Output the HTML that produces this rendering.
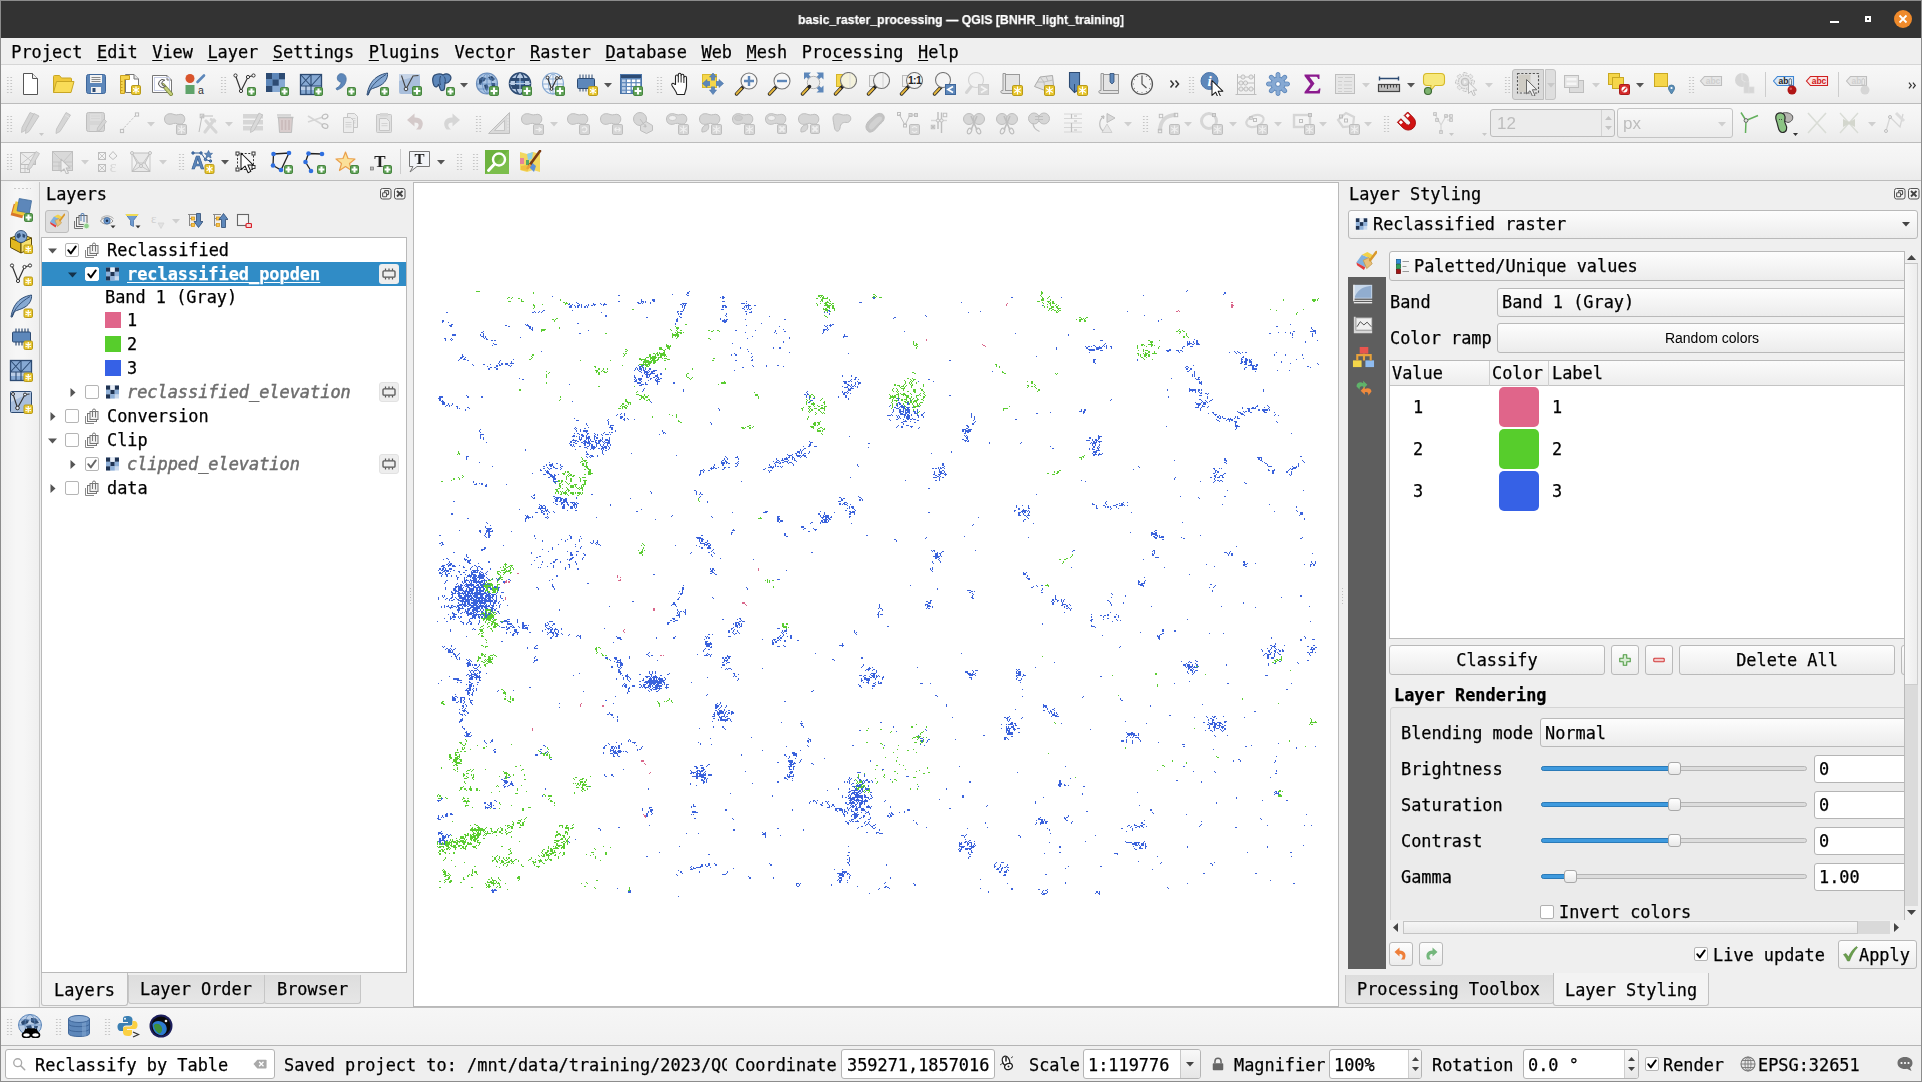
<!DOCTYPE html><html><head><meta charset="utf-8"><title>QGIS</title><style>
html,body{margin:0;padding:0}
body{width:1922px;height:1082px;position:relative;overflow:hidden;background:#efefef;font-family:"DejaVu Sans Mono","Liberation Mono",monospace;font-size:16.9px;-webkit-text-stroke:0.25px;color:#000}
div,svg.i{position:absolute;box-sizing:border-box}
.t{white-space:pre;will-change:transform}
.hv{width:7px;background-image:radial-gradient(circle,#c6c6c6 0.55px,transparent 0.85px);background-size:3.5px 3px}
.hh{height:6px;background-image:radial-gradient(circle,#cbcbcb 0.6px,transparent 0.9px);background-size:4px 3px}
svg text{-webkit-text-stroke:0}
u{text-decoration:underline;text-underline-offset:2px;text-decoration-thickness:1px}
.btn{border:1px solid #b9b9b9;border-radius:3px;background:linear-gradient(#fdfdfd,#ececec)}
.inp{border:1px solid #b4b4b4;border-radius:3px;background:#fff}
.cb{border:1px solid #b0b0b0;background:#fff;border-radius:2px}
</style></head><body><div style="left:0px;top:0px;width:1922px;height:1082px;background:#8c8c8c"></div>
<div style="left:1px;top:1px;width:1920px;height:1080px;background:#efefef"></div>
<div style="left:1px;top:1px;width:1920px;height:37px;background:#333333"></div>
<div class="t" style="left:561px;top:0.5px;height:37px;line-height:37px;width:800px;text-align:center;color:#fff;font-family:'Liberation Sans',sans-serif;font-weight:bold;font-size:13.6px;transform:scaleX(0.903)">basic_raster_processing — QGIS [BNHR_light_training]</div>
<div style="left:1830px;top:21px;width:9px;height:2px;background:#fff"></div>
<div style="left:1865px;top:16px;width:6px;height:6px;border:2px solid #fff"></div>
<div style="left:1894px;top:10px;width:18px;height:18px;background:#ef8a2b;border-radius:9px"></div>
<svg class="i" style="left:1898px;top:14px" width="10" height="10" viewBox="0 0 10 10"><path d="M1.5 1.5L8.5 8.5M8.5 1.5L1.5 8.5" stroke="#fff" stroke-width="1.8"/></svg>
<div style="left:1px;top:38px;width:1920px;height:27px;background:#efefef"></div>
<div style="left:1px;top:64px;width:1920px;height:1px;background:#d6d6d6"></div>
<div class="t" style="left:4.3px;top:38.5px;height:27px;line-height:26px"><span style="padding:0 7.28px">Pro<u>j</u>ect</span><span style="padding:0 7.28px"><u>E</u>dit</span><span style="padding:0 7.28px"><u>V</u>iew</span><span style="padding:0 7.28px"><u>L</u>ayer</span><span style="padding:0 7.28px"><u>S</u>ettings</span><span style="padding:0 7.28px"><u>P</u>lugins</span><span style="padding:0 7.28px">Vect<u>o</u>r</span><span style="padding:0 7.28px"><u>R</u>aster</span><span style="padding:0 7.28px"><u>D</u>atabase</span><span style="padding:0 7.28px"><u>W</u>eb</span><span style="padding:0 7.28px"><u>M</u>esh</span><span style="padding:0 7.28px">Pro<u>c</u>essing</span><span style="padding:0 7.28px"><u>H</u>elp</span></div>
<div style="left:1px;top:103px;width:1920px;height:1px;background:#bcbcbc"></div>
<div style="left:1px;top:142px;width:1920px;height:1px;background:#bcbcbc"></div>
<div style="left:1px;top:180px;width:1920px;height:1px;background:#bcbcbc"></div>
<div style="left:1px;top:65px;width:1920px;height:38px;background:linear-gradient(#f7f7f7,#f3f3f3 50%,#ebebeb)"></div>
<div style="left:1px;top:104px;width:1920px;height:38px;background:linear-gradient(#f7f7f7,#f3f3f3 50%,#ebebeb)"></div>
<div style="left:1px;top:143px;width:1920px;height:37px;background:linear-gradient(#f7f7f7,#f3f3f3 50%,#ebebeb)"></div>
<div class="hv" style="left:5.5px;top:75.5px;height:18px"></div>
<div class="hv" style="left:220px;top:75.5px;height:18px"></div>
<div class="hv" style="left:655.5px;top:75.5px;height:18px"></div>
<div class="hv" style="left:1187.5px;top:75.5px;height:18px"></div>
<div class="hv" style="left:1503.5px;top:75.5px;height:18px"></div>
<div class="hv" style="left:1687.5px;top:75.5px;height:18px"></div>
<svg class="i" style="left:18.0px;top:72.0px;" width="24" height="24" viewBox="0 0 24 24"><path d="M5.5 1.5H14.5L19.5 6.5V22.5H5.5Z" fill="#fff" stroke="#555" stroke-width="1"/><path d="M14.5 1.5V6.5H19.5" fill="#eee" stroke="#555" stroke-width="1"/></svg>
<svg class="i" style="left:51.0px;top:72.0px;" width="24" height="24" viewBox="0 0 24 24"><path d="M2.5 20.5V4.5Q2.5 3.5 3.5 3.5H8.5L10.5 6H19.5Q20.5 6 20.5 7V9" fill="#f0c93a" stroke="#c8a624"/><path d="M2.5 20.5L5.5 9.5H23L20 20.5Z" fill="#f9dc58" stroke="#c8a624" stroke-linejoin="round"/></svg>
<svg class="i" style="left:84.0px;top:72.0px;" width="24" height="24" viewBox="0 0 24 24"><rect x="2.5" y="2.5" width="19" height="19" rx="2" fill="#5d87ba" stroke="#3f679b"/><rect x="6" y="3" width="12" height="8" fill="#f2f2f2"/><path d="M7.5 5.5H16.5M7.5 7.5H16.5M7.5 9.5H16.5" stroke="#8a8a8a" stroke-width="1"/><rect x="7" y="15" width="10" height="6" fill="#f2f2f2"/><rect x="8.5" y="16" width="3" height="4" fill="#2d4b73"/></svg>
<svg class="i" style="left:117.0px;top:72.0px;" width="24" height="24" viewBox="0 0 24 24"><path d="M8.5 2.5H17L21.5 7V20.5H8.5Z" fill="#fff" stroke="#777"/><path d="M17 2.5V7H21.5" fill="#e8e8e8" stroke="#777"/><path d="M3.5 3.5H12.5V7.5H7.5V21.5H3.5Z" fill="#f5d34a" stroke="#c8a020"/><path d="M3.5 9.5H5.5M3.5 12.5H5.5M3.5 15.5H5.5M3.5 18.5H5.5" stroke="#c8a020"/><rect x="14.5" y="13.5" width="9" height="9" rx="1.3" fill="#e8c62c" stroke="#b89a1c"/><path d="M19.0 14.6V21.4M16.042 16.3L21.958 19.7M16.042 19.7L21.958 16.3" stroke="#fff" stroke-width="1.2"/></svg>
<svg class="i" style="left:150.0px;top:72.0px;" width="24" height="24" viewBox="0 0 24 24"><path d="M2.5 3.5H17L21.5 8V20.5H2.5Z" fill="#fff" stroke="#777"/><path d="M17 3.5V8H21.5" fill="#e8e8e8" stroke="#777"/><rect x="4.500" y="5.500" width="15" height="13" fill="none" stroke="#c9cfe6"/><path d="M13 13L21 22" stroke="#7d8a3c" stroke-width="4" stroke-linecap="round"/><path d="M13 13L21 22" stroke="#c5cf7a" stroke-width="2.4" stroke-linecap="round"/><path d="M14.8 8.2A4 4 0 1 0 15.5 14.3L12.8 13.6L11.6 11.2L13.4 8.6Z" fill="#f4f4f4" stroke="#555" stroke-width="1"/></svg>
<svg class="i" style="left:183.0px;top:72.0px;" width="24" height="24" viewBox="0 0 24 24"><circle cx="7" cy="6.5" r="4.5" fill="#d9542c"/><path d="M14.5 10L21 3.5" stroke="#5d87ba" stroke-width="2.6" stroke-linecap="round"/><rect x="2.5" y="13" width="9" height="9" fill="#5fa36a"/><text x="15" y="21.5" font-family="Liberation Sans,sans-serif" font-size="10.5" fill="#333">a</text></svg>
<svg class="i" style="left:232.0px;top:72.0px;" width="24" height="24" viewBox="0 0 24 24"><path d="M3.5 3.5L9 19L16 5L21.500 3.500" fill="none" stroke="#333" stroke-width="1.2"/><circle cx="3.5" cy="3.5" r="1.6" fill="#fff" stroke="#333" stroke-width="1"/><circle cx="9" cy="19" r="1.6" fill="#fff" stroke="#333" stroke-width="1"/><circle cx="16" cy="5" r="1.6" fill="#fff" stroke="#333" stroke-width="1"/><circle cx="21.5" cy="3.5" r="1.6" fill="#fff" stroke="#333" stroke-width="1"/><rect x="15.5" y="15.5" width="8" height="8" rx="1.3" fill="#5fa257" stroke="#47853f"/><path d="M19.5 16.6V22.4M16.6 19.5H22.4" stroke="#fff" stroke-width="2.1"/></svg>
<svg class="i" style="left:265.0px;top:72.0px;" width="24" height="24" viewBox="0 0 24 24"><rect x="1" y="1" width="19" height="19" fill="#86a9d3"/><rect x="1" y="1" width="6.300" height="6.300" fill="#2d4b73"/><rect x="13.700" y="1" width="6.300" height="6.300" fill="#2d4b73"/><rect x="7.300" y="7.300" width="6.400" height="6.400" fill="#2d4b73"/><rect x="1" y="13.700" width="6.300" height="6.300" fill="#2d4b73"/><rect x="7.300" y="1" width="6.400" height="6.300" fill="#5d87ba"/><rect x="1" y="7.300" width="6.300" height="6.400" fill="#5d87ba"/><rect x="15.5" y="15.5" width="8" height="8" rx="1.3" fill="#5fa257" stroke="#47853f"/><path d="M19.5 16.6V22.4M16.6 19.5H22.4" stroke="#fff" stroke-width="2.1"/></svg>
<svg class="i" style="left:298.5px;top:72.0px;" width="24" height="24" viewBox="0 0 24 24"><rect x="1.500" y="2.500" width="21" height="20" fill="#86a9d3" stroke="#2d4b73" stroke-width="1.3"/><rect x="2" y="14" width="20" height="4" fill="#b9cde6"/><path d="M12 2.500V22.500M1.500 14H22.500M7 14V22.500M1.500 2.500L12 14M12 2.500L1.500 14M22.500 2.500L12 14" stroke="#2d4b73" stroke-width="1.1" fill="none"/><rect x="15.5" y="15.5" width="8" height="8" rx="1.3" fill="#5fa257" stroke="#47853f"/><path d="M19.5 16.6V22.4M16.6 19.5H22.4" stroke="#fff" stroke-width="2.1"/></svg>
<svg class="i" style="left:331.5px;top:72.0px;" width="24" height="24" viewBox="0 0 24 24"><path d="M7.500 2C12 0.500 15 4 14 9C13 13.500 9.500 16.500 5 18L4 16.500C7.500 14.500 9 12.500 9.200 10C5.500 10.500 3.500 4.500 7.500 2Z" fill="#5d87ba" stroke="#46709f" stroke-width=".8"/><rect x="15.5" y="15.5" width="8" height="8" rx="1.3" fill="#5fa257" stroke="#47853f"/><path d="M19.5 16.6V22.4M16.6 19.5H22.4" stroke="#fff" stroke-width="2.1"/></svg>
<svg class="i" style="left:364.5px;top:72.0px;" width="24" height="24" viewBox="0 0 24 24"><path d="M2 23C3 16 6 9 12 5C16 2.300 20 1.500 22.500 1C23 5 21 10 16 13C12 15.500 8 16 5.500 17.500L3.200 23Z" fill="#86a9d3" stroke="#2d4b73" stroke-width="1"/><path d="M3 22C6 14 12 8 21 2.500" fill="none" stroke="#2d4b73" stroke-width=".9"/><rect x="15.5" y="15.5" width="8" height="8" rx="1.3" fill="#5fa257" stroke="#47853f"/><path d="M19.5 16.6V22.4M16.6 19.5H22.4" stroke="#fff" stroke-width="2.1"/></svg>
<svg class="i" style="left:397.5px;top:72.0px;" width="24" height="24" viewBox="0 0 24 24"><rect x="1" y="2" width="21" height="20" rx="2" fill="#a9bfdc"/><path d="M1 9L22 3V2H1Z" fill="#c7d5e8"/><path d="M3.500 3.500L8 17L15 4L20.500 3.500" fill="none" stroke="#444" stroke-width="1.1"/><circle cx="8" cy="17" r="1.8" fill="#dfe7f2" stroke="#444" stroke-width="1"/><rect x="14.5" y="14.5" width="9" height="9" rx="1.3" fill="#5fa257" stroke="#47853f"/><path d="M19.0 15.6V22.4M15.6 19.0H22.4" stroke="#fff" stroke-width="2.1"/></svg>
<svg class="i" style="left:430.5px;top:72.0px;" width="24" height="24" viewBox="0 0 24 24"><path d="M5 2.500C1 3.500 1 9 3 13.500C4.500 16 7 15 7.500 12L9 16.500C9.500 19.500 13.500 19 13.500 16L14 11C18 12 22 6 18.500 3C16 1 13.500 2 12 3C10 1.500 7 1.700 5 2.500Z" fill="#5d87ba" stroke="#2d4b73" stroke-width="1.200"/><path d="M9.500 4C8.500 7 8.500 10 9.500 13M13 4.500C14.500 6 14.500 9 14 11" fill="none" stroke="#2d4b73" stroke-width="1"/><rect x="15.5" y="15.5" width="8" height="8" rx="1.3" fill="#5fa257" stroke="#47853f"/><path d="M19.5 16.6V22.4M16.6 19.5H22.4" stroke="#fff" stroke-width="2.1"/></svg>
<svg class="i" style="left:474.5px;top:72.0px;" width="24" height="24" viewBox="0 0 24 24"><circle cx="12" cy="11.500" r="10.500" fill="#a9c4e4" stroke="#6d8fbc" stroke-width="1.200"/><path d="M4 7L7 5L11 6L9.500 9L7 10L6 13L4 12ZM13 5L17 4L20 7L18 9L15 8ZM9 13L12 12L13.500 15L12 19L10 17ZM16 11L20 11L20.500 15L17.500 16Z" fill="#2d4b73"/><ellipse cx="12" cy="11.5" rx="4.5" ry="10" fill="none" stroke="#5d87ba" stroke-width="0.7"/><path d="M2 12H22M3.5 7H20.5M3.5 17H20.5M12 2V22" stroke="#5d87ba" stroke-width="0.7" fill="none"/><rect x="14.5" y="14.5" width="9" height="9" rx="1.3" fill="#5fa257" stroke="#47853f"/><path d="M19.0 15.6V22.4M15.6 19.0H22.4" stroke="#fff" stroke-width="2.1"/></svg>
<svg class="i" style="left:507.5px;top:72.0px;" width="24" height="24" viewBox="0 0 24 24"><circle cx="12" cy="11.500" r="10.500" fill="#b9cde6" stroke="#2d4b73" stroke-width="1.600"/><path d="M3 6H21V9H2ZM2.500 13H21.500V17H4.500Z" fill="#2d4b73"/><path d="M8 9H16V13H8Z" fill="#5d87ba"/><ellipse cx="12" cy="11.500" rx="4.500" ry="10.500" fill="none" stroke="#2d4b73" stroke-width="1.300"/><path d="M12 1V22M1.500 11.500H22.500" stroke="#b9cde6" stroke-width="1"/><rect x="14.5" y="14.5" width="9" height="9" rx="1.3" fill="#5fa257" stroke="#47853f"/><path d="M19.0 15.6V22.4M15.6 19.0H22.4" stroke="#fff" stroke-width="2.1"/></svg>
<svg class="i" style="left:540.5px;top:72.0px;" width="24" height="24" viewBox="0 0 24 24"><circle cx="12" cy="11.500" r="10.500" fill="#eef3f9" stroke="#86a9d3" stroke-width="1.100"/><ellipse cx="12" cy="12" rx="4.5" ry="10" fill="none" stroke="#86a9d3" stroke-width="0.9"/><path d="M2 12H22M3.5 7H20.5M3.5 17H20.5M12 2V22" stroke="#86a9d3" stroke-width="0.9" fill="none"/><path d="M6.500 5.500L10.500 17L16 6L19.500 5.500" fill="none" stroke="#333" stroke-width="1.200"/><circle cx="6.5" cy="5.5" r="1.4" fill="#fff" stroke="#333" stroke-width="1"/><circle cx="10.5" cy="17" r="1.4" fill="#fff" stroke="#333" stroke-width="1"/><circle cx="16" cy="6" r="1.4" fill="#fff" stroke="#333" stroke-width="1"/><circle cx="19.5" cy="5.5" r="1.4" fill="#fff" stroke="#333" stroke-width="1"/><rect x="14.5" y="14.5" width="9" height="9" rx="1.3" fill="#5fa257" stroke="#47853f"/><path d="M19.0 15.6V22.4M15.6 19.0H22.4" stroke="#fff" stroke-width="2.1"/></svg>
<svg class="i" style="left:574.0px;top:72.0px;" width="24" height="24" viewBox="0 0 24 24"><path d="M6 2.500V6M9 2.500V6M12 2.500V6M15 2.500V6M18 2.500V6M6 16V19.500M9 16V19.500M12 16V19.500M15 16V19.500" stroke="#2d4b73" stroke-width="1"/><rect x="3.500" y="6.500" width="17" height="10" rx="1" fill="#5d87ba" stroke="#2d4b73"/><rect x="14.5" y="14.5" width="9" height="9" rx="1.3" fill="#e8c62c" stroke="#b89a1c"/><path d="M19.0 15.6V22.4M16.042 17.3L21.958 20.7M16.042 20.7L21.958 17.3" stroke="#fff" stroke-width="1.2"/></svg>
<svg class="i" style="left:619.0px;top:72.0px;" width="24" height="24" viewBox="0 0 24 24"><rect x="1.500" y="2.500" width="21" height="19" fill="#5d87ba" stroke="#4a74a8"/><path d="M2 3H22V6H2Z" fill="#2d4b73"/><g fill="#fff"><rect x="8" y="7.500" width="3.600" height="2.600"/><rect x="12.800" y="7.500" width="3.600" height="2.600"/><rect x="17.600" y="7.500" width="3.600" height="2.600"/><rect x="8" y="11.300" width="3.600" height="2.600"/><rect x="12.800" y="11.300" width="3.600" height="2.600"/><rect x="17.600" y="11.300" width="3.600" height="2.600"/><rect x="8" y="15.100" width="3.600" height="2.600"/><rect x="12.800" y="15.100" width="3.600" height="2.600"/><rect x="8" y="18.700" width="3.600" height="2.300"/></g><g fill="#b9cde6"><rect x="3" y="7.500" width="3.600" height="2.600"/><rect x="3" y="11.300" width="3.600" height="2.600"/><rect x="3" y="15.100" width="3.600" height="2.600"/><rect x="3" y="18.700" width="3.600" height="2.300"/></g><rect x="14.5" y="14.5" width="9" height="9" rx="1.3" fill="#5fa257" stroke="#47853f"/><path d="M19.0 15.6V22.4M15.6 19.0H22.4" stroke="#fff" stroke-width="2.1"/></svg>
<svg class="i" style="left:668.0px;top:72.0px;" width="24" height="24" viewBox="0 0 24 24"><path d="M7.500 12.500V4.500Q7.500 3 9 3Q10.300 3 10.300 4.500V2.800Q10.300 1.300 11.700 1.300Q13.100 1.300 13.100 2.800V3.500Q13.100 2.200 14.500 2.200Q15.900 2.200 15.900 3.800V5.500Q15.900 4.300 17.200 4.300Q18.500 4.300 18.500 5.800V14C18.500 18 17 19.500 16.500 22.500H9C8.500 19.500 6 17 4 13.500C3 11.500 5 10.500 6.300 12Z" fill="#fff" stroke="#222" stroke-width="1.100" stroke-linejoin="round"/><path d="M10.300 4.500V10.500M13.100 3.500V10.500M15.900 5.500V11" stroke="#222" stroke-width="1" fill="none"/></svg>
<svg class="i" style="left:701.0px;top:72.0px;" width="24" height="24" viewBox="0 0 24 24"><rect x="1.500" y="2.500" width="14" height="13" fill="#f5d64a" stroke="#d9b92e"/><path d="M12 1L15.500 5H13.500V9.500H18V7.500L22.500 11.500L18 15.500V13.500H13.500V18H15.500L12 22.500L8.500 18H10.500V13.500H6V15.500L1.500 11.500L6 7.500V9.500H10.500V5H8.500Z" fill="#5d87ba" stroke="#4a74a8" stroke-width=".6"/><rect x="9" y="8.500" width="6" height="6" fill="#f5d64a"/></svg>
<svg class="i" style="left:734.0px;top:72.0px;" width="24" height="24" viewBox="0 0 24 24"><path d="M9.5 14.5L2.5 22" stroke="#222" stroke-width="3.4" stroke-linecap="round"/><path d="M7.4 16.6L2.6 21.8" stroke="#e3b53c" stroke-width="2.1" stroke-linecap="round"/><circle cx="15" cy="9" r="8" fill="#f7f7f7" stroke="#777" stroke-width="1.1"/><path d="M15 4V14M10 9H20" stroke="#5d87ba" stroke-width="2.400"/></svg>
<svg class="i" style="left:767.0px;top:72.0px;" width="24" height="24" viewBox="0 0 24 24"><path d="M9.5 14.5L2.5 22" stroke="#222" stroke-width="3.4" stroke-linecap="round"/><path d="M7.4 16.6L2.6 21.8" stroke="#e3b53c" stroke-width="2.1" stroke-linecap="round"/><circle cx="15" cy="9" r="8" fill="#f7f7f7" stroke="#777" stroke-width="1.1"/><path d="M10 9H20" stroke="#5d87ba" stroke-width="2.400"/></svg>
<svg class="i" style="left:800.0px;top:72.0px;" width="24" height="24" viewBox="0 0 24 24"><path d="M4 0.500H11L8.700 2.800L11.500 5.600L9.100 8L6.300 5.200L4 7.500ZM23.500 0.500V7.500L21.200 5.200L18.400 8L16 5.600L18.800 2.800L16.500 0.500ZM23.500 20.500H16.500L18.800 18.200L16 15.400L18.400 13L21.200 15.800L23.500 13.500Z" fill="#5d87ba"/><circle cx="13.500" cy="10.500" r="6.200" fill="#ededed" stroke="#aaa" stroke-width=".9"/><path d="M9.5 14.5L2.5 22" stroke="#222" stroke-width="3.4" stroke-linecap="round"/><path d="M7.4 16.6L2.6 21.8" stroke="#e3b53c" stroke-width="2.1" stroke-linecap="round"/></svg>
<svg class="i" style="left:833.0px;top:72.0px;" width="24" height="24" viewBox="0 0 24 24"><rect x="3.500" y="2.500" width="9" height="12" fill="#f5d64a" stroke="#d4b42c"/><path d="M9.5 14.5L2.5 22" stroke="#222" stroke-width="3.4" stroke-linecap="round"/><path d="M7.4 16.6L2.6 21.8" stroke="#e3b53c" stroke-width="2.1" stroke-linecap="round"/><circle cx="15.5" cy="8.5" r="8" fill="#f4f2dc" stroke="#777" stroke-width="1.1"/><path d="M17 1.500V15.500" stroke="#ddd" stroke-width="1"/></svg>
<svg class="i" style="left:866.0px;top:72.0px;" width="24" height="24" viewBox="0 0 24 24"><rect x="3.500" y="3.500" width="9" height="11" fill="#f0f0f0" stroke="#bbb"/><path d="M9.5 14.5L2.5 22" stroke="#222" stroke-width="3.4" stroke-linecap="round"/><path d="M7.4 16.6L2.6 21.8" stroke="#e3b53c" stroke-width="2.1" stroke-linecap="round"/><circle cx="15.5" cy="8.5" r="8" fill="#f2f2f2" stroke="#777" stroke-width="1.1"/><path d="M17 1.500V15.500" stroke="#d2d2d2" stroke-width="1"/></svg>
<svg class="i" style="left:899.0px;top:72.0px;" width="24" height="24" viewBox="0 0 24 24"><rect x="3.500" y="3.500" width="9" height="11" fill="#f0f0f0" stroke="#bbb"/><path d="M9.5 14.5L2.5 22" stroke="#222" stroke-width="3.4" stroke-linecap="round"/><path d="M7.4 16.6L2.6 21.8" stroke="#e3b53c" stroke-width="2.1" stroke-linecap="round"/><circle cx="15.5" cy="8.5" r="8" fill="#f4f4f4" stroke="#777" stroke-width="1.1"/><text x="15.5" y="12.300" text-anchor="middle" font-family="Liberation Sans,sans-serif" font-weight="bold" font-size="10.500" fill="#222" letter-spacing="-.7">1:1</text></svg>
<svg class="i" style="left:932.0px;top:72.0px;" width="24" height="24" viewBox="0 0 24 24"><path d="M9.5 14.5L2.5 22" stroke="#222" stroke-width="3.4" stroke-linecap="round"/><path d="M7.4 16.6L2.6 21.8" stroke="#e3b53c" stroke-width="2.1" stroke-linecap="round"/><circle cx="11" cy="8" r="7.5" fill="#f4f4f4" stroke="#777" stroke-width="1.1"/><rect x="13.500" y="12.500" width="10" height="10" fill="#5d87ba" stroke="#3f679b"/><path d="M21 14.500L16 17.500L21 20.500" fill="none" stroke="#fff" stroke-width="1.800"/></svg>
<svg class="i" style="left:965.0px;top:72.0px;" width="24" height="24" viewBox="0 0 24 24"><path d="M7 13.500L1.500 20.500" stroke="#d4d4d4" stroke-width="3" stroke-linecap="round"/><circle cx="11" cy="8" r="7.500" fill="#f2f2f2" stroke="#d2d2d2" stroke-width="1.100"/><rect x="13.500" y="12.500" width="10" height="10" fill="#d6d6d6" stroke="#cdcdcd"/><path d="M16 14.500L21 17.500L16 20.500" fill="none" stroke="#f4f4f4" stroke-width="1.800"/></svg>
<svg class="i" style="left:999.5px;top:72.0px;" width="24" height="24" viewBox="0 0 24 24"><path d="M3 1.500H5.500V18.500H19.500V21.500H3Q0.800 21.500 0.800 19.500Q0.800 18.300 3 18.500Z" fill="#e2e2e2" stroke="#999" stroke-width="1"/><rect x="5.500" y="2.500" width="14" height="16" fill="#e4e4e4" stroke="#999"/><rect x="12.5" y="13.5" width="10" height="10" rx="1.3" fill="#e8c62c" stroke="#b89a1c"/><path d="M17.5 14.6V22.4M14.107 16.55L20.893 20.45M14.107 20.45L20.893 16.55" stroke="#fff" stroke-width="1.2"/></svg>
<svg class="i" style="left:1032.0px;top:72.0px;" width="24" height="24" viewBox="0 0 24 24"><path d="M2.500 14.500L8 5L20.500 3.500L21.500 13L13 18.500Z" fill="#e0e0e0" stroke="#aaa" stroke-width="1"/><path d="M8 5L12 10L21 8M12 10L13 18.500M5 10L12 10M14 4.500L16 9" fill="none" stroke="#b5b5b5" stroke-width=".8"/><rect x="12.5" y="13.5" width="10" height="10" rx="1.3" fill="#e8c62c" stroke="#b89a1c"/><path d="M17.5 14.6V22.4M14.107 16.55L20.893 20.45M14.107 20.45L20.893 16.55" stroke="#fff" stroke-width="1.2"/></svg>
<svg class="i" style="left:1065.0px;top:72.0px;" width="24" height="24" viewBox="0 0 24 24"><path d="M4.500 0.500H14.500V17L9.500 20.500L4.500 15Z" fill="#5d87ba" stroke="#2d4b73" stroke-width="1.100"/><path d="M9.500 20.500V12" stroke="#2d4b73" stroke-width="1"/><rect x="12.5" y="13.5" width="10" height="10" rx="1.3" fill="#e8c62c" stroke="#b89a1c"/><path d="M17.5 14.6V22.4M14.107 16.55L20.893 20.45M14.107 20.45L20.893 16.55" stroke="#fff" stroke-width="1.2"/></svg>
<svg class="i" style="left:1097.5px;top:72.0px;" width="24" height="24" viewBox="0 0 24 24"><path d="M3 1.500H5.500V18.500H20.500V21.500H3Q0.800 21.500 0.800 19.500Q0.800 18.300 3 18.500Z" fill="#e2e2e2" stroke="#999" stroke-width="1"/><rect x="5.500" y="2.500" width="15" height="16" fill="#e4e4e4" stroke="#999"/><path d="M12 1.500H16V10L14 12L12 10Z" fill="#5d87ba" stroke="#2d4b73" stroke-width=".8"/></svg>
<svg class="i" style="left:1130.0px;top:72.0px;" width="24" height="24" viewBox="0 0 24 24"><circle cx="12" cy="12" r="10.500" fill="#f4f4f4" stroke="#555" stroke-width="1.200"/><path d="M12 4V12L16.500 16" fill="none" stroke="#555" stroke-width="1.200"/><g stroke="#888" stroke-width="1"><path d="M12 2.500V4M12 20V21.500M2.500 12H4M20 12H21.500M7.200 3.800L7.900 5M16.800 3.800L16.100 5M3.800 7.200L5 7.900M20.200 7.200L19 7.900M3.800 16.800L5 16.100M20.200 16.800L19 16.100M7.200 20.200L7.900 19M16.800 20.200L16.100 19"/></g></svg>
<svg class="i" style="left:1162.5px;top:72.0px;" width="24" height="24" viewBox="0 0 24 24"><path d="M7.500 8.500L10.500 12L7.500 15.500M12.500 8.500L15.500 12L12.500 15.500" fill="none" stroke="#333" stroke-width="1.500"/></svg>
<svg class="i" style="left:1200.0px;top:72.0px;" width="24" height="24" viewBox="0 0 24 24"><circle cx="9.500" cy="9" r="8.500" fill="#5d87ba" stroke="#4a74a8"/><text x="9.500" y="14" text-anchor="middle" font-family="Liberation Serif,serif" font-style="italic" font-weight="bold" font-size="15" fill="#fff">i</text><g transform="translate(12,8.5) scale(1.3)"><path d="M0 0L0 11.5L2.8 9L4.9 13.6L6.8 12.7L4.7 8.2L8.3 8.2Z" fill="#fff" stroke="#111" stroke-width="0.77" stroke-linejoin="round"/></g></svg>
<svg class="i" style="left:1233.5px;top:72.0px;" width="24" height="24" viewBox="0 0 24 24"><path d="M3.500 2V22M20.500 2V22M1.500 22.500H22.500M3.500 5H20.500M3.500 11H20.500M3.500 17H20.500" stroke="#bebebe" fill="none"/><circle cx="9" cy="5" r="2.1" fill="#e9e9e9" stroke="#bebebe" stroke-width="1"/><circle cx="17" cy="5" r="2.1" fill="#e9e9e9" stroke="#bebebe" stroke-width="1"/><circle cx="7" cy="11" r="2.1" fill="#e9e9e9" stroke="#bebebe" stroke-width="1"/><circle cx="11.5" cy="11" r="2.1" fill="#e9e9e9" stroke="#bebebe" stroke-width="1"/><circle cx="7" cy="17" r="2.1" fill="#e9e9e9" stroke="#bebebe" stroke-width="1"/><circle cx="12" cy="17" r="2.1" fill="#e9e9e9" stroke="#bebebe" stroke-width="1"/><circle cx="17" cy="17" r="2.1" fill="#e9e9e9" stroke="#bebebe" stroke-width="1"/></svg>
<svg class="i" style="left:1266.0px;top:72.0px;" width="24" height="24" viewBox="0 0 24 24"><g transform="translate(12,12)"><g fill="#86a9d3" stroke="#5d87ba" stroke-width="1"><rect x="-1.900" y="-11.500" width="3.800" height="7" rx="1.800" transform="rotate(0)"/><rect x="-1.900" y="-11.500" width="3.800" height="7" rx="1.800" transform="rotate(45)"/><rect x="-1.900" y="-11.500" width="3.800" height="7" rx="1.800" transform="rotate(90)"/><rect x="-1.900" y="-11.500" width="3.800" height="7" rx="1.800" transform="rotate(135)"/><rect x="-1.900" y="-11.500" width="3.800" height="7" rx="1.800" transform="rotate(180)"/><rect x="-1.900" y="-11.500" width="3.800" height="7" rx="1.800" transform="rotate(225)"/><rect x="-1.900" y="-11.500" width="3.800" height="7" rx="1.800" transform="rotate(270)"/><rect x="-1.900" y="-11.500" width="3.800" height="7" rx="1.800" transform="rotate(315)"/></g><circle r="7" fill="#86a9d3" stroke="#5d87ba" stroke-width="1"/><rect x="-1.400" y="-10.800" width="2.800" height="6" rx="1.400" fill="#86a9d3" transform="rotate(0)"/><rect x="-1.400" y="-10.800" width="2.800" height="6" rx="1.400" fill="#86a9d3" transform="rotate(45)"/><rect x="-1.400" y="-10.800" width="2.800" height="6" rx="1.400" fill="#86a9d3" transform="rotate(90)"/><rect x="-1.400" y="-10.800" width="2.800" height="6" rx="1.400" fill="#86a9d3" transform="rotate(135)"/><rect x="-1.400" y="-10.800" width="2.800" height="6" rx="1.400" fill="#86a9d3" transform="rotate(180)"/><rect x="-1.400" y="-10.800" width="2.800" height="6" rx="1.400" fill="#86a9d3" transform="rotate(225)"/><rect x="-1.400" y="-10.800" width="2.800" height="6" rx="1.400" fill="#86a9d3" transform="rotate(270)"/><rect x="-1.400" y="-10.800" width="2.800" height="6" rx="1.400" fill="#86a9d3" transform="rotate(315)"/><circle r="2.400" fill="#fff" stroke="#5d87ba" stroke-width="1"/></g></svg>
<svg class="i" style="left:1299.5px;top:72.0px;" width="24" height="24" viewBox="0 0 24 24"><path d="M4.500 2.500H19.500V7H18C17.800 5.300 17 4.800 15.500 4.800H9.500L14.500 11.500L9 19H16C17.800 19 18.600 18.200 19 16.500H20.500L19.800 21.500H4.500V20L10.500 12L4.500 4Z" fill="#8b1a8e"/></svg>
<svg class="i" style="left:1332.5px;top:72.0px;" width="24" height="24" viewBox="0 0 24 24"><rect x="2.500" y="2.500" width="19" height="19" fill="#e6e6e6" stroke="#bebebe"/><path d="M5 5.500H10M12 5.500H19M5 9.500H9M11 9.500H19M5 13H9M11 13H19M5 16.500H9M11 16.500H19M5 19.500H9M11 19.500H19" stroke="#cfcfcf" stroke-width="1.200"/></svg>
<svg class="i" style="left:1377.0px;top:73.0px;" width="24" height="24" viewBox="0 0 24 24"><path d="M2 5.500H22M2.500 3.500V7.500M21.500 3.500V7.500" stroke="#2d4b73" stroke-width="1.400"/><rect x="1.500" y="11.500" width="21" height="7" fill="#bdbdbd" stroke="#444" stroke-width="1.200"/><path d="M4.500 12V14.500M7.500 12V14.500M10.500 12V16M13.500 12V14.500M16.500 12V14.500M19.500 12V14.500" stroke="#444" stroke-width="1"/></svg>
<svg class="i" style="left:1422.0px;top:72.0px;" width="24" height="24" viewBox="0 0 24 24"><path d="M5 1.500H19Q22.500 1.500 22.500 5V10Q22.500 13.500 19 13.500H13L8 19.500L9 13.500H5Q1.500 13.500 1.500 10V5Q1.500 1.500 5 1.500Z" fill="#f7e87c" stroke="#d6b928" stroke-width="1.100"/><circle cx="6" cy="19" r="3.500" fill="#7db36f" stroke="#3f6b35" stroke-width="1.200"/></svg>
<svg class="i" style="left:1455.0px;top:72.0px;" width="24" height="24" viewBox="0 0 24 24"><g transform="translate(10,10)"><rect x="-2" y="-9.500" width="4" height="5" rx="1" fill="#e9e9e9" stroke="#bebebe" stroke-width=".9" stroke-dasharray="1.500 1" transform="rotate(0)"/><rect x="-2" y="-9.500" width="4" height="5" rx="1" fill="#e9e9e9" stroke="#bebebe" stroke-width=".9" stroke-dasharray="1.500 1" transform="rotate(45)"/><rect x="-2" y="-9.500" width="4" height="5" rx="1" fill="#e9e9e9" stroke="#bebebe" stroke-width=".9" stroke-dasharray="1.500 1" transform="rotate(90)"/><rect x="-2" y="-9.500" width="4" height="5" rx="1" fill="#e9e9e9" stroke="#bebebe" stroke-width=".9" stroke-dasharray="1.500 1" transform="rotate(135)"/><rect x="-2" y="-9.500" width="4" height="5" rx="1" fill="#e9e9e9" stroke="#bebebe" stroke-width=".9" stroke-dasharray="1.500 1" transform="rotate(180)"/><rect x="-2" y="-9.500" width="4" height="5" rx="1" fill="#e9e9e9" stroke="#bebebe" stroke-width=".9" stroke-dasharray="1.500 1" transform="rotate(225)"/><rect x="-2" y="-9.500" width="4" height="5" rx="1" fill="#e9e9e9" stroke="#bebebe" stroke-width=".9" stroke-dasharray="1.500 1" transform="rotate(270)"/><rect x="-2" y="-9.500" width="4" height="5" rx="1" fill="#e9e9e9" stroke="#bebebe" stroke-width=".9" stroke-dasharray="1.500 1" transform="rotate(315)"/><circle r="6.500" fill="#e9e9e9" stroke="#bebebe" stroke-dasharray="1.500 1"/><circle r="3.800" fill="#d9d9d9" stroke="#bebebe"/><path d="M-1.200 -2L2 0L-1.200 2Z" fill="#f2f2f2"/></g><g transform="translate(13.5,10) scale(1)"><path d="M0 0L0 11.5L2.8 9L4.9 13.6L6.8 12.7L4.7 8.2L8.3 8.2Z" fill="#f2f2f2" stroke="#bebebe" stroke-width="1.0" stroke-linejoin="round"/></g></svg>
<svg class="i" style="left:459.5px;top:82.5px" width="8" height="5" viewBox="0 0 8 5"><path d="M0 0H8L4 4.5Z" fill="#555"/></svg>
<svg class="i" style="left:604px;top:82.5px" width="8" height="5" viewBox="0 0 8 5"><path d="M0 0H8L4 4.5Z" fill="#555"/></svg>
<svg class="i" style="left:1362px;top:82.5px" width="8" height="5" viewBox="0 0 8 5"><path d="M0 0H8L4 4.5Z" fill="#cfcfcf"/></svg>
<svg class="i" style="left:1407px;top:82.5px" width="8" height="5" viewBox="0 0 8 5"><path d="M0 0H8L4 4.5Z" fill="#555"/></svg>
<svg class="i" style="left:1485px;top:82.5px" width="8" height="5" viewBox="0 0 8 5"><path d="M0 0H8L4 4.5Z" fill="#cfcfcf"/></svg>
<div style="left:1512px;top:69px;width:32px;height:31px;border:1px solid #bdbdbd;border-radius:3px 0 0 3px;background:#dadada"></div>
<div style="left:1545px;top:69px;width:11px;height:31px;border:1px solid #c4c4c4;border-radius:0 3px 3px 0;background:#dedede"></div>
<svg class="i" style="left:1516.0px;top:72.0px;" width="24" height="24" viewBox="0 0 24 24"><rect x="1.500" y="1.500" width="21" height="19.500" fill="#e2e2e2" stroke="#555" stroke-width="1.100" stroke-dasharray="2.200 1.600"/><rect x="2.500" y="2.500" width="12" height="17.500" fill="#cfccc4"/><g transform="translate(10.5,7.5) scale(1.25)"><path d="M0 0L0 11.5L2.8 9L4.9 13.6L6.8 12.7L4.7 8.2L8.3 8.2Z" fill="#f0f0f0" stroke="#666" stroke-width="0.8" stroke-linejoin="round"/></g></svg>
<svg class="i" style="left:1546.5px;top:82.5px" width="8" height="5" viewBox="0 0 8 5"><path d="M0 0H8L4 4.5Z" fill="#c8c8c8"/></svg>
<svg class="i" style="left:1562.0px;top:72.0px;" width="24" height="24" viewBox="0 0 24 24"><rect x="7.500" y="8.500" width="14" height="12" fill="#dcdcdc" stroke="#bebebe"/><rect x="2.500" y="3.500" width="14" height="12" fill="#e4e4e4" stroke="#bebebe"/><rect x="4.500" y="6" width="10" height="2.500" fill="#f6f6f6"/><rect x="4.500" y="10.500" width="10" height="2.500" fill="#f6f6f6"/></svg>
<svg class="i" style="left:1592px;top:82.5px" width="8" height="5" viewBox="0 0 8 5"><path d="M0 0H8L4 4.5Z" fill="#cfcfcf"/></svg>
<svg class="i" style="left:1607.0px;top:72.0px;" width="24" height="24" viewBox="0 0 24 24"><rect x="1.500" y="1.500" width="11" height="11" fill="#f5d64a" stroke="#c9a822"/><rect x="5.500" y="5.500" width="11" height="11" fill="#f5d64a" stroke="#c9a822"/><rect x="12.500" y="12.500" width="10" height="10" rx="1" fill="#d42a2a" stroke="#a81c1c"/><circle cx="17.500" cy="17.500" r="3" fill="#fff"/><path d="M15.500 19.500L19.500 15.500" stroke="#d42a2a" stroke-width="1.300"/></svg>
<svg class="i" style="left:1636px;top:82.5px" width="8" height="5" viewBox="0 0 8 5"><path d="M0 0H8L4 4.5Z" fill="#555"/></svg>
<svg class="i" style="left:1652.0px;top:72.0px;" width="24" height="24" viewBox="0 0 24 24"><rect x="2.500" y="1.500" width="13" height="13" fill="#f5d64a" stroke="#c9a822"/><path d="M19.500 22C17 18.500 16.500 17.500 16.500 16A3 3 0 0 1 22.500 16C22.500 17.500 22 18.500 19.500 22Z" fill="#5b8fb8" stroke="#3e6e96" stroke-width=".8"/><circle cx="19.500" cy="16" r="1.100" fill="#fff"/></svg>
<svg class="i" style="left:1699.0px;top:72.0px;" width="24" height="24" viewBox="0 0 24 24"><path d="M5.5 4.500H22.500V13.500H5.5L1.5 9Z" fill="#e6e6e6" stroke="#bebebe" stroke-width="1.100"/><text x="14" y="12" text-anchor="middle" font-family="Liberation Sans,sans-serif" font-weight="bold" font-size="8.500" fill="#cfcfcf">abc</text></svg>
<svg class="i" style="left:1733.0px;top:72.0px;" width="24" height="24" viewBox="0 0 24 24"><circle cx="9" cy="8" r="7" fill="#d6d6d6"/><path d="M9 8V1M9 8L15 11.500" stroke="#e6e6e6" stroke-width="1"/><rect x="11" y="10" width="5" height="11" fill="#d6d6d6" stroke="#dcdcdc" stroke-width=".7"/><rect x="16" y="15" width="5" height="6" fill="#d6d6d6" stroke="#dcdcdc" stroke-width=".7"/></svg>
<div style="left:1765px;top:72px;width:1px;height:25px;background:#cdcdcd"></div>
<svg class="i" style="left:1773.0px;top:72.0px;" width="24" height="24" viewBox="0 0 24 24"><path d="M4.5 4.500H20.500V13.500H4.5L0.5 9Z" fill="#dbe8f7" stroke="#3f86d2" stroke-width="1.100"/><text x="10.5" y="12" text-anchor="middle" font-family="Liberation Sans,sans-serif" font-weight="bold" font-size="8.500" fill="#222">ab</text><path d="M16 8.500Q16 6.500 17.200 6.500Q18.400 6.500 18.400 8.500V13H16Z" fill="#fff" stroke="#345" stroke-width=".8"/><circle cx="19" cy="18" r="4.500" fill="#b01515"/><circle cx="17.800" cy="16.800" r="1.300" fill="#d85a5a"/></svg>
<svg class="i" style="left:1804.5px;top:72.0px;" width="24" height="24" viewBox="0 0 24 24"><path d="M5.5 4.500H22.500V13.500H5.5L1.5 9Z" fill="#fbe4e4" stroke="#cf2020" stroke-width="1.100"/><text x="14" y="12" text-anchor="middle" font-family="Liberation Sans,sans-serif" font-weight="bold" font-size="8.500" fill="#cf2020">abc</text></svg>
<div style="left:1838px;top:72px;width:1px;height:25px;background:#cdcdcd"></div>
<svg class="i" style="left:1846.0px;top:72.0px;" width="24" height="24" viewBox="0 0 24 24"><path d="M4.5 4.500H20.500V13.500H4.5L0.5 9Z" fill="#e6e6e6" stroke="#bebebe" stroke-width="1.100"/><text x="10.5" y="12" text-anchor="middle" font-family="Liberation Sans,sans-serif" font-weight="bold" font-size="8.500" fill="#cfcfcf">ab</text><circle cx="19" cy="18" r="4.500" fill="#d6d6d6"/><path d="M16 8.500Q16 6.500 17.200 6.500Q18.400 6.500 18.400 8.500V13H16Z" fill="#f0f0f0" stroke="#bebebe" stroke-width=".8"/></svg>
<svg class="i" style="left:1903.0px;top:75.5px;" width="19" height="19" viewBox="0 0 24 24"><path d="M7.500 8.500L10.500 12L7.500 15.500M12.500 8.500L15.500 12L12.500 15.500" fill="none" stroke="#333" stroke-width="1.500"/></svg>
<div class="hv" style="left:5.5px;top:114.5px;height:18px"></div>
<div class="hv" style="left:474.5px;top:114.5px;height:18px"></div>
<div class="hv" style="left:1141.5px;top:114.5px;height:18px"></div>
<div class="hv" style="left:1382.5px;top:114.5px;height:18px"></div>
<svg class="i" style="left:18.0px;top:111.0px;" width="24" height="24" viewBox="0 0 24 24"><path d="M12 1.500L17 3.500L8 19L3.500 21.500L4 16.500Z" fill="#d4d4d4" stroke="#bebebe" stroke-width=".8"/><path d="M16 2.500L21 5L11 20.500L7.500 22.500L8 17.500Z" fill="#d6d6d6" stroke="#bebebe" stroke-width=".8"/></svg>
<svg class="i" style="left:51.0px;top:111.0px;" width="24" height="24" viewBox="0 0 24 24"><path d="M15 1.500L19.500 4L9 20.500L5 22.500L5.500 18Z" fill="#d6d6d6" stroke="#bebebe" stroke-width=".8"/><path d="M14 4L18 6.500" stroke="#e2e2e2"/></svg>
<svg class="i" style="left:84.0px;top:111.0px;" width="24" height="24" viewBox="0 0 24 24"><rect x="2.500" y="1.500" width="18" height="19" rx="2" fill="#d6d6d6" stroke="#bebebe"/><rect x="6" y="3" width="11" height="7" fill="#dedede"/><path d="M7 5H16M7 7.500H16" stroke="#d6d6d6"/><rect x="6" y="14" width="9" height="6" fill="#dedede"/><path d="M20 8L22.500 10.500L16 19L13 20.500L13.500 17Z" fill="#d6d6d6" stroke="#bebebe" stroke-width=".8"/></svg>
<svg class="i" style="left:117.0px;top:111.0px;" width="24" height="24" viewBox="0 0 24 24"><path d="M5 19L19 4" stroke="#bebebe" stroke-width="1" stroke-dasharray="2 1.500"/><rect x="3.4" y="18.4" width="3.2" height="3.2" fill="none" stroke="#bebebe" stroke-width="1"/><rect x="18.4" y="1.9" width="3.2" height="3.2" fill="none" stroke="#bebebe" stroke-width="1"/></svg>
<svg class="i" style="left:162.5px;top:111.0px;" width="24" height="24" viewBox="0 0 24 24"><path d="M1.5 8C1.5 3 7 1.5 11 3.5C14 5 17 2 20 4C23 6.5 22 12 18.5 13C15 14 14 11.5 10.5 12.5C6 14.5 1.5 13 1.5 8Z" fill="#d6d6d6" stroke="#bebebe" stroke-width="1"/><rect x="13.5" y="13.5" width="10" height="10" rx="1.3" fill="#d6d6d6" stroke="#bebebe"/><path d="M18.5 14.6V22.4M15.107 16.55L21.893 20.45M15.107 20.45L21.893 16.55" stroke="#efefef" stroke-width="1.2"/></svg>
<svg class="i" style="left:196.0px;top:111.0px;" width="24" height="24" viewBox="0 0 24 24"><path d="M6 5L3 21M6 5H17" stroke="#bebebe" fill="none"/><rect x="4.2" y="3.2" width="3.6" height="3.6" fill="none" stroke="#bebebe" stroke-width="1"/><circle cx="6" cy="5" r=".8" fill="#bebebe"/><path d="M10 10L20 21M18 9L9 21" stroke="#d6d6d6" stroke-width="3.200" stroke-linecap="round"/><path d="M14 8L20 10.500" stroke="#d6d6d6" stroke-width="2.500"/></svg>
<svg class="i" style="left:240.5px;top:111.0px;" width="24" height="24" viewBox="0 0 24 24"><rect x="2" y="3" width="20" height="4.500" fill="#d6d6d6"/><rect x="2" y="9" width="20" height="4.500" fill="#d6d6d6"/><rect x="2" y="15" width="20" height="4.500" fill="#d6d6d6"/><path d="M18 2L21.500 4L13 19.500L9.500 21.500L10 17.500Z" fill="#d9d9d9" stroke="#bebebe" stroke-width=".8"/></svg>
<svg class="i" style="left:272.5px;top:111.0px;" width="24" height="24" viewBox="0 0 24 24"><path d="M4 5.500H18V3H4Z" fill="#d6d6d6"/><path d="M5.500 6.500H19.500L18.500 21.500H6.500Z" fill="#d9cdcd" stroke="#bebebe"/><path d="M4.500 6.500H20.500" stroke="#bebebe" stroke-width="1.500"/><path d="M9 9V19M12.500 9V19M16 9V19" stroke="#c9baba" stroke-width="1.600"/></svg>
<svg class="i" style="left:306.0px;top:111.0px;" width="24" height="24" viewBox="0 0 24 24"><path d="M2 5L17 14M2 11L17 6" stroke="#d6d6d6" stroke-width="1.800"/><ellipse cx="19" cy="5.500" rx="3" ry="2.200" fill="none" stroke="#bebebe" stroke-width="1.200" transform="rotate(-25 19 5.500)"/><ellipse cx="19" cy="15" rx="3" ry="2.200" fill="none" stroke="#bebebe" stroke-width="1.200" transform="rotate(25 19 15)"/></svg>
<svg class="i" style="left:339.0px;top:111.0px;" width="24" height="24" viewBox="0 0 24 24"><path d="M8.5 2.5H15.5L18.5 5.5V16.5H8.5Z" fill="#ececec" stroke="#c6c6c6"/><path d="M10.5 7.5H16.5" stroke="#d0d0d0" stroke-width=".9"/><path d="M10.5 9.7H16.5" stroke="#d0d0d0" stroke-width=".9"/><path d="M10.5 11.9H16.5" stroke="#d0d0d0" stroke-width=".9"/><path d="M4.5 6.5H11.5L14.5 9.5V21.5H4.5Z" fill="#ececec" stroke="#c6c6c6"/><path d="M6.5 11.5H12.5" stroke="#d0d0d0" stroke-width=".9"/><path d="M6.5 13.7H12.5" stroke="#d0d0d0" stroke-width=".9"/><path d="M6.5 15.9H12.5" stroke="#d0d0d0" stroke-width=".9"/></svg>
<svg class="i" style="left:372.0px;top:111.0px;" width="24" height="24" viewBox="0 0 24 24"><rect x="4.500" y="3.500" width="15" height="18" rx="1" fill="#e0e0e0" stroke="#c6c6c6"/><rect x="8" y="2" width="8" height="3.500" fill="#d6d6d6"/><path d="M7.5 7.5H14.5L17.5 10.5V19.5H7.5Z" fill="#ececec" stroke="#c6c6c6"/><path d="M9.5 12.5H15.5" stroke="#d0d0d0" stroke-width=".9"/><path d="M9.5 14.7H15.5" stroke="#d0d0d0" stroke-width=".9"/></svg>
<svg class="i" style="left:405.0px;top:111.0px;" width="24" height="24" viewBox="0 0 24 24"><path d="M2 9L9.500 2.500V6.500C18 6.500 20 13 15.500 18.500H11C15 15 14.500 11.500 9.500 11.500V15.500Z" fill="#d4caca"/></svg>
<svg class="i" style="left:438.0px;top:111.0px;" width="24" height="24" viewBox="0 0 24 24"><path d="M22 9L14.500 2.500V6.500C6 6.500 4 13 8.500 18.500H13C9 15 9.500 11.500 14.500 11.500V15.500Z" fill="#d6d6d6"/></svg>
<svg class="i" style="left:487.0px;top:111.0px;" width="24" height="24" viewBox="0 0 24 24"><path d="M1.500 22.500L22.500 1.500V22.500Z" fill="#d9d9d9" stroke="#bebebe"/><path d="M7.500 19.500L17.500 9.500V19.500Z" fill="#ececec" stroke="#bebebe" stroke-width=".8"/><path d="M20 6H22M20 9H22M20 12H22M20 15H22M20 18H22" stroke="#efefef" stroke-width=".8"/></svg>
<svg class="i" style="left:520.0px;top:111.0px;" width="24" height="24" viewBox="0 0 24 24"><path d="M1.5 8C1.5 3 7 1.5 11 3.5C14 5 17 2 20 4C23 6.5 22 12 18.5 13C15 14 14 11.5 10.5 12.5C6 14.5 1.5 13 1.5 8Z" fill="#d6d6d6" stroke="#bebebe" stroke-width="1"/><rect x="13.500" y="13.500" width="10" height="10" rx="1.300" fill="#d6d6d6" stroke="#bebebe"/><path d="M15.500 18.500H19V16.500L22 18.500L19 20.500V18.500" fill="#efefef" stroke="#efefef" stroke-width="1"/></svg>
<svg class="i" style="left:566.0px;top:111.0px;" width="24" height="24" viewBox="0 0 24 24"><path d="M1.5 8C1.5 3 7 1.5 11 3.5C14 5 17 2 20 4C23 6.5 22 12 18.5 13C15 14 14 11.5 10.5 12.5C6 14.5 1.5 13 1.5 8Z" fill="#d6d6d6" stroke="#bebebe" stroke-width="1"/><rect x="13.500" y="13.500" width="10" height="10" rx="1.300" fill="#d6d6d6" stroke="#bebebe"/><path d="M16.500 20A2.500 2.500 0 1 0 16 17.500" fill="none" stroke="#efefef" stroke-width="1.300"/></svg>
<svg class="i" style="left:598.5px;top:111.0px;" width="24" height="24" viewBox="0 0 24 24"><path d="M1.5 8C1.5 3 7 1.5 11 3.5C14 5 17 2 20 4C23 6.5 22 12 18.5 13C15 14 14 11.5 10.5 12.5C6 14.5 1.5 13 1.5 8Z" fill="#d6d6d6" stroke="#bebebe" stroke-width="1"/><rect x="13.500" y="13.500" width="10" height="10" rx="1.300" fill="#d6d6d6" stroke="#bebebe"/><path d="M15.500 18.500H21.500M15.500 18.500L17.500 16.500M15.500 18.500L17.500 20.500M21.500 18.500L19.500 16.500M21.500 18.500L19.500 20.500" stroke="#efefef" stroke-width="1.200" fill="none"/></svg>
<svg class="i" style="left:632.0px;top:111.0px;" width="24" height="24" viewBox="0 0 24 24"><circle cx="8" cy="8" r="6.500" fill="#d6d6d6" stroke="#bebebe"/><path d="M14 10.500L20.500 14.500V19.500L14.500 22.500L8.500 19.500V14.500Z" fill="#dcdcdc" stroke="#bebebe"/><path d="M8 8L14 16M14 16L11.500 15.500M14 16L13.500 13.500" stroke="#bebebe" fill="none"/></svg>
<svg class="i" style="left:664.5px;top:111.0px;" width="24" height="24" viewBox="0 0 24 24"><path d="M1.5 8C1.5 3 7 1.5 11 3.5C14 5 17 2 20 4C23 6.5 22 12 18.5 13C15 14 14 11.5 10.5 12.5C6 14.5 1.5 13 1.5 8Z" fill="#d6d6d6" stroke="#bebebe" stroke-width="1"/><ellipse cx="7.500" cy="7" rx="4" ry="2.600" fill="#efefef" stroke="#c2c2c2" stroke-width=".8"/><rect x="13.5" y="13.5" width="10" height="10" rx="1.3" fill="#d6d6d6" stroke="#bebebe"/><path d="M18.5 14.6V22.4M15.107 16.55L21.893 20.45M15.107 20.45L21.893 16.55" stroke="#efefef" stroke-width="1.2"/></svg>
<svg class="i" style="left:697.5px;top:111.0px;" width="24" height="24" viewBox="0 0 24 24"><path d="M1.5 8C1.5 3 7 1.5 11 3.5C14 5 17 2 20 4C23 6.5 22 12 18.5 13C15 14 14 11.5 10.5 12.5C6 14.5 1.5 13 1.5 8Z" fill="#d6d6d6" stroke="#bebebe" stroke-width="1"/><path d="M4 21C3 17 6 13.500 10.500 13.500C11.500 17 10 21 4 21Z" fill="#d6d6d6" stroke="#bebebe"/><rect x="13.5" y="13.5" width="10" height="10" rx="1.3" fill="#d6d6d6" stroke="#bebebe"/><path d="M18.5 14.6V22.4M15.107 16.55L21.893 20.45M15.107 20.45L21.893 16.55" stroke="#efefef" stroke-width="1.2"/></svg>
<svg class="i" style="left:731.0px;top:111.0px;" width="24" height="24" viewBox="0 0 24 24"><path d="M1.5 8C1.5 3 7 1.5 11 3.5C14 5 17 2 20 4C23 6.5 22 12 18.5 13C15 14 14 11.5 10.5 12.5C6 14.5 1.5 13 1.5 8Z" fill="#d6d6d6" stroke="#bebebe" stroke-width="1"/><ellipse cx="7.500" cy="7" rx="4" ry="2.600" fill="#cccccc" stroke="#c2c2c2" stroke-width=".8"/><rect x="13.5" y="13.5" width="10" height="10" rx="1.3" fill="#d6d6d6" stroke="#bebebe"/><path d="M18.5 14.6V22.4M15.107 16.55L21.893 20.45M15.107 20.45L21.893 16.55" stroke="#efefef" stroke-width="1.2"/></svg>
<svg class="i" style="left:763.5px;top:111.0px;" width="24" height="24" viewBox="0 0 24 24"><path d="M1.5 8C1.5 3 7 1.5 11 3.5C14 5 17 2 20 4C23 6.5 22 12 18.5 13C15 14 14 11.5 10.5 12.5C6 14.5 1.5 13 1.5 8Z" fill="#d6d6d6" stroke="#bebebe" stroke-width="1"/><ellipse cx="7.500" cy="7" rx="4" ry="2.600" fill="#efefef" stroke="#c2c2c2" stroke-width=".8"/><rect x="13.5" y="13.5" width="9" height="9" rx="1.3" fill="#d6d6d6" stroke="#bebebe"/><path d="M15.5 15.5L20.5 20.5M20.5 15.5L15.5 20.5" stroke="#efefef" stroke-width="1.8"/></svg>
<svg class="i" style="left:796.5px;top:111.0px;" width="24" height="24" viewBox="0 0 24 24"><path d="M1.5 8C1.5 3 7 1.5 11 3.5C14 5 17 2 20 4C23 6.5 22 12 18.5 13C15 14 14 11.5 10.5 12.5C6 14.5 1.5 13 1.5 8Z" fill="#d6d6d6" stroke="#bebebe" stroke-width="1"/><path d="M4 21C3 17 6 13.500 10.500 13.500C11.500 17 10 21 4 21Z" fill="#d6d6d6" stroke="#bebebe"/><rect x="13.5" y="13.5" width="9" height="9" rx="1.3" fill="#d6d6d6" stroke="#bebebe"/><path d="M15.5 15.5L20.5 20.5M20.5 15.5L15.5 20.5" stroke="#efefef" stroke-width="1.8"/></svg>
<svg class="i" style="left:829.5px;top:111.0px;" width="24" height="24" viewBox="0 0 24 24"><path d="M3 7C3 3 8 2 11 3.500C14 5 17 2.500 19.500 4.500C22 7 20.500 11 17.500 11.500C13 11 10.500 12 10 17C9.500 21 5.500 21.500 4.500 17C4 13 3 10 3 7Z" fill="#d6d6d6" stroke="#bebebe"/></svg>
<svg class="i" style="left:862.5px;top:111.0px;" width="24" height="24" viewBox="0 0 24 24"><path d="M4 19C1 15 5 10 9 7C12 3 17 1 20 3.500C23 7 20 11 17 13C14 16 12 20 8 21C6 21.500 5 20.500 4 19Z" fill="#c4c4c4" stroke="#bebebe"/><path d="M6.500 17.500C5 14.500 8 11.500 11 9C13.500 6 16.500 4.500 18.500 6C20 8.500 17.500 10.500 15 12.500C12.500 15 11 17.500 8.500 18.500C7.500 18.800 7 18.500 6.500 17.500Z" fill="#d2d2d2"/></svg>
<svg class="i" style="left:896.0px;top:111.0px;" width="24" height="24" viewBox="0 0 24 24"><path d="M3 3L9 14L14 4H21" fill="none" stroke="#bebebe" stroke-width="1"/><rect x="1.5" y="1.5" width="3" height="3" fill="none" stroke="#bebebe" stroke-width="1"/><rect x="7.5" y="13.0" width="3" height="3" fill="none" stroke="#bebebe" stroke-width="1"/><rect x="13.0" y="2.5" width="3" height="3" fill="none" stroke="#bebebe" stroke-width="1"/><rect x="18.5" y="2.5" width="3" height="3" fill="none" stroke="#bebebe" stroke-width="1"/><rect x="13.500" y="13.500" width="10" height="10" rx="1.300" fill="#d6d6d6" stroke="#bebebe"/><path d="M16 17A3 3 0 0 1 21 17M21 20A3 3 0 0 1 16 20" fill="none" stroke="#efefef" stroke-width="1.300"/></svg>
<svg class="i" style="left:928.5px;top:111.0px;" width="24" height="24" viewBox="0 0 24 24"><path d="M9 1V18M12.500 1.500V22" stroke="#bebebe" stroke-width="1.400"/><path d="M2 9.500H18" stroke="#d6d6d6" stroke-width="1.400"/><circle cx="9" cy="9.5" r="1.6" fill="#efefef" stroke="#bebebe" stroke-width="1"/><circle cx="12.5" cy="9.5" r="1.6" fill="#efefef" stroke="#bebebe" stroke-width="1"/><rect x="14.25" y="2.25" width="3.5" height="3.5" fill="none" stroke="#bebebe" stroke-width="1"/><rect x="2.25" y="14.25" width="3.5" height="3.5" fill="none" stroke="#bebebe" stroke-width="1"/><path d="M2.500 14.500L5.500 17.500M5.500 14.500L2.500 17.500" stroke="#bebebe"/></svg>
<svg class="i" style="left:961.5px;top:111.0px;" width="24" height="24" viewBox="0 0 24 24"><circle cx="7" cy="8" r="5.500" fill="#d6d6d6" stroke="#bebebe"/><circle cx="17" cy="8" r="5.500" fill="#d6d6d6" stroke="#bebebe"/><path d="M9 5L15 19M15 5L9 19" stroke="#bebebe" stroke-width="1.600"/><ellipse cx="7.500" cy="20" rx="2" ry="3" fill="none" stroke="#bebebe" stroke-width="1.200" transform="rotate(25 7.500 20)"/><ellipse cx="16.500" cy="20" rx="2" ry="3" fill="none" stroke="#bebebe" stroke-width="1.200" transform="rotate(-25 16.500 20)"/></svg>
<svg class="i" style="left:994.5px;top:111.0px;" width="24" height="24" viewBox="0 0 24 24"><circle cx="7" cy="8" r="5.500" fill="#d6d6d6" stroke="#bebebe"/><circle cx="17" cy="8" r="5.500" fill="#d6d6d6" stroke="#bebebe"/><path d="M9 5L15 19M15 5L9 19" stroke="#bebebe" stroke-width="1.600"/><ellipse cx="7.500" cy="20" rx="2" ry="3" fill="none" stroke="#bebebe" stroke-width="1.200" transform="rotate(25 7.500 20)"/><ellipse cx="16.500" cy="20" rx="2" ry="3" fill="none" stroke="#bebebe" stroke-width="1.200" transform="rotate(-25 16.500 20)"/></svg>
<svg class="i" style="left:1027.0px;top:111.0px;" width="24" height="24" viewBox="0 0 24 24"><circle cx="7" cy="7.500" r="5.500" fill="#d6d6d6" stroke="#bebebe"/><circle cx="17" cy="7.500" r="5.500" fill="#d6d6d6" stroke="#bebebe"/><path d="M8 5.500H16M8 8.500H16" stroke="#bebebe"/><path d="M6 12C6 16 9 19 12.500 20.500" stroke="#bebebe" fill="none" stroke-width="1.200"/></svg>
<svg class="i" style="left:1060.5px;top:111.0px;" width="24" height="24" viewBox="0 0 24 24"><path d="M3 3H21M3 7.500H21M3 12H21M3 16.500H21M3 21H21" stroke="#d6d6d6" stroke-width="1"/><path d="M10.500 3V7.500M13 5H16M10.500 12V16.500M13 10H16M10.500 16.500V21M13 19H16" stroke="#bebebe" stroke-width="1.200"/></svg>
<svg class="i" style="left:1093.5px;top:111.0px;" width="24" height="24" viewBox="0 0 24 24"><path d="M13 2.500L21 7L13 11.500Z" fill="#d9d9d9" stroke="#bebebe"/><path d="M13 13L18 21.500H8Z" fill="#e6e6e6" stroke="#d0d0d0"/><path d="M9 20C4.500 16 4.500 9 10 5M10 5L7 5.500M10 5L9.500 8" fill="none" stroke="#bebebe" stroke-width="1.200"/></svg>
<svg class="i" style="left:1155.5px;top:111.0px;" width="24" height="24" viewBox="0 0 24 24"><path d="M4 20C4 10 10 4 20 4" fill="none" stroke="#d6d6d6" stroke-width="4"/><rect x="2.3" y="18.3" width="3.4" height="3.4" fill="none" stroke="#bebebe" stroke-width="1"/><rect x="3.3" y="3.3" width="3.4" height="3.4" fill="none" stroke="#bebebe" stroke-width="1"/><rect x="18.3" y="2.3" width="3.4" height="3.4" fill="none" stroke="#bebebe" stroke-width="1"/><rect x="13.5" y="13.5" width="10" height="10" rx="1.3" fill="#d6d6d6" stroke="#bebebe"/><path d="M18.5 14.6V22.4M15.107 16.55L21.893 20.45M15.107 20.45L21.893 16.55" stroke="#efefef" stroke-width="1.2"/></svg>
<svg class="i" style="left:1199.0px;top:111.0px;" width="24" height="24" viewBox="0 0 24 24"><circle cx="10" cy="10" r="7.500" fill="none" stroke="#d6d6d6" stroke-width="3"/><rect x="13.5" y="2.5" width="3" height="3" fill="none" stroke="#bebebe" stroke-width="1"/><rect x="13.5" y="13.5" width="10" height="10" rx="1.3" fill="#d6d6d6" stroke="#bebebe"/><path d="M18.5 14.6V22.4M15.107 16.55L21.893 20.45M15.107 20.45L21.893 16.55" stroke="#efefef" stroke-width="1.2"/></svg>
<svg class="i" style="left:1244.0px;top:111.0px;" width="24" height="24" viewBox="0 0 24 24"><ellipse cx="11" cy="10" rx="9" ry="5.500" fill="none" stroke="#d6d6d6" stroke-width="2.200" transform="rotate(-20 11 10)"/><rect x="9.5" y="7.5" width="3" height="3" fill="none" stroke="#bebebe" stroke-width="1"/><rect x="5.75" y="5.75" width="2.5" height="2.5" fill="none" stroke="#bebebe" stroke-width="1"/><rect x="13.5" y="13.5" width="10" height="10" rx="1.3" fill="#d6d6d6" stroke="#bebebe"/><path d="M18.5 14.6V22.4M15.107 16.55L21.893 20.45M15.107 20.45L21.893 16.55" stroke="#efefef" stroke-width="1.2"/></svg>
<svg class="i" style="left:1290.5px;top:111.0px;" width="24" height="24" viewBox="0 0 24 24"><rect x="3" y="4" width="16" height="12" fill="none" stroke="#d6d6d6" stroke-width="2.400"/><rect x="8.5" y="8.5" width="3" height="3" fill="none" stroke="#bebebe" stroke-width="1"/><rect x="17.5" y="2.5" width="3" height="3" fill="none" stroke="#bebebe" stroke-width="1"/><rect x="13.5" y="13.5" width="10" height="10" rx="1.3" fill="#d6d6d6" stroke="#bebebe"/><path d="M18.5 14.6V22.4M15.107 16.55L21.893 20.45M15.107 20.45L21.893 16.55" stroke="#efefef" stroke-width="1.2"/></svg>
<svg class="i" style="left:1335.5px;top:111.0px;" width="24" height="24" viewBox="0 0 24 24"><path d="M10 2L18 6L17 15L7 16L2 9Z" fill="none" stroke="#d6d6d6" stroke-width="2.200"/><rect x="8.5" y="8.0" width="3" height="3" fill="none" stroke="#bebebe" stroke-width="1"/><rect x="3.5" y="4.0" width="3" height="3" fill="none" stroke="#bebebe" stroke-width="1"/><rect x="13.5" y="13.5" width="10" height="10" rx="1.3" fill="#d6d6d6" stroke="#bebebe"/><path d="M18.5 14.6V22.4M15.107 16.55L21.893 20.45M15.107 20.45L21.893 16.55" stroke="#efefef" stroke-width="1.2"/></svg>
<svg class="i" style="left:1395.5px;top:111.0px;" width="24" height="24" viewBox="0 0 24 24"><g transform="rotate(-45 12 12) translate(0,1)"><path d="M5 3H10V11A2.300 2.300 0 0 0 14.600 11V3H19.600V11A7.300 7.300 0 0 1 5 11Z" fill="#d11313" stroke="#a50d0d" stroke-width=".9"/><rect x="6" y="4" width="3" height="3" fill="#fff"/><rect x="15.600" y="4" width="3" height="3" fill="#fff"/></g></svg>
<svg class="i" style="left:1430.0px;top:111.0px;" width="24" height="24" viewBox="0 0 24 24"><path d="M5 3L11 14V21M11 14L16 5M16 5H21M17 9H21" fill="none" stroke="#d6d6d6" stroke-width="1.200"/><rect x="3.7" y="1.7" width="2.6" height="2.6" fill="none" stroke="#bebebe" stroke-width="1"/><rect x="9.7" y="19.7" width="2.6" height="2.6" fill="none" stroke="#bebebe" stroke-width="1"/><rect x="14.7" y="3.7" width="2.6" height="2.6" fill="none" stroke="#bebebe" stroke-width="1"/><rect x="19.7" y="3.7" width="2.6" height="2.6" fill="none" stroke="#bebebe" stroke-width="1"/><rect x="19.7" y="7.7" width="2.6" height="2.6" fill="none" stroke="#bebebe" stroke-width="1"/><rect x="5.7" y="7.7" width="2.6" height="2.6" fill="none" stroke="#bebebe" stroke-width="1"/></svg>
<svg class="i" style="left:1738.0px;top:111.0px;" width="24" height="24" viewBox="0 0 24 24"><path d="M8 9.500L3 1.500M8 9.500L20 4.500M8 9.500L7.500 22" stroke="#63b05c" stroke-width="1.500" fill="none"/><circle cx="8" cy="9.5" r="1.9" fill="#dfe8dc" stroke="#666" stroke-width="1"/></svg>
<svg class="i" style="left:1772.0px;top:111.0px;" width="24" height="24" viewBox="0 0 24 24"><path d="M11 2C14 1 19 2 20.500 5C21.500 8 19.500 11 16 11.500L12 10Z" fill="#b7b5b2" stroke="#555" stroke-width="1"/><path d="M5 3C8 1 12.500 2 13 5.500C13.500 8.500 11.500 10 13.500 13C16 17 14.500 21.500 10.500 21.500C6.500 21.500 6.500 17 5.500 13.500C4.500 9 2 6 5 3Z" fill="#8cc484" stroke="#2a2a2a" stroke-width="1.200"/><path d="M7 8.500H10" stroke="#333" stroke-width=".8" stroke-dasharray="1 1"/></svg>
<svg class="i" style="left:1805.0px;top:111.0px;" width="24" height="24" viewBox="0 0 24 24"><path d="M3 2L21 22M21 2L3 22" stroke="#d9dcd6" stroke-width="1.600"/></svg>
<svg class="i" style="left:1837.0px;top:111.0px;" width="24" height="24" viewBox="0 0 24 24"><path d="M3 2L21 22M21 2L3 22" stroke="#d9dcd6" stroke-width="1.400"/><path d="M6 8L12 11L18 8V16L12 13L6 16Z" fill="#d3d6cd"/></svg>
<svg class="i" style="left:1882.0px;top:111.0px;" width="24" height="24" viewBox="0 0 24 24"><path d="M4 20L8 6L18 16L21 3" fill="none" stroke="#d6d6d6" stroke-width="1.300"/><path d="M14 2L22 10" stroke="#dcdcdc" stroke-width="3"/><circle cx="8" cy="6" r="1.5" fill="#efefef" stroke="#bebebe" stroke-width="1"/><circle cx="4" cy="20" r="1.5" fill="#efefef" stroke="#bebebe" stroke-width="1"/></svg>
<svg class="i" style="left:147px;top:121.5px" width="8" height="5" viewBox="0 0 8 5"><path d="M0 0H8L4 4.5Z" fill="#cfcfcf"/></svg>
<svg class="i" style="left:225px;top:121.5px" width="8" height="5" viewBox="0 0 8 5"><path d="M0 0H8L4 4.5Z" fill="#cfcfcf"/></svg>
<svg class="i" style="left:550px;top:121.5px" width="8" height="5" viewBox="0 0 8 5"><path d="M0 0H8L4 4.5Z" fill="#cfcfcf"/></svg>
<svg class="i" style="left:1123.5px;top:121.5px" width="8" height="5" viewBox="0 0 8 5"><path d="M0 0H8L4 4.5Z" fill="#cfcfcf"/></svg>
<svg class="i" style="left:1184px;top:121.5px" width="8" height="5" viewBox="0 0 8 5"><path d="M0 0H8L4 4.5Z" fill="#cfcfcf"/></svg>
<svg class="i" style="left:1229px;top:121.5px" width="8" height="5" viewBox="0 0 8 5"><path d="M0 0H8L4 4.5Z" fill="#cfcfcf"/></svg>
<svg class="i" style="left:1274px;top:121.5px" width="8" height="5" viewBox="0 0 8 5"><path d="M0 0H8L4 4.5Z" fill="#cfcfcf"/></svg>
<svg class="i" style="left:1319px;top:121.5px" width="8" height="5" viewBox="0 0 8 5"><path d="M0 0H8L4 4.5Z" fill="#cfcfcf"/></svg>
<svg class="i" style="left:1364px;top:121.5px" width="8" height="5" viewBox="0 0 8 5"><path d="M0 0H8L4 4.5Z" fill="#cfcfcf"/></svg>
<svg class="i" style="left:1868px;top:121.5px" width="8" height="5" viewBox="0 0 8 5"><path d="M0 0H8L4 4.5Z" fill="#cfcfcf"/></svg>
<svg class="i" style="left:38.5px;top:132.5px" width="5" height="3" viewBox="0 0 5 3"><path d="M0 0H5L2.500 3Z" fill="#c8c8c8"/></svg>
<svg class="i" style="left:1448.5px;top:132.5px" width="5" height="3" viewBox="0 0 5 3"><path d="M0 0H5L2.500 3Z" fill="#c8c8c8"/></svg>
<svg class="i" style="left:1481.5px;top:132.5px" width="5" height="3" viewBox="0 0 5 3"><path d="M0 0H5L2.500 3Z" fill="#c8c8c8"/></svg>
<svg class="i" style="left:1793.0px;top:132.5px" width="5" height="3" viewBox="0 0 5 3"><path d="M0 0H5L2.500 3Z" fill="#333"/></svg>
<div style="left:1490px;top:109px;width:125px;height:28px;border:1px solid #bcbcbc;border-radius:3px;background:#ececec"></div>
<div style="left:1601px;top:110px;width:1px;height:26px;background:#d2d2d2"></div>
<svg class="i" style="left:1604.5px;top:115px" width="7" height="16" viewBox="0 0 7 16"><path d="M0 5H7L3.500 1Z M0 11H7L3.500 15Z" fill="#c4c4c4"/></svg>
<div class="t" style="left:1497px;top:110px;height:27px;line-height:27px;font-family:'Liberation Sans',sans-serif;font-size:17px;color:#bdbdbd;-webkit-text-stroke:0">12</div>
<div style="left:1617px;top:108px;width:116px;height:30px;border:1px solid #c4c4c4;border-radius:3px;background:linear-gradient(#f8f8f8,#ececec)"></div>
<div class="t" style="left:1623px;top:110px;height:27px;line-height:27px;font-family:'Liberation Sans',sans-serif;font-size:17px;color:#bdbdbd;-webkit-text-stroke:0">px</div>
<svg class="i" style="left:1718px;top:121.5px" width="8" height="5" viewBox="0 0 8 5"><path d="M0 0H8L4 4.5Z" fill="#cfcfcf"/></svg>
<div class="hv" style="left:5.5px;top:153px;height:18px"></div>
<div class="hv" style="left:177.5px;top:153px;height:18px"></div>
<div class="hv" style="left:456px;top:153px;height:18px"></div>
<div class="hv" style="left:472px;top:153px;height:18px"></div>
<svg class="i" style="left:18.0px;top:149.5px;" width="24" height="24" viewBox="0 0 24 24"><rect x="2.500" y="2.500" width="15" height="12" fill="#ececec" stroke="#bebebe"/><path d="M2.500 2.500L17.500 14.500M17.500 2.500L2.500 14.500" stroke="#bebebe" stroke-width=".8"/><rect x="2.500" y="14.500" width="9" height="8" fill="#ececec" stroke="#bebebe"/><path d="M2.500 18.500H11.500M7 14.500V22.500" stroke="#bebebe" stroke-width=".8"/><path d="M18 1.500L21.500 3.500L13 18L9.500 20L10 16Z" fill="#d9d9d9" stroke="#bebebe" stroke-width=".8"/></svg>
<svg class="i" style="left:51.0px;top:149.5px;" width="24" height="24" viewBox="0 0 24 24"><rect x="1.500" y="1.500" width="20" height="19" fill="#d9d9d9" stroke="#bebebe"/><path d="M1.500 1.500L12 12L21.500 1.500M1.500 12H21.500M8 12V20.500M14 12V20.500M1.500 16H21.500" stroke="#c2c2c2" stroke-width=".8" fill="none"/><g transform="translate(10,9) scale(1.1)"><path d="M0 0L0 11.5L2.8 9L4.9 13.6L6.8 12.7L4.7 8.2L8.3 8.2Z" fill="#efefef" stroke="#bebebe" stroke-width="0.91" stroke-linejoin="round"/></g></svg>
<svg class="i" style="left:95.5px;top:149.5px;" width="24" height="24" viewBox="0 0 24 24"><rect x="2.500" y="2.500" width="7" height="7" fill="none" stroke="#bebebe"/><path d="M2.500 2.500L9.500 9.500M9.500 2.500L2.500 9.500" stroke="#bebebe" stroke-width=".8"/><rect x="2.500" y="14.500" width="7" height="7" fill="none" stroke="#bebebe"/><path d="M2.500 14.500L9.500 21.500M9.500 14.500L2.500 21.500" stroke="#bebebe" stroke-width=".8"/><path d="M17 1.500L21 6L17 9.500L13 6Z" fill="none" stroke="#bebebe"/><text x="17" y="22" text-anchor="middle" font-family="Liberation Serif,serif" font-size="17" fill="#d6d6d6">ε</text></svg>
<svg class="i" style="left:129.0px;top:149.5px;" width="24" height="24" viewBox="0 0 24 24"><path d="M3 3L8 13L3 21.500H21L16 13L21 3Z" fill="#e8e8e8" stroke="#bebebe"/><path d="M3 3L12 16L21 3M8 13H16M12 16L3 21.500M12 16L21 21.500M3 3V21.500M21 3V21.500" stroke="#bebebe" stroke-width=".8" fill="none"/><circle cx="3" cy="3" r="1.5" fill="#efefef" stroke="#bebebe" stroke-width="1"/><circle cx="21" cy="3" r="1.5" fill="#efefef" stroke="#bebebe" stroke-width="1"/><circle cx="12" cy="16" r="1.5" fill="#efefef" stroke="#bebebe" stroke-width="1"/></svg>
<svg class="i" style="left:191.0px;top:149.5px;" width="24" height="24" viewBox="0 0 24 24"><text x="0.500" y="19" font-family="Liberation Sans,sans-serif" font-weight="bold" font-size="17.500" fill="#5d87ba" stroke="#2f5a92" stroke-width=".7">A</text><path d="M2 3H10L14.500 9.500L19 11" fill="none" stroke="#2f5a92" stroke-width="1"/><circle cx="2" cy="3" r="1.2" fill="#5d87ba" stroke="#2f5a92" stroke-width="1"/><circle cx="10" cy="3" r="1.2" fill="#5d87ba" stroke="#2f5a92" stroke-width="1"/><circle cx="14.5" cy="9.5" r="1.2" fill="#5d87ba" stroke="#2f5a92" stroke-width="1"/><circle cx="19.5" cy="11" r="1.2" fill="#5d87ba" stroke="#2f5a92" stroke-width="1"/><path d="M17.500 0.500L18.700 3.200L21.500 3.400L19.400 5.300L20 8L17.500 6.600L15 8L15.600 5.300L13.500 3.400L16.300 3.200Z" fill="#5d87ba" stroke="#2f5a92" stroke-width=".6"/><rect x="14.0" y="14.5" width="9" height="9" rx="1.3" fill="#e8c62c" stroke="#b89a1c"/><path d="M18.5 15.6V22.4M15.542 17.3L21.458 20.7M15.542 20.7L21.458 17.3" stroke="#fff" stroke-width="1.2"/></svg>
<svg class="i" style="left:234.0px;top:149.5px;" width="24" height="24" viewBox="0 0 24 24"><rect x="3.500" y="3.500" width="16" height="16" fill="none" stroke="#333" stroke-width="1" stroke-dasharray="2 1.600"/><rect x="2.0" y="2.0" width="3" height="3" fill="#fff" stroke="#333" stroke-width="1"/><rect x="18.0" y="2.0" width="3" height="3" fill="#fff" stroke="#333" stroke-width="1"/><rect x="2.0" y="18.0" width="3" height="3" fill="#fff" stroke="#333" stroke-width="1"/><rect x="18.0" y="15.5" width="3" height="3" fill="#fff" stroke="#333" stroke-width="1"/><g transform="translate(7,3) scale(1.45)"><path d="M0 0L0 11.5L2.8 9L4.9 13.6L6.8 12.7L4.7 8.2L8.3 8.2Z" fill="#fff" stroke="#111" stroke-width="0.69" stroke-linejoin="round"/></g></svg>
<svg class="i" style="left:269.0px;top:149.5px;" width="24" height="24" viewBox="0 0 24 24"><path d="M4.500 4L20 3L12 20L4 15.500Z" fill="none" stroke="#222" stroke-width="1.300"/><circle cx="4.5" cy="4" r="2.300" fill="#2f6fdf"/><circle cx="20" cy="3" r="2.300" fill="#2f6fdf"/><circle cx="12" cy="20" r="2.300" fill="#2f6fdf"/><circle cx="4" cy="15.5" r="2.300" fill="#2f6fdf"/><rect x="15.5" y="15.5" width="8" height="8" rx="1.3" fill="#5fa257" stroke="#47853f"/><path d="M19.5 16.6V22.4M16.6 19.5H22.4" stroke="#fff" stroke-width="2.1"/></svg>
<svg class="i" style="left:302.0px;top:149.5px;" width="24" height="24" viewBox="0 0 24 24"><path d="M20 4L6.500 3.500L3.500 12L9 21" fill="none" stroke="#222" stroke-width="1.300"/><circle cx="20" cy="4" r="2.300" fill="#2f6fdf"/><circle cx="6.5" cy="3.5" r="2.300" fill="#2f6fdf"/><circle cx="3.5" cy="12" r="2.300" fill="#2f6fdf"/><circle cx="9" cy="21" r="2.300" fill="#2f6fdf"/><rect x="15.5" y="15.5" width="8" height="8" rx="1.3" fill="#5fa257" stroke="#47853f"/><path d="M19.5 16.6V22.4M16.6 19.5H22.4" stroke="#fff" stroke-width="2.1"/></svg>
<svg class="i" style="left:335.0px;top:149.5px;" width="24" height="24" viewBox="0 0 24 24"><path d="M10.500 2L13 8.500L20 9L14.500 13.500L16.500 20.500L10.500 16.500L4.500 20.500L6.500 13.500L1 9L8 8.500Z" fill="#fbe19a" stroke="#eaa04c" stroke-width="1.200" stroke-linejoin="round"/><rect x="15.5" y="15.5" width="8" height="8" rx="1.3" fill="#5fa257" stroke="#47853f"/><path d="M19.5 16.6V22.4M16.6 19.5H22.4" stroke="#fff" stroke-width="2.1"/></svg>
<svg class="i" style="left:368.0px;top:149.5px;" width="24" height="24" viewBox="0 0 24 24"><text x="12" y="17" text-anchor="middle" font-family="Liberation Serif,serif" font-weight="bold" font-size="17" fill="#222">T</text><rect x="2.500" y="17" width="3" height="3" fill="#bbb" stroke="#777" stroke-width=".7"/><rect x="15.5" y="15.5" width="8" height="8" rx="1.3" fill="#5fa257" stroke="#47853f"/><path d="M19.5 16.6V22.4M16.6 19.5H22.4" stroke="#fff" stroke-width="2.1"/></svg>
<svg class="i" style="left:407.0px;top:149.5px;" width="24" height="24" viewBox="0 0 24 24"><path d="M2.500 1.500H22.500V16.500H10L3 22L6 16.500H2.500Z" fill="#f2f4f7" stroke="#777" stroke-width="1"/><text x="12.500" y="14" text-anchor="middle" font-family="Liberation Serif,serif" font-weight="bold" font-size="15" fill="#222">T</text></svg>
<svg class="i" style="left:485.0px;top:149.5px;" width="24" height="24" viewBox="0 0 24 24"><rect x="0" y="0" width="24" height="24" fill="#6db33f"/><path d="M0 24L24 0V24Z" fill="#86c455" opacity=".6"/><circle cx="14" cy="9.500" r="6" fill="none" stroke="#fff" stroke-width="2.400"/><path d="M9.500 14L3.500 20.500" stroke="#fff" stroke-width="3" stroke-linecap="round"/></svg>
<svg class="i" style="left:518.0px;top:149.5px;" width="24" height="24" viewBox="0 0 24 24"><path d="M2 2L9 4L15 2L22 4V22L15 20L9 22L2 20Z" fill="#f2d860"/><path d="M2 8H6V14H2Z" fill="#e6859a"/><path d="M9 4L15 2L14 9L10 10Z" fill="#8fd0e8"/><path d="M12 11L18 16L16 22L12 18Z" fill="#5b8fd8"/><path d="M3 16L9 15L10 21L3 20Z" fill="#f0c040"/><rect x="8" y="10" width="3" height="5" fill="#55a868"/><path d="M11 16L22 1" stroke="#7a3b12" stroke-width="2.600" stroke-linecap="round"/><path d="M9 19L12.500 14.500" stroke="#e9a23b" stroke-width="2.600"/></svg>
<svg class="i" style="left:81px;top:160.0px" width="8" height="5" viewBox="0 0 8 5"><path d="M0 0H8L4 4.5Z" fill="#cfcfcf"/></svg>
<svg class="i" style="left:159px;top:160.0px" width="8" height="5" viewBox="0 0 8 5"><path d="M0 0H8L4 4.5Z" fill="#cfcfcf"/></svg>
<svg class="i" style="left:220.5px;top:160.0px" width="8" height="5" viewBox="0 0 8 5"><path d="M0 0H8L4 4.5Z" fill="#555"/></svg>
<svg class="i" style="left:437px;top:160.0px" width="8" height="5" viewBox="0 0 8 5"><path d="M0 0H8L4 4.5Z" fill="#555"/></svg>
<div style="left:400px;top:149px;width:1px;height:25px;background:#cdcdcd"></div>
<div style="left:1px;top:182px;width:38px;height:825px;background:linear-gradient(90deg,#efefef 0,#f6f6f6 40%,#f6f6f6 60%,#efefef 100%)"></div>
<div style="left:39px;top:182px;width:1px;height:825px;background:#c8c8c8"></div>
<div class="hh" style="left:13px;top:187px;width:18px;height:4px"></div>
<svg class="i" style="left:9.0px;top:198.0px;" width="24" height="24" viewBox="0 0 24 24"><rect x="3" y="7" width="12" height="12" fill="#d8762c" transform="rotate(15 9 13)"/><rect x="5" y="4.500" width="12" height="12" fill="#f0c93a" transform="rotate(15 11 10)"/><rect x="9" y="1.500" width="12.500" height="12.500" fill="#5d87ba" stroke="#46709f" stroke-width=".8" transform="rotate(10 15 8)"/><rect x="15.5" y="15.5" width="8" height="8" rx="1.3" fill="#5fa257" stroke="#47853f"/><path d="M19.5 16.6V22.4M16.6 19.5H22.4" stroke="#fff" stroke-width="2.1"/></svg>
<svg class="i" style="left:9.0px;top:230.0px;" width="24" height="24" viewBox="0 0 24 24"><path d="M1.500 8L12 12.500V23L1.500 17.500Z" fill="#e2b81e" stroke="#5b4a08" stroke-width="1"/><path d="M12 12.500L22.500 8V17.500L12 23Z" fill="#f7e070" stroke="#5b4a08" stroke-width="1"/><path d="M1.500 8L12 4L22.500 8L12 12.500Z" fill="#f1cf3b" stroke="#5b4a08"/><circle cx="12" cy="6.500" r="6" fill="#86a9d3" stroke="#2d4b73" stroke-width=".9"/><path d="M8 4L11 3L12 6L9.500 8.500L7.500 7ZM13.500 3.500L16.500 5L15.500 8L13.500 7Z" fill="#2d4b73"/><rect x="15.0" y="15.0" width="8.5" height="8.5" rx="1.3" fill="#e8c62c" stroke="#b89a1c"/><path d="M19.25 16.1V22.4M16.5095 17.675L21.9905 20.825M16.5095 20.825L21.9905 17.675" stroke="#fff" stroke-width="1.2"/></svg>
<svg class="i" style="left:9.0px;top:262.0px;" width="24" height="24" viewBox="0 0 24 24"><path d="M3 3.500L9 19L15.500 5L21 3.500" fill="none" stroke="#333" stroke-width="1.200"/><circle cx="3" cy="3.5" r="1.6" fill="#fff" stroke="#333" stroke-width="1"/><circle cx="9" cy="19" r="1.6" fill="#fff" stroke="#333" stroke-width="1"/><circle cx="15.5" cy="5" r="1.6" fill="#fff" stroke="#333" stroke-width="1"/><circle cx="21" cy="3.5" r="1.6" fill="#fff" stroke="#333" stroke-width="1"/><rect x="15.0" y="15.0" width="8.5" height="8.5" rx="1.3" fill="#e8c62c" stroke="#b89a1c"/><path d="M19.25 16.1V22.4M16.5095 17.675L21.9905 20.825M16.5095 20.825L21.9905 17.675" stroke="#fff" stroke-width="1.2"/></svg>
<svg class="i" style="left:9.0px;top:294.0px;" width="24" height="24" viewBox="0 0 24 24"><path d="M2 23C3 16 6 9 12 5C16 2.300 20 1.500 22.500 1C23 5 21 10 16 13C12 15.500 8 16 5.500 17.500L3.200 23Z" fill="#86a9d3" stroke="#2d4b73" stroke-width="1"/><path d="M3 22C6 14 12 8 21 2.500" fill="none" stroke="#2d4b73" stroke-width=".9"/><rect x="15.0" y="15.0" width="8.5" height="8.5" rx="1.3" fill="#e8c62c" stroke="#b89a1c"/><path d="M19.25 16.1V22.4M16.5095 17.675L21.9905 20.825M16.5095 20.825L21.9905 17.675" stroke="#fff" stroke-width="1.2"/></svg>
<svg class="i" style="left:9.0px;top:326.0px;" width="24" height="24" viewBox="0 0 24 24"><path d="M7 2.500V6M10 2.500V6M13 2.500V6M16 2.500V6M19 2.500V6M7 16V19.500M10 16V19.500M13 16V19.500" stroke="#2d4b73" stroke-width="1.200"/><rect x="3.500" y="6" width="18" height="10" rx="1" fill="#5d87ba" stroke="#2d4b73"/><rect x="15.0" y="15.0" width="8.5" height="8.5" rx="1.3" fill="#e8c62c" stroke="#b89a1c"/><path d="M19.25 16.1V22.4M16.5095 17.675L21.9905 20.825M16.5095 20.825L21.9905 17.675" stroke="#fff" stroke-width="1.2"/></svg>
<svg class="i" style="left:9.0px;top:358.0px;" width="24" height="24" viewBox="0 0 24 24"><rect x="1.500" y="2.500" width="21" height="20" fill="#86a9d3" stroke="#2d4b73" stroke-width="1.3"/><rect x="2" y="14" width="20" height="4" fill="#b9cde6"/><path d="M12 2.500V22.500M1.500 14H22.500M7 14V22.500M1.500 2.500L12 14M12 2.500L1.500 14M22.500 2.500L12 14" stroke="#2d4b73" stroke-width="1.1" fill="none"/><rect x="15.0" y="15.0" width="8.5" height="8.5" rx="1.3" fill="#e8c62c" stroke="#b89a1c"/><path d="M19.25 16.1V22.4M16.5095 17.675L21.9905 20.825M16.5095 20.825L21.9905 17.675" stroke="#fff" stroke-width="1.2"/></svg>
<svg class="i" style="left:9.0px;top:390.0px;" width="24" height="24" viewBox="0 0 24 24"><rect x="1.500" y="1.500" width="21" height="21" rx="1" fill="#a9bfdc" stroke="#2d4b73" stroke-width="1"/><path d="M2 12L22 2H2Z" fill="#cbd8ea"/><path d="M4 4L8.500 18L16 4.500L20.500 4" fill="none" stroke="#333" stroke-width="1.100"/><circle cx="4" cy="4" r="1.5" fill="#e6edf6" stroke="#333" stroke-width="1"/><circle cx="16" cy="4.5" r="1.5" fill="#e6edf6" stroke="#333" stroke-width="1"/><circle cx="8.5" cy="18" r="1.8" fill="#e6edf6" stroke="#333" stroke-width="1"/><rect x="15.0" y="15.0" width="8.5" height="8.5" rx="1.3" fill="#e8c62c" stroke="#b89a1c"/><path d="M19.25 16.1V22.4M16.5095 17.675L21.9905 20.825M16.5095 20.825L21.9905 17.675" stroke="#fff" stroke-width="1.2"/></svg>
<div class="t" style="left:46px;top:183px;height:22px;line-height:22px;">Layers</div>
<svg class="i" style="left:380px;top:188px" width="26" height="12" viewBox="0 0 26 12"><rect x="0.5" y="0.5" width="10.5" height="10.5" rx="2" fill="#f4f4f4" stroke="#555"/><rect x="4.6" y="2.6" width="4" height="4" rx="0.8" fill="none" stroke="#555" stroke-width="1.1"/><rect x="2.6" y="4.8" width="4" height="4" rx="0.8" fill="#f4f4f4" stroke="#555" stroke-width="1.1"/><rect x="14.5" y="0.5" width="10.5" height="10.5" rx="2" fill="#f4f4f4" stroke="#555"/><path d="M17 3L22.5 8.5M22.5 3L17 8.5" stroke="#444" stroke-width="1.9"/></svg>
<div style="left:45px;top:210px;width:24px;height:23px;border:1px solid #bdbdbd;border-radius:3px;background:#dedede"></div>
<svg class="i" style="left:49.0px;top:213.0px;" width="16" height="16" viewBox="0 0 16 16"><path d="M1 9L5 3.500L11 6L7.500 12.500Z" fill="#7fb0e0"/><path d="M5 3.500L9 1.500L13.500 4L11 6Z" fill="#f2d24a"/><path d="M1 9L7.500 12.500L6.500 14.500L1.500 11Z" fill="#e23b3b"/><path d="M6 7.500L10 5.500L12.500 10L8.500 13.500Z" fill="#e8c07a" stroke="#c49a4c" stroke-width=".6"/><path d="M11 7.500L15.500 1.500" stroke="#d9982c" stroke-width="1.800" stroke-linecap="round"/></svg>
<svg class="i" style="left:74.0px;top:213.0px;" width="16" height="16" viewBox="0 0 16 16"><path d="M0.500 8V15.500H9" fill="none" stroke="#777" stroke-width="1"/><rect x="2.500" y="4.500" width="9" height="9" fill="#f4f4f4" stroke="#666"/><rect x="5" y="2.500" width="8" height="9" fill="#eee" stroke="#666"/><path d="M7 8V2Q7 0.500 8.500 0.500Q10 0.500 10 2V9" fill="none" stroke="#5b84b6" stroke-width="1.100"/><circle cx="12.500" cy="13" r="2.800" fill="#8fd08a" stroke="#e8f6e6" stroke-width=".8"/></svg>
<svg class="i" style="left:99.5px;top:213.0px;" width="16" height="16" viewBox="0 0 16 16"><path d="M0.500 8C3 3.500 10 3.500 13 8C10 12 3 12 0.500 8Z" fill="#f4f4f4" stroke="#888" stroke-width=".9"/><path d="M1 5.500C4 2 10 2 13.500 5.500" fill="none" stroke="#999" stroke-width=".8"/><circle cx="7" cy="7.800" r="3.200" fill="#6e9bd0" stroke="#3f679b" stroke-width=".7"/><circle cx="7" cy="7.800" r="1.300" fill="#1d2f4a"/><path d="M10.500 12.500H15.500L13 15.200Z" fill="#333"/></svg>
<svg class="i" style="left:125.0px;top:213.0px;" width="16" height="16" viewBox="0 0 16 16"><path d="M1 1.500H13L8.500 7.500V13.500L5.500 12V7.500Z" fill="#6e9bd0" stroke="#4a74a8" stroke-width=".8"/><path d="M1 1H13V3H1Z" fill="#f0dc58"/><path d="M10.500 12.500H15.500L13 15.200Z" fill="#333"/></svg>
<svg class="i" style="left:150.0px;top:213.0px;" width="16" height="16" viewBox="0 0 16 16"><text x="1" y="10" font-family="Liberation Serif,serif" font-size="13" fill="#cfcfcf">ε</text><path d="M8 10L14 10L11 15.500Z" fill="#e2e2e2" stroke="#d4d4d4" stroke-width=".8"/></svg>
<svg class="i" style="left:186.5px;top:213.0px;" width="16" height="16" viewBox="0 0 16 16"><path d="M1 1.500H9M2.500 1.500V13M2.500 5.500H5M2.500 12H5" stroke="#888" stroke-width="1" fill="none"/><rect x="4.500" y="4" width="3" height="3" fill="#f7c64a" stroke="#d99a1c" stroke-width=".8"/><rect x="4.500" y="10.500" width="3" height="3" fill="#f7c64a" stroke="#d99a1c" stroke-width=".8"/><path d="M9.500 0.500H13.500V8.500H16L11.500 14.500L7 8.500H9.500Z" fill="#5d87ba" stroke="#2d4b73" stroke-width=".8"/></svg>
<svg class="i" style="left:212.0px;top:213.0px;" width="16" height="16" viewBox="0 0 16 16"><path d="M1 1.500H9M2.500 1.500V13M2.500 5.500H5M2.500 12H5" stroke="#888" stroke-width="1" fill="none"/><rect x="4.500" y="4" width="3" height="3" fill="#f7c64a" stroke="#d99a1c" stroke-width=".8"/><rect x="4.500" y="10.500" width="3" height="3" fill="#f7c64a" stroke="#d99a1c" stroke-width=".8"/><path d="M9.500 14.500H13.500V6.500H16L11.500 0.500L7 6.500H9.500Z" fill="#5d87ba" stroke="#2d4b73" stroke-width=".8"/></svg>
<svg class="i" style="left:236.0px;top:213.0px;" width="16" height="16" viewBox="0 0 16 16"><rect x="1.500" y="1.500" width="11" height="11" fill="#f4f4f4" stroke="#666" stroke-width="1.100"/><rect x="10" y="10.500" width="5.500" height="4" rx="1" fill="#f6d6d6" stroke="#d8202a" stroke-width="1.200"/></svg>
<svg class="i" style="left:172px;top:218.5px" width="8" height="5" viewBox="0 0 8 5"><path d="M0 0H8L4 4.5Z" fill="#cfcfcf"/></svg>
<div style="left:41px;top:237px;width:366px;height:736px;border:1px solid #b9b9b9;background:#fff"></div>
<div style="left:42px;top:262px;width:364px;height:24px;background:#308cc6"></div>
<svg class="i" style="left:47.5px;top:247.5px" width="9" height="6" viewBox="0 0 9 6"><path d="M0 0.5H9L4.5 5.5Z" fill="#555"/></svg>
<div style="left:65px;top:243px;width:14px;height:14px;border:1px solid #b5b5b5;background:#fff;border-radius:2px"></div>
<svg class="i" style="left:65px;top:243px" width="14" height="14" viewBox="0 0 14 14"><path d="M3.2 7.2L5.8 10.4L10.8 3.4" fill="none" stroke="#000" stroke-width="1.9" stroke-linecap="round" stroke-linejoin="round"/></svg>
<svg class="i" style="left:85.0px;top:242.0px;" width="16" height="16" viewBox="0 0 16 16"><path d="M0.500 8V15.500H9" fill="none" stroke="#888" stroke-width="1"/><rect x="2.500" y="5.500" width="9" height="8" fill="#f7f7f7" stroke="#777"/><rect x="5" y="3.500" width="8" height="8" fill="#f0f0f0" stroke="#777"/><path d="M7.500 9V2.500Q7.500 1 9 1Q10.500 1 10.500 2.500V9.500" fill="none" stroke="#777" stroke-width="1"/></svg>
<div class="t" style="left:107px;top:238px;height:24px;line-height:24px;">Reclassified</div>
<svg class="i" style="left:67.5px;top:271.5px" width="9" height="6" viewBox="0 0 9 6"><path d="M0 0.5H9L4.5 5.5Z" fill="#14324a"/></svg>
<div style="left:85px;top:267px;width:14px;height:14px;border:1px solid #fff;background:#fff;border-radius:2px"></div>
<svg class="i" style="left:85px;top:267px" width="14" height="14" viewBox="0 0 14 14"><path d="M3.2 7.2L5.8 10.4L10.8 3.4" fill="none" stroke="#000" stroke-width="1.9" stroke-linecap="round" stroke-linejoin="round"/></svg>
<svg class="i" style="left:105.0px;top:266.0px;" width="16" height="16" viewBox="0 0 16 16"><rect x="1" y="1.500" width="13" height="13" fill="#c9d9ee"/><rect x="1" y="1.500" width="4.300" height="4.300" fill="#1f3352"/><rect x="9.700" y="1.500" width="4.300" height="4.300" fill="#1f3352"/><rect x="5.300" y="5.800" width="4.400" height="4.400" fill="#1f3352"/><rect x="1" y="10.200" width="4.300" height="4.300" fill="#1f3352"/><rect x="5.300" y="1.500" width="4.400" height="4.300" fill="#e8eef7"/><rect x="1" y="5.800" width="4.300" height="4.400" fill="#8fb0d8"/><rect x="9.700" y="5.800" width="4.300" height="4.400" fill="#8fb0d8"/><rect x="5.300" y="10.200" width="4.400" height="4.300" fill="#8fb0d8"/></svg>
<div class="t" style="left:127px;top:262px;height:24px;line-height:24px;color:#fff;font-weight:bold"><u>reclassified_popden</u></div>
<div style="left:379px;top:264px;width:20px;height:20px;background:#eeeeee;border-radius:3px"></div>
<svg class="i" style="left:382px;top:268px" width="14" height="12" viewBox="0 0 14 12"><rect x="1" y="2.8" width="12" height="6.4" rx="1" fill="none" stroke="#555" stroke-width="1.3"/><path d="M3.5 0.5V2.5M7 0.5V2.5M10.5 0.5V2.5M3.5 9.5V11.5M7 9.5V11.5M10.5 9.5V11.5" stroke="#555" stroke-width="1.2"/></svg>
<div class="t" style="left:105px;top:285px;height:24px;line-height:24px;">Band 1 (Gray)</div>
<div style="left:105px;top:312px;width:16px;height:16px;background:#e0658a"></div>
<div class="t" style="left:127px;top:308px;height:24px;line-height:24px;">1</div>
<div style="left:105px;top:336px;width:16px;height:16px;background:#57cd2c"></div>
<div class="t" style="left:127px;top:332px;height:24px;line-height:24px;">2</div>
<div style="left:105px;top:360px;width:16px;height:16px;background:#3661e6"></div>
<div class="t" style="left:127px;top:356px;height:24px;line-height:24px;">3</div>
<svg class="i" style="left:69.5px;top:387.5px" width="6" height="9" viewBox="0 0 6 9"><path d="M0.5 0V9L5.5 4.5Z" fill="#555"/></svg>
<div style="left:85px;top:385px;width:14px;height:14px;border:1px solid #b5b5b5;background:#fff;border-radius:2px"></div>
<svg class="i" style="left:105.0px;top:384.0px;" width="16" height="16" viewBox="0 0 16 16"><rect x="1" y="1.500" width="13" height="13" fill="#c9d9ee"/><rect x="1" y="1.500" width="4.300" height="4.300" fill="#1f3352"/><rect x="9.700" y="1.500" width="4.300" height="4.300" fill="#1f3352"/><rect x="5.300" y="5.800" width="4.400" height="4.400" fill="#1f3352"/><rect x="1" y="10.200" width="4.300" height="4.300" fill="#1f3352"/><rect x="5.300" y="1.500" width="4.400" height="4.300" fill="#e8eef7"/><rect x="1" y="5.800" width="4.300" height="4.400" fill="#8fb0d8"/><rect x="9.700" y="5.800" width="4.300" height="4.400" fill="#8fb0d8"/><rect x="5.300" y="10.200" width="4.400" height="4.300" fill="#8fb0d8"/></svg>
<div class="t" style="left:127px;top:380px;height:24px;line-height:24px;color:#6e6e6e;font-style:italic;-webkit-text-stroke:0.5px">reclassified_elevation</div>
<div style="left:379px;top:382px;width:20px;height:20px;background:#eeeeee;border-radius:3px;border:1px solid #e2e2e2"></div>
<svg class="i" style="left:382px;top:386px" width="14" height="12" viewBox="0 0 14 12"><rect x="1" y="2.8" width="12" height="6.4" rx="1" fill="none" stroke="#555" stroke-width="1.3"/><path d="M3.5 0.5V2.5M7 0.5V2.5M10.5 0.5V2.5M3.5 9.5V11.5M7 9.5V11.5M10.5 9.5V11.5" stroke="#555" stroke-width="1.2"/></svg>
<svg class="i" style="left:49.5px;top:411.5px" width="6" height="9" viewBox="0 0 6 9"><path d="M0.5 0V9L5.5 4.5Z" fill="#555"/></svg>
<div style="left:65px;top:409px;width:14px;height:14px;border:1px solid #b5b5b5;background:#fff;border-radius:2px"></div>
<svg class="i" style="left:85.0px;top:408.0px;" width="16" height="16" viewBox="0 0 16 16"><path d="M0.500 8V15.500H9" fill="none" stroke="#888" stroke-width="1"/><rect x="2.500" y="5.500" width="9" height="8" fill="#f7f7f7" stroke="#777"/><rect x="5" y="3.500" width="8" height="8" fill="#f0f0f0" stroke="#777"/><path d="M7.500 9V2.500Q7.500 1 9 1Q10.500 1 10.500 2.500V9.500" fill="none" stroke="#777" stroke-width="1"/></svg>
<div class="t" style="left:107px;top:404px;height:24px;line-height:24px;">Conversion</div>
<svg class="i" style="left:47.5px;top:437.5px" width="9" height="6" viewBox="0 0 9 6"><path d="M0 0.5H9L4.5 5.5Z" fill="#555"/></svg>
<div style="left:65px;top:433px;width:14px;height:14px;border:1px solid #b5b5b5;background:#fff;border-radius:2px"></div>
<svg class="i" style="left:85.0px;top:432.0px;" width="16" height="16" viewBox="0 0 16 16"><path d="M0.500 8V15.500H9" fill="none" stroke="#888" stroke-width="1"/><rect x="2.500" y="5.500" width="9" height="8" fill="#f7f7f7" stroke="#777"/><rect x="5" y="3.500" width="8" height="8" fill="#f0f0f0" stroke="#777"/><path d="M7.500 9V2.500Q7.500 1 9 1Q10.500 1 10.500 2.500V9.500" fill="none" stroke="#777" stroke-width="1"/></svg>
<div class="t" style="left:107px;top:428px;height:24px;line-height:24px;">Clip</div>
<svg class="i" style="left:69.5px;top:459.5px" width="6" height="9" viewBox="0 0 6 9"><path d="M0.5 0V9L5.5 4.5Z" fill="#555"/></svg>
<div style="left:85px;top:457px;width:14px;height:14px;border:1px solid #b5b5b5;background:#fff;border-radius:2px"></div>
<svg class="i" style="left:85px;top:457px" width="14" height="14" viewBox="0 0 14 14"><path d="M3.2 7.2L5.8 10.4L10.8 3.4" fill="none" stroke="#666" stroke-width="1.9" stroke-linecap="round" stroke-linejoin="round"/></svg>
<svg class="i" style="left:105.0px;top:456.0px;" width="16" height="16" viewBox="0 0 16 16"><rect x="1" y="1.500" width="13" height="13" fill="#c9d9ee"/><rect x="1" y="1.500" width="4.300" height="4.300" fill="#1f3352"/><rect x="9.700" y="1.500" width="4.300" height="4.300" fill="#1f3352"/><rect x="5.300" y="5.800" width="4.400" height="4.400" fill="#1f3352"/><rect x="1" y="10.200" width="4.300" height="4.300" fill="#1f3352"/><rect x="5.300" y="1.500" width="4.400" height="4.300" fill="#e8eef7"/><rect x="1" y="5.800" width="4.300" height="4.400" fill="#8fb0d8"/><rect x="9.700" y="5.800" width="4.300" height="4.400" fill="#8fb0d8"/><rect x="5.300" y="10.200" width="4.400" height="4.300" fill="#8fb0d8"/></svg>
<div class="t" style="left:127px;top:452px;height:24px;line-height:24px;color:#6e6e6e;font-style:italic;-webkit-text-stroke:0.5px">clipped_elevation</div>
<div style="left:379px;top:454px;width:20px;height:20px;background:#eeeeee;border-radius:3px;border:1px solid #e2e2e2"></div>
<svg class="i" style="left:382px;top:458px" width="14" height="12" viewBox="0 0 14 12"><rect x="1" y="2.8" width="12" height="6.4" rx="1" fill="none" stroke="#555" stroke-width="1.3"/><path d="M3.5 0.5V2.5M7 0.5V2.5M10.5 0.5V2.5M3.5 9.5V11.5M7 9.5V11.5M10.5 9.5V11.5" stroke="#555" stroke-width="1.2"/></svg>
<svg class="i" style="left:49.5px;top:483.5px" width="6" height="9" viewBox="0 0 6 9"><path d="M0.5 0V9L5.5 4.5Z" fill="#555"/></svg>
<div style="left:65px;top:481px;width:14px;height:14px;border:1px solid #b5b5b5;background:#fff;border-radius:2px"></div>
<svg class="i" style="left:85.0px;top:480.0px;" width="16" height="16" viewBox="0 0 16 16"><path d="M0.500 8V15.500H9" fill="none" stroke="#888" stroke-width="1"/><rect x="2.500" y="5.500" width="9" height="8" fill="#f7f7f7" stroke="#777"/><rect x="5" y="3.500" width="8" height="8" fill="#f0f0f0" stroke="#777"/><path d="M7.500 9V2.500Q7.500 1 9 1Q10.500 1 10.500 2.500V9.500" fill="none" stroke="#777" stroke-width="1"/></svg>
<div class="t" style="left:107px;top:476px;height:24px;line-height:24px;">data</div>
<div style="left:128px;top:975px;width:137px;height:29px;border:1px solid #c6c6c6;border-top:none;border-radius:0 0 3px 3px;background:linear-gradient(#dddddd,#e6e6e6)"></div>
<div style="left:264px;top:975px;width:97px;height:29px;border:1px solid #c6c6c6;border-top:none;border-radius:0 0 3px 3px;background:linear-gradient(#dddddd,#e6e6e6)"></div>
<div style="left:41px;top:973px;width:87px;height:33px;border:1px solid #c0c0c0;border-top:none;border-radius:0 0 3px 3px;background:#f3f3f3"></div>
<div class="t" style="left:54px;top:977px;height:26px;line-height:26px;">Layers</div>
<div class="t" style="left:140px;top:976px;height:26px;line-height:26px;">Layer Order</div>
<div class="t" style="left:277px;top:976px;height:26px;line-height:26px;">Browser</div>
<div style="left:413px;top:182px;width:926px;height:825px;border:1px solid #b9b9b9;background:#fff"></div>
<svg class="i" style="left:437px;top:290px" width="884" height="608" viewBox="0 0 884 608" shape-rendering="crispEdges"><path transform="scale(1.17)" fill="#3a62dc" d="M0 283h1v1h-1zM0 436h1v1h-1zM0 451h1v1h-1zM1 92h1v1h-1zM1 239h1v1h-1zM1 262h1v1h-1zM1 263h1v1h-1zM1 264h1v1h-1zM1 336h1v1h-1zM1 434h1v1h-1zM1 436h1v1h-1zM1 437h1v1h-1zM1 449h1v1h-1zM1 450h1v1h-1zM1 451h1v1h-1zM1 452h1v1h-1zM1 463h1v1h-1zM1 464h1v1h-1zM1 465h1v1h-1zM1 471h1v1h-1zM2 91h1v1h-1zM2 92h1v1h-1zM2 93h1v1h-1zM2 94h1v1h-1zM2 209h1v1h-1zM2 216h1v1h-1zM2 238h1v1h-1zM2 241h1v1h-1zM2 242h1v1h-1zM2 434h1v1h-1zM2 436h1v1h-1zM2 452h1v1h-1zM2 463h1v1h-1zM2 464h1v1h-1zM2 468h1v1h-1zM2 469h1v1h-1zM2 470h1v1h-1zM2 471h1v1h-1zM2 472h1v1h-1zM3 91h1v1h-1zM3 95h1v1h-1zM3 215h1v1h-1zM3 218h1v1h-1zM3 236h1v1h-1zM3 239h1v1h-1zM3 242h1v1h-1zM3 244h1v1h-1zM3 270h1v1h-1zM3 271h1v1h-1zM3 333h1v1h-1zM3 434h1v1h-1zM3 435h1v1h-1zM3 450h1v1h-1zM3 462h1v1h-1zM3 464h1v1h-1zM3 465h1v1h-1zM3 470h1v1h-1zM3 473h1v1h-1zM4 26h1v1h-1zM4 27h1v1h-1zM4 91h1v1h-1zM4 94h1v1h-1zM4 95h1v1h-1zM4 96h1v1h-1zM4 97h1v1h-1zM4 215h1v1h-1zM4 216h1v1h-1zM4 217h1v1h-1zM4 235h1v1h-1zM4 236h1v1h-1zM4 238h1v1h-1zM4 239h1v1h-1zM4 241h1v1h-1zM4 243h1v1h-1zM4 261h1v1h-1zM4 304h1v1h-1zM4 434h1v1h-1zM4 449h1v1h-1zM4 464h1v1h-1zM4 466h1v1h-1zM4 467h1v1h-1zM4 468h1v1h-1zM4 469h1v1h-1zM4 470h1v1h-1zM5 26h1v1h-1zM5 95h1v1h-1zM5 96h1v1h-1zM5 97h1v1h-1zM5 217h1v1h-1zM5 230h1v1h-1zM5 235h1v1h-1zM5 236h1v1h-1zM5 237h1v1h-1zM5 238h1v1h-1zM5 240h1v1h-1zM5 262h1v1h-1zM5 305h1v1h-1zM5 450h1v1h-1zM5 466h1v1h-1zM5 467h1v1h-1zM5 468h1v1h-1zM5 469h1v1h-1zM5 470h1v1h-1zM5 473h1v1h-1zM6 41h1v1h-1zM6 96h1v1h-1zM6 97h1v1h-1zM6 235h1v1h-1zM6 237h1v1h-1zM6 239h1v1h-1zM6 240h1v1h-1zM6 250h1v1h-1zM6 261h1v1h-1zM6 269h1v1h-1zM6 270h1v1h-1zM6 271h1v1h-1zM6 280h1v1h-1zM6 304h1v1h-1zM6 467h1v1h-1zM6 468h1v1h-1zM6 470h1v1h-1zM6 471h1v1h-1zM6 472h1v1h-1zM6 473h1v1h-1zM7 41h1v1h-1zM7 42h1v1h-1zM7 43h1v1h-1zM7 99h1v1h-1zM7 238h1v1h-1zM7 239h1v1h-1zM7 241h1v1h-1zM7 242h1v1h-1zM7 243h1v1h-1zM7 249h1v1h-1zM7 254h1v1h-1zM7 255h1v1h-1zM7 264h1v1h-1zM7 307h1v1h-1zM7 448h1v1h-1zM7 449h1v1h-1zM7 466h1v1h-1zM7 467h1v1h-1zM7 471h1v1h-1zM8 19h1v1h-1zM8 98h1v1h-1zM8 229h1v1h-1zM8 234h1v1h-1zM8 239h1v1h-1zM8 240h1v1h-1zM8 243h1v1h-1zM8 244h1v1h-1zM8 248h1v1h-1zM8 263h1v1h-1zM8 270h1v1h-1zM8 283h1v1h-1zM8 306h1v1h-1zM8 447h1v1h-1zM8 448h1v1h-1zM8 449h1v1h-1zM8 465h1v1h-1zM8 470h1v1h-1zM9 27h1v1h-1zM9 97h1v1h-1zM9 230h1v1h-1zM9 233h1v1h-1zM9 235h1v1h-1zM9 236h1v1h-1zM9 239h1v1h-1zM9 240h1v1h-1zM9 242h1v1h-1zM9 269h1v1h-1zM9 270h1v1h-1zM9 277h1v1h-1zM9 307h1v1h-1zM9 308h1v1h-1zM9 309h1v1h-1zM9 466h1v1h-1zM9 467h1v1h-1zM10 30h1v1h-1zM10 98h1v1h-1zM10 99h1v1h-1zM10 232h1v1h-1zM10 234h1v1h-1zM10 235h1v1h-1zM10 238h1v1h-1zM10 242h1v1h-1zM10 264h1v1h-1zM10 265h1v1h-1zM10 271h1v1h-1zM10 307h1v1h-1zM10 308h1v1h-1zM10 309h1v1h-1zM10 330h1v1h-1zM10 466h1v1h-1zM11 30h1v1h-1zM11 31h1v1h-1zM11 42h1v1h-1zM11 233h1v1h-1zM11 234h1v1h-1zM11 235h1v1h-1zM11 238h1v1h-1zM11 240h1v1h-1zM11 263h1v1h-1zM11 271h1v1h-1zM11 272h1v1h-1zM11 279h1v1h-1zM11 280h1v1h-1zM11 281h1v1h-1zM11 290h1v1h-1zM11 291h1v1h-1zM11 306h1v1h-1zM11 308h1v1h-1zM11 309h1v1h-1zM11 447h1v1h-1zM11 448h1v1h-1zM11 465h1v1h-1zM12 29h1v1h-1zM12 30h1v1h-1zM12 31h1v1h-1zM12 41h1v1h-1zM12 43h1v1h-1zM12 98h1v1h-1zM12 191h1v1h-1zM12 233h1v1h-1zM12 234h1v1h-1zM12 238h1v1h-1zM12 244h1v1h-1zM12 257h1v1h-1zM12 258h1v1h-1zM12 260h1v1h-1zM12 262h1v1h-1zM12 263h1v1h-1zM12 265h1v1h-1zM12 269h1v1h-1zM12 270h1v1h-1zM12 271h1v1h-1zM12 280h1v1h-1zM12 303h1v1h-1zM12 304h1v1h-1zM12 307h1v1h-1zM12 309h1v1h-1zM12 313h1v1h-1zM12 447h1v1h-1zM12 448h1v1h-1zM13 29h1v1h-1zM13 38h1v1h-1zM13 42h1v1h-1zM13 97h1v1h-1zM13 191h1v1h-1zM13 235h1v1h-1zM13 236h1v1h-1zM13 258h1v1h-1zM13 259h1v1h-1zM13 260h1v1h-1zM13 261h1v1h-1zM13 262h1v1h-1zM13 265h1v1h-1zM13 269h1v1h-1zM13 271h1v1h-1zM13 275h1v1h-1zM13 276h1v1h-1zM13 279h1v1h-1zM13 308h1v1h-1zM13 309h1v1h-1zM13 347h1v1h-1zM13 348h1v1h-1zM13 349h1v1h-1zM13 350h1v1h-1zM13 448h1v1h-1zM14 38h1v1h-1zM14 180h1v1h-1zM14 224h1v1h-1zM14 235h1v1h-1zM14 236h1v1h-1zM14 239h1v1h-1zM14 255h1v1h-1zM14 256h1v1h-1zM14 259h1v1h-1zM14 264h1v1h-1zM14 270h1v1h-1zM14 276h1v1h-1zM14 277h1v1h-1zM14 278h1v1h-1zM14 279h1v1h-1zM14 281h1v1h-1zM14 307h1v1h-1zM14 310h1v1h-1zM14 311h1v1h-1zM14 332h1v1h-1zM14 348h1v1h-1zM14 349h1v1h-1zM14 350h1v1h-1zM15 38h1v1h-1zM15 236h1v1h-1zM15 253h1v1h-1zM15 254h1v1h-1zM15 255h1v1h-1zM15 256h1v1h-1zM15 257h1v1h-1zM15 258h1v1h-1zM15 259h1v1h-1zM15 262h1v1h-1zM15 270h1v1h-1zM15 277h1v1h-1zM15 279h1v1h-1zM15 306h1v1h-1zM15 311h1v1h-1zM15 312h1v1h-1zM15 313h1v1h-1zM15 332h1v1h-1zM15 345h1v1h-1zM15 347h1v1h-1zM15 349h1v1h-1zM15 350h1v1h-1zM16 99h1v1h-1zM16 244h1v1h-1zM16 251h1v1h-1zM16 253h1v1h-1zM16 254h1v1h-1zM16 256h1v1h-1zM16 257h1v1h-1zM16 263h1v1h-1zM16 271h1v1h-1zM16 277h1v1h-1zM16 313h1v1h-1zM16 314h1v1h-1zM16 332h1v1h-1zM16 347h1v1h-1zM16 352h1v1h-1zM17 99h1v1h-1zM17 100h1v1h-1zM17 101h1v1h-1zM17 245h1v1h-1zM17 246h1v1h-1zM17 247h1v1h-1zM17 250h1v1h-1zM17 253h1v1h-1zM17 257h1v1h-1zM17 259h1v1h-1zM17 264h1v1h-1zM17 269h1v1h-1zM17 270h1v1h-1zM17 273h1v1h-1zM17 312h1v1h-1zM17 315h1v1h-1zM17 332h1v1h-1zM17 333h1v1h-1zM17 335h1v1h-1zM17 348h1v1h-1zM17 352h1v1h-1zM18 60h1v1h-1zM18 240h1v1h-1zM18 245h1v1h-1zM18 252h1v1h-1zM18 253h1v1h-1zM18 254h1v1h-1zM18 255h1v1h-1zM18 256h1v1h-1zM18 257h1v1h-1zM18 258h1v1h-1zM18 259h1v1h-1zM18 260h1v1h-1zM18 261h1v1h-1zM18 264h1v1h-1zM18 265h1v1h-1zM18 267h1v1h-1zM18 269h1v1h-1zM18 270h1v1h-1zM18 271h1v1h-1zM18 272h1v1h-1zM18 273h1v1h-1zM18 274h1v1h-1zM18 275h1v1h-1zM18 279h1v1h-1zM18 311h1v1h-1zM18 332h1v1h-1zM18 333h1v1h-1zM18 351h1v1h-1zM19 59h1v1h-1zM19 101h1v1h-1zM19 205h1v1h-1zM19 235h1v1h-1zM19 240h1v1h-1zM19 241h1v1h-1zM19 253h1v1h-1zM19 254h1v1h-1zM19 255h1v1h-1zM19 256h1v1h-1zM19 258h1v1h-1zM19 259h1v1h-1zM19 260h1v1h-1zM19 261h1v1h-1zM19 262h1v1h-1zM19 263h1v1h-1zM19 265h1v1h-1zM19 268h1v1h-1zM19 269h1v1h-1zM19 271h1v1h-1zM19 272h1v1h-1zM19 273h1v1h-1zM19 280h1v1h-1zM19 310h1v1h-1zM19 314h1v1h-1zM19 315h1v1h-1zM19 333h1v1h-1zM19 358h1v1h-1zM19 361h1v1h-1zM19 368h1v1h-1zM19 369h1v1h-1zM20 57h1v1h-1zM20 58h1v1h-1zM20 243h1v1h-1zM20 251h1v1h-1zM20 252h1v1h-1zM20 253h1v1h-1zM20 254h1v1h-1zM20 255h1v1h-1zM20 256h1v1h-1zM20 259h1v1h-1zM20 261h1v1h-1zM20 262h1v1h-1zM20 263h1v1h-1zM20 265h1v1h-1zM20 266h1v1h-1zM20 268h1v1h-1zM20 269h1v1h-1zM20 272h1v1h-1zM20 276h1v1h-1zM20 279h1v1h-1zM20 283h1v1h-1zM20 333h1v1h-1zM20 335h1v1h-1zM20 348h1v1h-1zM20 349h1v1h-1zM20 350h1v1h-1zM20 351h1v1h-1zM20 352h1v1h-1zM20 362h1v1h-1zM20 367h1v1h-1zM20 368h1v1h-1zM21 55h1v1h-1zM21 56h1v1h-1zM21 57h1v1h-1zM21 249h1v1h-1zM21 252h1v1h-1zM21 255h1v1h-1zM21 256h1v1h-1zM21 258h1v1h-1zM21 259h1v1h-1zM21 262h1v1h-1zM21 263h1v1h-1zM21 264h1v1h-1zM21 265h1v1h-1zM21 266h1v1h-1zM21 267h1v1h-1zM21 268h1v1h-1zM21 270h1v1h-1zM21 271h1v1h-1zM21 272h1v1h-1zM21 275h1v1h-1zM21 284h1v1h-1zM21 348h1v1h-1zM21 355h1v1h-1zM21 357h1v1h-1zM21 359h1v1h-1zM21 362h1v1h-1zM21 363h1v1h-1zM21 366h1v1h-1zM21 367h1v1h-1zM21 373h1v1h-1zM22 56h1v1h-1zM22 59h1v1h-1zM22 236h1v1h-1zM22 237h1v1h-1zM22 241h1v1h-1zM22 250h1v1h-1zM22 254h1v1h-1zM22 256h1v1h-1zM22 257h1v1h-1zM22 259h1v1h-1zM22 260h1v1h-1zM22 262h1v1h-1zM22 263h1v1h-1zM22 264h1v1h-1zM22 265h1v1h-1zM22 266h1v1h-1zM22 268h1v1h-1zM22 269h1v1h-1zM22 272h1v1h-1zM22 284h1v1h-1zM22 285h1v1h-1zM22 348h1v1h-1zM22 350h1v1h-1zM22 353h1v1h-1zM22 355h1v1h-1zM22 356h1v1h-1zM22 359h1v1h-1zM22 360h1v1h-1zM22 374h1v1h-1zM23 58h1v1h-1zM23 59h1v1h-1zM23 229h1v1h-1zM23 230h1v1h-1zM23 237h1v1h-1zM23 241h1v1h-1zM23 245h1v1h-1zM23 246h1v1h-1zM23 247h1v1h-1zM23 248h1v1h-1zM23 249h1v1h-1zM23 252h1v1h-1zM23 257h1v1h-1zM23 258h1v1h-1zM23 259h1v1h-1zM23 261h1v1h-1zM23 262h1v1h-1zM23 263h1v1h-1zM23 264h1v1h-1zM23 266h1v1h-1zM23 267h1v1h-1zM23 268h1v1h-1zM23 269h1v1h-1zM23 270h1v1h-1zM23 275h1v1h-1zM23 348h1v1h-1zM23 349h1v1h-1zM23 351h1v1h-1zM23 352h1v1h-1zM23 358h1v1h-1zM23 359h1v1h-1zM23 360h1v1h-1zM23 362h1v1h-1zM23 374h1v1h-1zM23 375h1v1h-1zM23 380h1v1h-1zM24 57h1v1h-1zM24 59h1v1h-1zM24 102h1v1h-1zM24 230h1v1h-1zM24 231h1v1h-1zM24 239h1v1h-1zM24 243h1v1h-1zM24 248h1v1h-1zM24 249h1v1h-1zM24 251h1v1h-1zM24 253h1v1h-1zM24 256h1v1h-1zM24 257h1v1h-1zM24 258h1v1h-1zM24 259h1v1h-1zM24 260h1v1h-1zM24 261h1v1h-1zM24 262h1v1h-1zM24 263h1v1h-1zM24 264h1v1h-1zM24 265h1v1h-1zM24 266h1v1h-1zM24 267h1v1h-1zM24 268h1v1h-1zM24 269h1v1h-1zM24 270h1v1h-1zM24 273h1v1h-1zM24 274h1v1h-1zM24 342h1v1h-1zM24 354h1v1h-1zM24 357h1v1h-1zM24 359h1v1h-1zM24 363h1v1h-1zM24 378h1v1h-1zM24 381h1v1h-1zM25 90h1v1h-1zM25 142h1v1h-1zM25 143h1v1h-1zM25 144h1v1h-1zM25 226h1v1h-1zM25 227h1v1h-1zM25 230h1v1h-1zM25 239h1v1h-1zM25 245h1v1h-1zM25 247h1v1h-1zM25 248h1v1h-1zM25 250h1v1h-1zM25 251h1v1h-1zM25 252h1v1h-1zM25 253h1v1h-1zM25 255h1v1h-1zM25 256h1v1h-1zM25 257h1v1h-1zM25 260h1v1h-1zM25 261h1v1h-1zM25 264h1v1h-1zM25 265h1v1h-1zM25 266h1v1h-1zM25 269h1v1h-1zM25 274h1v1h-1zM25 275h1v1h-1zM25 276h1v1h-1zM25 285h1v1h-1zM25 296h1v1h-1zM25 315h1v1h-1zM25 319h1v1h-1zM25 329h1v1h-1zM25 337h1v1h-1zM25 341h1v1h-1zM25 342h1v1h-1zM25 355h1v1h-1zM25 360h1v1h-1zM25 377h1v1h-1zM25 378h1v1h-1zM25 379h1v1h-1zM25 380h1v1h-1zM25 381h1v1h-1zM26 60h1v1h-1zM26 91h1v1h-1zM26 100h1v1h-1zM26 142h1v1h-1zM26 195h1v1h-1zM26 228h1v1h-1zM26 231h1v1h-1zM26 232h1v1h-1zM26 244h1v1h-1zM26 248h1v1h-1zM26 251h1v1h-1zM26 252h1v1h-1zM26 253h1v1h-1zM26 254h1v1h-1zM26 257h1v1h-1zM26 258h1v1h-1zM26 259h1v1h-1zM26 260h1v1h-1zM26 261h1v1h-1zM26 262h1v1h-1zM26 263h1v1h-1zM26 264h1v1h-1zM26 265h1v1h-1zM26 266h1v1h-1zM26 267h1v1h-1zM26 268h1v1h-1zM26 270h1v1h-1zM26 272h1v1h-1zM26 273h1v1h-1zM26 274h1v1h-1zM26 275h1v1h-1zM26 276h1v1h-1zM26 277h1v1h-1zM26 278h1v1h-1zM26 284h1v1h-1zM26 316h1v1h-1zM26 318h1v1h-1zM26 319h1v1h-1zM26 320h1v1h-1zM26 321h1v1h-1zM26 328h1v1h-1zM26 340h1v1h-1zM26 342h1v1h-1zM26 343h1v1h-1zM26 344h1v1h-1zM26 345h1v1h-1zM26 361h1v1h-1zM26 379h1v1h-1zM26 380h1v1h-1zM26 381h1v1h-1zM27 101h1v1h-1zM27 231h1v1h-1zM27 232h1v1h-1zM27 233h1v1h-1zM27 243h1v1h-1zM27 244h1v1h-1zM27 249h1v1h-1zM27 251h1v1h-1zM27 252h1v1h-1zM27 254h1v1h-1zM27 255h1v1h-1zM27 256h1v1h-1zM27 257h1v1h-1zM27 258h1v1h-1zM27 259h1v1h-1zM27 261h1v1h-1zM27 262h1v1h-1zM27 264h1v1h-1zM27 265h1v1h-1zM27 266h1v1h-1zM27 267h1v1h-1zM27 268h1v1h-1zM27 269h1v1h-1zM27 272h1v1h-1zM27 273h1v1h-1zM27 276h1v1h-1zM27 277h1v1h-1zM27 281h1v1h-1zM27 282h1v1h-1zM27 283h1v1h-1zM27 315h1v1h-1zM27 317h1v1h-1zM27 318h1v1h-1zM27 319h1v1h-1zM27 320h1v1h-1zM27 325h1v1h-1zM27 329h1v1h-1zM27 330h1v1h-1zM27 332h1v1h-1zM27 334h1v1h-1zM27 335h1v1h-1zM27 337h1v1h-1zM27 338h1v1h-1zM27 339h1v1h-1zM27 340h1v1h-1zM27 341h1v1h-1zM27 342h1v1h-1zM27 344h1v1h-1zM27 346h1v1h-1zM27 349h1v1h-1zM27 379h1v1h-1zM27 381h1v1h-1zM28 230h1v1h-1zM28 231h1v1h-1zM28 233h1v1h-1zM28 238h1v1h-1zM28 244h1v1h-1zM28 245h1v1h-1zM28 247h1v1h-1zM28 248h1v1h-1zM28 250h1v1h-1zM28 251h1v1h-1zM28 252h1v1h-1zM28 255h1v1h-1zM28 256h1v1h-1zM28 257h1v1h-1zM28 259h1v1h-1zM28 260h1v1h-1zM28 261h1v1h-1zM28 263h1v1h-1zM28 264h1v1h-1zM28 268h1v1h-1zM28 269h1v1h-1zM28 271h1v1h-1zM28 272h1v1h-1zM28 275h1v1h-1zM28 276h1v1h-1zM28 277h1v1h-1zM28 280h1v1h-1zM28 283h1v1h-1zM28 285h1v1h-1zM28 316h1v1h-1zM28 319h1v1h-1zM28 320h1v1h-1zM28 326h1v1h-1zM28 329h1v1h-1zM28 331h1v1h-1zM28 332h1v1h-1zM28 335h1v1h-1zM28 337h1v1h-1zM28 338h1v1h-1zM28 339h1v1h-1zM28 340h1v1h-1zM28 341h1v1h-1zM28 342h1v1h-1zM28 350h1v1h-1zM28 351h1v1h-1zM28 352h1v1h-1zM28 378h1v1h-1zM28 381h1v1h-1zM29 237h1v1h-1zM29 240h1v1h-1zM29 241h1v1h-1zM29 242h1v1h-1zM29 243h1v1h-1zM29 244h1v1h-1zM29 248h1v1h-1zM29 249h1v1h-1zM29 250h1v1h-1zM29 251h1v1h-1zM29 252h1v1h-1zM29 253h1v1h-1zM29 255h1v1h-1zM29 256h1v1h-1zM29 257h1v1h-1zM29 258h1v1h-1zM29 259h1v1h-1zM29 261h1v1h-1zM29 262h1v1h-1zM29 263h1v1h-1zM29 264h1v1h-1zM29 265h1v1h-1zM29 267h1v1h-1zM29 269h1v1h-1zM29 270h1v1h-1zM29 271h1v1h-1zM29 275h1v1h-1zM29 276h1v1h-1zM29 277h1v1h-1zM29 280h1v1h-1zM29 284h1v1h-1zM29 285h1v1h-1zM29 317h1v1h-1zM29 325h1v1h-1zM29 327h1v1h-1zM29 328h1v1h-1zM29 329h1v1h-1zM29 330h1v1h-1zM29 331h1v1h-1zM29 332h1v1h-1zM29 336h1v1h-1zM29 337h1v1h-1zM29 338h1v1h-1zM29 345h1v1h-1zM29 350h1v1h-1zM29 352h1v1h-1zM29 353h1v1h-1zM29 380h1v1h-1zM30 63h1v1h-1zM30 236h1v1h-1zM30 239h1v1h-1zM30 241h1v1h-1zM30 242h1v1h-1zM30 243h1v1h-1zM30 245h1v1h-1zM30 246h1v1h-1zM30 248h1v1h-1zM30 251h1v1h-1zM30 252h1v1h-1zM30 255h1v1h-1zM30 256h1v1h-1zM30 257h1v1h-1zM30 258h1v1h-1zM30 259h1v1h-1zM30 260h1v1h-1zM30 262h1v1h-1zM30 263h1v1h-1zM30 265h1v1h-1zM30 267h1v1h-1zM30 269h1v1h-1zM30 270h1v1h-1zM30 271h1v1h-1zM30 273h1v1h-1zM30 274h1v1h-1zM30 276h1v1h-1zM30 278h1v1h-1zM30 279h1v1h-1zM30 280h1v1h-1zM30 290h1v1h-1zM30 320h1v1h-1zM30 325h1v1h-1zM30 328h1v1h-1zM30 330h1v1h-1zM30 331h1v1h-1zM30 332h1v1h-1zM30 336h1v1h-1zM30 341h1v1h-1zM30 344h1v1h-1zM30 345h1v1h-1zM30 346h1v1h-1zM30 350h1v1h-1zM30 354h1v1h-1zM31 64h1v1h-1zM31 163h1v1h-1zM31 164h1v1h-1zM31 239h1v1h-1zM31 240h1v1h-1zM31 241h1v1h-1zM31 243h1v1h-1zM31 244h1v1h-1zM31 245h1v1h-1zM31 246h1v1h-1zM31 247h1v1h-1zM31 248h1v1h-1zM31 249h1v1h-1zM31 251h1v1h-1zM31 252h1v1h-1zM31 253h1v1h-1zM31 254h1v1h-1zM31 255h1v1h-1zM31 256h1v1h-1zM31 259h1v1h-1zM31 261h1v1h-1zM31 263h1v1h-1zM31 264h1v1h-1zM31 265h1v1h-1zM31 266h1v1h-1zM31 267h1v1h-1zM31 268h1v1h-1zM31 269h1v1h-1zM31 270h1v1h-1zM31 271h1v1h-1zM31 272h1v1h-1zM31 273h1v1h-1zM31 274h1v1h-1zM31 275h1v1h-1zM31 276h1v1h-1zM31 277h1v1h-1zM31 278h1v1h-1zM31 279h1v1h-1zM31 289h1v1h-1zM31 322h1v1h-1zM31 326h1v1h-1zM31 328h1v1h-1zM31 330h1v1h-1zM31 338h1v1h-1zM31 340h1v1h-1zM31 342h1v1h-1zM31 343h1v1h-1zM32 166h1v1h-1zM32 235h1v1h-1zM32 239h1v1h-1zM32 240h1v1h-1zM32 241h1v1h-1zM32 243h1v1h-1zM32 244h1v1h-1zM32 245h1v1h-1zM32 246h1v1h-1zM32 247h1v1h-1zM32 248h1v1h-1zM32 249h1v1h-1zM32 253h1v1h-1zM32 254h1v1h-1zM32 258h1v1h-1zM32 259h1v1h-1zM32 260h1v1h-1zM32 261h1v1h-1zM32 262h1v1h-1zM32 264h1v1h-1zM32 265h1v1h-1zM32 266h1v1h-1zM32 267h1v1h-1zM32 268h1v1h-1zM32 269h1v1h-1zM32 271h1v1h-1zM32 272h1v1h-1zM32 273h1v1h-1zM32 275h1v1h-1zM32 277h1v1h-1zM32 278h1v1h-1zM32 279h1v1h-1zM32 280h1v1h-1zM32 290h1v1h-1zM32 320h1v1h-1zM32 323h1v1h-1zM32 325h1v1h-1zM32 327h1v1h-1zM32 328h1v1h-1zM32 329h1v1h-1zM32 331h1v1h-1zM33 165h1v1h-1zM33 166h1v1h-1zM33 236h1v1h-1zM33 239h1v1h-1zM33 241h1v1h-1zM33 244h1v1h-1zM33 246h1v1h-1zM33 247h1v1h-1zM33 248h1v1h-1zM33 249h1v1h-1zM33 250h1v1h-1zM33 252h1v1h-1zM33 254h1v1h-1zM33 255h1v1h-1zM33 256h1v1h-1zM33 257h1v1h-1zM33 258h1v1h-1zM33 259h1v1h-1zM33 260h1v1h-1zM33 261h1v1h-1zM33 262h1v1h-1zM33 263h1v1h-1zM33 264h1v1h-1zM33 265h1v1h-1zM33 266h1v1h-1zM33 267h1v1h-1zM33 268h1v1h-1zM33 269h1v1h-1zM33 270h1v1h-1zM33 271h1v1h-1zM33 272h1v1h-1zM33 273h1v1h-1zM33 274h1v1h-1zM33 276h1v1h-1zM33 277h1v1h-1zM33 278h1v1h-1zM33 320h1v1h-1zM33 323h1v1h-1zM33 325h1v1h-1zM33 328h1v1h-1zM33 329h1v1h-1zM33 330h1v1h-1zM33 331h1v1h-1zM33 332h1v1h-1zM33 340h1v1h-1zM33 341h1v1h-1zM33 342h1v1h-1zM34 237h1v1h-1zM34 238h1v1h-1zM34 239h1v1h-1zM34 240h1v1h-1zM34 241h1v1h-1zM34 245h1v1h-1zM34 249h1v1h-1zM34 251h1v1h-1zM34 252h1v1h-1zM34 254h1v1h-1zM34 255h1v1h-1zM34 256h1v1h-1zM34 257h1v1h-1zM34 258h1v1h-1zM34 259h1v1h-1zM34 260h1v1h-1zM34 261h1v1h-1zM34 262h1v1h-1zM34 263h1v1h-1zM34 265h1v1h-1zM34 266h1v1h-1zM34 267h1v1h-1zM34 269h1v1h-1zM34 270h1v1h-1zM34 271h1v1h-1zM34 272h1v1h-1zM34 273h1v1h-1zM34 274h1v1h-1zM34 275h1v1h-1zM34 277h1v1h-1zM34 322h1v1h-1zM34 324h1v1h-1zM34 327h1v1h-1zM34 329h1v1h-1zM34 330h1v1h-1zM34 331h1v1h-1zM34 335h1v1h-1zM34 337h1v1h-1zM35 233h1v1h-1zM35 236h1v1h-1zM35 239h1v1h-1zM35 244h1v1h-1zM35 245h1v1h-1zM35 248h1v1h-1zM35 249h1v1h-1zM35 251h1v1h-1zM35 252h1v1h-1zM35 253h1v1h-1zM35 254h1v1h-1zM35 256h1v1h-1zM35 258h1v1h-1zM35 259h1v1h-1zM35 260h1v1h-1zM35 262h1v1h-1zM35 263h1v1h-1zM35 264h1v1h-1zM35 265h1v1h-1zM35 266h1v1h-1zM35 268h1v1h-1zM35 270h1v1h-1zM35 271h1v1h-1zM35 272h1v1h-1zM35 274h1v1h-1zM35 277h1v1h-1zM35 278h1v1h-1zM35 279h1v1h-1zM35 285h1v1h-1zM35 321h1v1h-1zM35 325h1v1h-1zM35 330h1v1h-1zM35 331h1v1h-1zM35 335h1v1h-1zM36 120h1v1h-1zM36 147h1v1h-1zM36 165h1v1h-1zM36 205h1v1h-1zM36 206h1v1h-1zM36 236h1v1h-1zM36 241h1v1h-1zM36 242h1v1h-1zM36 243h1v1h-1zM36 244h1v1h-1zM36 245h1v1h-1zM36 246h1v1h-1zM36 247h1v1h-1zM36 249h1v1h-1zM36 250h1v1h-1zM36 253h1v1h-1zM36 254h1v1h-1zM36 255h1v1h-1zM36 256h1v1h-1zM36 257h1v1h-1zM36 258h1v1h-1zM36 259h1v1h-1zM36 260h1v1h-1zM36 262h1v1h-1zM36 263h1v1h-1zM36 264h1v1h-1zM36 265h1v1h-1zM36 266h1v1h-1zM36 267h1v1h-1zM36 269h1v1h-1zM36 270h1v1h-1zM36 271h1v1h-1zM36 272h1v1h-1zM36 274h1v1h-1zM36 277h1v1h-1zM36 279h1v1h-1zM36 280h1v1h-1zM36 282h1v1h-1zM36 283h1v1h-1zM36 284h1v1h-1zM36 320h1v1h-1zM36 326h1v1h-1zM36 327h1v1h-1zM36 329h1v1h-1zM36 330h1v1h-1zM36 331h1v1h-1zM36 332h1v1h-1zM36 333h1v1h-1zM37 38h1v1h-1zM37 119h1v1h-1zM37 121h1v1h-1zM37 123h1v1h-1zM37 124h1v1h-1zM37 125h1v1h-1zM37 126h1v1h-1zM37 205h1v1h-1zM37 206h1v1h-1zM37 207h1v1h-1zM37 237h1v1h-1zM37 240h1v1h-1zM37 242h1v1h-1zM37 243h1v1h-1zM37 244h1v1h-1zM37 245h1v1h-1zM37 246h1v1h-1zM37 249h1v1h-1zM37 250h1v1h-1zM37 251h1v1h-1zM37 252h1v1h-1zM37 254h1v1h-1zM37 255h1v1h-1zM37 256h1v1h-1zM37 257h1v1h-1zM37 258h1v1h-1zM37 259h1v1h-1zM37 260h1v1h-1zM37 261h1v1h-1zM37 262h1v1h-1zM37 263h1v1h-1zM37 265h1v1h-1zM37 266h1v1h-1zM37 267h1v1h-1zM37 268h1v1h-1zM37 269h1v1h-1zM37 270h1v1h-1zM37 273h1v1h-1zM37 278h1v1h-1zM37 326h1v1h-1zM37 331h1v1h-1zM37 333h1v1h-1zM38 36h1v1h-1zM38 39h1v1h-1zM38 91h1v1h-1zM38 123h1v1h-1zM38 165h1v1h-1zM38 166h1v1h-1zM38 221h1v1h-1zM38 222h1v1h-1zM38 238h1v1h-1zM38 241h1v1h-1zM38 243h1v1h-1zM38 244h1v1h-1zM38 245h1v1h-1zM38 246h1v1h-1zM38 248h1v1h-1zM38 249h1v1h-1zM38 251h1v1h-1zM38 252h1v1h-1zM38 253h1v1h-1zM38 254h1v1h-1zM38 256h1v1h-1zM38 257h1v1h-1zM38 259h1v1h-1zM38 260h1v1h-1zM38 261h1v1h-1zM38 262h1v1h-1zM38 263h1v1h-1zM38 264h1v1h-1zM38 265h1v1h-1zM38 266h1v1h-1zM38 267h1v1h-1zM38 269h1v1h-1zM38 270h1v1h-1zM38 271h1v1h-1zM38 272h1v1h-1zM38 274h1v1h-1zM38 275h1v1h-1zM38 277h1v1h-1zM38 279h1v1h-1zM39 35h1v1h-1zM39 37h1v1h-1zM39 38h1v1h-1zM39 39h1v1h-1zM39 40h1v1h-1zM39 63h1v1h-1zM39 123h1v1h-1zM39 126h1v1h-1zM39 127h1v1h-1zM39 221h1v1h-1zM39 242h1v1h-1zM39 243h1v1h-1zM39 244h1v1h-1zM39 245h1v1h-1zM39 246h1v1h-1zM39 248h1v1h-1zM39 250h1v1h-1zM39 251h1v1h-1zM39 252h1v1h-1zM39 253h1v1h-1zM39 254h1v1h-1zM39 255h1v1h-1zM39 256h1v1h-1zM39 257h1v1h-1zM39 259h1v1h-1zM39 260h1v1h-1zM39 262h1v1h-1zM39 263h1v1h-1zM39 265h1v1h-1zM39 267h1v1h-1zM39 269h1v1h-1zM39 270h1v1h-1zM39 273h1v1h-1zM39 276h1v1h-1zM39 277h1v1h-1zM39 278h1v1h-1zM39 281h1v1h-1zM40 41h1v1h-1zM40 63h1v1h-1zM40 209h1v1h-1zM40 220h1v1h-1zM40 221h1v1h-1zM40 244h1v1h-1zM40 247h1v1h-1zM40 248h1v1h-1zM40 249h1v1h-1zM40 250h1v1h-1zM40 251h1v1h-1zM40 252h1v1h-1zM40 253h1v1h-1zM40 255h1v1h-1zM40 258h1v1h-1zM40 259h1v1h-1zM40 263h1v1h-1zM40 264h1v1h-1zM40 265h1v1h-1zM40 266h1v1h-1zM40 267h1v1h-1zM40 268h1v1h-1zM40 270h1v1h-1zM40 271h1v1h-1zM40 276h1v1h-1zM40 277h1v1h-1zM40 279h1v1h-1zM40 280h1v1h-1zM40 385h1v1h-1zM40 438h1v1h-1zM41 39h1v1h-1zM41 40h1v1h-1zM41 167h1v1h-1zM41 202h1v1h-1zM41 208h1v1h-1zM41 210h1v1h-1zM41 220h1v1h-1zM41 242h1v1h-1zM41 248h1v1h-1zM41 251h1v1h-1zM41 252h1v1h-1zM41 258h1v1h-1zM41 259h1v1h-1zM41 261h1v1h-1zM41 262h1v1h-1zM41 263h1v1h-1zM41 264h1v1h-1zM41 265h1v1h-1zM41 266h1v1h-1zM41 267h1v1h-1zM41 269h1v1h-1zM41 270h1v1h-1zM41 271h1v1h-1zM41 272h1v1h-1zM41 273h1v1h-1zM41 274h1v1h-1zM41 275h1v1h-1zM41 276h1v1h-1zM41 277h1v1h-1zM41 278h1v1h-1zM41 279h1v1h-1zM41 386h1v1h-1zM41 438h1v1h-1zM41 441h1v1h-1zM41 442h1v1h-1zM41 443h1v1h-1zM42 41h1v1h-1zM42 42h1v1h-1zM42 130h1v1h-1zM42 166h1v1h-1zM42 167h1v1h-1zM42 198h1v1h-1zM42 203h1v1h-1zM42 205h1v1h-1zM42 206h1v1h-1zM42 207h1v1h-1zM42 211h1v1h-1zM42 241h1v1h-1zM42 243h1v1h-1zM42 245h1v1h-1zM42 248h1v1h-1zM42 251h1v1h-1zM42 252h1v1h-1zM42 253h1v1h-1zM42 259h1v1h-1zM42 260h1v1h-1zM42 261h1v1h-1zM42 262h1v1h-1zM42 264h1v1h-1zM42 265h1v1h-1zM42 266h1v1h-1zM42 268h1v1h-1zM42 269h1v1h-1zM42 270h1v1h-1zM42 271h1v1h-1zM42 272h1v1h-1zM42 273h1v1h-1zM42 276h1v1h-1zM42 277h1v1h-1zM42 278h1v1h-1zM42 279h1v1h-1zM42 327h1v1h-1zM42 387h1v1h-1zM42 442h1v1h-1zM43 42h1v1h-1zM43 65h1v1h-1zM43 199h1v1h-1zM43 203h1v1h-1zM43 204h1v1h-1zM43 205h1v1h-1zM43 206h1v1h-1zM43 240h1v1h-1zM43 246h1v1h-1zM43 250h1v1h-1zM43 252h1v1h-1zM43 254h1v1h-1zM43 256h1v1h-1zM43 257h1v1h-1zM43 258h1v1h-1zM43 260h1v1h-1zM43 261h1v1h-1zM43 263h1v1h-1zM43 265h1v1h-1zM43 266h1v1h-1zM43 270h1v1h-1zM43 272h1v1h-1zM43 277h1v1h-1zM43 278h1v1h-1zM43 279h1v1h-1zM43 439h1v1h-1zM43 442h1v1h-1zM43 443h1v1h-1zM44 67h1v1h-1zM44 203h1v1h-1zM44 204h1v1h-1zM44 205h1v1h-1zM44 206h1v1h-1zM44 207h1v1h-1zM44 208h1v1h-1zM44 209h1v1h-1zM44 210h1v1h-1zM44 211h1v1h-1zM44 232h1v1h-1zM44 247h1v1h-1zM44 250h1v1h-1zM44 251h1v1h-1zM44 254h1v1h-1zM44 259h1v1h-1zM44 260h1v1h-1zM44 261h1v1h-1zM44 262h1v1h-1zM44 263h1v1h-1zM44 264h1v1h-1zM44 265h1v1h-1zM44 266h1v1h-1zM44 269h1v1h-1zM44 270h1v1h-1zM44 273h1v1h-1zM44 276h1v1h-1zM44 277h1v1h-1zM44 440h1v1h-1zM44 442h1v1h-1zM45 63h1v1h-1zM45 66h1v1h-1zM45 201h1v1h-1zM45 203h1v1h-1zM45 204h1v1h-1zM45 206h1v1h-1zM45 209h1v1h-1zM45 238h1v1h-1zM45 248h1v1h-1zM45 254h1v1h-1zM45 255h1v1h-1zM45 259h1v1h-1zM45 261h1v1h-1zM45 262h1v1h-1zM45 263h1v1h-1zM45 264h1v1h-1zM45 265h1v1h-1zM45 266h1v1h-1zM45 267h1v1h-1zM45 268h1v1h-1zM45 271h1v1h-1zM45 273h1v1h-1zM45 276h1v1h-1zM45 386h1v1h-1zM45 438h1v1h-1zM45 439h1v1h-1zM45 441h1v1h-1zM46 43h1v1h-1zM46 66h1v1h-1zM46 203h1v1h-1zM46 206h1v1h-1zM46 247h1v1h-1zM46 255h1v1h-1zM46 260h1v1h-1zM46 262h1v1h-1zM46 265h1v1h-1zM46 266h1v1h-1zM46 269h1v1h-1zM46 271h1v1h-1zM46 272h1v1h-1zM46 273h1v1h-1zM46 274h1v1h-1zM46 276h1v1h-1zM46 277h1v1h-1zM46 385h1v1h-1zM46 438h1v1h-1zM46 439h1v1h-1zM46 440h1v1h-1zM46 441h1v1h-1zM46 442h1v1h-1zM46 513h1v1h-1zM47 43h1v1h-1zM47 47h1v1h-1zM47 150h1v1h-1zM47 205h1v1h-1zM47 206h1v1h-1zM47 246h1v1h-1zM47 247h1v1h-1zM47 251h1v1h-1zM47 254h1v1h-1zM47 255h1v1h-1zM47 260h1v1h-1zM47 261h1v1h-1zM47 262h1v1h-1zM47 263h1v1h-1zM47 265h1v1h-1zM47 266h1v1h-1zM47 269h1v1h-1zM47 270h1v1h-1zM47 271h1v1h-1zM47 272h1v1h-1zM47 273h1v1h-1zM47 277h1v1h-1zM47 281h1v1h-1zM47 384h1v1h-1zM47 385h1v1h-1zM47 512h1v1h-1zM47 513h1v1h-1zM47 514h1v1h-1zM48 45h1v1h-1zM48 255h1v1h-1zM48 256h1v1h-1zM48 257h1v1h-1zM48 258h1v1h-1zM48 260h1v1h-1zM48 261h1v1h-1zM48 264h1v1h-1zM48 267h1v1h-1zM48 268h1v1h-1zM48 269h1v1h-1zM48 270h1v1h-1zM48 272h1v1h-1zM48 275h1v1h-1zM48 280h1v1h-1zM48 393h1v1h-1zM48 440h1v1h-1zM48 443h1v1h-1zM48 513h1v1h-1zM48 514h1v1h-1zM49 43h1v1h-1zM49 46h1v1h-1zM49 66h1v1h-1zM49 253h1v1h-1zM49 254h1v1h-1zM49 255h1v1h-1zM49 257h1v1h-1zM49 260h1v1h-1zM49 265h1v1h-1zM49 266h1v1h-1zM49 267h1v1h-1zM49 273h1v1h-1zM49 284h1v1h-1zM49 392h1v1h-1zM49 394h1v1h-1zM49 395h1v1h-1zM49 436h1v1h-1zM49 443h1v1h-1zM49 512h1v1h-1zM49 513h1v1h-1zM50 46h1v1h-1zM50 64h1v1h-1zM50 65h1v1h-1zM50 67h1v1h-1zM50 246h1v1h-1zM50 253h1v1h-1zM50 254h1v1h-1zM50 259h1v1h-1zM50 261h1v1h-1zM50 262h1v1h-1zM50 263h1v1h-1zM50 264h1v1h-1zM50 265h1v1h-1zM50 266h1v1h-1zM50 269h1v1h-1zM50 272h1v1h-1zM50 276h1v1h-1zM50 437h1v1h-1zM50 513h1v1h-1zM51 64h1v1h-1zM51 65h1v1h-1zM51 67h1v1h-1zM51 247h1v1h-1zM51 248h1v1h-1zM51 249h1v1h-1zM51 253h1v1h-1zM51 258h1v1h-1zM51 274h1v1h-1zM51 343h1v1h-1zM52 62h1v1h-1zM52 247h1v1h-1zM52 248h1v1h-1zM52 254h1v1h-1zM52 255h1v1h-1zM52 256h1v1h-1zM52 267h1v1h-1zM52 274h1v1h-1zM52 275h1v1h-1zM52 286h1v1h-1zM52 342h1v1h-1zM53 61h1v1h-1zM53 63h1v1h-1zM53 64h1v1h-1zM53 246h1v1h-1zM53 247h1v1h-1zM53 254h1v1h-1zM53 266h1v1h-1zM53 269h1v1h-1zM53 270h1v1h-1zM53 271h1v1h-1zM53 276h1v1h-1zM53 287h1v1h-1zM54 60h1v1h-1zM54 64h1v1h-1zM54 261h1v1h-1zM54 262h1v1h-1zM54 268h1v1h-1zM54 283h1v1h-1zM55 62h1v1h-1zM55 63h1v1h-1zM55 258h1v1h-1zM55 263h1v1h-1zM55 284h1v1h-1zM55 288h1v1h-1zM55 300h1v1h-1zM55 418h1v1h-1zM56 218h1v1h-1zM56 249h1v1h-1zM56 258h1v1h-1zM56 265h1v1h-1zM56 283h1v1h-1zM56 288h1v1h-1zM56 419h1v1h-1zM56 423h1v1h-1zM57 249h1v1h-1zM57 282h1v1h-1zM57 283h1v1h-1zM57 288h1v1h-1zM57 417h1v1h-1zM57 419h1v1h-1zM57 420h1v1h-1zM57 422h1v1h-1zM57 424h1v1h-1zM57 425h1v1h-1zM58 30h1v1h-1zM58 62h1v1h-1zM58 63h1v1h-1zM58 282h1v1h-1zM58 283h1v1h-1zM58 416h1v1h-1zM58 419h1v1h-1zM58 420h1v1h-1zM58 421h1v1h-1zM58 424h1v1h-1zM59 30h1v1h-1zM59 62h1v1h-1zM59 63h1v1h-1zM59 166h1v1h-1zM59 282h1v1h-1zM59 283h1v1h-1zM59 287h1v1h-1zM59 288h1v1h-1zM59 290h1v1h-1zM59 292h1v1h-1zM59 293h1v1h-1zM59 415h1v1h-1zM59 419h1v1h-1zM59 420h1v1h-1zM59 421h1v1h-1zM60 62h1v1h-1zM60 63h1v1h-1zM60 269h1v1h-1zM60 281h1v1h-1zM60 283h1v1h-1zM60 284h1v1h-1zM60 285h1v1h-1zM60 289h1v1h-1zM60 290h1v1h-1zM60 420h1v1h-1zM60 424h1v1h-1zM61 31h1v1h-1zM61 64h1v1h-1zM61 247h1v1h-1zM61 281h1v1h-1zM61 283h1v1h-1zM61 285h1v1h-1zM61 288h1v1h-1zM61 289h1v1h-1zM61 416h1v1h-1zM61 423h1v1h-1zM62 62h1v1h-1zM62 65h1v1h-1zM62 248h1v1h-1zM62 285h1v1h-1zM62 287h1v1h-1zM62 292h1v1h-1zM62 421h1v1h-1zM62 422h1v1h-1zM63 61h1v1h-1zM63 62h1v1h-1zM63 64h1v1h-1zM63 206h1v1h-1zM63 285h1v1h-1zM63 287h1v1h-1zM63 420h1v1h-1zM63 421h1v1h-1zM63 422h1v1h-1zM64 62h1v1h-1zM64 286h1v1h-1zM64 288h1v1h-1zM64 294h1v1h-1zM64 295h1v1h-1zM64 421h1v1h-1zM64 422h1v1h-1zM64 423h1v1h-1zM65 59h1v1h-1zM65 62h1v1h-1zM65 287h1v1h-1zM65 288h1v1h-1zM65 293h1v1h-1zM65 294h1v1h-1zM65 295h1v1h-1zM65 342h1v1h-1zM65 423h1v1h-1zM66 288h1v1h-1zM66 290h1v1h-1zM66 291h1v1h-1zM66 293h1v1h-1zM67 290h1v1h-1zM67 291h1v1h-1zM67 292h1v1h-1zM68 281h1v1h-1zM68 282h1v1h-1zM68 283h1v1h-1zM68 284h1v1h-1zM68 292h1v1h-1zM68 293h1v1h-1zM68 294h1v1h-1zM69 287h1v1h-1zM69 292h1v1h-1zM70 75h1v1h-1zM70 187h1v1h-1zM70 288h1v1h-1zM71 40h1v1h-1zM73 76h1v1h-1zM73 284h1v1h-1zM73 285h1v1h-1zM73 286h1v1h-1zM73 287h1v1h-1zM73 288h1v1h-1zM73 289h1v1h-1zM74 286h1v1h-1zM74 287h1v1h-1zM74 289h1v1h-1zM75 29h1v1h-1zM75 136h1v1h-1zM75 137h1v1h-1zM75 192h1v1h-1zM75 195h1v1h-1zM75 196h1v1h-1zM75 197h1v1h-1zM75 286h1v1h-1zM75 288h1v1h-1zM75 289h1v1h-1zM76 30h1v1h-1zM76 193h1v1h-1zM76 194h1v1h-1zM76 195h1v1h-1zM76 286h1v1h-1zM76 288h1v1h-1zM76 289h1v1h-1zM77 29h1v1h-1zM77 30h1v1h-1zM77 192h1v1h-1zM77 193h1v1h-1zM77 194h1v1h-1zM77 288h1v1h-1zM77 289h1v1h-1zM77 290h1v1h-1zM77 305h1v1h-1zM77 306h1v1h-1zM78 30h1v1h-1zM78 31h1v1h-1zM78 193h1v1h-1zM78 194h1v1h-1zM78 195h1v1h-1zM78 286h1v1h-1zM79 31h1v1h-1zM79 32h1v1h-1zM79 194h1v1h-1zM79 292h1v1h-1zM79 339h1v1h-1zM80 33h1v1h-1zM80 176h1v1h-1zM80 224h1v1h-1zM80 225h1v1h-1zM80 234h1v1h-1zM81 19h1v1h-1zM81 32h1v1h-1zM81 33h1v1h-1zM81 34h1v1h-1zM81 156h1v1h-1zM81 177h1v1h-1zM81 193h1v1h-1zM81 194h1v1h-1zM82 19h1v1h-1zM82 175h1v1h-1zM82 178h1v1h-1zM82 318h1v1h-1zM83 18h1v1h-1zM83 174h1v1h-1zM83 175h1v1h-1zM83 177h1v1h-1zM83 178h1v1h-1zM83 209h1v1h-1zM83 210h1v1h-1zM83 231h1v1h-1zM83 305h1v1h-1zM83 306h1v1h-1zM83 314h1v1h-1zM83 316h1v1h-1zM83 317h1v1h-1zM84 19h1v1h-1zM84 190h1v1h-1zM84 212h1v1h-1zM84 304h1v1h-1zM84 306h1v1h-1zM84 313h1v1h-1zM84 316h1v1h-1zM84 397h1v1h-1zM85 190h1v1h-1zM85 228h1v1h-1zM85 254h1v1h-1zM85 303h1v1h-1zM85 306h1v1h-1zM85 315h1v1h-1zM85 316h1v1h-1zM85 397h1v1h-1zM86 19h1v1h-1zM86 186h1v1h-1zM86 237h1v1h-1zM86 255h1v1h-1zM87 18h1v1h-1zM87 183h1v1h-1zM87 185h1v1h-1zM87 186h1v1h-1zM87 227h1v1h-1zM88 153h1v1h-1zM88 154h1v1h-1zM88 184h1v1h-1zM88 186h1v1h-1zM88 187h1v1h-1zM88 227h1v1h-1zM88 237h1v1h-1zM88 392h1v1h-1zM88 394h1v1h-1zM88 396h1v1h-1zM89 19h1v1h-1zM89 52h1v1h-1zM89 154h1v1h-1zM89 184h1v1h-1zM89 185h1v1h-1zM89 186h1v1h-1zM89 188h1v1h-1zM89 189h1v1h-1zM89 190h1v1h-1zM89 234h1v1h-1zM89 392h1v1h-1zM89 395h1v1h-1zM89 396h1v1h-1zM90 18h1v1h-1zM90 185h1v1h-1zM90 186h1v1h-1zM90 188h1v1h-1zM90 190h1v1h-1zM90 214h1v1h-1zM90 221h1v1h-1zM90 232h1v1h-1zM90 291h1v1h-1zM90 432h1v1h-1zM90 479h1v1h-1zM91 17h1v1h-1zM91 150h1v1h-1zM91 152h1v1h-1zM91 157h1v1h-1zM91 184h1v1h-1zM91 186h1v1h-1zM91 189h1v1h-1zM91 191h1v1h-1zM91 389h1v1h-1zM92 154h1v1h-1zM92 157h1v1h-1zM92 185h1v1h-1zM92 186h1v1h-1zM92 187h1v1h-1zM92 188h1v1h-1zM92 194h1v1h-1zM92 285h1v1h-1zM92 286h1v1h-1zM92 287h1v1h-1zM92 290h1v1h-1zM92 390h1v1h-1zM92 396h1v1h-1zM92 426h1v1h-1zM93 149h1v1h-1zM93 155h1v1h-1zM93 188h1v1h-1zM93 189h1v1h-1zM93 194h1v1h-1zM93 286h1v1h-1zM93 288h1v1h-1zM93 395h1v1h-1zM94 151h1v1h-1zM94 154h1v1h-1zM94 155h1v1h-1zM94 156h1v1h-1zM94 187h1v1h-1zM94 188h1v1h-1zM94 191h1v1h-1zM94 193h1v1h-1zM94 195h1v1h-1zM94 236h1v1h-1zM94 284h1v1h-1zM94 286h1v1h-1zM94 289h1v1h-1zM94 292h1v1h-1zM94 294h1v1h-1zM94 394h1v1h-1zM95 152h1v1h-1zM95 155h1v1h-1zM95 156h1v1h-1zM95 160h1v1h-1zM95 189h1v1h-1zM95 194h1v1h-1zM95 223h1v1h-1zM95 285h1v1h-1zM95 289h1v1h-1zM95 290h1v1h-1zM95 293h1v1h-1zM96 147h1v1h-1zM96 149h1v1h-1zM96 153h1v1h-1zM96 156h1v1h-1zM96 157h1v1h-1zM96 160h1v1h-1zM96 190h1v1h-1zM96 248h1v1h-1zM96 283h1v1h-1zM96 287h1v1h-1zM96 289h1v1h-1zM96 292h1v1h-1zM97 149h1v1h-1zM97 150h1v1h-1zM97 152h1v1h-1zM97 157h1v1h-1zM97 158h1v1h-1zM97 159h1v1h-1zM97 233h1v1h-1zM97 283h1v1h-1zM97 288h1v1h-1zM97 290h1v1h-1zM97 291h1v1h-1zM97 292h1v1h-1zM97 297h1v1h-1zM97 401h1v1h-1zM98 5h1v1h-1zM98 148h1v1h-1zM98 149h1v1h-1zM98 158h1v1h-1zM98 159h1v1h-1zM98 160h1v1h-1zM98 220h1v1h-1zM98 221h1v1h-1zM98 247h1v1h-1zM98 251h1v1h-1zM98 252h1v1h-1zM98 253h1v1h-1zM98 283h1v1h-1zM98 286h1v1h-1zM98 289h1v1h-1zM98 290h1v1h-1zM98 292h1v1h-1zM98 293h1v1h-1zM98 296h1v1h-1zM99 150h1v1h-1zM99 151h1v1h-1zM99 159h1v1h-1zM99 160h1v1h-1zM99 161h1v1h-1zM99 162h1v1h-1zM99 163h1v1h-1zM99 176h1v1h-1zM99 181h1v1h-1zM99 189h1v1h-1zM99 232h1v1h-1zM99 235h1v1h-1zM99 236h1v1h-1zM99 237h1v1h-1zM99 253h1v1h-1zM99 254h1v1h-1zM99 285h1v1h-1zM99 292h1v1h-1zM99 293h1v1h-1zM99 294h1v1h-1zM99 295h1v1h-1zM100 151h1v1h-1zM100 157h1v1h-1zM100 158h1v1h-1zM100 159h1v1h-1zM100 160h1v1h-1zM100 161h1v1h-1zM100 163h1v1h-1zM100 164h1v1h-1zM100 176h1v1h-1zM100 178h1v1h-1zM100 190h1v1h-1zM100 232h1v1h-1zM100 255h1v1h-1zM100 285h1v1h-1zM100 290h1v1h-1zM100 291h1v1h-1zM101 152h1v1h-1zM101 158h1v1h-1zM101 161h1v1h-1zM101 163h1v1h-1zM101 164h1v1h-1zM101 165h1v1h-1zM101 177h1v1h-1zM101 179h1v1h-1zM101 180h1v1h-1zM101 182h1v1h-1zM101 230h1v1h-1zM101 231h1v1h-1zM101 289h1v1h-1zM101 290h1v1h-1zM101 292h1v1h-1zM101 293h1v1h-1zM101 296h1v1h-1zM102 148h1v1h-1zM102 152h1v1h-1zM102 163h1v1h-1zM102 177h1v1h-1zM102 178h1v1h-1zM102 179h1v1h-1zM102 180h1v1h-1zM102 183h1v1h-1zM102 230h1v1h-1zM102 244h1v1h-1zM102 290h1v1h-1zM102 293h1v1h-1zM102 294h1v1h-1zM102 295h1v1h-1zM102 296h1v1h-1zM103 157h1v1h-1zM103 162h1v1h-1zM103 177h1v1h-1zM103 178h1v1h-1zM103 217h1v1h-1zM103 291h1v1h-1zM103 292h1v1h-1zM103 294h1v1h-1zM104 177h1v1h-1zM104 180h1v1h-1zM104 273h1v1h-1zM104 353h1v1h-1zM104 356h1v1h-1zM105 149h1v1h-1zM105 151h1v1h-1zM105 153h1v1h-1zM105 177h1v1h-1zM105 178h1v1h-1zM105 179h1v1h-1zM105 180h1v1h-1zM105 232h1v1h-1zM106 150h1v1h-1zM106 152h1v1h-1zM106 178h1v1h-1zM106 179h1v1h-1zM106 181h1v1h-1zM106 182h1v1h-1zM106 183h1v1h-1zM106 213h1v1h-1zM106 289h1v1h-1zM106 290h1v1h-1zM106 293h1v1h-1zM107 150h1v1h-1zM107 178h1v1h-1zM107 181h1v1h-1zM107 182h1v1h-1zM107 185h1v1h-1zM107 186h1v1h-1zM107 294h1v1h-1zM108 179h1v1h-1zM108 180h1v1h-1zM108 181h1v1h-1zM108 183h1v1h-1zM108 184h1v1h-1zM108 185h1v1h-1zM108 186h1v1h-1zM109 178h1v1h-1zM109 179h1v1h-1zM109 180h1v1h-1zM109 214h1v1h-1zM109 237h1v1h-1zM109 238h1v1h-1zM110 178h1v1h-1zM110 179h1v1h-1zM110 180h1v1h-1zM110 181h1v1h-1zM111 181h1v1h-1zM111 182h1v1h-1zM111 183h1v1h-1zM111 188h1v1h-1zM111 213h1v1h-1zM111 223h1v1h-1zM111 230h1v1h-1zM112 12h1v1h-1zM112 183h1v1h-1zM112 184h1v1h-1zM112 234h1v1h-1zM112 295h1v1h-1zM112 471h1v1h-1zM113 11h1v1h-1zM113 12h1v1h-1zM113 14h1v1h-1zM113 80h1v1h-1zM113 131h1v1h-1zM113 209h1v1h-1zM113 230h1v1h-1zM113 231h1v1h-1zM113 234h1v1h-1zM113 235h1v1h-1zM113 236h1v1h-1zM113 237h1v1h-1zM113 294h1v1h-1zM113 472h1v1h-1zM114 13h1v1h-1zM114 14h1v1h-1zM114 129h1v1h-1zM114 130h1v1h-1zM114 132h1v1h-1zM114 181h1v1h-1zM114 185h1v1h-1zM114 186h1v1h-1zM114 210h1v1h-1zM114 211h1v1h-1zM114 212h1v1h-1zM114 224h1v1h-1zM114 225h1v1h-1zM114 226h1v1h-1zM114 229h1v1h-1zM114 230h1v1h-1zM115 12h1v1h-1zM115 17h1v1h-1zM115 95h1v1h-1zM115 125h1v1h-1zM115 128h1v1h-1zM115 133h1v1h-1zM115 181h1v1h-1zM115 182h1v1h-1zM115 185h1v1h-1zM115 186h1v1h-1zM115 226h1v1h-1zM115 228h1v1h-1zM115 229h1v1h-1zM116 124h1v1h-1zM116 125h1v1h-1zM116 127h1v1h-1zM116 128h1v1h-1zM116 130h1v1h-1zM116 132h1v1h-1zM116 181h1v1h-1zM116 183h1v1h-1zM116 184h1v1h-1zM116 228h1v1h-1zM116 329h1v1h-1zM117 13h1v1h-1zM117 109h1v1h-1zM117 118h1v1h-1zM117 122h1v1h-1zM117 124h1v1h-1zM117 125h1v1h-1zM117 128h1v1h-1zM117 130h1v1h-1zM117 133h1v1h-1zM117 181h1v1h-1zM117 182h1v1h-1zM117 183h1v1h-1zM117 184h1v1h-1zM117 185h1v1h-1zM118 14h1v1h-1zM118 117h1v1h-1zM118 119h1v1h-1zM118 128h1v1h-1zM118 129h1v1h-1zM118 131h1v1h-1zM118 136h1v1h-1zM118 182h1v1h-1zM118 183h1v1h-1zM118 186h1v1h-1zM118 188h1v1h-1zM118 217h1v1h-1zM118 219h1v1h-1zM118 232h1v1h-1zM118 469h1v1h-1zM119 10h1v1h-1zM119 111h1v1h-1zM119 118h1v1h-1zM119 120h1v1h-1zM119 125h1v1h-1zM119 128h1v1h-1zM119 131h1v1h-1zM119 177h1v1h-1zM119 178h1v1h-1zM119 181h1v1h-1zM119 183h1v1h-1zM119 184h1v1h-1zM119 185h1v1h-1zM119 188h1v1h-1zM119 223h1v1h-1zM119 226h1v1h-1zM119 233h1v1h-1zM119 234h1v1h-1zM119 296h1v1h-1zM120 11h1v1h-1zM120 13h1v1h-1zM120 14h1v1h-1zM120 28h1v1h-1zM120 111h1v1h-1zM120 122h1v1h-1zM120 129h1v1h-1zM120 182h1v1h-1zM120 223h1v1h-1zM120 238h1v1h-1zM120 295h1v1h-1zM121 12h1v1h-1zM121 13h1v1h-1zM121 37h1v1h-1zM121 123h1v1h-1zM121 125h1v1h-1zM121 126h1v1h-1zM121 127h1v1h-1zM121 133h1v1h-1zM121 213h1v1h-1zM121 214h1v1h-1zM121 296h1v1h-1zM121 327h1v1h-1zM122 37h1v1h-1zM122 119h1v1h-1zM122 120h1v1h-1zM122 127h1v1h-1zM122 128h1v1h-1zM122 133h1v1h-1zM122 210h1v1h-1zM122 220h1v1h-1zM122 295h1v1h-1zM122 296h1v1h-1zM122 297h1v1h-1zM123 12h1v1h-1zM123 13h1v1h-1zM123 14h1v1h-1zM123 123h1v1h-1zM123 124h1v1h-1zM123 126h1v1h-1zM123 127h1v1h-1zM123 130h1v1h-1zM123 212h1v1h-1zM123 219h1v1h-1zM124 123h1v1h-1zM124 124h1v1h-1zM124 125h1v1h-1zM124 130h1v1h-1zM124 229h1v1h-1zM124 230h1v1h-1zM125 120h1v1h-1zM125 124h1v1h-1zM125 125h1v1h-1zM125 129h1v1h-1zM125 131h1v1h-1zM125 225h1v1h-1zM125 228h1v1h-1zM125 343h1v1h-1zM126 14h1v1h-1zM126 118h1v1h-1zM126 120h1v1h-1zM126 128h1v1h-1zM126 129h1v1h-1zM126 130h1v1h-1zM126 131h1v1h-1zM126 132h1v1h-1zM126 134h1v1h-1zM126 226h1v1h-1zM127 13h1v1h-1zM127 114h1v1h-1zM127 120h1v1h-1zM127 121h1v1h-1zM127 124h1v1h-1zM127 125h1v1h-1zM127 126h1v1h-1zM127 127h1v1h-1zM127 129h1v1h-1zM127 130h1v1h-1zM127 134h1v1h-1zM127 138h1v1h-1zM127 140h1v1h-1zM127 142h1v1h-1zM128 14h1v1h-1zM128 115h1v1h-1zM128 120h1v1h-1zM128 122h1v1h-1zM128 123h1v1h-1zM128 126h1v1h-1zM128 130h1v1h-1zM128 131h1v1h-1zM128 133h1v1h-1zM128 135h1v1h-1zM128 139h1v1h-1zM128 140h1v1h-1zM128 143h1v1h-1zM128 250h1v1h-1zM129 12h1v1h-1zM129 13h1v1h-1zM129 34h1v1h-1zM129 117h1v1h-1zM129 122h1v1h-1zM129 125h1v1h-1zM129 126h1v1h-1zM129 127h1v1h-1zM129 128h1v1h-1zM129 129h1v1h-1zM129 130h1v1h-1zM129 131h1v1h-1zM129 133h1v1h-1zM129 140h1v1h-1zM129 250h1v1h-1zM130 125h1v1h-1zM130 126h1v1h-1zM130 129h1v1h-1zM130 130h1v1h-1zM130 131h1v1h-1zM130 132h1v1h-1zM130 142h1v1h-1zM130 424h1v1h-1zM131 127h1v1h-1zM131 128h1v1h-1zM131 131h1v1h-1zM131 136h1v1h-1zM131 141h1v1h-1zM131 143h1v1h-1zM131 215h1v1h-1zM132 13h1v1h-1zM132 129h1v1h-1zM132 132h1v1h-1zM132 133h1v1h-1zM132 134h1v1h-1zM132 135h1v1h-1zM132 141h1v1h-1zM132 142h1v1h-1zM132 174h1v1h-1zM132 216h1v1h-1zM133 11h1v1h-1zM133 12h1v1h-1zM133 129h1v1h-1zM133 133h1v1h-1zM133 134h1v1h-1zM133 135h1v1h-1zM133 136h1v1h-1zM133 142h1v1h-1zM133 214h1v1h-1zM133 215h1v1h-1zM134 12h1v1h-1zM134 13h1v1h-1zM134 122h1v1h-1zM134 124h1v1h-1zM134 125h1v1h-1zM134 126h1v1h-1zM134 127h1v1h-1zM134 133h1v1h-1zM134 134h1v1h-1zM134 135h1v1h-1zM135 12h1v1h-1zM135 123h1v1h-1zM135 125h1v1h-1zM135 128h1v1h-1zM135 129h1v1h-1zM135 130h1v1h-1zM135 134h1v1h-1zM135 216h1v1h-1zM136 126h1v1h-1zM136 128h1v1h-1zM136 130h1v1h-1zM136 131h1v1h-1zM136 132h1v1h-1zM136 133h1v1h-1zM136 194h1v1h-1zM136 215h1v1h-1zM136 217h1v1h-1zM137 123h1v1h-1zM137 124h1v1h-1zM137 126h1v1h-1zM137 131h1v1h-1zM137 141h1v1h-1zM137 142h1v1h-1zM137 214h1v1h-1zM137 215h1v1h-1zM137 216h1v1h-1zM138 128h1v1h-1zM138 129h1v1h-1zM138 130h1v1h-1zM138 131h1v1h-1zM138 135h1v1h-1zM138 217h1v1h-1zM138 460h1v1h-1zM139 11h1v1h-1zM139 127h1v1h-1zM139 128h1v1h-1zM139 129h1v1h-1zM139 132h1v1h-1zM139 218h1v1h-1zM139 461h1v1h-1zM140 12h1v1h-1zM140 19h1v1h-1zM140 123h1v1h-1zM140 128h1v1h-1zM140 133h1v1h-1zM140 135h1v1h-1zM140 136h1v1h-1zM141 124h1v1h-1zM141 126h1v1h-1zM141 127h1v1h-1zM141 129h1v1h-1zM141 133h1v1h-1zM141 134h1v1h-1zM141 135h1v1h-1zM141 137h1v1h-1zM141 138h1v1h-1zM141 139h1v1h-1zM142 12h1v1h-1zM142 13h1v1h-1zM142 122h1v1h-1zM142 130h1v1h-1zM142 132h1v1h-1zM142 134h1v1h-1zM142 135h1v1h-1zM142 136h1v1h-1zM142 140h1v1h-1zM142 391h1v1h-1zM142 395h1v1h-1zM142 396h1v1h-1zM143 11h1v1h-1zM143 12h1v1h-1zM143 121h1v1h-1zM143 129h1v1h-1zM143 131h1v1h-1zM143 133h1v1h-1zM143 134h1v1h-1zM143 289h1v1h-1zM143 390h1v1h-1zM143 391h1v1h-1zM143 414h1v1h-1zM144 12h1v1h-1zM144 21h1v1h-1zM144 22h1v1h-1zM144 123h1v1h-1zM144 127h1v1h-1zM144 128h1v1h-1zM144 130h1v1h-1zM144 133h1v1h-1zM144 134h1v1h-1zM144 135h1v1h-1zM144 137h1v1h-1zM144 314h1v1h-1zM144 350h1v1h-1zM144 389h1v1h-1zM144 415h1v1h-1zM145 111h1v1h-1zM145 123h1v1h-1zM145 127h1v1h-1zM145 128h1v1h-1zM145 130h1v1h-1zM145 131h1v1h-1zM145 132h1v1h-1zM145 314h1v1h-1zM145 362h1v1h-1zM146 110h1v1h-1zM146 112h1v1h-1zM146 113h1v1h-1zM146 114h1v1h-1zM146 123h1v1h-1zM146 128h1v1h-1zM146 129h1v1h-1zM146 130h1v1h-1zM146 131h1v1h-1zM146 133h1v1h-1zM146 136h1v1h-1zM146 362h1v1h-1zM146 387h1v1h-1zM147 117h1v1h-1zM147 121h1v1h-1zM147 126h1v1h-1zM147 127h1v1h-1zM147 128h1v1h-1zM147 129h1v1h-1zM147 130h1v1h-1zM147 131h1v1h-1zM147 134h1v1h-1zM147 135h1v1h-1zM147 270h1v1h-1zM147 315h1v1h-1zM147 361h1v1h-1zM147 388h1v1h-1zM148 115h1v1h-1zM148 116h1v1h-1zM148 117h1v1h-1zM148 123h1v1h-1zM148 132h1v1h-1zM148 183h1v1h-1zM148 184h1v1h-1zM148 316h1v1h-1zM148 362h1v1h-1zM148 392h1v1h-1zM148 393h1v1h-1zM148 394h1v1h-1zM148 396h1v1h-1zM149 115h1v1h-1zM149 117h1v1h-1zM149 118h1v1h-1zM149 119h1v1h-1zM149 121h1v1h-1zM149 321h1v1h-1zM149 322h1v1h-1zM149 362h1v1h-1zM149 363h1v1h-1zM149 390h1v1h-1zM149 391h1v1h-1zM149 393h1v1h-1zM149 396h1v1h-1zM149 414h1v1h-1zM150 115h1v1h-1zM150 301h1v1h-1zM150 353h1v1h-1zM150 365h1v1h-1zM150 390h1v1h-1zM150 392h1v1h-1zM150 393h1v1h-1zM150 394h1v1h-1zM150 395h1v1h-1zM150 397h1v1h-1zM150 398h1v1h-1zM150 415h1v1h-1zM151 314h1v1h-1zM151 317h1v1h-1zM151 391h1v1h-1zM151 394h1v1h-1zM151 395h1v1h-1zM151 396h1v1h-1zM151 398h1v1h-1zM152 120h1v1h-1zM152 314h1v1h-1zM152 315h1v1h-1zM152 347h1v1h-1zM152 390h1v1h-1zM152 393h1v1h-1zM152 394h1v1h-1zM152 395h1v1h-1zM152 396h1v1h-1zM153 107h1v1h-1zM153 296h1v1h-1zM153 314h1v1h-1zM153 315h1v1h-1zM153 318h1v1h-1zM153 332h1v1h-1zM153 386h1v1h-1zM153 391h1v1h-1zM153 395h1v1h-1zM153 396h1v1h-1zM154 106h1v1h-1zM154 297h1v1h-1zM154 316h1v1h-1zM154 317h1v1h-1zM154 318h1v1h-1zM154 320h1v1h-1zM154 321h1v1h-1zM154 364h1v1h-1zM154 365h1v1h-1zM154 367h1v1h-1zM154 368h1v1h-1zM154 394h1v1h-1zM154 396h1v1h-1zM154 397h1v1h-1zM154 511h1v1h-1zM155 4h1v1h-1zM155 9h1v1h-1zM155 297h1v1h-1zM155 316h1v1h-1zM155 318h1v1h-1zM155 322h1v1h-1zM155 324h1v1h-1zM155 325h1v1h-1zM155 326h1v1h-1zM155 389h1v1h-1zM155 390h1v1h-1zM155 391h1v1h-1zM155 393h1v1h-1zM155 394h1v1h-1zM155 395h1v1h-1zM155 398h1v1h-1zM155 459h1v1h-1zM156 106h1v1h-1zM156 108h1v1h-1zM156 109h1v1h-1zM156 297h1v1h-1zM156 298h1v1h-1zM156 315h1v1h-1zM156 316h1v1h-1zM156 317h1v1h-1zM156 318h1v1h-1zM156 319h1v1h-1zM156 320h1v1h-1zM156 321h1v1h-1zM156 323h1v1h-1zM156 326h1v1h-1zM156 327h1v1h-1zM156 328h1v1h-1zM156 393h1v1h-1zM156 394h1v1h-1zM156 395h1v1h-1zM157 105h1v1h-1zM157 108h1v1h-1zM157 109h1v1h-1zM157 298h1v1h-1zM157 318h1v1h-1zM157 319h1v1h-1zM157 320h1v1h-1zM157 322h1v1h-1zM157 327h1v1h-1zM157 387h1v1h-1zM157 388h1v1h-1zM157 394h1v1h-1zM158 108h1v1h-1zM158 319h1v1h-1zM158 320h1v1h-1zM158 329h1v1h-1zM158 338h1v1h-1zM159 110h1v1h-1zM159 331h1v1h-1zM159 332h1v1h-1zM159 337h1v1h-1zM159 394h1v1h-1zM159 409h1v1h-1zM160 105h1v1h-1zM160 106h1v1h-1zM160 107h1v1h-1zM160 109h1v1h-1zM160 110h1v1h-1zM160 111h1v1h-1zM160 336h1v1h-1zM160 338h1v1h-1zM161 329h1v1h-1zM161 330h1v1h-1zM161 337h1v1h-1zM161 338h1v1h-1zM161 339h1v1h-1zM161 394h1v1h-1zM162 109h1v1h-1zM162 328h1v1h-1zM162 329h1v1h-1zM162 330h1v1h-1zM162 331h1v1h-1zM162 332h1v1h-1zM162 344h1v1h-1zM162 395h1v1h-1zM163 110h1v1h-1zM163 330h1v1h-1zM163 333h1v1h-1zM163 340h1v1h-1zM163 341h1v1h-1zM163 342h1v1h-1zM163 343h1v1h-1zM163 385h1v1h-1zM163 514h1v1h-1zM164 313h1v1h-1zM164 314h1v1h-1zM164 331h1v1h-1zM164 334h1v1h-1zM164 339h1v1h-1zM164 340h1v1h-1zM164 343h1v1h-1zM164 384h1v1h-1zM164 514h1v1h-1zM165 178h1v1h-1zM165 332h1v1h-1zM165 385h1v1h-1zM165 513h1v1h-1zM165 514h1v1h-1zM166 139h1v1h-1zM167 266h1v1h-1zM167 338h1v1h-1zM167 386h1v1h-1zM168 68h1v1h-1zM168 73h1v1h-1zM168 74h1v1h-1zM168 76h1v1h-1zM168 78h1v1h-1zM168 110h1v1h-1zM168 338h1v1h-1zM168 386h1v1h-1zM168 387h1v1h-1zM169 67h1v1h-1zM169 74h1v1h-1zM169 75h1v1h-1zM169 77h1v1h-1zM169 78h1v1h-1zM169 386h1v1h-1zM170 66h1v1h-1zM170 76h1v1h-1zM170 77h1v1h-1zM170 78h1v1h-1zM170 189h1v1h-1zM170 389h1v1h-1zM171 10h1v1h-1zM171 67h1v1h-1zM171 79h1v1h-1zM171 189h1v1h-1zM171 392h1v1h-1zM171 393h1v1h-1zM172 10h1v1h-1zM172 11h1v1h-1zM172 64h1v1h-1zM172 68h1v1h-1zM172 75h1v1h-1zM172 76h1v1h-1zM172 79h1v1h-1zM173 11h1v1h-1zM173 65h1v1h-1zM173 66h1v1h-1zM173 67h1v1h-1zM173 69h1v1h-1zM173 75h1v1h-1zM173 76h1v1h-1zM173 77h1v1h-1zM173 79h1v1h-1zM173 81h1v1h-1zM173 328h1v1h-1zM173 334h1v1h-1zM173 337h1v1h-1zM173 339h1v1h-1zM173 392h1v1h-1zM174 8h1v1h-1zM174 9h1v1h-1zM174 10h1v1h-1zM174 64h1v1h-1zM174 65h1v1h-1zM174 67h1v1h-1zM174 68h1v1h-1zM174 70h1v1h-1zM174 75h1v1h-1zM174 76h1v1h-1zM174 78h1v1h-1zM174 80h1v1h-1zM174 81h1v1h-1zM174 187h1v1h-1zM174 338h1v1h-1zM174 391h1v1h-1zM175 9h1v1h-1zM175 11h1v1h-1zM175 63h1v1h-1zM175 64h1v1h-1zM175 66h1v1h-1zM175 73h1v1h-1zM175 80h1v1h-1zM175 86h1v1h-1zM175 333h1v1h-1zM175 339h1v1h-1zM175 390h1v1h-1zM175 443h1v1h-1zM175 444h1v1h-1zM176 9h1v1h-1zM176 10h1v1h-1zM176 62h1v1h-1zM176 64h1v1h-1zM176 66h1v1h-1zM176 67h1v1h-1zM176 68h1v1h-1zM176 80h1v1h-1zM176 85h1v1h-1zM176 332h1v1h-1zM176 333h1v1h-1zM176 337h1v1h-1zM176 338h1v1h-1zM177 68h1v1h-1zM177 69h1v1h-1zM177 70h1v1h-1zM177 71h1v1h-1zM177 84h1v1h-1zM177 335h1v1h-1zM177 337h1v1h-1zM177 338h1v1h-1zM177 339h1v1h-1zM178 9h1v1h-1zM178 10h1v1h-1zM178 67h1v1h-1zM178 69h1v1h-1zM178 70h1v1h-1zM178 72h1v1h-1zM178 79h1v1h-1zM178 80h1v1h-1zM178 330h1v1h-1zM178 334h1v1h-1zM178 335h1v1h-1zM178 337h1v1h-1zM178 339h1v1h-1zM178 340h1v1h-1zM179 23h1v1h-1zM179 64h1v1h-1zM179 69h1v1h-1zM179 70h1v1h-1zM179 71h1v1h-1zM179 72h1v1h-1zM179 73h1v1h-1zM179 74h1v1h-1zM179 80h1v1h-1zM179 311h1v1h-1zM179 330h1v1h-1zM179 331h1v1h-1zM179 334h1v1h-1zM179 335h1v1h-1zM179 336h1v1h-1zM179 339h1v1h-1zM179 447h1v1h-1zM179 448h1v1h-1zM179 449h1v1h-1zM179 484h1v1h-1zM180 68h1v1h-1zM180 70h1v1h-1zM180 72h1v1h-1zM180 74h1v1h-1zM180 77h1v1h-1zM180 310h1v1h-1zM180 312h1v1h-1zM180 330h1v1h-1zM180 333h1v1h-1zM180 334h1v1h-1zM180 335h1v1h-1zM180 338h1v1h-1zM180 339h1v1h-1zM180 342h1v1h-1zM180 426h1v1h-1zM180 445h1v1h-1zM180 446h1v1h-1zM181 67h1v1h-1zM181 69h1v1h-1zM181 72h1v1h-1zM181 73h1v1h-1zM181 309h1v1h-1zM181 313h1v1h-1zM181 326h1v1h-1zM181 327h1v1h-1zM181 330h1v1h-1zM181 332h1v1h-1zM181 333h1v1h-1zM181 334h1v1h-1zM181 335h1v1h-1zM181 336h1v1h-1zM181 337h1v1h-1zM181 338h1v1h-1zM181 340h1v1h-1zM181 343h1v1h-1zM181 442h1v1h-1zM181 443h1v1h-1zM181 457h1v1h-1zM182 10h1v1h-1zM182 11h1v1h-1zM182 67h1v1h-1zM182 71h1v1h-1zM182 72h1v1h-1zM182 75h1v1h-1zM182 76h1v1h-1zM182 95h1v1h-1zM182 172h1v1h-1zM182 328h1v1h-1zM182 331h1v1h-1zM182 332h1v1h-1zM182 333h1v1h-1zM182 334h1v1h-1zM182 335h1v1h-1zM182 336h1v1h-1zM182 337h1v1h-1zM182 338h1v1h-1zM182 339h1v1h-1zM182 341h1v1h-1zM182 442h1v1h-1zM182 444h1v1h-1zM182 445h1v1h-1zM183 69h1v1h-1zM183 70h1v1h-1zM183 71h1v1h-1zM183 75h1v1h-1zM183 96h1v1h-1zM183 173h1v1h-1zM183 312h1v1h-1zM183 328h1v1h-1zM183 329h1v1h-1zM183 330h1v1h-1zM183 332h1v1h-1zM183 333h1v1h-1zM183 334h1v1h-1zM183 335h1v1h-1zM183 336h1v1h-1zM183 337h1v1h-1zM183 341h1v1h-1zM183 342h1v1h-1zM183 442h1v1h-1zM183 444h1v1h-1zM183 445h1v1h-1zM183 446h1v1h-1zM183 448h1v1h-1zM184 8h1v1h-1zM184 69h1v1h-1zM184 70h1v1h-1zM184 71h1v1h-1zM184 312h1v1h-1zM184 326h1v1h-1zM184 327h1v1h-1zM184 331h1v1h-1zM184 333h1v1h-1zM184 334h1v1h-1zM184 335h1v1h-1zM184 336h1v1h-1zM184 338h1v1h-1zM184 340h1v1h-1zM184 444h1v1h-1zM184 447h1v1h-1zM185 8h1v1h-1zM185 9h1v1h-1zM185 68h1v1h-1zM185 69h1v1h-1zM185 71h1v1h-1zM185 74h1v1h-1zM185 243h1v1h-1zM185 330h1v1h-1zM185 331h1v1h-1zM185 332h1v1h-1zM185 333h1v1h-1zM185 334h1v1h-1zM185 335h1v1h-1zM185 336h1v1h-1zM185 337h1v1h-1zM185 339h1v1h-1zM185 341h1v1h-1zM186 68h1v1h-1zM186 73h1v1h-1zM186 76h1v1h-1zM186 77h1v1h-1zM186 196h1v1h-1zM186 326h1v1h-1zM186 327h1v1h-1zM186 329h1v1h-1zM186 330h1v1h-1zM186 331h1v1h-1zM186 333h1v1h-1zM186 334h1v1h-1zM186 335h1v1h-1zM186 336h1v1h-1zM186 338h1v1h-1zM186 339h1v1h-1zM186 340h1v1h-1zM186 341h1v1h-1zM187 68h1v1h-1zM187 73h1v1h-1zM187 75h1v1h-1zM187 77h1v1h-1zM187 78h1v1h-1zM187 297h1v1h-1zM187 330h1v1h-1zM187 331h1v1h-1zM187 332h1v1h-1zM187 333h1v1h-1zM187 334h1v1h-1zM187 335h1v1h-1zM187 337h1v1h-1zM187 338h1v1h-1zM187 339h1v1h-1zM187 340h1v1h-1zM187 341h1v1h-1zM187 343h1v1h-1zM188 72h1v1h-1zM188 73h1v1h-1zM188 74h1v1h-1zM188 76h1v1h-1zM188 77h1v1h-1zM188 78h1v1h-1zM188 79h1v1h-1zM188 80h1v1h-1zM188 316h1v1h-1zM188 331h1v1h-1zM188 333h1v1h-1zM188 334h1v1h-1zM188 335h1v1h-1zM188 336h1v1h-1zM188 337h1v1h-1zM188 338h1v1h-1zM188 339h1v1h-1zM188 340h1v1h-1zM188 343h1v1h-1zM189 74h1v1h-1zM189 75h1v1h-1zM189 76h1v1h-1zM189 78h1v1h-1zM189 332h1v1h-1zM189 334h1v1h-1zM189 335h1v1h-1zM189 336h1v1h-1zM189 337h1v1h-1zM189 338h1v1h-1zM189 340h1v1h-1zM189 342h1v1h-1zM190 76h1v1h-1zM190 78h1v1h-1zM190 123h1v1h-1zM190 331h1v1h-1zM190 332h1v1h-1zM190 333h1v1h-1zM190 334h1v1h-1zM190 335h1v1h-1zM190 336h1v1h-1zM190 338h1v1h-1zM190 339h1v1h-1zM190 340h1v1h-1zM190 341h1v1h-1zM190 480h1v1h-1zM191 71h1v1h-1zM191 72h1v1h-1zM191 75h1v1h-1zM191 329h1v1h-1zM191 332h1v1h-1zM191 333h1v1h-1zM191 334h1v1h-1zM191 335h1v1h-1zM191 336h1v1h-1zM191 338h1v1h-1zM191 340h1v1h-1zM192 120h1v1h-1zM192 332h1v1h-1zM192 333h1v1h-1zM192 334h1v1h-1zM192 337h1v1h-1zM193 121h1v1h-1zM193 122h1v1h-1zM193 333h1v1h-1zM193 334h1v1h-1zM193 335h1v1h-1zM194 121h1v1h-1zM194 331h1v1h-1zM194 333h1v1h-1zM194 335h1v1h-1zM194 336h1v1h-1zM194 337h1v1h-1zM195 122h1v1h-1zM195 332h1v1h-1zM195 339h1v1h-1zM196 337h1v1h-1zM196 338h1v1h-1zM196 339h1v1h-1zM196 340h1v1h-1zM197 284h1v1h-1zM197 285h1v1h-1zM197 328h1v1h-1zM197 337h1v1h-1zM197 339h1v1h-1zM198 284h1v1h-1zM198 327h1v1h-1zM199 282h1v1h-1zM200 193h1v1h-1zM200 269h1v1h-1zM200 282h1v1h-1zM201 3h1v1h-1zM201 192h1v1h-1zM201 268h1v1h-1zM201 280h1v1h-1zM202 79h1v1h-1zM202 267h1v1h-1zM202 268h1v1h-1zM202 280h1v1h-1zM202 281h1v1h-1zM202 283h1v1h-1zM202 297h1v1h-1zM203 28h1v1h-1zM203 29h1v1h-1zM203 218h1v1h-1zM203 268h1v1h-1zM203 269h1v1h-1zM203 282h1v1h-1zM203 296h1v1h-1zM204 25h1v1h-1zM204 26h1v1h-1zM204 141h1v1h-1zM204 270h1v1h-1zM204 278h1v1h-1zM204 282h1v1h-1zM204 499h1v1h-1zM205 18h1v1h-1zM205 19h1v1h-1zM205 24h1v1h-1zM205 25h1v1h-1zM205 26h1v1h-1zM205 264h1v1h-1zM205 273h1v1h-1zM205 275h1v1h-1zM205 276h1v1h-1zM205 278h1v1h-1zM205 282h1v1h-1zM205 500h1v1h-1zM206 18h1v1h-1zM206 20h1v1h-1zM206 259h1v1h-1zM206 263h1v1h-1zM206 264h1v1h-1zM206 274h1v1h-1zM206 277h1v1h-1zM206 278h1v1h-1zM206 496h1v1h-1zM206 518h1v1h-1zM207 22h1v1h-1zM207 257h1v1h-1zM207 262h1v1h-1zM207 275h1v1h-1zM207 276h1v1h-1zM207 277h1v1h-1zM207 278h1v1h-1zM207 279h1v1h-1zM207 475h1v1h-1zM208 12h1v1h-1zM208 18h1v1h-1zM208 20h1v1h-1zM208 23h1v1h-1zM208 259h1v1h-1zM208 260h1v1h-1zM208 274h1v1h-1zM208 497h1v1h-1zM209 11h1v1h-1zM209 13h1v1h-1zM209 14h1v1h-1zM209 18h1v1h-1zM209 254h1v1h-1zM209 255h1v1h-1zM209 256h1v1h-1zM209 257h1v1h-1zM209 258h1v1h-1zM209 259h1v1h-1zM209 498h1v1h-1zM210 11h1v1h-1zM210 12h1v1h-1zM210 16h1v1h-1zM210 17h1v1h-1zM210 85h1v1h-1zM210 86h1v1h-1zM210 252h1v1h-1zM210 254h1v1h-1zM210 255h1v1h-1zM210 274h1v1h-1zM211 11h1v1h-1zM211 13h1v1h-1zM211 14h1v1h-1zM211 15h1v1h-1zM211 275h1v1h-1zM212 11h1v1h-1zM212 12h1v1h-1zM212 13h1v1h-1zM212 273h1v1h-1zM212 274h1v1h-1zM212 275h1v1h-1zM212 276h1v1h-1zM212 277h1v1h-1zM213 3h1v1h-1zM213 11h1v1h-1zM213 464h1v1h-1zM214 2h1v1h-1zM214 4h1v1h-1zM215 1h1v1h-1zM216 225h1v1h-1zM216 410h1v1h-1zM216 413h1v1h-1zM216 421h1v1h-1zM216 422h1v1h-1zM216 493h1v1h-1zM216 495h1v1h-1zM217 224h1v1h-1zM217 335h1v1h-1zM217 411h1v1h-1zM217 412h1v1h-1zM217 413h1v1h-1zM217 441h1v1h-1zM217 442h1v1h-1zM217 448h1v1h-1zM217 492h1v1h-1zM217 494h1v1h-1zM217 495h1v1h-1zM218 412h1v1h-1zM218 415h1v1h-1zM218 445h1v1h-1zM218 446h1v1h-1zM218 495h1v1h-1zM219 412h1v1h-1zM219 413h1v1h-1zM219 415h1v1h-1zM219 439h1v1h-1zM219 440h1v1h-1zM219 441h1v1h-1zM219 445h1v1h-1zM219 446h1v1h-1zM219 448h1v1h-1zM219 493h1v1h-1zM219 494h1v1h-1zM220 171h1v1h-1zM220 407h1v1h-1zM220 412h1v1h-1zM220 415h1v1h-1zM220 441h1v1h-1zM220 445h1v1h-1zM220 446h1v1h-1zM220 451h1v1h-1zM220 494h1v1h-1zM221 172h1v1h-1zM221 173h1v1h-1zM221 174h1v1h-1zM221 211h1v1h-1zM221 218h1v1h-1zM221 407h1v1h-1zM221 408h1v1h-1zM221 411h1v1h-1zM221 413h1v1h-1zM221 414h1v1h-1zM221 415h1v1h-1zM221 416h1v1h-1zM221 417h1v1h-1zM221 423h1v1h-1zM221 446h1v1h-1zM221 493h1v1h-1zM222 211h1v1h-1zM222 212h1v1h-1zM222 311h1v1h-1zM222 408h1v1h-1zM222 410h1v1h-1zM222 411h1v1h-1zM222 412h1v1h-1zM222 413h1v1h-1zM222 414h1v1h-1zM222 415h1v1h-1zM222 416h1v1h-1zM222 417h1v1h-1zM222 446h1v1h-1zM222 493h1v1h-1zM223 178h1v1h-1zM223 211h1v1h-1zM223 212h1v1h-1zM223 386h1v1h-1zM223 410h1v1h-1zM223 413h1v1h-1zM223 415h1v1h-1zM223 464h1v1h-1zM223 493h1v1h-1zM224 157h1v1h-1zM224 158h1v1h-1zM224 174h1v1h-1zM224 177h1v1h-1zM224 211h1v1h-1zM224 212h1v1h-1zM224 213h1v1h-1zM224 214h1v1h-1zM224 219h1v1h-1zM224 374h1v1h-1zM224 410h1v1h-1zM224 411h1v1h-1zM224 413h1v1h-1zM224 414h1v1h-1zM224 415h1v1h-1zM224 493h1v1h-1zM224 497h1v1h-1zM225 154h1v1h-1zM225 155h1v1h-1zM225 156h1v1h-1zM225 157h1v1h-1zM225 173h1v1h-1zM225 176h1v1h-1zM225 211h1v1h-1zM225 212h1v1h-1zM225 215h1v1h-1zM225 216h1v1h-1zM225 387h1v1h-1zM225 388h1v1h-1zM225 406h1v1h-1zM225 411h1v1h-1zM225 412h1v1h-1zM225 413h1v1h-1zM225 414h1v1h-1zM225 415h1v1h-1zM225 492h1v1h-1zM225 493h1v1h-1zM226 154h1v1h-1zM226 174h1v1h-1zM226 209h1v1h-1zM226 212h1v1h-1zM226 213h1v1h-1zM226 214h1v1h-1zM226 216h1v1h-1zM226 220h1v1h-1zM226 406h1v1h-1zM226 408h1v1h-1zM226 410h1v1h-1zM226 411h1v1h-1zM226 414h1v1h-1zM226 415h1v1h-1zM226 416h1v1h-1zM226 418h1v1h-1zM226 419h1v1h-1zM226 491h1v1h-1zM226 492h1v1h-1zM227 153h1v1h-1zM227 155h1v1h-1zM227 213h1v1h-1zM227 216h1v1h-1zM227 308h1v1h-1zM227 408h1v1h-1zM227 409h1v1h-1zM227 410h1v1h-1zM227 413h1v1h-1zM227 414h1v1h-1zM227 415h1v1h-1zM227 416h1v1h-1zM227 419h1v1h-1zM227 420h1v1h-1zM227 421h1v1h-1zM228 154h1v1h-1zM228 216h1v1h-1zM228 217h1v1h-1zM228 218h1v1h-1zM228 298h1v1h-1zM228 307h1v1h-1zM228 312h1v1h-1zM228 409h1v1h-1zM228 412h1v1h-1zM228 414h1v1h-1zM228 416h1v1h-1zM228 417h1v1h-1zM228 418h1v1h-1zM228 420h1v1h-1zM229 215h1v1h-1zM229 217h1v1h-1zM229 296h1v1h-1zM229 300h1v1h-1zM229 301h1v1h-1zM229 302h1v1h-1zM229 306h1v1h-1zM229 312h1v1h-1zM229 411h1v1h-1zM229 413h1v1h-1zM229 414h1v1h-1zM229 416h1v1h-1zM229 417h1v1h-1zM229 491h1v1h-1zM230 215h1v1h-1zM230 217h1v1h-1zM230 218h1v1h-1zM230 297h1v1h-1zM230 300h1v1h-1zM230 301h1v1h-1zM230 302h1v1h-1zM230 303h1v1h-1zM230 304h1v1h-1zM230 311h1v1h-1zM230 312h1v1h-1zM230 346h1v1h-1zM230 407h1v1h-1zM230 418h1v1h-1zM230 419h1v1h-1zM230 420h1v1h-1zM230 492h1v1h-1zM231 180h1v1h-1zM231 181h1v1h-1zM231 214h1v1h-1zM231 216h1v1h-1zM231 217h1v1h-1zM231 220h1v1h-1zM231 296h1v1h-1zM231 300h1v1h-1zM231 302h1v1h-1zM231 303h1v1h-1zM231 304h1v1h-1zM231 310h1v1h-1zM231 312h1v1h-1zM231 331h1v1h-1zM231 345h1v1h-1zM231 406h1v1h-1zM231 417h1v1h-1zM231 492h1v1h-1zM232 154h1v1h-1zM232 216h1v1h-1zM232 218h1v1h-1zM232 219h1v1h-1zM232 220h1v1h-1zM232 224h1v1h-1zM232 294h1v1h-1zM232 297h1v1h-1zM232 302h1v1h-1zM232 303h1v1h-1zM232 304h1v1h-1zM232 307h1v1h-1zM232 311h1v1h-1zM232 405h1v1h-1zM232 414h1v1h-1zM232 482h1v1h-1zM232 490h1v1h-1zM232 491h1v1h-1zM233 113h1v1h-1zM233 152h1v1h-1zM233 217h1v1h-1zM233 218h1v1h-1zM233 220h1v1h-1zM233 238h1v1h-1zM233 240h1v1h-1zM233 242h1v1h-1zM233 301h1v1h-1zM233 302h1v1h-1zM233 305h1v1h-1zM233 312h1v1h-1zM233 313h1v1h-1zM233 383h1v1h-1zM233 414h1v1h-1zM233 493h1v1h-1zM234 114h1v1h-1zM234 151h1v1h-1zM234 152h1v1h-1zM234 153h1v1h-1zM234 193h1v1h-1zM234 223h1v1h-1zM234 226h1v1h-1zM234 239h1v1h-1zM234 240h1v1h-1zM234 242h1v1h-1zM234 302h1v1h-1zM234 304h1v1h-1zM234 305h1v1h-1zM234 311h1v1h-1zM234 388h1v1h-1zM234 414h1v1h-1zM235 152h1v1h-1zM235 194h1v1h-1zM235 222h1v1h-1zM235 227h1v1h-1zM235 238h1v1h-1zM235 239h1v1h-1zM235 240h1v1h-1zM235 241h1v1h-1zM235 262h1v1h-1zM235 294h1v1h-1zM235 364h1v1h-1zM235 368h1v1h-1zM236 150h1v1h-1zM236 151h1v1h-1zM236 152h1v1h-1zM236 221h1v1h-1zM236 224h1v1h-1zM236 238h1v1h-1zM236 241h1v1h-1zM236 263h1v1h-1zM236 362h1v1h-1zM236 364h1v1h-1zM236 366h1v1h-1zM236 373h1v1h-1zM237 149h1v1h-1zM237 151h1v1h-1zM237 225h1v1h-1zM237 239h1v1h-1zM237 242h1v1h-1zM237 361h1v1h-1zM237 362h1v1h-1zM237 363h1v1h-1zM237 364h1v1h-1zM237 366h1v1h-1zM237 490h1v1h-1zM238 152h1v1h-1zM238 243h1v1h-1zM238 354h1v1h-1zM238 355h1v1h-1zM238 356h1v1h-1zM238 357h1v1h-1zM238 359h1v1h-1zM238 491h1v1h-1zM239 353h1v1h-1zM239 355h1v1h-1zM239 356h1v1h-1zM239 360h1v1h-1zM239 361h1v1h-1zM239 362h1v1h-1zM240 101h1v1h-1zM240 151h1v1h-1zM240 355h1v1h-1zM240 358h1v1h-1zM240 361h1v1h-1zM240 362h1v1h-1zM240 363h1v1h-1zM240 367h1v1h-1zM241 102h1v1h-1zM241 354h1v1h-1zM241 357h1v1h-1zM241 359h1v1h-1zM241 360h1v1h-1zM241 361h1v1h-1zM241 362h1v1h-1zM241 364h1v1h-1zM241 365h1v1h-1zM242 6h1v1h-1zM242 24h1v1h-1zM242 25h1v1h-1zM242 229h1v1h-1zM242 352h1v1h-1zM242 353h1v1h-1zM242 356h1v1h-1zM242 359h1v1h-1zM242 360h1v1h-1zM242 361h1v1h-1zM242 365h1v1h-1zM242 366h1v1h-1zM242 367h1v1h-1zM243 16h1v1h-1zM243 146h1v1h-1zM243 147h1v1h-1zM243 148h1v1h-1zM243 322h1v1h-1zM243 355h1v1h-1zM243 359h1v1h-1zM243 360h1v1h-1zM243 361h1v1h-1zM243 364h1v1h-1zM243 365h1v1h-1zM243 366h1v1h-1zM243 367h1v1h-1zM244 5h1v1h-1zM244 6h1v1h-1zM244 7h1v1h-1zM244 9h1v1h-1zM244 13h1v1h-1zM244 14h1v1h-1zM244 16h1v1h-1zM244 26h1v1h-1zM244 145h1v1h-1zM244 147h1v1h-1zM244 148h1v1h-1zM244 149h1v1h-1zM244 153h1v1h-1zM244 281h1v1h-1zM244 314h1v1h-1zM244 318h1v1h-1zM244 320h1v1h-1zM244 360h1v1h-1zM244 361h1v1h-1zM244 364h1v1h-1zM244 367h1v1h-1zM244 373h1v1h-1zM244 499h1v1h-1zM245 6h1v1h-1zM245 9h1v1h-1zM245 13h1v1h-1zM245 25h1v1h-1zM245 26h1v1h-1zM245 27h1v1h-1zM245 144h1v1h-1zM245 147h1v1h-1zM245 148h1v1h-1zM245 151h1v1h-1zM245 152h1v1h-1zM245 315h1v1h-1zM245 316h1v1h-1zM245 317h1v1h-1zM245 320h1v1h-1zM245 358h1v1h-1zM245 359h1v1h-1zM245 362h1v1h-1zM245 363h1v1h-1zM245 364h1v1h-1zM245 367h1v1h-1zM245 374h1v1h-1zM245 499h1v1h-1zM246 13h1v1h-1zM246 14h1v1h-1zM246 21h1v1h-1zM246 26h1v1h-1zM246 27h1v1h-1zM246 142h1v1h-1zM246 145h1v1h-1zM246 146h1v1h-1zM246 151h1v1h-1zM246 314h1v1h-1zM246 316h1v1h-1zM246 324h1v1h-1zM246 356h1v1h-1zM246 361h1v1h-1zM246 365h1v1h-1zM246 367h1v1h-1zM246 368h1v1h-1zM246 375h1v1h-1zM246 444h1v1h-1zM246 499h1v1h-1zM247 14h1v1h-1zM247 20h1v1h-1zM247 22h1v1h-1zM247 25h1v1h-1zM247 26h1v1h-1zM247 143h1v1h-1zM247 146h1v1h-1zM247 147h1v1h-1zM247 148h1v1h-1zM247 314h1v1h-1zM247 316h1v1h-1zM247 317h1v1h-1zM247 319h1v1h-1zM247 323h1v1h-1zM247 355h1v1h-1zM247 360h1v1h-1zM247 364h1v1h-1zM247 367h1v1h-1zM247 444h1v1h-1zM247 498h1v1h-1zM248 25h1v1h-1zM248 144h1v1h-1zM248 147h1v1h-1zM248 312h1v1h-1zM248 313h1v1h-1zM248 315h1v1h-1zM248 316h1v1h-1zM248 318h1v1h-1zM248 324h1v1h-1zM248 362h1v1h-1zM248 364h1v1h-1zM248 366h1v1h-1zM248 367h1v1h-1zM248 497h1v1h-1zM249 148h1v1h-1zM249 151h1v1h-1zM249 291h1v1h-1zM249 292h1v1h-1zM249 296h1v1h-1zM249 313h1v1h-1zM249 314h1v1h-1zM249 318h1v1h-1zM249 323h1v1h-1zM249 359h1v1h-1zM249 361h1v1h-1zM249 366h1v1h-1zM250 296h1v1h-1zM250 313h1v1h-1zM250 323h1v1h-1zM250 367h1v1h-1zM250 430h1v1h-1zM251 55h1v1h-1zM251 207h1v1h-1zM251 208h1v1h-1zM251 289h1v1h-1zM251 290h1v1h-1zM251 324h1v1h-1zM251 360h1v1h-1zM251 361h1v1h-1zM251 362h1v1h-1zM251 368h1v1h-1zM252 45h1v1h-1zM252 190h1v1h-1zM252 205h1v1h-1zM252 207h1v1h-1zM252 289h1v1h-1zM252 292h1v1h-1zM252 360h1v1h-1zM252 361h1v1h-1zM252 451h1v1h-1zM253 204h1v1h-1zM253 205h1v1h-1zM253 285h1v1h-1zM253 288h1v1h-1zM253 291h1v1h-1zM253 293h1v1h-1zM253 327h1v1h-1zM253 330h1v1h-1zM253 361h1v1h-1zM253 452h1v1h-1zM253 461h1v1h-1zM253 494h1v1h-1zM254 54h1v1h-1zM254 68h1v1h-1zM254 205h1v1h-1zM254 290h1v1h-1zM254 294h1v1h-1zM254 327h1v1h-1zM254 328h1v1h-1zM254 329h1v1h-1zM254 461h1v1h-1zM255 34h1v1h-1zM255 55h1v1h-1zM255 60h1v1h-1zM255 143h1v1h-1zM255 148h1v1h-1zM255 150h1v1h-1zM255 284h1v1h-1zM255 285h1v1h-1zM255 286h1v1h-1zM255 287h1v1h-1zM255 293h1v1h-1zM255 330h1v1h-1zM256 142h1v1h-1zM256 143h1v1h-1zM256 147h1v1h-1zM256 149h1v1h-1zM256 281h1v1h-1zM256 284h1v1h-1zM256 286h1v1h-1zM256 287h1v1h-1zM256 288h1v1h-1zM256 291h1v1h-1zM256 333h1v1h-1zM257 144h1v1h-1zM257 146h1v1h-1zM257 148h1v1h-1zM257 284h1v1h-1zM257 285h1v1h-1zM257 292h1v1h-1zM257 328h1v1h-1zM257 332h1v1h-1zM258 280h1v1h-1zM258 283h1v1h-1zM258 285h1v1h-1zM258 286h1v1h-1zM258 288h1v1h-1zM258 293h1v1h-1zM259 49h1v1h-1zM259 280h1v1h-1zM259 281h1v1h-1zM259 283h1v1h-1zM259 287h1v1h-1zM260 11h1v1h-1zM260 163h1v1h-1zM260 282h1v1h-1zM260 285h1v1h-1zM260 286h1v1h-1zM260 287h1v1h-1zM260 397h1v1h-1zM261 11h1v1h-1zM261 15h1v1h-1zM261 66h1v1h-1zM261 283h1v1h-1zM262 11h1v1h-1zM262 14h1v1h-1zM262 16h1v1h-1zM262 283h1v1h-1zM263 13h1v1h-1zM263 18h1v1h-1zM263 25h1v1h-1zM263 36h1v1h-1zM263 411h1v1h-1zM264 9h1v1h-1zM264 11h1v1h-1zM264 13h1v1h-1zM264 14h1v1h-1zM264 18h1v1h-1zM264 20h1v1h-1zM264 30h1v1h-1zM264 254h1v1h-1zM265 13h1v1h-1zM265 16h1v1h-1zM265 41h1v1h-1zM265 50h1v1h-1zM265 255h1v1h-1zM266 12h1v1h-1zM266 13h1v1h-1zM266 14h1v1h-1zM266 15h1v1h-1zM266 52h1v1h-1zM266 501h1v1h-1zM267 13h1v1h-1zM267 16h1v1h-1zM267 19h1v1h-1zM267 502h1v1h-1zM268 15h1v1h-1zM268 18h1v1h-1zM268 19h1v1h-1zM268 54h1v1h-1zM268 57h1v1h-1zM268 60h1v1h-1zM268 382h1v1h-1zM269 39h1v1h-1zM269 56h1v1h-1zM269 59h1v1h-1zM269 60h1v1h-1zM269 64h1v1h-1zM269 421h1v1h-1zM270 65h1v1h-1zM270 230h1v1h-1zM271 13h1v1h-1zM272 13h1v1h-1zM272 34h1v1h-1zM277 28h1v1h-1zM278 298h1v1h-1zM278 323h1v1h-1zM278 393h1v1h-1zM278 463h1v1h-1zM278 465h1v1h-1zM279 153h1v1h-1zM279 190h1v1h-1zM279 464h1v1h-1zM279 465h1v1h-1zM280 152h1v1h-1zM280 189h1v1h-1zM280 190h1v1h-1zM280 463h1v1h-1zM280 464h1v1h-1zM280 465h1v1h-1zM280 466h1v1h-1zM280 467h1v1h-1zM281 64h1v1h-1zM281 65h1v1h-1zM281 189h1v1h-1zM281 190h1v1h-1zM282 189h1v1h-1zM283 151h1v1h-1zM283 154h1v1h-1zM284 22h1v1h-1zM284 149h1v1h-1zM284 151h1v1h-1zM284 155h1v1h-1zM284 490h1v1h-1zM285 150h1v1h-1zM285 151h1v1h-1zM285 154h1v1h-1zM285 491h1v1h-1zM286 151h1v1h-1zM286 152h1v1h-1zM286 299h1v1h-1zM286 300h1v1h-1zM286 301h1v1h-1zM286 302h1v1h-1zM286 432h1v1h-1zM287 49h1v1h-1zM287 146h1v1h-1zM287 150h1v1h-1zM287 151h1v1h-1zM287 298h1v1h-1zM287 301h1v1h-1zM287 302h1v1h-1zM287 502h1v1h-1zM288 36h1v1h-1zM288 148h1v1h-1zM288 298h1v1h-1zM288 299h1v1h-1zM289 34h1v1h-1zM289 35h1v1h-1zM289 147h1v1h-1zM289 149h1v1h-1zM289 150h1v1h-1zM289 298h1v1h-1zM289 300h1v1h-1zM289 301h1v1h-1zM290 37h1v1h-1zM290 144h1v1h-1zM290 146h1v1h-1zM290 147h1v1h-1zM290 300h1v1h-1zM290 301h1v1h-1zM291 64h1v1h-1zM291 145h1v1h-1zM291 147h1v1h-1zM291 150h1v1h-1zM291 193h1v1h-1zM291 194h1v1h-1zM291 195h1v1h-1zM291 196h1v1h-1zM291 197h1v1h-1zM291 247h1v1h-1zM291 289h1v1h-1zM291 297h1v1h-1zM291 299h1v1h-1zM291 304h1v1h-1zM291 403h1v1h-1zM291 420h1v1h-1zM291 460h1v1h-1zM292 31h1v1h-1zM292 49h1v1h-1zM292 146h1v1h-1zM292 148h1v1h-1zM292 193h1v1h-1zM292 195h1v1h-1zM292 196h1v1h-1zM292 198h1v1h-1zM292 247h1v1h-1zM292 289h1v1h-1zM292 296h1v1h-1zM292 298h1v1h-1zM292 304h1v1h-1zM293 49h1v1h-1zM293 147h1v1h-1zM293 148h1v1h-1zM293 150h1v1h-1zM293 197h1v1h-1zM293 295h1v1h-1zM293 297h1v1h-1zM293 299h1v1h-1zM293 466h1v1h-1zM294 145h1v1h-1zM294 151h1v1h-1zM294 197h1v1h-1zM294 292h1v1h-1zM294 297h1v1h-1zM294 369h1v1h-1zM295 144h1v1h-1zM295 145h1v1h-1zM295 147h1v1h-1zM295 150h1v1h-1zM295 197h1v1h-1zM295 291h1v1h-1zM295 293h1v1h-1zM295 296h1v1h-1zM296 33h1v1h-1zM296 44h1v1h-1zM296 65h1v1h-1zM296 145h1v1h-1zM296 147h1v1h-1zM296 292h1v1h-1zM296 294h1v1h-1zM296 295h1v1h-1zM296 303h1v1h-1zM297 25h1v1h-1zM297 35h1v1h-1zM297 144h1v1h-1zM297 146h1v1h-1zM297 208h1v1h-1zM297 209h1v1h-1zM297 291h1v1h-1zM297 299h1v1h-1zM297 300h1v1h-1zM297 304h1v1h-1zM297 351h1v1h-1zM297 397h1v1h-1zM297 416h1v1h-1zM297 417h1v1h-1zM298 143h1v1h-1zM298 144h1v1h-1zM298 146h1v1h-1zM298 210h1v1h-1zM298 239h1v1h-1zM298 290h1v1h-1zM298 291h1v1h-1zM298 293h1v1h-1zM298 390h1v1h-1zM298 398h1v1h-1zM298 417h1v1h-1zM299 140h1v1h-1zM299 144h1v1h-1zM299 146h1v1h-1zM299 147h1v1h-1zM299 210h1v1h-1zM299 296h1v1h-1zM299 414h1v1h-1zM299 415h1v1h-1zM299 418h1v1h-1zM300 141h1v1h-1zM300 143h1v1h-1zM300 145h1v1h-1zM300 148h1v1h-1zM300 400h1v1h-1zM300 402h1v1h-1zM300 407h1v1h-1zM300 415h1v1h-1zM300 416h1v1h-1zM301 40h1v1h-1zM301 41h1v1h-1zM301 53h1v1h-1zM301 141h1v1h-1zM301 142h1v1h-1zM301 143h1v1h-1zM301 147h1v1h-1zM301 398h1v1h-1zM301 399h1v1h-1zM301 402h1v1h-1zM301 403h1v1h-1zM301 405h1v1h-1zM301 407h1v1h-1zM301 408h1v1h-1zM301 409h1v1h-1zM301 412h1v1h-1zM301 414h1v1h-1zM301 415h1v1h-1zM301 416h1v1h-1zM302 141h1v1h-1zM302 147h1v1h-1zM302 295h1v1h-1zM302 296h1v1h-1zM302 297h1v1h-1zM302 402h1v1h-1zM302 403h1v1h-1zM302 404h1v1h-1zM302 405h1v1h-1zM302 406h1v1h-1zM302 407h1v1h-1zM302 409h1v1h-1zM302 411h1v1h-1zM302 412h1v1h-1zM302 413h1v1h-1zM302 415h1v1h-1zM303 140h1v1h-1zM303 142h1v1h-1zM303 143h1v1h-1zM303 144h1v1h-1zM303 148h1v1h-1zM303 395h1v1h-1zM303 396h1v1h-1zM303 402h1v1h-1zM303 403h1v1h-1zM303 405h1v1h-1zM303 411h1v1h-1zM303 412h1v1h-1zM303 415h1v1h-1zM303 417h1v1h-1zM303 419h1v1h-1zM303 444h1v1h-1zM304 143h1v1h-1zM304 149h1v1h-1zM304 395h1v1h-1zM304 396h1v1h-1zM304 397h1v1h-1zM304 404h1v1h-1zM304 405h1v1h-1zM304 407h1v1h-1zM304 408h1v1h-1zM304 409h1v1h-1zM304 414h1v1h-1zM304 415h1v1h-1zM305 144h1v1h-1zM305 145h1v1h-1zM305 395h1v1h-1zM305 396h1v1h-1zM305 397h1v1h-1zM305 403h1v1h-1zM305 404h1v1h-1zM305 407h1v1h-1zM306 139h1v1h-1zM306 145h1v1h-1zM306 396h1v1h-1zM306 397h1v1h-1zM306 400h1v1h-1zM306 404h1v1h-1zM307 139h1v1h-1zM307 140h1v1h-1zM307 141h1v1h-1zM307 146h1v1h-1zM307 396h1v1h-1zM307 397h1v1h-1zM307 398h1v1h-1zM307 507h1v1h-1zM307 508h1v1h-1zM308 138h1v1h-1zM308 141h1v1h-1zM308 142h1v1h-1zM308 299h1v1h-1zM308 507h1v1h-1zM308 509h1v1h-1zM309 138h1v1h-1zM309 139h1v1h-1zM309 141h1v1h-1zM309 142h1v1h-1zM309 403h1v1h-1zM309 508h1v1h-1zM310 136h1v1h-1zM310 137h1v1h-1zM310 141h1v1h-1zM310 143h1v1h-1zM310 370h1v1h-1zM310 393h1v1h-1zM310 402h1v1h-1zM310 507h1v1h-1zM311 138h1v1h-1zM311 139h1v1h-1zM311 142h1v1h-1zM311 202h1v1h-1zM311 368h1v1h-1zM311 370h1v1h-1zM311 371h1v1h-1zM311 372h1v1h-1zM311 401h1v1h-1zM312 137h1v1h-1zM312 141h1v1h-1zM312 202h1v1h-1zM312 370h1v1h-1zM312 372h1v1h-1zM313 133h1v1h-1zM313 136h1v1h-1zM313 140h1v1h-1zM313 141h1v1h-1zM313 202h1v1h-1zM313 204h1v1h-1zM313 373h1v1h-1zM313 461h1v1h-1zM314 89h1v1h-1zM314 135h1v1h-1zM314 139h1v1h-1zM314 141h1v1h-1zM314 142h1v1h-1zM314 203h1v1h-1zM315 87h1v1h-1zM315 90h1v1h-1zM315 91h1v1h-1zM315 143h1v1h-1zM316 86h1v1h-1zM316 88h1v1h-1zM316 89h1v1h-1zM316 385h1v1h-1zM316 389h1v1h-1zM317 89h1v1h-1zM317 96h1v1h-1zM317 133h1v1h-1zM317 139h1v1h-1zM317 206h1v1h-1zM317 383h1v1h-1zM317 385h1v1h-1zM317 386h1v1h-1zM317 390h1v1h-1zM318 91h1v1h-1zM318 92h1v1h-1zM318 96h1v1h-1zM318 129h1v1h-1zM318 132h1v1h-1zM318 133h1v1h-1zM318 138h1v1h-1zM318 206h1v1h-1zM318 384h1v1h-1zM318 438h1v1h-1zM319 94h1v1h-1zM319 130h1v1h-1zM319 131h1v1h-1zM319 132h1v1h-1zM319 199h1v1h-1zM319 384h1v1h-1zM319 385h1v1h-1zM319 437h1v1h-1zM320 94h1v1h-1zM320 130h1v1h-1zM320 198h1v1h-1zM320 224h1v1h-1zM320 343h1v1h-1zM320 404h1v1h-1zM321 92h1v1h-1zM321 203h1v1h-1zM321 342h1v1h-1zM321 405h1v1h-1zM321 436h1v1h-1zM321 437h1v1h-1zM322 92h1v1h-1zM322 133h1v1h-1zM322 204h1v1h-1zM322 436h1v1h-1zM323 133h1v1h-1zM323 204h1v1h-1zM323 205h1v1h-1zM323 310h1v1h-1zM323 437h1v1h-1zM324 133h1v1h-1zM324 204h1v1h-1zM324 438h1v1h-1zM325 436h1v1h-1zM326 191h1v1h-1zM327 189h1v1h-1zM327 192h1v1h-1zM327 193h1v1h-1zM327 198h1v1h-1zM327 199h1v1h-1zM327 439h1v1h-1zM328 194h1v1h-1zM328 197h1v1h-1zM328 439h1v1h-1zM328 440h1v1h-1zM329 37h1v1h-1zM329 194h1v1h-1zM329 195h1v1h-1zM329 197h1v1h-1zM329 198h1v1h-1zM329 438h1v1h-1zM329 440h1v1h-1zM330 33h1v1h-1zM330 34h1v1h-1zM330 35h1v1h-1zM330 36h1v1h-1zM330 192h1v1h-1zM330 193h1v1h-1zM330 194h1v1h-1zM330 196h1v1h-1zM330 198h1v1h-1zM331 19h1v1h-1zM331 30h1v1h-1zM331 33h1v1h-1zM331 34h1v1h-1zM331 190h1v1h-1zM331 191h1v1h-1zM331 193h1v1h-1zM331 196h1v1h-1zM331 197h1v1h-1zM331 198h1v1h-1zM331 400h1v1h-1zM332 31h1v1h-1zM332 33h1v1h-1zM332 192h1v1h-1zM332 193h1v1h-1zM332 194h1v1h-1zM332 195h1v1h-1zM332 196h1v1h-1zM332 197h1v1h-1zM332 198h1v1h-1zM332 437h1v1h-1zM333 19h1v1h-1zM333 30h1v1h-1zM333 32h1v1h-1zM333 34h1v1h-1zM333 192h1v1h-1zM333 193h1v1h-1zM333 194h1v1h-1zM333 196h1v1h-1zM333 198h1v1h-1zM333 427h1v1h-1zM333 438h1v1h-1zM333 442h1v1h-1zM334 17h1v1h-1zM334 33h1v1h-1zM334 192h1v1h-1zM334 193h1v1h-1zM334 194h1v1h-1zM334 195h1v1h-1zM334 197h1v1h-1zM334 437h1v1h-1zM334 439h1v1h-1zM334 442h1v1h-1zM335 17h1v1h-1zM335 18h1v1h-1zM335 20h1v1h-1zM335 30h1v1h-1zM335 195h1v1h-1zM335 196h1v1h-1zM335 440h1v1h-1zM335 441h1v1h-1zM335 442h1v1h-1zM336 29h1v1h-1zM336 30h1v1h-1zM336 31h1v1h-1zM336 194h1v1h-1zM336 196h1v1h-1zM337 30h1v1h-1zM337 193h1v1h-1zM337 194h1v1h-1zM337 441h1v1h-1zM337 508h1v1h-1zM338 29h1v1h-1zM338 315h1v1h-1zM338 439h1v1h-1zM338 440h1v1h-1zM339 190h1v1h-1zM339 316h1v1h-1zM339 441h1v1h-1zM339 495h1v1h-1zM340 443h1v1h-1zM340 444h1v1h-1zM341 443h1v1h-1zM341 444h1v1h-1zM342 443h1v1h-1zM342 445h1v1h-1zM342 498h1v1h-1zM342 504h1v1h-1zM343 91h1v1h-1zM343 180h1v1h-1zM343 426h1v1h-1zM343 443h1v1h-1zM343 498h1v1h-1zM343 501h1v1h-1zM343 503h1v1h-1zM344 177h1v1h-1zM344 180h1v1h-1zM344 182h1v1h-1zM344 183h1v1h-1zM344 303h1v1h-1zM344 443h1v1h-1zM344 444h1v1h-1zM344 498h1v1h-1zM344 499h1v1h-1zM344 500h1v1h-1zM344 502h1v1h-1zM344 504h1v1h-1zM344 505h1v1h-1zM344 506h1v1h-1zM345 178h1v1h-1zM345 179h1v1h-1zM345 303h1v1h-1zM345 443h1v1h-1zM345 444h1v1h-1zM345 498h1v1h-1zM345 499h1v1h-1zM345 500h1v1h-1zM345 502h1v1h-1zM345 503h1v1h-1zM345 504h1v1h-1zM346 73h1v1h-1zM346 82h1v1h-1zM346 86h1v1h-1zM346 87h1v1h-1zM346 179h1v1h-1zM346 183h1v1h-1zM346 302h1v1h-1zM346 303h1v1h-1zM346 304h1v1h-1zM346 432h1v1h-1zM346 433h1v1h-1zM346 444h1v1h-1zM346 445h1v1h-1zM346 446h1v1h-1zM346 495h1v1h-1zM346 497h1v1h-1zM346 498h1v1h-1zM346 499h1v1h-1zM346 500h1v1h-1zM346 501h1v1h-1zM347 39h1v1h-1zM347 40h1v1h-1zM347 78h1v1h-1zM347 88h1v1h-1zM347 89h1v1h-1zM347 178h1v1h-1zM347 182h1v1h-1zM347 303h1v1h-1zM347 447h1v1h-1zM347 448h1v1h-1zM347 497h1v1h-1zM347 499h1v1h-1zM347 500h1v1h-1zM347 501h1v1h-1zM348 38h1v1h-1zM348 39h1v1h-1zM348 78h1v1h-1zM348 79h1v1h-1zM348 83h1v1h-1zM348 87h1v1h-1zM348 88h1v1h-1zM348 89h1v1h-1zM348 178h1v1h-1zM348 181h1v1h-1zM348 182h1v1h-1zM348 183h1v1h-1zM348 420h1v1h-1zM348 444h1v1h-1zM348 445h1v1h-1zM348 446h1v1h-1zM348 448h1v1h-1zM348 449h1v1h-1zM348 497h1v1h-1zM348 498h1v1h-1zM349 39h1v1h-1zM349 78h1v1h-1zM349 79h1v1h-1zM349 83h1v1h-1zM349 87h1v1h-1zM349 90h1v1h-1zM349 91h1v1h-1zM349 181h1v1h-1zM349 183h1v1h-1zM349 188h1v1h-1zM349 433h1v1h-1zM349 438h1v1h-1zM349 445h1v1h-1zM349 454h1v1h-1zM349 497h1v1h-1zM350 39h1v1h-1zM350 80h1v1h-1zM350 82h1v1h-1zM350 83h1v1h-1zM350 86h1v1h-1zM350 88h1v1h-1zM350 182h1v1h-1zM350 184h1v1h-1zM350 186h1v1h-1zM350 420h1v1h-1zM350 439h1v1h-1zM350 442h1v1h-1zM350 443h1v1h-1zM350 446h1v1h-1zM350 447h1v1h-1zM350 455h1v1h-1zM350 483h1v1h-1zM350 486h1v1h-1zM350 489h1v1h-1zM350 498h1v1h-1zM350 499h1v1h-1zM350 504h1v1h-1zM350 506h1v1h-1zM351 54h1v1h-1zM351 78h1v1h-1zM351 80h1v1h-1zM351 81h1v1h-1zM351 84h1v1h-1zM351 85h1v1h-1zM351 87h1v1h-1zM351 92h1v1h-1zM351 93h1v1h-1zM351 418h1v1h-1zM351 429h1v1h-1zM351 432h1v1h-1zM351 434h1v1h-1zM351 439h1v1h-1zM351 444h1v1h-1zM351 455h1v1h-1zM351 456h1v1h-1zM351 475h1v1h-1zM351 480h1v1h-1zM351 483h1v1h-1zM351 489h1v1h-1zM351 490h1v1h-1zM351 498h1v1h-1zM352 78h1v1h-1zM352 81h1v1h-1zM352 85h1v1h-1zM352 125h1v1h-1zM352 185h1v1h-1zM352 186h1v1h-1zM352 189h1v1h-1zM352 191h1v1h-1zM352 193h1v1h-1zM352 194h1v1h-1zM352 416h1v1h-1zM352 417h1v1h-1zM352 419h1v1h-1zM352 420h1v1h-1zM352 421h1v1h-1zM352 426h1v1h-1zM352 428h1v1h-1zM352 429h1v1h-1zM352 431h1v1h-1zM352 433h1v1h-1zM352 434h1v1h-1zM352 436h1v1h-1zM352 438h1v1h-1zM352 443h1v1h-1zM352 453h1v1h-1zM352 480h1v1h-1zM352 485h1v1h-1zM352 486h1v1h-1zM352 487h1v1h-1zM352 488h1v1h-1zM352 491h1v1h-1zM352 499h1v1h-1zM352 501h1v1h-1zM352 502h1v1h-1zM353 77h1v1h-1zM353 82h1v1h-1zM353 84h1v1h-1zM353 85h1v1h-1zM353 88h1v1h-1zM353 160h1v1h-1zM353 183h1v1h-1zM353 189h1v1h-1zM353 190h1v1h-1zM353 191h1v1h-1zM353 193h1v1h-1zM353 418h1v1h-1zM353 428h1v1h-1zM353 432h1v1h-1zM353 433h1v1h-1zM353 434h1v1h-1zM353 435h1v1h-1zM353 436h1v1h-1zM353 437h1v1h-1zM353 438h1v1h-1zM353 440h1v1h-1zM353 442h1v1h-1zM353 454h1v1h-1zM353 500h1v1h-1zM354 73h1v1h-1zM354 76h1v1h-1zM354 78h1v1h-1zM354 80h1v1h-1zM354 81h1v1h-1zM354 83h1v1h-1zM354 84h1v1h-1zM354 185h1v1h-1zM354 190h1v1h-1zM354 199h1v1h-1zM354 417h1v1h-1zM354 422h1v1h-1zM354 427h1v1h-1zM354 430h1v1h-1zM354 431h1v1h-1zM354 434h1v1h-1zM354 435h1v1h-1zM354 436h1v1h-1zM354 438h1v1h-1zM354 439h1v1h-1zM354 441h1v1h-1zM354 444h1v1h-1zM354 445h1v1h-1zM354 449h1v1h-1zM354 452h1v1h-1zM354 453h1v1h-1zM355 82h1v1h-1zM355 84h1v1h-1zM355 185h1v1h-1zM355 186h1v1h-1zM355 189h1v1h-1zM355 190h1v1h-1zM355 389h1v1h-1zM355 421h1v1h-1zM355 424h1v1h-1zM355 427h1v1h-1zM355 429h1v1h-1zM355 430h1v1h-1zM355 433h1v1h-1zM355 434h1v1h-1zM355 435h1v1h-1zM355 437h1v1h-1zM355 438h1v1h-1zM355 440h1v1h-1zM355 441h1v1h-1zM355 442h1v1h-1zM355 445h1v1h-1zM355 448h1v1h-1zM355 452h1v1h-1zM355 454h1v1h-1zM356 76h1v1h-1zM356 81h1v1h-1zM356 187h1v1h-1zM356 189h1v1h-1zM356 190h1v1h-1zM356 191h1v1h-1zM356 291h1v1h-1zM356 292h1v1h-1zM356 419h1v1h-1zM356 424h1v1h-1zM356 425h1v1h-1zM356 427h1v1h-1zM356 428h1v1h-1zM356 429h1v1h-1zM356 430h1v1h-1zM356 431h1v1h-1zM356 433h1v1h-1zM356 434h1v1h-1zM356 435h1v1h-1zM356 436h1v1h-1zM356 438h1v1h-1zM356 441h1v1h-1zM356 446h1v1h-1zM356 447h1v1h-1zM356 448h1v1h-1zM356 449h1v1h-1zM356 450h1v1h-1zM356 451h1v1h-1zM357 74h1v1h-1zM357 75h1v1h-1zM357 76h1v1h-1zM357 79h1v1h-1zM357 80h1v1h-1zM357 82h1v1h-1zM357 188h1v1h-1zM357 293h1v1h-1zM357 418h1v1h-1zM357 424h1v1h-1zM357 426h1v1h-1zM357 427h1v1h-1zM357 429h1v1h-1zM357 431h1v1h-1zM357 432h1v1h-1zM357 433h1v1h-1zM357 436h1v1h-1zM357 439h1v1h-1zM357 440h1v1h-1zM357 443h1v1h-1zM357 444h1v1h-1zM357 447h1v1h-1zM357 448h1v1h-1zM357 449h1v1h-1zM357 450h1v1h-1zM357 451h1v1h-1zM357 454h1v1h-1zM358 74h1v1h-1zM358 292h1v1h-1zM358 294h1v1h-1zM358 419h1v1h-1zM358 423h1v1h-1zM358 424h1v1h-1zM358 426h1v1h-1zM358 427h1v1h-1zM358 429h1v1h-1zM358 430h1v1h-1zM358 431h1v1h-1zM358 432h1v1h-1zM358 433h1v1h-1zM358 435h1v1h-1zM358 436h1v1h-1zM358 437h1v1h-1zM358 439h1v1h-1zM358 441h1v1h-1zM358 442h1v1h-1zM358 443h1v1h-1zM358 444h1v1h-1zM358 447h1v1h-1zM358 448h1v1h-1zM358 449h1v1h-1zM358 450h1v1h-1zM358 454h1v1h-1zM359 78h1v1h-1zM359 82h1v1h-1zM359 83h1v1h-1zM359 149h1v1h-1zM359 412h1v1h-1zM359 416h1v1h-1zM359 420h1v1h-1zM359 422h1v1h-1zM359 423h1v1h-1zM359 424h1v1h-1zM359 427h1v1h-1zM359 429h1v1h-1zM359 430h1v1h-1zM359 431h1v1h-1zM359 432h1v1h-1zM359 433h1v1h-1zM359 434h1v1h-1zM359 435h1v1h-1zM359 436h1v1h-1zM359 438h1v1h-1zM359 443h1v1h-1zM359 444h1v1h-1zM359 446h1v1h-1zM359 448h1v1h-1zM359 449h1v1h-1zM359 453h1v1h-1zM359 454h1v1h-1zM359 460h1v1h-1zM359 509h1v1h-1zM360 76h1v1h-1zM360 79h1v1h-1zM360 80h1v1h-1zM360 150h1v1h-1zM360 176h1v1h-1zM360 337h1v1h-1zM360 412h1v1h-1zM360 417h1v1h-1zM360 421h1v1h-1zM360 423h1v1h-1zM360 424h1v1h-1zM360 425h1v1h-1zM360 426h1v1h-1zM360 428h1v1h-1zM360 429h1v1h-1zM360 431h1v1h-1zM360 432h1v1h-1zM360 433h1v1h-1zM360 435h1v1h-1zM360 436h1v1h-1zM360 437h1v1h-1zM360 442h1v1h-1zM360 448h1v1h-1zM360 454h1v1h-1zM360 459h1v1h-1zM361 10h1v1h-1zM361 79h1v1h-1zM361 177h1v1h-1zM361 179h1v1h-1zM361 329h1v1h-1zM361 338h1v1h-1zM361 376h1v1h-1zM361 412h1v1h-1zM361 418h1v1h-1zM361 419h1v1h-1zM361 422h1v1h-1zM361 423h1v1h-1zM361 424h1v1h-1zM361 425h1v1h-1zM361 427h1v1h-1zM361 428h1v1h-1zM361 430h1v1h-1zM361 432h1v1h-1zM361 433h1v1h-1zM361 436h1v1h-1zM361 438h1v1h-1zM361 439h1v1h-1zM361 440h1v1h-1zM361 441h1v1h-1zM361 442h1v1h-1zM361 451h1v1h-1zM362 10h1v1h-1zM362 178h1v1h-1zM362 314h1v1h-1zM362 322h1v1h-1zM362 329h1v1h-1zM362 332h1v1h-1zM362 333h1v1h-1zM362 334h1v1h-1zM362 339h1v1h-1zM362 419h1v1h-1zM362 420h1v1h-1zM362 422h1v1h-1zM362 424h1v1h-1zM362 425h1v1h-1zM362 426h1v1h-1zM362 429h1v1h-1zM362 432h1v1h-1zM362 433h1v1h-1zM362 434h1v1h-1zM362 436h1v1h-1zM362 437h1v1h-1zM362 438h1v1h-1zM362 439h1v1h-1zM362 443h1v1h-1zM362 444h1v1h-1zM362 446h1v1h-1zM362 450h1v1h-1zM362 458h1v1h-1zM363 179h1v1h-1zM363 314h1v1h-1zM363 321h1v1h-1zM363 333h1v1h-1zM363 420h1v1h-1zM363 421h1v1h-1zM363 424h1v1h-1zM363 426h1v1h-1zM363 427h1v1h-1zM363 428h1v1h-1zM363 432h1v1h-1zM363 433h1v1h-1zM363 434h1v1h-1zM363 435h1v1h-1zM363 436h1v1h-1zM363 437h1v1h-1zM363 438h1v1h-1zM363 443h1v1h-1zM363 444h1v1h-1zM363 458h1v1h-1zM364 320h1v1h-1zM364 330h1v1h-1zM364 335h1v1h-1zM364 419h1v1h-1zM364 421h1v1h-1zM364 424h1v1h-1zM364 425h1v1h-1zM364 428h1v1h-1zM364 437h1v1h-1zM364 443h1v1h-1zM364 444h1v1h-1zM364 449h1v1h-1zM364 450h1v1h-1zM365 329h1v1h-1zM365 331h1v1h-1zM365 332h1v1h-1zM365 414h1v1h-1zM365 415h1v1h-1zM365 420h1v1h-1zM365 431h1v1h-1zM365 432h1v1h-1zM365 433h1v1h-1zM365 436h1v1h-1zM365 437h1v1h-1zM365 438h1v1h-1zM365 439h1v1h-1zM365 444h1v1h-1zM365 449h1v1h-1zM365 455h1v1h-1zM366 325h1v1h-1zM366 329h1v1h-1zM366 331h1v1h-1zM366 332h1v1h-1zM366 419h1v1h-1zM366 426h1v1h-1zM366 428h1v1h-1zM366 432h1v1h-1zM366 433h1v1h-1zM366 435h1v1h-1zM366 436h1v1h-1zM366 437h1v1h-1zM366 445h1v1h-1zM366 447h1v1h-1zM366 454h1v1h-1zM366 457h1v1h-1zM367 209h1v1h-1zM367 324h1v1h-1zM367 332h1v1h-1zM367 333h1v1h-1zM367 335h1v1h-1zM367 418h1v1h-1zM367 419h1v1h-1zM367 426h1v1h-1zM367 433h1v1h-1zM367 436h1v1h-1zM367 437h1v1h-1zM367 441h1v1h-1zM367 442h1v1h-1zM367 446h1v1h-1zM367 456h1v1h-1zM367 463h1v1h-1zM368 131h1v1h-1zM368 134h1v1h-1zM368 323h1v1h-1zM368 324h1v1h-1zM368 325h1v1h-1zM368 332h1v1h-1zM368 333h1v1h-1zM368 334h1v1h-1zM368 335h1v1h-1zM368 336h1v1h-1zM368 420h1v1h-1zM368 423h1v1h-1zM368 424h1v1h-1zM368 426h1v1h-1zM368 427h1v1h-1zM368 433h1v1h-1zM368 434h1v1h-1zM368 440h1v1h-1zM368 441h1v1h-1zM368 442h1v1h-1zM368 445h1v1h-1zM368 446h1v1h-1zM368 452h1v1h-1zM368 455h1v1h-1zM369 131h1v1h-1zM369 322h1v1h-1zM369 323h1v1h-1zM369 324h1v1h-1zM369 330h1v1h-1zM369 332h1v1h-1zM369 333h1v1h-1zM369 420h1v1h-1zM369 427h1v1h-1zM369 435h1v1h-1zM369 441h1v1h-1zM369 442h1v1h-1zM369 447h1v1h-1zM369 448h1v1h-1zM369 452h1v1h-1zM369 454h1v1h-1zM369 456h1v1h-1zM369 515h1v1h-1zM370 323h1v1h-1zM370 328h1v1h-1zM370 331h1v1h-1zM370 402h1v1h-1zM370 429h1v1h-1zM370 431h1v1h-1zM370 434h1v1h-1zM370 442h1v1h-1zM370 443h1v1h-1zM370 450h1v1h-1zM370 451h1v1h-1zM370 457h1v1h-1zM371 327h1v1h-1zM371 329h1v1h-1zM371 331h1v1h-1zM371 419h1v1h-1zM371 429h1v1h-1zM371 432h1v1h-1zM371 434h1v1h-1zM371 441h1v1h-1zM371 458h1v1h-1zM372 322h1v1h-1zM372 325h1v1h-1zM372 327h1v1h-1zM372 329h1v1h-1zM372 330h1v1h-1zM372 338h1v1h-1zM372 340h1v1h-1zM372 420h1v1h-1zM372 433h1v1h-1zM372 458h1v1h-1zM372 459h1v1h-1zM373 6h1v1h-1zM373 7h1v1h-1zM373 324h1v1h-1zM373 327h1v1h-1zM373 328h1v1h-1zM373 329h1v1h-1zM373 330h1v1h-1zM373 331h1v1h-1zM373 336h1v1h-1zM373 338h1v1h-1zM373 457h1v1h-1zM373 460h1v1h-1zM374 327h1v1h-1zM374 332h1v1h-1zM374 335h1v1h-1zM374 337h1v1h-1zM374 456h1v1h-1zM374 459h1v1h-1zM375 325h1v1h-1zM375 326h1v1h-1zM375 329h1v1h-1zM375 330h1v1h-1zM375 331h1v1h-1zM375 463h1v1h-1zM375 464h1v1h-1zM376 277h1v1h-1zM376 330h1v1h-1zM376 463h1v1h-1zM377 272h1v1h-1zM377 275h1v1h-1zM377 276h1v1h-1zM377 277h1v1h-1zM377 278h1v1h-1zM377 279h1v1h-1zM377 329h1v1h-1zM377 334h1v1h-1zM377 335h1v1h-1zM377 336h1v1h-1zM377 463h1v1h-1zM377 512h1v1h-1zM378 268h1v1h-1zM378 269h1v1h-1zM378 270h1v1h-1zM378 271h1v1h-1zM378 274h1v1h-1zM378 330h1v1h-1zM378 336h1v1h-1zM378 461h1v1h-1zM378 464h1v1h-1zM378 511h1v1h-1zM379 272h1v1h-1zM379 277h1v1h-1zM379 335h1v1h-1zM379 336h1v1h-1zM379 369h1v1h-1zM379 464h1v1h-1zM380 273h1v1h-1zM380 277h1v1h-1zM380 331h1v1h-1zM380 332h1v1h-1zM380 409h1v1h-1zM380 464h1v1h-1zM381 330h1v1h-1zM381 331h1v1h-1zM381 409h1v1h-1zM382 389h1v1h-1zM382 437h1v1h-1zM382 507h1v1h-1zM382 510h1v1h-1zM383 436h1v1h-1zM383 506h1v1h-1zM383 509h1v1h-1zM383 510h1v1h-1zM384 491h1v1h-1zM384 509h1v1h-1zM385 107h1v1h-1zM385 287h1v1h-1zM385 449h1v1h-1zM385 510h1v1h-1zM386 99h1v1h-1zM386 107h1v1h-1zM386 110h1v1h-1zM386 447h1v1h-1zM386 450h1v1h-1zM386 511h1v1h-1zM387 98h1v1h-1zM387 107h1v1h-1zM387 111h1v1h-1zM387 418h1v1h-1zM387 441h1v1h-1zM387 442h1v1h-1zM387 448h1v1h-1zM387 449h1v1h-1zM387 502h1v1h-1zM388 106h1v1h-1zM388 446h1v1h-1zM388 447h1v1h-1zM388 449h1v1h-1zM389 104h1v1h-1zM389 107h1v1h-1zM389 447h1v1h-1zM389 448h1v1h-1zM390 24h1v1h-1zM390 102h1v1h-1zM390 103h1v1h-1zM390 373h1v1h-1zM390 448h1v1h-1zM391 23h1v1h-1zM391 100h1v1h-1zM391 213h1v1h-1zM392 98h1v1h-1zM392 101h1v1h-1zM392 107h1v1h-1zM392 110h1v1h-1zM392 117h1v1h-1zM392 214h1v1h-1zM392 377h1v1h-1zM393 92h1v1h-1zM393 94h1v1h-1zM393 97h1v1h-1zM393 98h1v1h-1zM393 99h1v1h-1zM393 101h1v1h-1zM393 108h1v1h-1zM393 110h1v1h-1zM393 116h1v1h-1zM394 92h1v1h-1zM394 93h1v1h-1zM394 94h1v1h-1zM394 96h1v1h-1zM394 101h1v1h-1zM394 107h1v1h-1zM394 109h1v1h-1zM394 115h1v1h-1zM395 96h1v1h-1zM395 97h1v1h-1zM395 100h1v1h-1zM395 102h1v1h-1zM395 103h1v1h-1zM395 104h1v1h-1zM395 108h1v1h-1zM395 446h1v1h-1zM396 97h1v1h-1zM396 99h1v1h-1zM396 102h1v1h-1zM396 103h1v1h-1zM396 104h1v1h-1zM396 105h1v1h-1zM396 106h1v1h-1zM396 109h1v1h-1zM397 98h1v1h-1zM397 99h1v1h-1zM397 100h1v1h-1zM397 103h1v1h-1zM397 105h1v1h-1zM397 106h1v1h-1zM397 113h1v1h-1zM397 116h1v1h-1zM397 117h1v1h-1zM398 99h1v1h-1zM398 100h1v1h-1zM398 101h1v1h-1zM398 102h1v1h-1zM398 103h1v1h-1zM398 104h1v1h-1zM398 106h1v1h-1zM398 110h1v1h-1zM398 112h1v1h-1zM398 114h1v1h-1zM399 35h1v1h-1zM399 99h1v1h-1zM399 100h1v1h-1zM399 101h1v1h-1zM399 106h1v1h-1zM399 107h1v1h-1zM399 108h1v1h-1zM399 112h1v1h-1zM399 445h1v1h-1zM399 446h1v1h-1zM400 102h1v1h-1zM400 103h1v1h-1zM400 104h1v1h-1zM400 105h1v1h-1zM400 106h1v1h-1zM400 107h1v1h-1zM400 111h1v1h-1zM400 112h1v1h-1zM400 162h1v1h-1zM401 96h1v1h-1zM401 100h1v1h-1zM401 102h1v1h-1zM401 104h1v1h-1zM401 105h1v1h-1zM401 108h1v1h-1zM401 109h1v1h-1zM401 112h1v1h-1zM401 115h1v1h-1zM401 415h1v1h-1zM402 96h1v1h-1zM402 97h1v1h-1zM402 100h1v1h-1zM402 101h1v1h-1zM402 102h1v1h-1zM402 103h1v1h-1zM402 104h1v1h-1zM402 106h1v1h-1zM402 107h1v1h-1zM402 108h1v1h-1zM402 109h1v1h-1zM402 110h1v1h-1zM402 115h1v1h-1zM402 415h1v1h-1zM402 444h1v1h-1zM403 100h1v1h-1zM403 102h1v1h-1zM403 103h1v1h-1zM403 104h1v1h-1zM403 105h1v1h-1zM403 107h1v1h-1zM403 108h1v1h-1zM403 109h1v1h-1zM403 444h1v1h-1zM404 94h1v1h-1zM404 110h1v1h-1zM404 112h1v1h-1zM404 116h1v1h-1zM404 252h1v1h-1zM405 94h1v1h-1zM405 95h1v1h-1zM405 106h1v1h-1zM405 107h1v1h-1zM405 110h1v1h-1zM405 116h1v1h-1zM405 117h1v1h-1zM406 93h1v1h-1zM406 100h1v1h-1zM406 109h1v1h-1zM406 116h1v1h-1zM407 103h1v1h-1zM407 110h1v1h-1zM407 453h1v1h-1zM407 507h1v1h-1zM408 103h1v1h-1zM408 104h1v1h-1zM408 105h1v1h-1zM408 110h1v1h-1zM408 113h1v1h-1zM408 508h1v1h-1zM409 105h1v1h-1zM409 455h1v1h-1zM410 102h1v1h-1zM410 103h1v1h-1zM410 104h1v1h-1zM410 105h1v1h-1zM410 106h1v1h-1zM410 107h1v1h-1zM410 111h1v1h-1zM410 322h1v1h-1zM410 456h1v1h-1zM411 78h1v1h-1zM411 99h1v1h-1zM411 107h1v1h-1zM411 108h1v1h-1zM411 111h1v1h-1zM411 118h1v1h-1zM411 380h1v1h-1zM411 382h1v1h-1zM411 424h1v1h-1zM412 99h1v1h-1zM412 117h1v1h-1zM412 381h1v1h-1zM412 382h1v1h-1zM413 336h1v1h-1zM413 383h1v1h-1zM413 387h1v1h-1zM413 388h1v1h-1zM414 106h1v1h-1zM414 107h1v1h-1zM414 336h1v1h-1zM414 383h1v1h-1zM414 385h1v1h-1zM415 105h1v1h-1zM415 108h1v1h-1zM415 384h1v1h-1zM416 104h1v1h-1zM416 389h1v1h-1zM417 21h1v1h-1zM417 212h1v1h-1zM417 268h1v1h-1zM417 269h1v1h-1zM417 375h1v1h-1zM418 22h1v1h-1zM418 211h1v1h-1zM418 266h1v1h-1zM418 268h1v1h-1zM418 272h1v1h-1zM418 376h1v1h-1zM418 386h1v1h-1zM418 459h1v1h-1zM419 266h1v1h-1zM419 268h1v1h-1zM419 269h1v1h-1zM419 270h1v1h-1zM419 271h1v1h-1zM419 385h1v1h-1zM420 76h1v1h-1zM420 169h1v1h-1zM420 190h1v1h-1zM420 267h1v1h-1zM420 269h1v1h-1zM420 270h1v1h-1zM420 272h1v1h-1zM420 384h1v1h-1zM421 238h1v1h-1zM421 265h1v1h-1zM421 266h1v1h-1zM421 267h1v1h-1zM421 270h1v1h-1zM421 336h1v1h-1zM422 139h1v1h-1zM422 222h1v1h-1zM422 239h1v1h-1zM422 265h1v1h-1zM423 152h1v1h-1zM423 223h1v1h-1zM423 232h1v1h-1zM423 237h1v1h-1zM423 238h1v1h-1zM423 240h1v1h-1zM423 270h1v1h-1zM423 271h1v1h-1zM424 78h1v1h-1zM424 152h1v1h-1zM424 157h1v1h-1zM424 160h1v1h-1zM424 222h1v1h-1zM424 227h1v1h-1zM424 233h1v1h-1zM425 155h1v1h-1zM425 156h1v1h-1zM425 157h1v1h-1zM425 160h1v1h-1zM425 222h1v1h-1zM425 223h1v1h-1zM425 227h1v1h-1zM426 152h1v1h-1zM426 158h1v1h-1zM426 160h1v1h-1zM426 162h1v1h-1zM426 225h1v1h-1zM426 226h1v1h-1zM426 227h1v1h-1zM426 228h1v1h-1zM426 229h1v1h-1zM426 346h1v1h-1zM427 159h1v1h-1zM427 224h1v1h-1zM427 225h1v1h-1zM427 226h1v1h-1zM427 227h1v1h-1zM427 228h1v1h-1zM427 255h1v1h-1zM427 347h1v1h-1zM428 151h1v1h-1zM428 152h1v1h-1zM428 157h1v1h-1zM428 159h1v1h-1zM428 227h1v1h-1zM428 228h1v1h-1zM428 230h1v1h-1zM429 153h1v1h-1zM429 154h1v1h-1zM429 155h1v1h-1zM429 157h1v1h-1zM429 158h1v1h-1zM429 160h1v1h-1zM429 161h1v1h-1zM429 162h1v1h-1zM429 225h1v1h-1zM429 227h1v1h-1zM429 229h1v1h-1zM429 231h1v1h-1zM429 435h1v1h-1zM430 151h1v1h-1zM430 152h1v1h-1zM430 155h1v1h-1zM430 156h1v1h-1zM430 157h1v1h-1zM430 159h1v1h-1zM430 225h1v1h-1zM430 226h1v1h-1zM430 232h1v1h-1zM431 152h1v1h-1zM431 155h1v1h-1zM431 156h1v1h-1zM431 224h1v1h-1zM431 227h1v1h-1zM432 148h1v1h-1zM432 149h1v1h-1zM432 151h1v1h-1zM432 154h1v1h-1zM432 156h1v1h-1zM432 160h1v1h-1zM432 223h1v1h-1zM433 150h1v1h-1zM433 152h1v1h-1zM433 155h1v1h-1zM433 157h1v1h-1zM434 156h1v1h-1zM434 157h1v1h-1zM434 158h1v1h-1zM435 157h1v1h-1zM435 354h1v1h-1zM435 355h1v1h-1zM435 426h1v1h-1zM438 60h1v1h-1zM438 90h1v1h-1zM438 443h1v1h-1zM439 138h1v1h-1zM440 365h1v1h-1zM443 384h1v1h-1zM445 478h1v1h-1zM446 407h1v1h-1zM446 472h1v1h-1zM446 473h1v1h-1zM446 474h1v1h-1zM446 475h1v1h-1zM446 477h1v1h-1zM446 479h1v1h-1zM447 473h1v1h-1zM447 475h1v1h-1zM447 478h1v1h-1zM447 479h1v1h-1zM448 10h1v1h-1zM448 310h1v1h-1zM448 466h1v1h-1zM448 472h1v1h-1zM448 473h1v1h-1zM448 475h1v1h-1zM448 476h1v1h-1zM448 477h1v1h-1zM448 478h1v1h-1zM449 119h1v1h-1zM449 120h1v1h-1zM449 127h1v1h-1zM449 432h1v1h-1zM449 433h1v1h-1zM449 466h1v1h-1zM449 475h1v1h-1zM449 476h1v1h-1zM450 119h1v1h-1zM450 122h1v1h-1zM450 124h1v1h-1zM450 128h1v1h-1zM450 210h1v1h-1zM450 467h1v1h-1zM450 472h1v1h-1zM450 475h1v1h-1zM451 119h1v1h-1zM451 120h1v1h-1zM451 121h1v1h-1zM451 122h1v1h-1zM451 125h1v1h-1zM451 128h1v1h-1zM451 129h1v1h-1zM451 326h1v1h-1zM451 466h1v1h-1zM451 469h1v1h-1zM451 471h1v1h-1zM451 472h1v1h-1zM451 477h1v1h-1zM451 478h1v1h-1zM452 115h1v1h-1zM452 118h1v1h-1zM452 120h1v1h-1zM452 124h1v1h-1zM452 126h1v1h-1zM452 128h1v1h-1zM452 326h1v1h-1zM452 465h1v1h-1zM452 471h1v1h-1zM452 477h1v1h-1zM452 478h1v1h-1zM453 115h1v1h-1zM453 116h1v1h-1zM453 118h1v1h-1zM453 120h1v1h-1zM453 121h1v1h-1zM453 125h1v1h-1zM453 126h1v1h-1zM453 127h1v1h-1zM453 129h1v1h-1zM453 256h1v1h-1zM453 326h1v1h-1zM453 327h1v1h-1zM453 460h1v1h-1zM453 472h1v1h-1zM453 473h1v1h-1zM453 474h1v1h-1zM453 477h1v1h-1zM453 478h1v1h-1zM454 19h1v1h-1zM454 116h1v1h-1zM454 117h1v1h-1zM454 119h1v1h-1zM454 120h1v1h-1zM454 121h1v1h-1zM454 128h1v1h-1zM454 129h1v1h-1zM454 256h1v1h-1zM454 327h1v1h-1zM454 328h1v1h-1zM454 471h1v1h-1zM454 473h1v1h-1zM454 477h1v1h-1zM454 480h1v1h-1zM454 481h1v1h-1zM454 485h1v1h-1zM455 119h1v1h-1zM455 120h1v1h-1zM455 256h1v1h-1zM455 258h1v1h-1zM455 327h1v1h-1zM455 328h1v1h-1zM455 329h1v1h-1zM455 331h1v1h-1zM455 420h1v1h-1zM455 470h1v1h-1zM455 472h1v1h-1zM455 475h1v1h-1zM455 477h1v1h-1zM455 478h1v1h-1zM455 482h1v1h-1zM455 484h1v1h-1zM456 105h1v1h-1zM456 106h1v1h-1zM456 107h1v1h-1zM456 108h1v1h-1zM456 119h1v1h-1zM456 257h1v1h-1zM456 262h1v1h-1zM456 328h1v1h-1zM456 329h1v1h-1zM456 331h1v1h-1zM456 332h1v1h-1zM456 472h1v1h-1zM456 473h1v1h-1zM456 474h1v1h-1zM456 475h1v1h-1zM456 476h1v1h-1zM456 477h1v1h-1zM456 479h1v1h-1zM456 480h1v1h-1zM457 114h1v1h-1zM457 201h1v1h-1zM457 257h1v1h-1zM457 259h1v1h-1zM457 261h1v1h-1zM457 262h1v1h-1zM457 263h1v1h-1zM457 325h1v1h-1zM457 327h1v1h-1zM457 328h1v1h-1zM457 329h1v1h-1zM457 475h1v1h-1zM457 476h1v1h-1zM457 480h1v1h-1zM458 111h1v1h-1zM458 114h1v1h-1zM458 200h1v1h-1zM458 260h1v1h-1zM458 263h1v1h-1zM458 326h1v1h-1zM458 328h1v1h-1zM458 474h1v1h-1zM458 475h1v1h-1zM458 476h1v1h-1zM459 108h1v1h-1zM459 109h1v1h-1zM459 110h1v1h-1zM459 113h1v1h-1zM459 257h1v1h-1zM459 328h1v1h-1zM459 471h1v1h-1zM459 473h1v1h-1zM459 475h1v1h-1zM460 112h1v1h-1zM460 222h1v1h-1zM460 325h1v1h-1zM460 327h1v1h-1zM460 329h1v1h-1zM460 474h1v1h-1zM461 325h1v1h-1zM462 194h1v1h-1zM464 18h1v1h-1zM464 503h1v1h-1zM464 511h1v1h-1zM467 380h1v1h-1zM468 455h1v1h-1zM469 441h1v1h-1zM470 440h1v1h-1zM470 459h1v1h-1zM471 514h1v1h-1zM472 130h1v1h-1zM472 131h1v1h-1zM474 69h1v1h-1zM476 491h1v1h-1zM476 492h1v1h-1zM476 493h1v1h-1zM477 490h1v1h-1zM477 492h1v1h-1zM478 489h1v1h-1zM478 495h1v1h-1zM479 494h1v1h-1zM479 495h1v1h-1zM480 493h1v1h-1zM480 497h1v1h-1zM481 491h1v1h-1zM481 492h1v1h-1zM481 497h1v1h-1zM482 371h1v1h-1zM482 374h1v1h-1zM482 489h1v1h-1zM482 494h1v1h-1zM482 495h1v1h-1zM482 496h1v1h-1zM483 489h1v1h-1zM483 493h1v1h-1zM483 494h1v1h-1zM484 489h1v1h-1zM484 500h1v1h-1zM485 365h1v1h-1zM485 382h1v1h-1zM485 383h1v1h-1zM485 384h1v1h-1zM485 493h1v1h-1zM485 497h1v1h-1zM485 499h1v1h-1zM485 500h1v1h-1zM486 366h1v1h-1zM486 371h1v1h-1zM486 373h1v1h-1zM486 374h1v1h-1zM486 375h1v1h-1zM486 376h1v1h-1zM486 377h1v1h-1zM486 378h1v1h-1zM486 382h1v1h-1zM486 492h1v1h-1zM486 496h1v1h-1zM486 497h1v1h-1zM487 365h1v1h-1zM487 366h1v1h-1zM487 367h1v1h-1zM487 374h1v1h-1zM487 375h1v1h-1zM487 376h1v1h-1zM487 379h1v1h-1zM487 383h1v1h-1zM487 491h1v1h-1zM487 493h1v1h-1zM487 495h1v1h-1zM487 507h1v1h-1zM488 365h1v1h-1zM488 368h1v1h-1zM488 371h1v1h-1zM488 373h1v1h-1zM488 374h1v1h-1zM488 376h1v1h-1zM488 377h1v1h-1zM488 378h1v1h-1zM488 379h1v1h-1zM488 384h1v1h-1zM488 493h1v1h-1zM488 496h1v1h-1zM489 364h1v1h-1zM489 367h1v1h-1zM489 371h1v1h-1zM489 374h1v1h-1zM489 375h1v1h-1zM489 376h1v1h-1zM489 377h1v1h-1zM489 378h1v1h-1zM489 379h1v1h-1zM490 366h1v1h-1zM490 370h1v1h-1zM490 371h1v1h-1zM490 374h1v1h-1zM490 378h1v1h-1zM490 379h1v1h-1zM491 6h1v1h-1zM491 369h1v1h-1zM491 370h1v1h-1zM491 371h1v1h-1zM491 373h1v1h-1zM491 378h1v1h-1zM491 379h1v1h-1zM491 381h1v1h-1zM491 511h1v1h-1zM491 512h1v1h-1zM492 372h1v1h-1zM492 373h1v1h-1zM492 374h1v1h-1zM492 375h1v1h-1zM493 188h1v1h-1zM493 189h1v1h-1zM493 370h1v1h-1zM493 374h1v1h-1zM493 375h1v1h-1zM493 376h1v1h-1zM494 37h1v1h-1zM494 110h1v1h-1zM494 188h1v1h-1zM494 358h1v1h-1zM494 370h1v1h-1zM494 371h1v1h-1zM494 372h1v1h-1zM494 375h1v1h-1zM495 110h1v1h-1zM495 184h1v1h-1zM495 185h1v1h-1zM495 324h1v1h-1zM495 326h1v1h-1zM495 327h1v1h-1zM495 329h1v1h-1zM495 330h1v1h-1zM495 332h1v1h-1zM495 372h1v1h-1zM496 325h1v1h-1zM496 327h1v1h-1zM496 329h1v1h-1zM496 331h1v1h-1zM496 374h1v1h-1zM496 412h1v1h-1zM497 186h1v1h-1zM497 187h1v1h-1zM497 190h1v1h-1zM497 191h1v1h-1zM497 192h1v1h-1zM497 324h1v1h-1zM497 326h1v1h-1zM497 327h1v1h-1zM497 328h1v1h-1zM497 329h1v1h-1zM497 333h1v1h-1zM497 374h1v1h-1zM497 378h1v1h-1zM497 466h1v1h-1zM498 131h1v1h-1zM498 190h1v1h-1zM498 192h1v1h-1zM498 326h1v1h-1zM498 327h1v1h-1zM498 328h1v1h-1zM498 329h1v1h-1zM498 333h1v1h-1zM498 335h1v1h-1zM498 467h1v1h-1zM499 130h1v1h-1zM499 189h1v1h-1zM499 332h1v1h-1zM499 366h1v1h-1zM500 184h1v1h-1zM500 188h1v1h-1zM500 189h1v1h-1zM500 190h1v1h-1zM500 330h1v1h-1zM500 341h1v1h-1zM500 347h1v1h-1zM500 365h1v1h-1zM501 187h1v1h-1zM501 188h1v1h-1zM501 189h1v1h-1zM501 191h1v1h-1zM501 197h1v1h-1zM501 241h1v1h-1zM501 242h1v1h-1zM501 243h1v1h-1zM501 328h1v1h-1zM501 329h1v1h-1zM502 188h1v1h-1zM502 189h1v1h-1zM502 190h1v1h-1zM502 192h1v1h-1zM502 196h1v1h-1zM502 242h1v1h-1zM502 243h1v1h-1zM502 329h1v1h-1zM503 188h1v1h-1zM503 193h1v1h-1zM503 241h1v1h-1zM503 245h1v1h-1zM504 189h1v1h-1zM504 192h1v1h-1zM504 194h1v1h-1zM504 244h1v1h-1zM504 246h1v1h-1zM505 184h1v1h-1zM505 185h1v1h-1zM505 186h1v1h-1zM505 188h1v1h-1zM505 191h1v1h-1zM505 192h1v1h-1zM505 195h1v1h-1zM505 211h1v1h-1zM505 246h1v1h-1zM505 247h1v1h-1zM506 186h1v1h-1zM506 189h1v1h-1zM506 190h1v1h-1zM506 192h1v1h-1zM506 246h1v1h-1zM506 247h1v1h-1zM508 254h1v1h-1zM509 199h1v1h-1zM509 253h1v1h-1zM511 322h1v1h-1zM511 437h1v1h-1zM511 438h1v1h-1zM511 456h1v1h-1zM512 56h1v1h-1zM512 105h1v1h-1zM512 174h1v1h-1zM512 252h1v1h-1zM512 453h1v1h-1zM512 455h1v1h-1zM513 105h1v1h-1zM513 253h1v1h-1zM514 451h1v1h-1zM514 452h1v1h-1zM514 512h1v1h-1zM515 450h1v1h-1zM515 452h1v1h-1zM515 455h1v1h-1zM515 456h1v1h-1zM516 252h1v1h-1zM516 256h1v1h-1zM516 258h1v1h-1zM516 452h1v1h-1zM516 453h1v1h-1zM516 454h1v1h-1zM516 455h1v1h-1zM516 515h1v1h-1zM517 13h1v1h-1zM517 252h1v1h-1zM517 255h1v1h-1zM517 258h1v1h-1zM517 285h1v1h-1zM517 452h1v1h-1zM517 453h1v1h-1zM517 454h1v1h-1zM517 455h1v1h-1zM517 514h1v1h-1zM517 516h1v1h-1zM518 354h1v1h-1zM518 355h1v1h-1zM518 356h1v1h-1zM518 359h1v1h-1zM518 433h1v1h-1zM518 454h1v1h-1zM518 455h1v1h-1zM518 513h1v1h-1zM518 515h1v1h-1zM518 516h1v1h-1zM519 355h1v1h-1zM519 359h1v1h-1zM519 452h1v1h-1zM519 453h1v1h-1zM519 481h1v1h-1zM519 515h1v1h-1zM519 516h1v1h-1zM520 355h1v1h-1zM520 356h1v1h-1zM520 454h1v1h-1zM520 455h1v1h-1zM520 499h1v1h-1zM520 513h1v1h-1zM520 515h1v1h-1zM521 357h1v1h-1zM521 358h1v1h-1zM521 454h1v1h-1zM521 460h1v1h-1zM521 512h1v1h-1zM521 514h1v1h-1zM522 360h1v1h-1zM523 361h1v1h-1zM523 461h1v1h-1zM523 472h1v1h-1zM524 104h1v1h-1zM524 133h1v1h-1zM524 359h1v1h-1zM524 360h1v1h-1zM524 464h1v1h-1zM525 266h1v1h-1zM525 360h1v1h-1zM525 361h1v1h-1zM525 364h1v1h-1zM526 135h1v1h-1zM526 264h1v1h-1zM526 265h1v1h-1zM526 267h1v1h-1zM526 268h1v1h-1zM526 358h1v1h-1zM526 362h1v1h-1zM526 363h1v1h-1zM527 266h1v1h-1zM527 318h1v1h-1zM527 357h1v1h-1zM527 359h1v1h-1zM527 361h1v1h-1zM527 362h1v1h-1zM527 363h1v1h-1zM528 261h1v1h-1zM528 262h1v1h-1zM528 263h1v1h-1zM528 264h1v1h-1zM528 363h1v1h-1zM528 364h1v1h-1zM529 49h1v1h-1zM529 50h1v1h-1zM529 264h1v1h-1zM529 361h1v1h-1zM529 363h1v1h-1zM529 364h1v1h-1zM530 265h1v1h-1zM530 266h1v1h-1zM530 362h1v1h-1zM530 364h1v1h-1zM531 265h1v1h-1zM531 364h1v1h-1zM531 422h1v1h-1zM531 423h1v1h-1zM532 419h1v1h-1zM532 420h1v1h-1zM532 421h1v1h-1zM532 422h1v1h-1zM532 423h1v1h-1zM532 424h1v1h-1zM532 475h1v1h-1zM532 476h1v1h-1zM532 480h1v1h-1zM533 6h1v1h-1zM533 264h1v1h-1zM533 265h1v1h-1zM533 266h1v1h-1zM533 269h1v1h-1zM533 370h1v1h-1zM533 421h1v1h-1zM533 422h1v1h-1zM534 267h1v1h-1zM534 268h1v1h-1zM534 269h1v1h-1zM535 265h1v1h-1zM535 266h1v1h-1zM535 268h1v1h-1zM536 264h1v1h-1zM536 268h1v1h-1zM536 270h1v1h-1zM536 271h1v1h-1zM536 275h1v1h-1zM536 422h1v1h-1zM536 423h1v1h-1zM536 450h1v1h-1zM536 451h1v1h-1zM537 268h1v1h-1zM537 407h1v1h-1zM537 423h1v1h-1zM537 451h1v1h-1zM537 452h1v1h-1zM537 494h1v1h-1zM537 506h1v1h-1zM537 507h1v1h-1zM538 269h1v1h-1zM538 270h1v1h-1zM538 272h1v1h-1zM538 450h1v1h-1zM538 453h1v1h-1zM539 38h1v1h-1zM539 271h1v1h-1zM539 423h1v1h-1zM539 449h1v1h-1zM539 492h1v1h-1zM540 268h1v1h-1zM540 272h1v1h-1zM541 269h1v1h-1zM541 273h1v1h-1zM541 417h1v1h-1zM542 237h1v1h-1zM542 272h1v1h-1zM542 455h1v1h-1zM543 223h1v1h-1zM543 454h1v1h-1zM544 222h1v1h-1zM549 103h1v1h-1zM550 102h1v1h-1zM550 103h1v1h-1zM550 162h1v1h-1zM551 348h1v1h-1zM551 430h1v1h-1zM551 431h1v1h-1zM552 103h1v1h-1zM552 104h1v1h-1zM552 105h1v1h-1zM552 347h1v1h-1zM552 424h1v1h-1zM553 102h1v1h-1zM553 103h1v1h-1zM553 104h1v1h-1zM553 424h1v1h-1zM554 48h1v1h-1zM554 102h1v1h-1zM554 163h1v1h-1zM554 471h1v1h-1zM555 49h1v1h-1zM555 128h1v1h-1zM555 445h1v1h-1zM556 48h1v1h-1zM556 50h1v1h-1zM556 128h1v1h-1zM557 48h1v1h-1zM557 50h1v1h-1zM557 51h1v1h-1zM557 53h1v1h-1zM557 126h1v1h-1zM557 128h1v1h-1zM557 135h1v1h-1zM557 136h1v1h-1zM558 50h1v1h-1zM558 51h1v1h-1zM558 126h1v1h-1zM558 131h1v1h-1zM558 282h1v1h-1zM558 375h1v1h-1zM559 48h1v1h-1zM559 50h1v1h-1zM559 51h1v1h-1zM559 130h1v1h-1zM559 277h1v1h-1zM559 279h1v1h-1zM559 281h1v1h-1zM559 282h1v1h-1zM559 283h1v1h-1zM559 286h1v1h-1zM559 287h1v1h-1zM560 50h1v1h-1zM560 51h1v1h-1zM560 127h1v1h-1zM560 128h1v1h-1zM560 131h1v1h-1zM560 132h1v1h-1zM560 135h1v1h-1zM560 136h1v1h-1zM560 139h1v1h-1zM560 182h1v1h-1zM560 183h1v1h-1zM560 281h1v1h-1zM560 287h1v1h-1zM561 33h1v1h-1zM561 47h1v1h-1zM561 50h1v1h-1zM561 51h1v1h-1zM561 59h1v1h-1zM561 60h1v1h-1zM561 61h1v1h-1zM561 129h1v1h-1zM561 130h1v1h-1zM561 131h1v1h-1zM561 133h1v1h-1zM561 134h1v1h-1zM561 136h1v1h-1zM561 138h1v1h-1zM561 140h1v1h-1zM561 141h1v1h-1zM561 183h1v1h-1zM561 287h1v1h-1zM562 48h1v1h-1zM562 59h1v1h-1zM562 62h1v1h-1zM562 127h1v1h-1zM562 128h1v1h-1zM562 130h1v1h-1zM562 131h1v1h-1zM562 132h1v1h-1zM562 138h1v1h-1zM562 139h1v1h-1zM562 140h1v1h-1zM562 288h1v1h-1zM562 466h1v1h-1zM562 515h1v1h-1zM563 49h1v1h-1zM563 50h1v1h-1zM563 127h1v1h-1zM563 128h1v1h-1zM563 129h1v1h-1zM563 130h1v1h-1zM563 137h1v1h-1zM563 138h1v1h-1zM563 140h1v1h-1zM563 184h1v1h-1zM563 185h1v1h-1zM563 186h1v1h-1zM563 514h1v1h-1zM564 49h1v1h-1zM564 50h1v1h-1zM564 128h1v1h-1zM564 134h1v1h-1zM564 135h1v1h-1zM564 137h1v1h-1zM564 186h1v1h-1zM564 514h1v1h-1zM565 49h1v1h-1zM565 50h1v1h-1zM565 124h1v1h-1zM565 125h1v1h-1zM565 126h1v1h-1zM565 127h1v1h-1zM565 129h1v1h-1zM565 133h1v1h-1zM565 135h1v1h-1zM565 136h1v1h-1zM565 137h1v1h-1zM565 140h1v1h-1zM565 141h1v1h-1zM565 515h1v1h-1zM566 48h1v1h-1zM566 49h1v1h-1zM566 125h1v1h-1zM566 126h1v1h-1zM566 129h1v1h-1zM566 130h1v1h-1zM566 132h1v1h-1zM566 134h1v1h-1zM566 137h1v1h-1zM566 139h1v1h-1zM566 140h1v1h-1zM566 514h1v1h-1zM566 515h1v1h-1zM566 516h1v1h-1zM567 43h1v1h-1zM567 49h1v1h-1zM567 51h1v1h-1zM567 125h1v1h-1zM567 129h1v1h-1zM567 140h1v1h-1zM567 278h1v1h-1zM567 330h1v1h-1zM567 492h1v1h-1zM568 43h1v1h-1zM568 48h1v1h-1zM568 51h1v1h-1zM568 139h1v1h-1zM568 295h1v1h-1zM569 47h1v1h-1zM569 184h1v1h-1zM569 279h1v1h-1zM569 281h1v1h-1zM570 46h1v1h-1zM570 48h1v1h-1zM570 184h1v1h-1zM570 278h1v1h-1zM571 45h1v1h-1zM571 181h1v1h-1zM571 182h1v1h-1zM571 185h1v1h-1zM571 278h1v1h-1zM572 47h1v1h-1zM572 48h1v1h-1zM572 49h1v1h-1zM572 180h1v1h-1zM572 183h1v1h-1zM573 185h1v1h-1zM573 265h1v1h-1zM573 277h1v1h-1zM573 278h1v1h-1zM573 280h1v1h-1zM574 266h1v1h-1zM575 48h1v1h-1zM575 94h1v1h-1zM575 185h1v1h-1zM575 187h1v1h-1zM575 267h1v1h-1zM575 275h1v1h-1zM576 48h1v1h-1zM576 49h1v1h-1zM576 93h1v1h-1zM576 186h1v1h-1zM576 259h1v1h-1zM576 262h1v1h-1zM576 268h1v1h-1zM576 269h1v1h-1zM577 260h1v1h-1zM577 283h1v1h-1zM578 184h1v1h-1zM579 184h1v1h-1zM579 279h1v1h-1zM579 481h1v1h-1zM580 183h1v1h-1zM580 185h1v1h-1zM580 277h1v1h-1zM580 281h1v1h-1zM580 481h1v1h-1zM581 183h1v1h-1zM581 282h1v1h-1zM581 481h1v1h-1zM581 482h1v1h-1zM582 186h1v1h-1zM582 278h1v1h-1zM582 279h1v1h-1zM583 182h1v1h-1zM583 184h1v1h-1zM583 305h1v1h-1zM584 184h1v1h-1zM584 282h1v1h-1zM584 304h1v1h-1zM584 349h1v1h-1zM585 182h1v1h-1zM585 183h1v1h-1zM585 184h1v1h-1zM585 350h1v1h-1zM585 385h1v1h-1zM585 460h1v1h-1zM586 181h1v1h-1zM586 183h1v1h-1zM586 267h1v1h-1zM586 385h1v1h-1zM587 184h1v1h-1zM588 261h1v1h-1zM588 368h1v1h-1zM588 471h1v1h-1zM589 378h1v1h-1zM589 382h1v1h-1zM589 384h1v1h-1zM589 385h1v1h-1zM589 386h1v1h-1zM589 462h1v1h-1zM589 472h1v1h-1zM590 18h1v1h-1zM590 181h1v1h-1zM590 184h1v1h-1zM590 379h1v1h-1zM590 381h1v1h-1zM590 458h1v1h-1zM590 472h1v1h-1zM591 379h1v1h-1zM591 380h1v1h-1zM591 457h1v1h-1zM591 472h1v1h-1zM592 207h1v1h-1zM592 379h1v1h-1zM592 382h1v1h-1zM592 459h1v1h-1zM592 472h1v1h-1zM593 190h1v1h-1zM593 378h1v1h-1zM593 379h1v1h-1zM593 380h1v1h-1zM593 458h1v1h-1zM593 472h1v1h-1zM594 378h1v1h-1zM594 379h1v1h-1zM594 382h1v1h-1zM594 385h1v1h-1zM594 386h1v1h-1zM594 387h1v1h-1zM594 460h1v1h-1zM594 461h1v1h-1zM594 473h1v1h-1zM595 153h1v1h-1zM595 379h1v1h-1zM595 380h1v1h-1zM595 381h1v1h-1zM595 473h1v1h-1zM595 475h1v1h-1zM596 379h1v1h-1zM596 380h1v1h-1zM596 456h1v1h-1zM596 457h1v1h-1zM596 472h1v1h-1zM596 473h1v1h-1zM596 477h1v1h-1zM597 380h1v1h-1zM597 382h1v1h-1zM597 457h1v1h-1zM597 459h1v1h-1zM597 472h1v1h-1zM597 473h1v1h-1zM597 474h1v1h-1zM597 478h1v1h-1zM598 59h1v1h-1zM598 60h1v1h-1zM598 382h1v1h-1zM598 429h1v1h-1zM598 458h1v1h-1zM598 472h1v1h-1zM598 474h1v1h-1zM599 150h1v1h-1zM599 248h1v1h-1zM599 249h1v1h-1zM599 250h1v1h-1zM599 251h1v1h-1zM599 379h1v1h-1zM599 380h1v1h-1zM599 382h1v1h-1zM599 383h1v1h-1zM599 458h1v1h-1zM599 472h1v1h-1zM599 473h1v1h-1zM599 488h1v1h-1zM600 151h1v1h-1zM600 249h1v1h-1zM600 251h1v1h-1zM600 384h1v1h-1zM600 440h1v1h-1zM600 458h1v1h-1zM600 459h1v1h-1zM600 472h1v1h-1zM600 474h1v1h-1zM600 476h1v1h-1zM600 477h1v1h-1zM601 251h1v1h-1zM601 252h1v1h-1zM601 292h1v1h-1zM601 385h1v1h-1zM601 457h1v1h-1zM601 475h1v1h-1zM601 476h1v1h-1zM601 477h1v1h-1zM602 250h1v1h-1zM602 251h1v1h-1zM602 252h1v1h-1zM602 455h1v1h-1zM602 457h1v1h-1zM602 458h1v1h-1zM602 473h1v1h-1zM602 474h1v1h-1zM602 477h1v1h-1zM603 4h1v1h-1zM603 230h1v1h-1zM603 250h1v1h-1zM603 252h1v1h-1zM603 253h1v1h-1zM603 456h1v1h-1zM603 459h1v1h-1zM603 472h1v1h-1zM603 473h1v1h-1zM603 474h1v1h-1zM604 21h1v1h-1zM604 245h1v1h-1zM604 249h1v1h-1zM604 250h1v1h-1zM604 453h1v1h-1zM604 456h1v1h-1zM604 471h1v1h-1zM605 248h1v1h-1zM605 473h1v1h-1zM605 474h1v1h-1zM605 475h1v1h-1zM605 476h1v1h-1zM605 477h1v1h-1zM606 370h1v1h-1zM606 458h1v1h-1zM606 475h1v1h-1zM609 355h1v1h-1zM609 444h1v1h-1zM610 207h1v1h-1zM610 208h1v1h-1zM610 209h1v1h-1zM610 270h1v1h-1zM610 444h1v1h-1zM611 207h1v1h-1zM611 208h1v1h-1zM611 223h1v1h-1zM611 225h1v1h-1zM611 226h1v1h-1zM611 446h1v1h-1zM611 495h1v1h-1zM612 208h1v1h-1zM612 210h1v1h-1zM612 222h1v1h-1zM612 226h1v1h-1zM612 447h1v1h-1zM613 206h1v1h-1zM613 208h1v1h-1zM613 210h1v1h-1zM613 211h1v1h-1zM613 222h1v1h-1zM613 223h1v1h-1zM613 224h1v1h-1zM613 225h1v1h-1zM614 205h1v1h-1zM614 207h1v1h-1zM614 208h1v1h-1zM614 209h1v1h-1zM614 211h1v1h-1zM614 212h1v1h-1zM614 228h1v1h-1zM615 209h1v1h-1zM615 210h1v1h-1zM615 228h1v1h-1zM615 295h1v1h-1zM615 296h1v1h-1zM615 484h1v1h-1zM616 26h1v1h-1zM616 228h1v1h-1zM616 296h1v1h-1zM616 297h1v1h-1zM616 386h1v1h-1zM617 209h1v1h-1zM617 210h1v1h-1zM617 211h1v1h-1zM617 295h1v1h-1zM617 296h1v1h-1zM617 297h1v1h-1zM617 298h1v1h-1zM618 211h1v1h-1zM618 294h1v1h-1zM618 490h1v1h-1zM619 25h1v1h-1zM619 210h1v1h-1zM619 211h1v1h-1zM619 294h1v1h-1zM619 489h1v1h-1zM620 210h1v1h-1zM620 211h1v1h-1zM620 213h1v1h-1zM620 290h1v1h-1zM620 291h1v1h-1zM620 293h1v1h-1zM621 237h1v1h-1zM623 51h1v1h-1zM623 116h1v1h-1zM624 51h1v1h-1zM624 52h1v1h-1zM624 85h1v1h-1zM624 510h1v1h-1zM625 51h1v1h-1zM625 52h1v1h-1zM625 91h1v1h-1zM625 511h1v1h-1zM626 50h1v1h-1zM626 51h1v1h-1zM626 363h1v1h-1zM627 75h1v1h-1zM630 145h1v1h-1zM630 161h1v1h-1zM630 291h1v1h-1zM630 336h1v1h-1zM631 160h1v1h-1zM631 291h1v1h-1zM632 51h1v1h-1zM632 419h1v1h-1zM633 51h1v1h-1zM633 52h1v1h-1zM634 53h1v1h-1zM635 51h1v1h-1zM635 176h1v1h-1zM636 51h1v1h-1zM636 211h1v1h-1zM636 317h1v1h-1zM637 49h1v1h-1zM637 52h1v1h-1zM637 198h1v1h-1zM637 388h1v1h-1zM638 48h1v1h-1zM638 212h1v1h-1zM638 320h1v1h-1zM638 388h1v1h-1zM638 390h1v1h-1zM638 407h1v1h-1zM639 66h1v1h-1zM639 320h1v1h-1zM639 321h1v1h-1zM640 1h1v1h-1zM640 65h1v1h-1zM640 67h1v1h-1zM640 319h1v1h-1zM640 322h1v1h-1zM640 448h1v1h-1zM641 0h1v1h-1zM641 44h1v1h-1zM641 45h1v1h-1zM641 46h1v1h-1zM641 47h1v1h-1zM641 65h1v1h-1zM641 67h1v1h-1zM641 69h1v1h-1zM641 281h1v1h-1zM641 320h1v1h-1zM641 321h1v1h-1zM641 326h1v1h-1zM641 475h1v1h-1zM641 476h1v1h-1zM641 507h1v1h-1zM642 45h1v1h-1zM642 46h1v1h-1zM642 66h1v1h-1zM642 69h1v1h-1zM642 318h1v1h-1zM642 320h1v1h-1zM642 321h1v1h-1zM642 322h1v1h-1zM642 323h1v1h-1zM642 324h1v1h-1zM642 327h1v1h-1zM643 44h1v1h-1zM643 45h1v1h-1zM643 46h1v1h-1zM643 68h1v1h-1zM643 84h1v1h-1zM643 85h1v1h-1zM643 86h1v1h-1zM643 243h1v1h-1zM643 317h1v1h-1zM643 320h1v1h-1zM643 321h1v1h-1zM643 322h1v1h-1zM643 323h1v1h-1zM643 334h1v1h-1zM644 45h1v1h-1zM644 48h1v1h-1zM644 67h1v1h-1zM644 85h1v1h-1zM644 318h1v1h-1zM644 321h1v1h-1zM644 322h1v1h-1zM644 324h1v1h-1zM644 325h1v1h-1zM645 46h1v1h-1zM645 48h1v1h-1zM645 72h1v1h-1zM645 73h1v1h-1zM645 85h1v1h-1zM645 86h1v1h-1zM645 320h1v1h-1zM645 321h1v1h-1zM645 323h1v1h-1zM645 325h1v1h-1zM645 326h1v1h-1zM645 328h1v1h-1zM646 44h1v1h-1zM646 46h1v1h-1zM646 64h1v1h-1zM646 85h1v1h-1zM646 322h1v1h-1zM646 324h1v1h-1zM646 327h1v1h-1zM646 411h1v1h-1zM647 42h1v1h-1zM647 45h1v1h-1zM647 69h1v1h-1zM647 70h1v1h-1zM647 71h1v1h-1zM647 72h1v1h-1zM647 73h1v1h-1zM647 85h1v1h-1zM647 321h1v1h-1zM647 322h1v1h-1zM647 326h1v1h-1zM647 365h1v1h-1zM648 75h1v1h-1zM648 85h1v1h-1zM648 86h1v1h-1zM648 87h1v1h-1zM648 96h1v1h-1zM648 100h1v1h-1zM648 316h1v1h-1zM648 319h1v1h-1zM648 322h1v1h-1zM648 325h1v1h-1zM649 43h1v1h-1zM649 44h1v1h-1zM649 45h1v1h-1zM649 46h1v1h-1zM649 76h1v1h-1zM649 97h1v1h-1zM649 100h1v1h-1zM649 317h1v1h-1zM649 320h1v1h-1zM649 322h1v1h-1zM649 325h1v1h-1zM650 45h1v1h-1zM650 46h1v1h-1zM650 74h1v1h-1zM650 75h1v1h-1zM650 76h1v1h-1zM650 85h1v1h-1zM650 86h1v1h-1zM650 97h1v1h-1zM650 98h1v1h-1zM650 99h1v1h-1zM650 100h1v1h-1zM650 177h1v1h-1zM650 321h1v1h-1zM651 46h1v1h-1zM651 74h1v1h-1zM651 76h1v1h-1zM651 78h1v1h-1zM651 79h1v1h-1zM651 85h1v1h-1zM651 87h1v1h-1zM651 90h1v1h-1zM651 93h1v1h-1zM651 97h1v1h-1zM651 98h1v1h-1zM651 178h1v1h-1zM651 458h1v1h-1zM652 79h1v1h-1zM652 88h1v1h-1zM652 90h1v1h-1zM652 93h1v1h-1zM652 97h1v1h-1zM652 101h1v1h-1zM652 102h1v1h-1zM652 163h1v1h-1zM652 209h1v1h-1zM652 457h1v1h-1zM653 78h1v1h-1zM653 79h1v1h-1zM653 80h1v1h-1zM653 85h1v1h-1zM653 87h1v1h-1zM653 88h1v1h-1zM653 90h1v1h-1zM653 94h1v1h-1zM653 96h1v1h-1zM653 100h1v1h-1zM653 420h1v1h-1zM653 454h1v1h-1zM653 456h1v1h-1zM654 95h1v1h-1zM654 98h1v1h-1zM654 99h1v1h-1zM654 354h1v1h-1zM655 96h1v1h-1zM655 97h1v1h-1zM655 99h1v1h-1zM655 369h1v1h-1zM655 498h1v1h-1zM656 88h1v1h-1zM656 94h1v1h-1zM656 96h1v1h-1zM656 97h1v1h-1zM656 376h1v1h-1zM657 88h1v1h-1zM657 95h1v1h-1zM657 234h1v1h-1zM657 364h1v1h-1zM658 89h1v1h-1zM658 91h1v1h-1zM658 92h1v1h-1zM658 96h1v1h-1zM658 100h1v1h-1zM658 365h1v1h-1zM658 371h1v1h-1zM659 88h1v1h-1zM659 99h1v1h-1zM659 105h1v1h-1zM659 367h1v1h-1zM659 369h1v1h-1zM659 371h1v1h-1zM659 374h1v1h-1zM660 95h1v1h-1zM660 254h1v1h-1zM660 293h1v1h-1zM660 370h1v1h-1zM660 372h1v1h-1zM660 373h1v1h-1zM660 374h1v1h-1zM661 94h1v1h-1zM661 160h1v1h-1zM661 251h1v1h-1zM661 366h1v1h-1zM661 370h1v1h-1zM661 371h1v1h-1zM661 376h1v1h-1zM661 490h1v1h-1zM662 93h1v1h-1zM662 104h1v1h-1zM662 256h1v1h-1zM662 257h1v1h-1zM662 364h1v1h-1zM662 367h1v1h-1zM662 368h1v1h-1zM662 369h1v1h-1zM662 370h1v1h-1zM662 371h1v1h-1zM662 377h1v1h-1zM662 491h1v1h-1zM663 104h1v1h-1zM663 105h1v1h-1zM663 152h1v1h-1zM663 156h1v1h-1zM663 164h1v1h-1zM663 254h1v1h-1zM663 365h1v1h-1zM663 367h1v1h-1zM663 369h1v1h-1zM663 373h1v1h-1zM663 392h1v1h-1zM664 106h1v1h-1zM664 152h1v1h-1zM664 153h1v1h-1zM664 156h1v1h-1zM664 158h1v1h-1zM664 159h1v1h-1zM664 161h1v1h-1zM664 163h1v1h-1zM664 236h1v1h-1zM664 253h1v1h-1zM664 364h1v1h-1zM664 365h1v1h-1zM664 369h1v1h-1zM664 370h1v1h-1zM664 371h1v1h-1zM664 372h1v1h-1zM664 373h1v1h-1zM664 374h1v1h-1zM664 375h1v1h-1zM664 376h1v1h-1zM664 380h1v1h-1zM664 411h1v1h-1zM664 489h1v1h-1zM665 106h1v1h-1zM665 107h1v1h-1zM665 154h1v1h-1zM665 155h1v1h-1zM665 158h1v1h-1zM665 159h1v1h-1zM665 160h1v1h-1zM665 162h1v1h-1zM665 252h1v1h-1zM665 364h1v1h-1zM665 370h1v1h-1zM665 371h1v1h-1zM665 372h1v1h-1zM665 373h1v1h-1zM665 381h1v1h-1zM665 412h1v1h-1zM666 106h1v1h-1zM666 110h1v1h-1zM666 154h1v1h-1zM666 157h1v1h-1zM666 366h1v1h-1zM666 370h1v1h-1zM666 371h1v1h-1zM666 374h1v1h-1zM666 438h1v1h-1zM667 108h1v1h-1zM667 111h1v1h-1zM667 155h1v1h-1zM667 160h1v1h-1zM667 162h1v1h-1zM667 369h1v1h-1zM667 372h1v1h-1zM667 374h1v1h-1zM668 107h1v1h-1zM668 109h1v1h-1zM668 112h1v1h-1zM668 152h1v1h-1zM668 159h1v1h-1zM668 160h1v1h-1zM668 163h1v1h-1zM668 369h1v1h-1zM668 370h1v1h-1zM668 371h1v1h-1zM668 372h1v1h-1zM668 373h1v1h-1zM669 108h1v1h-1zM669 109h1v1h-1zM669 158h1v1h-1zM669 162h1v1h-1zM669 369h1v1h-1zM669 370h1v1h-1zM669 372h1v1h-1zM669 375h1v1h-1zM670 152h1v1h-1zM670 158h1v1h-1zM670 162h1v1h-1zM670 270h1v1h-1zM670 370h1v1h-1zM670 373h1v1h-1zM670 376h1v1h-1zM671 108h1v1h-1zM671 158h1v1h-1zM671 159h1v1h-1zM671 160h1v1h-1zM671 163h1v1h-1zM671 183h1v1h-1zM671 371h1v1h-1zM671 373h1v1h-1zM671 374h1v1h-1zM671 377h1v1h-1zM672 3h1v1h-1zM672 109h1v1h-1zM672 157h1v1h-1zM672 160h1v1h-1zM672 293h1v1h-1zM672 364h1v1h-1zM672 373h1v1h-1zM672 376h1v1h-1zM673 2h1v1h-1zM673 109h1v1h-1zM673 144h1v1h-1zM673 145h1v1h-1zM673 147h1v1h-1zM673 156h1v1h-1zM673 176h1v1h-1zM673 224h1v1h-1zM673 368h1v1h-1zM673 369h1v1h-1zM673 372h1v1h-1zM673 374h1v1h-1zM673 375h1v1h-1zM674 111h1v1h-1zM674 145h1v1h-1zM674 146h1v1h-1zM674 148h1v1h-1zM674 224h1v1h-1zM674 320h1v1h-1zM674 368h1v1h-1zM675 110h1v1h-1zM675 171h1v1h-1zM675 225h1v1h-1zM675 336h1v1h-1zM675 380h1v1h-1zM676 109h1v1h-1zM676 110h1v1h-1zM676 226h1v1h-1zM676 336h1v1h-1zM677 53h1v1h-1zM677 110h1v1h-1zM677 111h1v1h-1zM677 112h1v1h-1zM677 224h1v1h-1zM677 225h1v1h-1zM678 109h1v1h-1zM678 110h1v1h-1zM678 223h1v1h-1zM679 110h1v1h-1zM679 111h1v1h-1zM679 225h1v1h-1zM679 226h1v1h-1zM680 402h1v1h-1zM681 52h1v1h-1zM681 109h1v1h-1zM681 112h1v1h-1zM682 53h1v1h-1zM682 108h1v1h-1zM682 112h1v1h-1zM682 113h1v1h-1zM682 114h1v1h-1zM682 115h1v1h-1zM682 116h1v1h-1zM682 119h1v1h-1zM682 459h1v1h-1zM683 54h1v1h-1zM683 112h1v1h-1zM683 113h1v1h-1zM683 115h1v1h-1zM683 116h1v1h-1zM683 117h1v1h-1zM683 118h1v1h-1zM683 219h1v1h-1zM683 433h1v1h-1zM683 434h1v1h-1zM683 459h1v1h-1zM684 52h1v1h-1zM684 103h1v1h-1zM684 108h1v1h-1zM684 109h1v1h-1zM684 115h1v1h-1zM684 116h1v1h-1zM685 53h1v1h-1zM685 104h1v1h-1zM685 109h1v1h-1zM685 116h1v1h-1zM685 401h1v1h-1zM686 54h1v1h-1zM686 62h1v1h-1zM686 104h1v1h-1zM686 105h1v1h-1zM686 402h1v1h-1zM687 58h1v1h-1zM687 59h1v1h-1zM687 60h1v1h-1zM687 61h1v1h-1zM687 62h1v1h-1zM687 105h1v1h-1zM687 106h1v1h-1zM688 53h1v1h-1zM688 57h1v1h-1zM688 59h1v1h-1zM688 61h1v1h-1zM688 100h1v1h-1zM688 101h1v1h-1zM688 105h1v1h-1zM688 106h1v1h-1zM689 56h1v1h-1zM689 57h1v1h-1zM689 103h1v1h-1zM689 106h1v1h-1zM689 232h1v1h-1zM689 234h1v1h-1zM689 235h1v1h-1zM689 267h1v1h-1zM690 61h1v1h-1zM690 63h1v1h-1zM690 67h1v1h-1zM690 104h1v1h-1zM690 107h1v1h-1zM690 164h1v1h-1zM690 232h1v1h-1zM690 233h1v1h-1zM690 234h1v1h-1zM690 235h1v1h-1zM690 365h1v1h-1zM691 53h1v1h-1zM691 58h1v1h-1zM691 59h1v1h-1zM691 60h1v1h-1zM691 61h1v1h-1zM691 62h1v1h-1zM691 63h1v1h-1zM691 66h1v1h-1zM691 103h1v1h-1zM691 165h1v1h-1zM691 234h1v1h-1zM691 236h1v1h-1zM691 390h1v1h-1zM692 59h1v1h-1zM692 60h1v1h-1zM692 101h1v1h-1zM692 233h1v1h-1zM692 480h1v1h-1zM693 64h1v1h-1zM693 101h1v1h-1zM693 102h1v1h-1zM693 103h1v1h-1zM694 59h1v1h-1zM694 60h1v1h-1zM694 61h1v1h-1zM694 64h1v1h-1zM694 101h1v1h-1zM694 102h1v1h-1zM694 103h1v1h-1zM695 60h1v1h-1zM695 61h1v1h-1zM695 63h1v1h-1zM695 64h1v1h-1zM695 104h1v1h-1zM696 59h1v1h-1zM696 61h1v1h-1zM696 62h1v1h-1zM696 63h1v1h-1zM696 64h1v1h-1zM696 101h1v1h-1zM696 104h1v1h-1zM696 389h1v1h-1zM697 64h1v1h-1zM697 65h1v1h-1zM697 66h1v1h-1zM697 67h1v1h-1zM697 100h1v1h-1zM697 101h1v1h-1zM698 64h1v1h-1zM698 67h1v1h-1zM698 101h1v1h-1zM698 360h1v1h-1zM699 65h1v1h-1zM699 67h1v1h-1zM699 69h1v1h-1zM699 100h1v1h-1zM699 101h1v1h-1zM699 233h1v1h-1zM699 271h1v1h-1zM699 360h1v1h-1zM699 498h1v1h-1zM700 63h1v1h-1zM700 64h1v1h-1zM700 65h1v1h-1zM700 67h1v1h-1zM700 99h1v1h-1zM700 498h1v1h-1zM701 63h1v1h-1zM701 64h1v1h-1zM701 98h1v1h-1zM701 99h1v1h-1zM701 143h1v1h-1zM702 102h1v1h-1zM702 143h1v1h-1zM702 144h1v1h-1zM703 143h1v1h-1zM703 145h1v1h-1zM703 451h1v1h-1zM704 143h1v1h-1zM704 144h1v1h-1zM704 145h1v1h-1zM704 307h1v1h-1zM704 452h1v1h-1zM705 102h1v1h-1zM705 146h1v1h-1zM705 308h1v1h-1zM705 436h1v1h-1zM706 85h1v1h-1zM706 86h1v1h-1zM706 102h1v1h-1zM706 103h1v1h-1zM706 312h1v1h-1zM707 100h1v1h-1zM707 102h1v1h-1zM707 103h1v1h-1zM707 104h1v1h-1zM707 147h1v1h-1zM707 311h1v1h-1zM708 102h1v1h-1zM708 104h1v1h-1zM708 148h1v1h-1zM708 310h1v1h-1zM708 329h1v1h-1zM709 98h1v1h-1zM709 102h1v1h-1zM709 149h1v1h-1zM709 306h1v1h-1zM709 311h1v1h-1zM709 312h1v1h-1zM709 313h1v1h-1zM709 314h1v1h-1zM709 329h1v1h-1zM709 457h1v1h-1zM709 475h1v1h-1zM709 476h1v1h-1zM710 99h1v1h-1zM710 101h1v1h-1zM710 150h1v1h-1zM710 153h1v1h-1zM710 154h1v1h-1zM710 308h1v1h-1zM710 311h1v1h-1zM710 312h1v1h-1zM710 313h1v1h-1zM710 314h1v1h-1zM710 319h1v1h-1zM710 320h1v1h-1zM711 37h1v1h-1zM711 100h1v1h-1zM711 102h1v1h-1zM711 150h1v1h-1zM711 154h1v1h-1zM711 183h1v1h-1zM711 308h1v1h-1zM711 309h1v1h-1zM711 311h1v1h-1zM712 37h1v1h-1zM712 150h1v1h-1zM712 303h1v1h-1zM712 307h1v1h-1zM712 310h1v1h-1zM712 311h1v1h-1zM712 416h1v1h-1zM712 504h1v1h-1zM713 150h1v1h-1zM713 297h1v1h-1zM713 303h1v1h-1zM713 305h1v1h-1zM713 306h1v1h-1zM713 309h1v1h-1zM713 314h1v1h-1zM714 154h1v1h-1zM714 155h1v1h-1zM714 156h1v1h-1zM714 304h1v1h-1zM714 314h1v1h-1zM715 55h1v1h-1zM715 104h1v1h-1zM715 107h1v1h-1zM715 153h1v1h-1zM715 154h1v1h-1zM715 189h1v1h-1zM715 303h1v1h-1zM715 304h1v1h-1zM715 305h1v1h-1zM715 308h1v1h-1zM715 310h1v1h-1zM715 311h1v1h-1zM715 312h1v1h-1zM715 313h1v1h-1zM715 319h1v1h-1zM715 403h1v1h-1zM715 429h1v1h-1zM715 431h1v1h-1zM716 106h1v1h-1zM716 302h1v1h-1zM716 304h1v1h-1zM716 306h1v1h-1zM716 308h1v1h-1zM716 309h1v1h-1zM716 319h1v1h-1zM716 402h1v1h-1zM716 413h1v1h-1zM716 428h1v1h-1zM716 430h1v1h-1zM717 31h1v1h-1zM717 53h1v1h-1zM717 112h1v1h-1zM717 307h1v1h-1zM717 398h1v1h-1zM717 410h1v1h-1zM717 411h1v1h-1zM717 413h1v1h-1zM717 428h1v1h-1zM717 429h1v1h-1zM717 430h1v1h-1zM718 31h1v1h-1zM718 68h1v1h-1zM718 113h1v1h-1zM718 309h1v1h-1zM718 430h1v1h-1zM719 36h1v1h-1zM719 107h1v1h-1zM719 307h1v1h-1zM719 310h1v1h-1zM719 387h1v1h-1zM719 429h1v1h-1zM719 430h1v1h-1zM719 431h1v1h-1zM720 308h1v1h-1zM720 311h1v1h-1zM720 317h1v1h-1zM720 428h1v1h-1zM721 61h1v1h-1zM721 262h1v1h-1zM722 307h1v1h-1zM722 308h1v1h-1zM723 308h1v1h-1zM724 303h1v1h-1zM725 36h1v1h-1zM725 55h1v1h-1zM726 155h1v1h-1zM726 341h1v1h-1zM726 436h1v1h-1zM727 154h1v1h-1zM728 68h1v1h-1zM728 153h1v1h-1zM728 157h1v1h-1zM729 29h1v1h-1zM729 36h1v1h-1zM729 37h1v1h-1zM729 62h1v1h-1zM729 152h1v1h-1zM729 158h1v1h-1zM729 480h1v1h-1zM730 122h1v1h-1zM730 153h1v1h-1zM730 155h1v1h-1zM730 156h1v1h-1zM730 157h1v1h-1zM730 336h1v1h-1zM730 480h1v1h-1zM730 484h1v1h-1zM731 37h1v1h-1zM731 38h1v1h-1zM731 40h1v1h-1zM731 150h1v1h-1zM731 152h1v1h-1zM731 153h1v1h-1zM732 35h1v1h-1zM732 151h1v1h-1zM732 152h1v1h-1zM732 507h1v1h-1zM733 151h1v1h-1zM733 152h1v1h-1zM734 59h1v1h-1zM734 150h1v1h-1zM734 151h1v1h-1zM734 185h1v1h-1zM734 188h1v1h-1zM734 391h1v1h-1zM735 189h1v1h-1zM735 318h1v1h-1zM736 148h1v1h-1zM736 149h1v1h-1zM736 150h1v1h-1zM736 319h1v1h-1zM737 192h1v1h-1zM738 142h1v1h-1zM738 190h1v1h-1zM738 191h1v1h-1zM738 212h1v1h-1zM738 261h1v1h-1zM738 298h1v1h-1zM738 299h1v1h-1zM739 55h1v1h-1zM739 145h1v1h-1zM739 190h1v1h-1zM739 191h1v1h-1zM739 211h1v1h-1zM740 58h1v1h-1zM740 146h1v1h-1zM740 171h1v1h-1zM740 474h1v1h-1zM741 147h1v1h-1zM741 195h1v1h-1zM741 196h1v1h-1zM741 234h1v1h-1zM741 296h1v1h-1zM741 457h1v1h-1zM742 44h1v1h-1zM742 297h1v1h-1zM743 448h1v1h-1zM744 65h1v1h-1zM744 304h1v1h-1zM744 309h1v1h-1zM744 316h1v1h-1zM745 270h1v1h-1zM745 310h1v1h-1zM745 311h1v1h-1zM746 35h1v1h-1zM746 66h1v1h-1zM746 234h1v1h-1zM746 235h1v1h-1zM746 236h1v1h-1zM746 283h1v1h-1zM746 307h1v1h-1zM746 309h1v1h-1zM746 312h1v1h-1zM747 32h1v1h-1zM747 35h1v1h-1zM747 232h1v1h-1zM747 234h1v1h-1zM747 305h1v1h-1zM747 306h1v1h-1zM747 307h1v1h-1zM747 309h1v1h-1zM747 457h1v1h-1zM748 33h1v1h-1zM748 35h1v1h-1zM748 37h1v1h-1zM748 38h1v1h-1zM748 39h1v1h-1zM748 225h1v1h-1zM748 233h1v1h-1zM748 298h1v1h-1zM748 305h1v1h-1zM748 307h1v1h-1zM748 308h1v1h-1zM748 309h1v1h-1zM749 34h1v1h-1zM749 35h1v1h-1zM749 234h1v1h-1zM749 235h1v1h-1zM749 298h1v1h-1zM749 303h1v1h-1zM749 306h1v1h-1zM749 307h1v1h-1zM750 34h1v1h-1zM750 35h1v1h-1zM750 36h1v1h-1zM750 37h1v1h-1zM750 232h1v1h-1zM750 233h1v1h-1zM750 305h1v1h-1zM750 309h1v1h-1zM750 390h1v1h-1zM751 305h1v1h-1zM752 43h1v1h-1zM752 62h1v1h-1zM753 63h1v1h-1z"/><path transform="scale(1.17)" fill="#5acc30" d="M0 432h1v1h-1zM0 471h1v1h-1zM0 472h1v1h-1zM0 473h1v1h-1zM0 475h1v1h-1zM1 431h1v1h-1zM1 434h1v1h-1zM1 476h1v1h-1zM1 480h1v1h-1zM2 432h1v1h-1zM2 434h1v1h-1zM2 473h1v1h-1zM2 475h1v1h-1zM2 476h1v1h-1zM2 479h1v1h-1zM2 481h1v1h-1zM2 482h1v1h-1zM2 505h1v1h-1zM2 510h1v1h-1zM3 163h1v1h-1zM3 352h1v1h-1zM3 353h1v1h-1zM3 408h1v1h-1zM3 433h1v1h-1zM3 475h1v1h-1zM3 478h1v1h-1zM4 163h1v1h-1zM4 351h1v1h-1zM4 352h1v1h-1zM4 353h1v1h-1zM4 472h1v1h-1zM4 473h1v1h-1zM4 475h1v1h-1zM4 478h1v1h-1zM4 479h1v1h-1zM4 496h1v1h-1zM5 351h1v1h-1zM5 353h1v1h-1zM5 354h1v1h-1zM5 473h1v1h-1zM5 475h1v1h-1zM5 476h1v1h-1zM5 479h1v1h-1zM5 487h1v1h-1zM5 495h1v1h-1zM5 497h1v1h-1zM5 499h1v1h-1zM6 354h1v1h-1zM6 478h1v1h-1zM6 480h1v1h-1zM6 486h1v1h-1zM6 496h1v1h-1zM6 497h1v1h-1zM6 498h1v1h-1zM6 499h1v1h-1zM6 501h1v1h-1zM6 504h1v1h-1zM6 506h1v1h-1zM7 433h1v1h-1zM7 471h1v1h-1zM7 472h1v1h-1zM7 473h1v1h-1zM7 474h1v1h-1zM7 480h1v1h-1zM7 481h1v1h-1zM7 485h1v1h-1zM7 497h1v1h-1zM7 498h1v1h-1zM7 499h1v1h-1zM7 500h1v1h-1zM7 501h1v1h-1zM7 503h1v1h-1zM7 505h1v1h-1zM8 434h1v1h-1zM8 471h1v1h-1zM8 472h1v1h-1zM8 473h1v1h-1zM8 474h1v1h-1zM8 475h1v1h-1zM8 477h1v1h-1zM8 478h1v1h-1zM8 500h1v1h-1zM8 503h1v1h-1zM9 472h1v1h-1zM9 473h1v1h-1zM9 474h1v1h-1zM9 475h1v1h-1zM9 476h1v1h-1zM9 477h1v1h-1zM9 498h1v1h-1zM9 500h1v1h-1zM9 502h1v1h-1zM9 503h1v1h-1zM10 397h1v1h-1zM10 398h1v1h-1zM10 399h1v1h-1zM10 401h1v1h-1zM10 471h1v1h-1zM10 472h1v1h-1zM10 473h1v1h-1zM10 476h1v1h-1zM10 478h1v1h-1zM10 481h1v1h-1zM10 499h1v1h-1zM10 501h1v1h-1zM10 502h1v1h-1zM10 505h1v1h-1zM10 506h1v1h-1zM11 397h1v1h-1zM11 398h1v1h-1zM11 399h1v1h-1zM11 400h1v1h-1zM11 469h1v1h-1zM11 470h1v1h-1zM11 472h1v1h-1zM11 474h1v1h-1zM11 477h1v1h-1zM11 500h1v1h-1zM11 504h1v1h-1zM11 505h1v1h-1zM11 506h1v1h-1zM12 162h1v1h-1zM12 399h1v1h-1zM12 400h1v1h-1zM12 466h1v1h-1zM12 471h1v1h-1zM12 472h1v1h-1zM12 473h1v1h-1zM12 474h1v1h-1zM12 475h1v1h-1zM12 487h1v1h-1zM12 504h1v1h-1zM12 505h1v1h-1zM13 403h1v1h-1zM13 454h1v1h-1zM13 469h1v1h-1zM13 470h1v1h-1zM13 471h1v1h-1zM13 475h1v1h-1zM14 161h1v1h-1zM14 401h1v1h-1zM14 402h1v1h-1zM14 406h1v1h-1zM14 409h1v1h-1zM14 471h1v1h-1zM14 472h1v1h-1zM14 474h1v1h-1zM14 475h1v1h-1zM14 476h1v1h-1zM14 480h1v1h-1zM14 481h1v1h-1zM15 395h1v1h-1zM15 396h1v1h-1zM15 397h1v1h-1zM15 399h1v1h-1zM15 400h1v1h-1zM15 401h1v1h-1zM15 402h1v1h-1zM15 403h1v1h-1zM15 405h1v1h-1zM15 410h1v1h-1zM15 471h1v1h-1zM15 472h1v1h-1zM15 474h1v1h-1zM15 475h1v1h-1zM15 476h1v1h-1zM15 477h1v1h-1zM15 478h1v1h-1zM15 492h1v1h-1zM16 395h1v1h-1zM16 397h1v1h-1zM16 399h1v1h-1zM16 400h1v1h-1zM16 401h1v1h-1zM16 402h1v1h-1zM16 403h1v1h-1zM16 404h1v1h-1zM16 405h1v1h-1zM16 406h1v1h-1zM16 468h1v1h-1zM16 470h1v1h-1zM16 472h1v1h-1zM16 473h1v1h-1zM16 476h1v1h-1zM17 140h1v1h-1zM17 392h1v1h-1zM17 393h1v1h-1zM17 395h1v1h-1zM17 398h1v1h-1zM17 399h1v1h-1zM17 400h1v1h-1zM17 401h1v1h-1zM17 403h1v1h-1zM17 404h1v1h-1zM17 406h1v1h-1zM17 408h1v1h-1zM17 409h1v1h-1zM17 411h1v1h-1zM17 470h1v1h-1zM17 471h1v1h-1zM17 472h1v1h-1zM17 473h1v1h-1zM18 138h1v1h-1zM18 139h1v1h-1zM18 160h1v1h-1zM18 395h1v1h-1zM18 398h1v1h-1zM18 400h1v1h-1zM18 403h1v1h-1zM18 404h1v1h-1zM18 471h1v1h-1zM18 474h1v1h-1zM18 475h1v1h-1zM19 139h1v1h-1zM19 140h1v1h-1zM19 161h1v1h-1zM19 386h1v1h-1zM19 397h1v1h-1zM19 398h1v1h-1zM19 399h1v1h-1zM19 401h1v1h-1zM19 403h1v1h-1zM19 404h1v1h-1zM19 427h1v1h-1zM19 469h1v1h-1zM19 471h1v1h-1zM19 472h1v1h-1zM19 474h1v1h-1zM19 475h1v1h-1zM20 386h1v1h-1zM20 387h1v1h-1zM20 394h1v1h-1zM20 401h1v1h-1zM20 402h1v1h-1zM20 404h1v1h-1zM20 425h1v1h-1zM20 426h1v1h-1zM20 467h1v1h-1zM20 468h1v1h-1zM20 470h1v1h-1zM20 471h1v1h-1zM20 474h1v1h-1zM20 477h1v1h-1zM20 506h1v1h-1zM21 158h1v1h-1zM21 160h1v1h-1zM21 388h1v1h-1zM21 391h1v1h-1zM21 392h1v1h-1zM21 425h1v1h-1zM21 435h1v1h-1zM21 467h1v1h-1zM21 468h1v1h-1zM21 470h1v1h-1zM21 471h1v1h-1zM21 472h1v1h-1zM21 475h1v1h-1zM21 476h1v1h-1zM22 159h1v1h-1zM22 389h1v1h-1zM22 392h1v1h-1zM22 413h1v1h-1zM22 414h1v1h-1zM22 415h1v1h-1zM22 424h1v1h-1zM22 433h1v1h-1zM22 434h1v1h-1zM22 437h1v1h-1zM22 467h1v1h-1zM22 468h1v1h-1zM22 470h1v1h-1zM22 471h1v1h-1zM22 472h1v1h-1zM22 473h1v1h-1zM22 475h1v1h-1zM22 476h1v1h-1zM22 477h1v1h-1zM22 502h1v1h-1zM22 503h1v1h-1zM23 389h1v1h-1zM23 391h1v1h-1zM23 394h1v1h-1zM23 414h1v1h-1zM23 417h1v1h-1zM23 420h1v1h-1zM23 426h1v1h-1zM23 434h1v1h-1zM23 436h1v1h-1zM23 437h1v1h-1zM23 465h1v1h-1zM23 468h1v1h-1zM23 469h1v1h-1zM23 471h1v1h-1zM23 472h1v1h-1zM23 473h1v1h-1zM23 477h1v1h-1zM23 489h1v1h-1zM23 503h1v1h-1zM24 384h1v1h-1zM24 387h1v1h-1zM24 388h1v1h-1zM24 394h1v1h-1zM24 417h1v1h-1zM24 421h1v1h-1zM24 426h1v1h-1zM24 436h1v1h-1zM24 437h1v1h-1zM24 440h1v1h-1zM24 441h1v1h-1zM24 465h1v1h-1zM24 466h1v1h-1zM24 467h1v1h-1zM24 470h1v1h-1zM24 471h1v1h-1zM24 472h1v1h-1zM24 475h1v1h-1zM24 476h1v1h-1zM24 477h1v1h-1zM24 478h1v1h-1zM25 385h1v1h-1zM25 411h1v1h-1zM25 413h1v1h-1zM25 415h1v1h-1zM25 417h1v1h-1zM25 427h1v1h-1zM25 437h1v1h-1zM25 438h1v1h-1zM25 440h1v1h-1zM25 466h1v1h-1zM25 469h1v1h-1zM25 474h1v1h-1zM25 475h1v1h-1zM26 410h1v1h-1zM26 413h1v1h-1zM26 416h1v1h-1zM26 434h1v1h-1zM26 436h1v1h-1zM26 437h1v1h-1zM26 440h1v1h-1zM26 464h1v1h-1zM26 465h1v1h-1zM26 466h1v1h-1zM26 472h1v1h-1zM26 473h1v1h-1zM26 500h1v1h-1zM26 501h1v1h-1zM27 410h1v1h-1zM27 426h1v1h-1zM27 437h1v1h-1zM27 473h1v1h-1zM27 499h1v1h-1zM28 392h1v1h-1zM28 409h1v1h-1zM28 424h1v1h-1zM28 425h1v1h-1zM28 426h1v1h-1zM28 427h1v1h-1zM28 457h1v1h-1zM28 461h1v1h-1zM28 465h1v1h-1zM28 466h1v1h-1zM28 467h1v1h-1zM28 468h1v1h-1zM28 469h1v1h-1zM28 472h1v1h-1zM28 473h1v1h-1zM29 411h1v1h-1zM29 414h1v1h-1zM29 426h1v1h-1zM29 427h1v1h-1zM29 460h1v1h-1zM29 461h1v1h-1zM29 466h1v1h-1zM29 467h1v1h-1zM29 468h1v1h-1zM29 469h1v1h-1zM29 470h1v1h-1zM29 473h1v1h-1zM29 499h1v1h-1zM29 500h1v1h-1zM29 510h1v1h-1zM30 410h1v1h-1zM30 416h1v1h-1zM30 417h1v1h-1zM30 442h1v1h-1zM30 459h1v1h-1zM30 460h1v1h-1zM30 461h1v1h-1zM30 462h1v1h-1zM30 465h1v1h-1zM30 467h1v1h-1zM30 468h1v1h-1zM30 475h1v1h-1zM30 495h1v1h-1zM30 496h1v1h-1zM30 497h1v1h-1zM30 498h1v1h-1zM30 500h1v1h-1zM30 510h1v1h-1zM31 409h1v1h-1zM31 414h1v1h-1zM31 415h1v1h-1zM31 416h1v1h-1zM31 418h1v1h-1zM31 461h1v1h-1zM31 463h1v1h-1zM31 464h1v1h-1zM31 465h1v1h-1zM31 466h1v1h-1zM31 467h1v1h-1zM31 469h1v1h-1zM31 470h1v1h-1zM31 475h1v1h-1zM31 476h1v1h-1zM32 456h1v1h-1zM32 460h1v1h-1zM32 461h1v1h-1zM32 464h1v1h-1zM32 466h1v1h-1zM32 467h1v1h-1zM32 468h1v1h-1zM32 469h1v1h-1zM32 470h1v1h-1zM32 471h1v1h-1zM32 475h1v1h-1zM32 476h1v1h-1zM32 492h1v1h-1zM32 497h1v1h-1zM33 1h1v1h-1zM33 426h1v1h-1zM33 427h1v1h-1zM33 457h1v1h-1zM33 461h1v1h-1zM33 462h1v1h-1zM33 465h1v1h-1zM33 466h1v1h-1zM33 468h1v1h-1zM33 469h1v1h-1zM33 474h1v1h-1zM33 477h1v1h-1zM33 497h1v1h-1zM33 498h1v1h-1zM34 1h1v1h-1zM34 316h1v1h-1zM34 317h1v1h-1zM34 389h1v1h-1zM34 426h1v1h-1zM34 427h1v1h-1zM34 457h1v1h-1zM34 459h1v1h-1zM34 461h1v1h-1zM34 463h1v1h-1zM34 464h1v1h-1zM34 465h1v1h-1zM34 466h1v1h-1zM34 467h1v1h-1zM34 468h1v1h-1zM34 470h1v1h-1zM34 471h1v1h-1zM34 472h1v1h-1zM34 499h1v1h-1zM35 1h1v1h-1zM35 294h1v1h-1zM35 313h1v1h-1zM35 314h1v1h-1zM35 315h1v1h-1zM35 316h1v1h-1zM35 458h1v1h-1zM35 459h1v1h-1zM35 460h1v1h-1zM35 461h1v1h-1zM35 462h1v1h-1zM35 463h1v1h-1zM35 464h1v1h-1zM35 465h1v1h-1zM35 466h1v1h-1zM35 467h1v1h-1zM35 470h1v1h-1zM35 472h1v1h-1zM35 474h1v1h-1zM36 1h1v1h-1zM36 290h1v1h-1zM36 293h1v1h-1zM36 314h1v1h-1zM36 427h1v1h-1zM36 459h1v1h-1zM36 460h1v1h-1zM36 461h1v1h-1zM36 464h1v1h-1zM36 465h1v1h-1zM36 466h1v1h-1zM36 472h1v1h-1zM36 473h1v1h-1zM37 277h1v1h-1zM37 288h1v1h-1zM37 290h1v1h-1zM37 291h1v1h-1zM37 314h1v1h-1zM37 322h1v1h-1zM37 460h1v1h-1zM37 461h1v1h-1zM37 462h1v1h-1zM37 463h1v1h-1zM37 464h1v1h-1zM37 465h1v1h-1zM37 472h1v1h-1zM38 276h1v1h-1zM38 280h1v1h-1zM38 287h1v1h-1zM38 290h1v1h-1zM38 291h1v1h-1zM38 293h1v1h-1zM38 295h1v1h-1zM38 296h1v1h-1zM38 303h1v1h-1zM38 310h1v1h-1zM38 311h1v1h-1zM38 312h1v1h-1zM38 317h1v1h-1zM38 460h1v1h-1zM38 461h1v1h-1zM39 252h1v1h-1zM39 275h1v1h-1zM39 276h1v1h-1zM39 280h1v1h-1zM39 281h1v1h-1zM39 282h1v1h-1zM39 286h1v1h-1zM39 289h1v1h-1zM39 292h1v1h-1zM39 296h1v1h-1zM39 304h1v1h-1zM39 311h1v1h-1zM39 318h1v1h-1zM39 391h1v1h-1zM39 461h1v1h-1zM39 462h1v1h-1zM39 466h1v1h-1zM39 468h1v1h-1zM40 252h1v1h-1zM40 253h1v1h-1zM40 276h1v1h-1zM40 277h1v1h-1zM40 278h1v1h-1zM40 279h1v1h-1zM40 281h1v1h-1zM40 312h1v1h-1zM40 313h1v1h-1zM40 316h1v1h-1zM40 318h1v1h-1zM40 320h1v1h-1zM40 391h1v1h-1zM40 461h1v1h-1zM40 463h1v1h-1zM40 465h1v1h-1zM40 468h1v1h-1zM41 250h1v1h-1zM41 251h1v1h-1zM41 252h1v1h-1zM41 253h1v1h-1zM41 254h1v1h-1zM41 256h1v1h-1zM41 257h1v1h-1zM41 273h1v1h-1zM41 280h1v1h-1zM41 283h1v1h-1zM41 284h1v1h-1zM41 298h1v1h-1zM41 304h1v1h-1zM41 305h1v1h-1zM41 311h1v1h-1zM41 313h1v1h-1zM41 315h1v1h-1zM41 317h1v1h-1zM41 320h1v1h-1zM41 321h1v1h-1zM41 409h1v1h-1zM41 460h1v1h-1zM41 462h1v1h-1zM41 464h1v1h-1zM41 466h1v1h-1zM41 507h1v1h-1zM42 249h1v1h-1zM42 252h1v1h-1zM42 253h1v1h-1zM42 254h1v1h-1zM42 255h1v1h-1zM42 256h1v1h-1zM42 273h1v1h-1zM42 274h1v1h-1zM42 275h1v1h-1zM42 277h1v1h-1zM42 280h1v1h-1zM42 281h1v1h-1zM42 282h1v1h-1zM42 299h1v1h-1zM42 301h1v1h-1zM42 304h1v1h-1zM42 316h1v1h-1zM42 319h1v1h-1zM42 390h1v1h-1zM42 459h1v1h-1zM42 464h1v1h-1zM42 465h1v1h-1zM42 508h1v1h-1zM42 510h1v1h-1zM43 251h1v1h-1zM43 252h1v1h-1zM43 253h1v1h-1zM43 254h1v1h-1zM43 255h1v1h-1zM43 256h1v1h-1zM43 273h1v1h-1zM43 277h1v1h-1zM43 279h1v1h-1zM43 280h1v1h-1zM43 281h1v1h-1zM43 285h1v1h-1zM43 288h1v1h-1zM43 304h1v1h-1zM43 315h1v1h-1zM43 317h1v1h-1zM43 319h1v1h-1zM43 462h1v1h-1zM43 463h1v1h-1zM43 464h1v1h-1zM43 505h1v1h-1zM43 506h1v1h-1zM43 509h1v1h-1zM44 248h1v1h-1zM44 250h1v1h-1zM44 252h1v1h-1zM44 253h1v1h-1zM44 257h1v1h-1zM44 258h1v1h-1zM44 273h1v1h-1zM44 275h1v1h-1zM44 278h1v1h-1zM44 279h1v1h-1zM44 280h1v1h-1zM44 281h1v1h-1zM44 282h1v1h-1zM44 284h1v1h-1zM44 287h1v1h-1zM44 313h1v1h-1zM44 314h1v1h-1zM44 315h1v1h-1zM44 316h1v1h-1zM44 317h1v1h-1zM44 318h1v1h-1zM44 464h1v1h-1zM44 503h1v1h-1zM44 506h1v1h-1zM44 508h1v1h-1zM44 509h1v1h-1zM44 510h1v1h-1zM45 248h1v1h-1zM45 250h1v1h-1zM45 251h1v1h-1zM45 252h1v1h-1zM45 253h1v1h-1zM45 273h1v1h-1zM45 274h1v1h-1zM45 275h1v1h-1zM45 277h1v1h-1zM45 278h1v1h-1zM45 279h1v1h-1zM45 280h1v1h-1zM45 281h1v1h-1zM45 282h1v1h-1zM45 289h1v1h-1zM45 312h1v1h-1zM45 314h1v1h-1zM45 315h1v1h-1zM45 316h1v1h-1zM45 317h1v1h-1zM45 318h1v1h-1zM45 443h1v1h-1zM45 460h1v1h-1zM45 464h1v1h-1zM45 505h1v1h-1zM45 506h1v1h-1zM45 509h1v1h-1zM46 247h1v1h-1zM46 250h1v1h-1zM46 251h1v1h-1zM46 252h1v1h-1zM46 276h1v1h-1zM46 277h1v1h-1zM46 278h1v1h-1zM46 279h1v1h-1zM46 280h1v1h-1zM46 283h1v1h-1zM46 285h1v1h-1zM46 286h1v1h-1zM46 289h1v1h-1zM46 290h1v1h-1zM46 312h1v1h-1zM46 315h1v1h-1zM46 317h1v1h-1zM46 318h1v1h-1zM46 429h1v1h-1zM46 460h1v1h-1zM46 461h1v1h-1zM46 462h1v1h-1zM46 502h1v1h-1zM46 505h1v1h-1zM46 506h1v1h-1zM46 507h1v1h-1zM47 246h1v1h-1zM47 251h1v1h-1zM47 252h1v1h-1zM47 253h1v1h-1zM47 254h1v1h-1zM47 255h1v1h-1zM47 256h1v1h-1zM47 258h1v1h-1zM47 274h1v1h-1zM47 275h1v1h-1zM47 277h1v1h-1zM47 278h1v1h-1zM47 279h1v1h-1zM47 281h1v1h-1zM47 283h1v1h-1zM47 284h1v1h-1zM47 285h1v1h-1zM47 291h1v1h-1zM47 312h1v1h-1zM47 314h1v1h-1zM47 315h1v1h-1zM47 319h1v1h-1zM47 462h1v1h-1zM47 464h1v1h-1zM47 484h1v1h-1zM47 487h1v1h-1zM47 488h1v1h-1zM47 503h1v1h-1zM47 504h1v1h-1zM47 506h1v1h-1zM47 507h1v1h-1zM48 254h1v1h-1zM48 255h1v1h-1zM48 256h1v1h-1zM48 257h1v1h-1zM48 258h1v1h-1zM48 276h1v1h-1zM48 278h1v1h-1zM48 279h1v1h-1zM48 282h1v1h-1zM48 283h1v1h-1zM48 284h1v1h-1zM48 287h1v1h-1zM48 288h1v1h-1zM48 311h1v1h-1zM48 463h1v1h-1zM48 487h1v1h-1zM48 504h1v1h-1zM48 505h1v1h-1zM48 506h1v1h-1zM48 507h1v1h-1zM48 508h1v1h-1zM49 255h1v1h-1zM49 256h1v1h-1zM49 257h1v1h-1zM49 258h1v1h-1zM49 275h1v1h-1zM49 277h1v1h-1zM49 281h1v1h-1zM49 282h1v1h-1zM49 284h1v1h-1zM49 285h1v1h-1zM49 286h1v1h-1zM49 287h1v1h-1zM49 288h1v1h-1zM49 312h1v1h-1zM49 462h1v1h-1zM49 463h1v1h-1zM49 485h1v1h-1zM49 486h1v1h-1zM49 504h1v1h-1zM49 507h1v1h-1zM50 253h1v1h-1zM50 255h1v1h-1zM50 281h1v1h-1zM50 285h1v1h-1zM50 287h1v1h-1zM50 313h1v1h-1zM50 424h1v1h-1zM50 462h1v1h-1zM50 463h1v1h-1zM50 466h1v1h-1zM50 484h1v1h-1zM50 487h1v1h-1zM50 488h1v1h-1zM50 492h1v1h-1zM50 505h1v1h-1zM50 506h1v1h-1zM50 510h1v1h-1zM51 240h1v1h-1zM51 241h1v1h-1zM51 242h1v1h-1zM51 249h1v1h-1zM51 251h1v1h-1zM51 252h1v1h-1zM51 253h1v1h-1zM51 254h1v1h-1zM51 255h1v1h-1zM51 256h1v1h-1zM51 257h1v1h-1zM51 285h1v1h-1zM51 286h1v1h-1zM51 423h1v1h-1zM51 461h1v1h-1zM51 483h1v1h-1zM51 488h1v1h-1zM51 489h1v1h-1zM51 507h1v1h-1zM51 509h1v1h-1zM52 240h1v1h-1zM52 242h1v1h-1zM52 243h1v1h-1zM52 246h1v1h-1zM52 248h1v1h-1zM52 251h1v1h-1zM52 286h1v1h-1zM52 424h1v1h-1zM52 460h1v1h-1zM52 486h1v1h-1zM52 502h1v1h-1zM52 506h1v1h-1zM52 507h1v1h-1zM53 240h1v1h-1zM53 243h1v1h-1zM53 245h1v1h-1zM53 247h1v1h-1zM53 251h1v1h-1zM53 415h1v1h-1zM53 428h1v1h-1zM53 438h1v1h-1zM53 443h1v1h-1zM53 462h1v1h-1zM53 463h1v1h-1zM53 484h1v1h-1zM53 485h1v1h-1zM53 487h1v1h-1zM53 493h1v1h-1zM53 503h1v1h-1zM53 507h1v1h-1zM53 508h1v1h-1zM53 510h1v1h-1zM54 237h1v1h-1zM54 241h1v1h-1zM54 244h1v1h-1zM54 245h1v1h-1zM54 246h1v1h-1zM54 439h1v1h-1zM54 459h1v1h-1zM54 462h1v1h-1zM54 463h1v1h-1zM54 490h1v1h-1zM54 504h1v1h-1zM54 509h1v1h-1zM54 510h1v1h-1zM55 239h1v1h-1zM55 245h1v1h-1zM55 247h1v1h-1zM55 283h1v1h-1zM55 341h1v1h-1zM55 460h1v1h-1zM55 461h1v1h-1zM55 464h1v1h-1zM55 475h1v1h-1zM55 487h1v1h-1zM55 488h1v1h-1zM55 489h1v1h-1zM56 236h1v1h-1zM56 237h1v1h-1zM56 239h1v1h-1zM56 241h1v1h-1zM56 243h1v1h-1zM56 342h1v1h-1zM56 344h1v1h-1zM56 411h1v1h-1zM56 485h1v1h-1zM56 488h1v1h-1zM56 489h1v1h-1zM56 491h1v1h-1zM57 234h1v1h-1zM57 238h1v1h-1zM57 239h1v1h-1zM57 241h1v1h-1zM57 242h1v1h-1zM57 343h1v1h-1zM57 344h1v1h-1zM57 349h1v1h-1zM57 412h1v1h-1zM57 413h1v1h-1zM57 486h1v1h-1zM57 490h1v1h-1zM58 233h1v1h-1zM58 234h1v1h-1zM58 235h1v1h-1zM58 236h1v1h-1zM58 238h1v1h-1zM58 240h1v1h-1zM58 241h1v1h-1zM58 344h1v1h-1zM58 345h1v1h-1zM58 347h1v1h-1zM58 349h1v1h-1zM58 412h1v1h-1zM58 413h1v1h-1zM58 415h1v1h-1zM58 417h1v1h-1zM58 457h1v1h-1zM58 461h1v1h-1zM58 463h1v1h-1zM58 487h1v1h-1zM58 490h1v1h-1zM58 507h1v1h-1zM59 234h1v1h-1zM59 237h1v1h-1zM59 239h1v1h-1zM59 240h1v1h-1zM59 412h1v1h-1zM59 413h1v1h-1zM59 414h1v1h-1zM59 415h1v1h-1zM59 416h1v1h-1zM59 417h1v1h-1zM59 462h1v1h-1zM59 464h1v1h-1zM59 465h1v1h-1zM59 485h1v1h-1zM59 487h1v1h-1zM59 489h1v1h-1zM59 492h1v1h-1zM60 7h1v1h-1zM60 237h1v1h-1zM60 240h1v1h-1zM60 350h1v1h-1zM60 413h1v1h-1zM60 416h1v1h-1zM60 457h1v1h-1zM60 458h1v1h-1zM60 460h1v1h-1zM60 464h1v1h-1zM60 486h1v1h-1zM60 489h1v1h-1zM60 491h1v1h-1zM60 512h1v1h-1zM61 6h1v1h-1zM61 9h1v1h-1zM61 236h1v1h-1zM61 239h1v1h-1zM61 240h1v1h-1zM61 351h1v1h-1zM61 414h1v1h-1zM61 457h1v1h-1zM61 459h1v1h-1zM61 463h1v1h-1zM61 478h1v1h-1zM61 482h1v1h-1zM61 485h1v1h-1zM61 488h1v1h-1zM61 489h1v1h-1zM62 9h1v1h-1zM62 235h1v1h-1zM62 237h1v1h-1zM62 238h1v1h-1zM62 239h1v1h-1zM62 241h1v1h-1zM62 242h1v1h-1zM62 347h1v1h-1zM62 348h1v1h-1zM62 349h1v1h-1zM62 351h1v1h-1zM62 352h1v1h-1zM62 415h1v1h-1zM62 458h1v1h-1zM62 463h1v1h-1zM62 477h1v1h-1zM62 479h1v1h-1zM62 481h1v1h-1zM62 487h1v1h-1zM63 7h1v1h-1zM63 235h1v1h-1zM63 236h1v1h-1zM63 241h1v1h-1zM63 388h1v1h-1zM63 440h1v1h-1zM63 458h1v1h-1zM63 459h1v1h-1zM63 460h1v1h-1zM63 462h1v1h-1zM63 467h1v1h-1zM63 480h1v1h-1zM63 481h1v1h-1zM63 486h1v1h-1zM63 487h1v1h-1zM63 488h1v1h-1zM63 490h1v1h-1zM64 6h1v1h-1zM64 235h1v1h-1zM64 237h1v1h-1zM64 349h1v1h-1zM64 350h1v1h-1zM64 454h1v1h-1zM64 456h1v1h-1zM64 458h1v1h-1zM64 459h1v1h-1zM64 460h1v1h-1zM64 488h1v1h-1zM64 489h1v1h-1zM65 238h1v1h-1zM65 349h1v1h-1zM65 350h1v1h-1zM65 414h1v1h-1zM65 455h1v1h-1zM65 456h1v1h-1zM65 457h1v1h-1zM65 488h1v1h-1zM65 490h1v1h-1zM66 487h1v1h-1zM67 407h1v1h-1zM67 430h1v1h-1zM67 486h1v1h-1zM68 426h1v1h-1zM68 427h1v1h-1zM68 430h1v1h-1zM68 455h1v1h-1zM68 502h1v1h-1zM69 7h1v1h-1zM69 453h1v1h-1zM69 455h1v1h-1zM69 487h1v1h-1zM69 488h1v1h-1zM69 501h1v1h-1zM69 502h1v1h-1zM69 504h1v1h-1zM70 7h1v1h-1zM70 85h1v1h-1zM70 453h1v1h-1zM70 455h1v1h-1zM70 459h1v1h-1zM70 471h1v1h-1zM70 501h1v1h-1zM70 502h1v1h-1zM70 503h1v1h-1zM71 85h1v1h-1zM71 406h1v1h-1zM71 453h1v1h-1zM71 454h1v1h-1zM71 456h1v1h-1zM71 457h1v1h-1zM71 459h1v1h-1zM72 8h1v1h-1zM72 9h1v1h-1zM72 410h1v1h-1zM72 423h1v1h-1zM72 452h1v1h-1zM72 457h1v1h-1zM72 491h1v1h-1zM73 9h1v1h-1zM73 409h1v1h-1zM73 443h1v1h-1zM73 444h1v1h-1zM73 455h1v1h-1zM73 456h1v1h-1zM73 457h1v1h-1zM73 492h1v1h-1zM74 414h1v1h-1zM74 418h1v1h-1zM74 452h1v1h-1zM74 454h1v1h-1zM75 418h1v1h-1zM75 451h1v1h-1zM76 428h1v1h-1zM76 450h1v1h-1zM78 442h1v1h-1zM78 487h1v1h-1zM79 59h1v1h-1zM79 442h1v1h-1zM79 486h1v1h-1zM80 56h1v1h-1zM80 58h1v1h-1zM80 485h1v1h-1zM81 55h1v1h-1zM81 57h1v1h-1zM81 488h1v1h-1zM82 2h1v1h-1zM82 12h1v1h-1zM82 13h1v1h-1zM82 15h1v1h-1zM82 55h1v1h-1zM82 488h1v1h-1zM82 489h1v1h-1zM82 490h1v1h-1zM83 13h1v1h-1zM83 14h1v1h-1zM83 489h1v1h-1zM83 491h1v1h-1zM84 486h1v1h-1zM84 488h1v1h-1zM84 489h1v1h-1zM85 492h1v1h-1zM86 393h1v1h-1zM86 483h1v1h-1zM86 487h1v1h-1zM86 492h1v1h-1zM86 493h1v1h-1zM87 394h1v1h-1zM87 484h1v1h-1zM87 487h1v1h-1zM87 488h1v1h-1zM87 489h1v1h-1zM87 492h1v1h-1zM88 486h1v1h-1zM88 487h1v1h-1zM88 488h1v1h-1zM89 33h1v1h-1zM89 34h1v1h-1zM89 35h1v1h-1zM89 396h1v1h-1zM89 480h1v1h-1zM89 483h1v1h-1zM89 487h1v1h-1zM89 488h1v1h-1zM90 12h1v1h-1zM90 33h1v1h-1zM90 34h1v1h-1zM90 396h1v1h-1zM90 479h1v1h-1zM90 481h1v1h-1zM90 484h1v1h-1zM90 489h1v1h-1zM91 33h1v1h-1zM91 34h1v1h-1zM91 396h1v1h-1zM91 397h1v1h-1zM91 431h1v1h-1zM91 478h1v1h-1zM91 482h1v1h-1zM91 483h1v1h-1zM91 484h1v1h-1zM91 490h1v1h-1zM92 33h1v1h-1zM92 395h1v1h-1zM92 432h1v1h-1zM92 480h1v1h-1zM92 481h1v1h-1zM92 486h1v1h-1zM92 487h1v1h-1zM93 69h1v1h-1zM93 72h1v1h-1zM93 73h1v1h-1zM93 74h1v1h-1zM93 79h1v1h-1zM93 397h1v1h-1zM93 480h1v1h-1zM93 481h1v1h-1zM93 482h1v1h-1zM93 483h1v1h-1zM93 487h1v1h-1zM94 391h1v1h-1zM94 396h1v1h-1zM94 397h1v1h-1zM94 479h1v1h-1zM94 480h1v1h-1zM94 482h1v1h-1zM94 483h1v1h-1zM94 486h1v1h-1zM95 71h1v1h-1zM95 392h1v1h-1zM95 395h1v1h-1zM95 432h1v1h-1zM95 435h1v1h-1zM95 475h1v1h-1zM95 476h1v1h-1zM95 477h1v1h-1zM95 479h1v1h-1zM95 482h1v1h-1zM95 483h1v1h-1zM95 484h1v1h-1zM95 485h1v1h-1zM96 70h1v1h-1zM96 397h1v1h-1zM96 398h1v1h-1zM96 399h1v1h-1zM96 400h1v1h-1zM96 432h1v1h-1zM96 434h1v1h-1zM96 481h1v1h-1zM96 483h1v1h-1zM96 486h1v1h-1zM97 399h1v1h-1zM97 432h1v1h-1zM97 436h1v1h-1zM97 437h1v1h-1zM97 477h1v1h-1zM97 478h1v1h-1zM97 479h1v1h-1zM97 481h1v1h-1zM97 482h1v1h-1zM97 486h1v1h-1zM97 487h1v1h-1zM98 25h1v1h-1zM98 437h1v1h-1zM98 478h1v1h-1zM98 479h1v1h-1zM98 480h1v1h-1zM98 481h1v1h-1zM99 25h1v1h-1zM99 475h1v1h-1zM99 477h1v1h-1zM99 480h1v1h-1zM99 481h1v1h-1zM100 26h1v1h-1zM100 438h1v1h-1zM100 440h1v1h-1zM100 470h1v1h-1zM100 472h1v1h-1zM100 477h1v1h-1zM100 479h1v1h-1zM100 480h1v1h-1zM100 483h1v1h-1zM101 25h1v1h-1zM101 164h1v1h-1zM101 170h1v1h-1zM101 173h1v1h-1zM101 466h1v1h-1zM101 467h1v1h-1zM101 470h1v1h-1zM101 472h1v1h-1zM101 475h1v1h-1zM101 476h1v1h-1zM101 477h1v1h-1zM101 480h1v1h-1zM101 482h1v1h-1zM101 483h1v1h-1zM102 24h1v1h-1zM102 170h1v1h-1zM102 171h1v1h-1zM102 172h1v1h-1zM102 462h1v1h-1zM102 463h1v1h-1zM102 465h1v1h-1zM102 466h1v1h-1zM102 470h1v1h-1zM102 471h1v1h-1zM102 473h1v1h-1zM102 474h1v1h-1zM102 476h1v1h-1zM102 477h1v1h-1zM103 162h1v1h-1zM103 163h1v1h-1zM103 169h1v1h-1zM103 172h1v1h-1zM103 173h1v1h-1zM103 464h1v1h-1zM103 465h1v1h-1zM103 470h1v1h-1zM103 471h1v1h-1zM103 474h1v1h-1zM103 475h1v1h-1zM103 477h1v1h-1zM103 484h1v1h-1zM103 485h1v1h-1zM104 32h1v1h-1zM104 94h1v1h-1zM104 162h1v1h-1zM104 163h1v1h-1zM104 165h1v1h-1zM104 166h1v1h-1zM104 167h1v1h-1zM104 169h1v1h-1zM104 457h1v1h-1zM104 458h1v1h-1zM104 464h1v1h-1zM104 465h1v1h-1zM104 470h1v1h-1zM104 474h1v1h-1zM104 475h1v1h-1zM104 481h1v1h-1zM105 8h1v1h-1zM105 91h1v1h-1zM105 93h1v1h-1zM105 165h1v1h-1zM105 167h1v1h-1zM105 168h1v1h-1zM105 172h1v1h-1zM105 174h1v1h-1zM105 457h1v1h-1zM105 465h1v1h-1zM105 466h1v1h-1zM105 469h1v1h-1zM105 474h1v1h-1zM105 480h1v1h-1zM106 162h1v1h-1zM106 163h1v1h-1zM106 164h1v1h-1zM106 173h1v1h-1zM106 174h1v1h-1zM106 457h1v1h-1zM106 468h1v1h-1zM106 469h1v1h-1zM106 472h1v1h-1zM106 474h1v1h-1zM106 476h1v1h-1zM106 477h1v1h-1zM107 156h1v1h-1zM107 162h1v1h-1zM107 163h1v1h-1zM107 166h1v1h-1zM107 169h1v1h-1zM107 172h1v1h-1zM107 457h1v1h-1zM107 458h1v1h-1zM107 459h1v1h-1zM107 466h1v1h-1zM107 468h1v1h-1zM107 469h1v1h-1zM107 472h1v1h-1zM107 475h1v1h-1zM107 476h1v1h-1zM107 483h1v1h-1zM108 10h1v1h-1zM108 156h1v1h-1zM108 157h1v1h-1zM108 173h1v1h-1zM108 466h1v1h-1zM108 467h1v1h-1zM108 471h1v1h-1zM108 473h1v1h-1zM108 474h1v1h-1zM108 475h1v1h-1zM108 476h1v1h-1zM108 477h1v1h-1zM108 480h1v1h-1zM108 481h1v1h-1zM108 482h1v1h-1zM109 11h1v1h-1zM109 12h1v1h-1zM109 155h1v1h-1zM109 163h1v1h-1zM109 172h1v1h-1zM109 173h1v1h-1zM109 174h1v1h-1zM109 459h1v1h-1zM109 460h1v1h-1zM109 462h1v1h-1zM109 463h1v1h-1zM109 464h1v1h-1zM109 468h1v1h-1zM109 469h1v1h-1zM109 472h1v1h-1zM110 10h1v1h-1zM110 11h1v1h-1zM110 159h1v1h-1zM110 160h1v1h-1zM110 161h1v1h-1zM110 164h1v1h-1zM110 168h1v1h-1zM110 171h1v1h-1zM110 173h1v1h-1zM110 457h1v1h-1zM110 458h1v1h-1zM110 459h1v1h-1zM110 460h1v1h-1zM110 462h1v1h-1zM110 463h1v1h-1zM110 470h1v1h-1zM110 471h1v1h-1zM111 11h1v1h-1zM111 155h1v1h-1zM111 158h1v1h-1zM111 165h1v1h-1zM111 169h1v1h-1zM111 170h1v1h-1zM111 174h1v1h-1zM111 457h1v1h-1zM111 459h1v1h-1zM111 460h1v1h-1zM111 463h1v1h-1zM111 464h1v1h-1zM111 465h1v1h-1zM111 469h1v1h-1zM111 470h1v1h-1zM111 471h1v1h-1zM111 472h1v1h-1zM111 473h1v1h-1zM112 155h1v1h-1zM112 157h1v1h-1zM112 159h1v1h-1zM112 166h1v1h-1zM112 170h1v1h-1zM112 171h1v1h-1zM112 172h1v1h-1zM112 175h1v1h-1zM112 459h1v1h-1zM112 460h1v1h-1zM112 461h1v1h-1zM112 468h1v1h-1zM113 156h1v1h-1zM113 158h1v1h-1zM113 165h1v1h-1zM113 171h1v1h-1zM113 467h1v1h-1zM114 157h1v1h-1zM114 158h1v1h-1zM114 161h1v1h-1zM114 162h1v1h-1zM114 163h1v1h-1zM114 167h1v1h-1zM114 168h1v1h-1zM114 173h1v1h-1zM114 460h1v1h-1zM115 159h1v1h-1zM115 167h1v1h-1zM115 168h1v1h-1zM115 173h1v1h-1zM115 174h1v1h-1zM115 457h1v1h-1zM115 459h1v1h-1zM115 460h1v1h-1zM116 158h1v1h-1zM116 159h1v1h-1zM116 167h1v1h-1zM116 168h1v1h-1zM116 173h1v1h-1zM116 174h1v1h-1zM116 417h1v1h-1zM116 421h1v1h-1zM116 456h1v1h-1zM116 459h1v1h-1zM117 158h1v1h-1zM117 166h1v1h-1zM117 418h1v1h-1zM117 429h1v1h-1zM117 430h1v1h-1zM118 166h1v1h-1zM118 167h1v1h-1zM118 173h1v1h-1zM118 416h1v1h-1zM118 421h1v1h-1zM119 166h1v1h-1zM119 168h1v1h-1zM119 416h1v1h-1zM119 423h1v1h-1zM119 425h1v1h-1zM120 169h1v1h-1zM120 173h1v1h-1zM120 175h1v1h-1zM120 421h1v1h-1zM120 422h1v1h-1zM120 425h1v1h-1zM121 160h1v1h-1zM121 168h1v1h-1zM121 170h1v1h-1zM121 173h1v1h-1zM121 174h1v1h-1zM121 419h1v1h-1zM121 423h1v1h-1zM122 60h1v1h-1zM122 147h1v1h-1zM122 161h1v1h-1zM122 162h1v1h-1zM122 163h1v1h-1zM122 169h1v1h-1zM122 173h1v1h-1zM122 418h1v1h-1zM122 420h1v1h-1zM122 421h1v1h-1zM122 422h1v1h-1zM123 143h1v1h-1zM123 146h1v1h-1zM123 167h1v1h-1zM123 168h1v1h-1zM123 169h1v1h-1zM123 174h1v1h-1zM123 418h1v1h-1zM123 420h1v1h-1zM123 425h1v1h-1zM123 427h1v1h-1zM123 507h1v1h-1zM124 144h1v1h-1zM124 146h1v1h-1zM124 148h1v1h-1zM124 149h1v1h-1zM124 160h1v1h-1zM124 166h1v1h-1zM124 168h1v1h-1zM124 169h1v1h-1zM124 170h1v1h-1zM124 171h1v1h-1zM124 173h1v1h-1zM124 417h1v1h-1zM124 418h1v1h-1zM124 420h1v1h-1zM124 422h1v1h-1zM124 423h1v1h-1zM124 424h1v1h-1zM124 425h1v1h-1zM124 426h1v1h-1zM124 428h1v1h-1zM125 145h1v1h-1zM125 148h1v1h-1zM125 149h1v1h-1zM125 160h1v1h-1zM125 162h1v1h-1zM125 166h1v1h-1zM125 167h1v1h-1zM125 417h1v1h-1zM125 421h1v1h-1zM125 422h1v1h-1zM125 423h1v1h-1zM125 426h1v1h-1zM126 145h1v1h-1zM126 146h1v1h-1zM126 150h1v1h-1zM126 153h1v1h-1zM126 157h1v1h-1zM126 160h1v1h-1zM126 162h1v1h-1zM126 163h1v1h-1zM126 164h1v1h-1zM126 165h1v1h-1zM126 166h1v1h-1zM126 420h1v1h-1zM126 422h1v1h-1zM126 423h1v1h-1zM126 427h1v1h-1zM126 509h1v1h-1zM127 145h1v1h-1zM127 147h1v1h-1zM127 148h1v1h-1zM127 149h1v1h-1zM127 150h1v1h-1zM127 151h1v1h-1zM127 162h1v1h-1zM127 418h1v1h-1zM127 419h1v1h-1zM127 422h1v1h-1zM127 424h1v1h-1zM127 482h1v1h-1zM127 506h1v1h-1zM128 147h1v1h-1zM128 150h1v1h-1zM128 151h1v1h-1zM128 152h1v1h-1zM128 424h1v1h-1zM128 426h1v1h-1zM128 507h1v1h-1zM129 152h1v1h-1zM129 153h1v1h-1zM129 155h1v1h-1zM129 156h1v1h-1zM129 157h1v1h-1zM129 424h1v1h-1zM130 153h1v1h-1zM130 154h1v1h-1zM130 155h1v1h-1zM130 156h1v1h-1zM130 157h1v1h-1zM131 153h1v1h-1zM131 154h1v1h-1zM131 155h1v1h-1zM131 156h1v1h-1zM131 157h1v1h-1zM131 415h1v1h-1zM131 424h1v1h-1zM131 483h1v1h-1zM132 156h1v1h-1zM132 480h1v1h-1zM133 480h1v1h-1zM133 482h1v1h-1zM134 65h1v1h-1zM134 477h1v1h-1zM134 510h1v1h-1zM135 65h1v1h-1zM135 66h1v1h-1zM135 68h1v1h-1zM135 306h1v1h-1zM135 307h1v1h-1zM135 478h1v1h-1zM135 484h1v1h-1zM135 485h1v1h-1zM135 511h1v1h-1zM136 68h1v1h-1zM136 69h1v1h-1zM136 70h1v1h-1zM136 305h1v1h-1zM136 306h1v1h-1zM136 307h1v1h-1zM136 308h1v1h-1zM136 310h1v1h-1zM136 504h1v1h-1zM137 68h1v1h-1zM137 69h1v1h-1zM137 309h1v1h-1zM137 504h1v1h-1zM138 67h1v1h-1zM138 70h1v1h-1zM138 71h1v1h-1zM138 72h1v1h-1zM138 82h1v1h-1zM138 305h1v1h-1zM139 306h1v1h-1zM139 487h1v1h-1zM140 69h1v1h-1zM140 310h1v1h-1zM141 68h1v1h-1zM141 311h1v1h-1zM141 312h1v1h-1zM142 67h1v1h-1zM142 69h1v1h-1zM142 312h1v1h-1zM142 475h1v1h-1zM143 69h1v1h-1zM143 70h1v1h-1zM144 37h1v1h-1zM144 70h1v1h-1zM144 312h1v1h-1zM144 480h1v1h-1zM144 481h1v1h-1zM144 482h1v1h-1zM145 67h1v1h-1zM145 69h1v1h-1zM145 315h1v1h-1zM148 60h1v1h-1zM148 476h1v1h-1zM155 101h1v1h-1zM156 99h1v1h-1zM156 101h1v1h-1zM157 98h1v1h-1zM158 64h1v1h-1zM158 97h1v1h-1zM158 99h1v1h-1zM158 100h1v1h-1zM158 101h1v1h-1zM159 54h1v1h-1zM159 56h1v1h-1zM159 97h1v1h-1zM159 99h1v1h-1zM160 55h1v1h-1zM160 99h1v1h-1zM160 100h1v1h-1zM161 50h1v1h-1zM161 52h1v1h-1zM161 54h1v1h-1zM161 93h1v1h-1zM161 94h1v1h-1zM161 95h1v1h-1zM161 98h1v1h-1zM161 100h1v1h-1zM161 101h1v1h-1zM162 51h1v1h-1zM162 95h1v1h-1zM162 96h1v1h-1zM162 99h1v1h-1zM163 96h1v1h-1zM163 97h1v1h-1zM163 513h1v1h-1zM164 96h1v1h-1zM164 510h1v1h-1zM164 511h1v1h-1zM164 512h1v1h-1zM164 513h1v1h-1zM165 96h1v1h-1zM165 97h1v1h-1zM167 16h1v1h-1zM168 82h1v1h-1zM170 87h1v1h-1zM170 89h1v1h-1zM171 86h1v1h-1zM171 89h1v1h-1zM172 89h1v1h-1zM172 222h1v1h-1zM173 58h1v1h-1zM173 59h1v1h-1zM173 63h1v1h-1zM173 90h1v1h-1zM173 93h1v1h-1zM173 224h1v1h-1zM173 225h1v1h-1zM174 59h1v1h-1zM174 60h1v1h-1zM174 63h1v1h-1zM174 64h1v1h-1zM174 90h1v1h-1zM174 91h1v1h-1zM174 92h1v1h-1zM174 218h1v1h-1zM174 223h1v1h-1zM174 224h1v1h-1zM174 225h1v1h-1zM175 59h1v1h-1zM175 63h1v1h-1zM175 65h1v1h-1zM175 91h1v1h-1zM175 216h1v1h-1zM175 221h1v1h-1zM175 222h1v1h-1zM175 223h1v1h-1zM175 224h1v1h-1zM175 226h1v1h-1zM176 59h1v1h-1zM176 61h1v1h-1zM176 62h1v1h-1zM176 63h1v1h-1zM176 91h1v1h-1zM176 92h1v1h-1zM176 217h1v1h-1zM176 220h1v1h-1zM177 59h1v1h-1zM177 60h1v1h-1zM177 61h1v1h-1zM177 63h1v1h-1zM177 89h1v1h-1zM177 90h1v1h-1zM177 92h1v1h-1zM177 93h1v1h-1zM177 218h1v1h-1zM177 222h1v1h-1zM178 58h1v1h-1zM178 59h1v1h-1zM178 60h1v1h-1zM178 61h1v1h-1zM178 62h1v1h-1zM178 63h1v1h-1zM178 64h1v1h-1zM178 66h1v1h-1zM178 91h1v1h-1zM179 57h1v1h-1zM179 60h1v1h-1zM179 61h1v1h-1zM179 63h1v1h-1zM179 64h1v1h-1zM179 65h1v1h-1zM179 91h1v1h-1zM179 94h1v1h-1zM180 57h1v1h-1zM180 60h1v1h-1zM180 61h1v1h-1zM180 62h1v1h-1zM180 63h1v1h-1zM180 65h1v1h-1zM180 90h1v1h-1zM180 93h1v1h-1zM181 55h1v1h-1zM181 56h1v1h-1zM181 61h1v1h-1zM181 62h1v1h-1zM181 63h1v1h-1zM181 64h1v1h-1zM181 93h1v1h-1zM181 94h1v1h-1zM182 55h1v1h-1zM182 56h1v1h-1zM182 57h1v1h-1zM182 58h1v1h-1zM182 59h1v1h-1zM182 61h1v1h-1zM182 62h1v1h-1zM183 57h1v1h-1zM183 58h1v1h-1zM183 60h1v1h-1zM183 61h1v1h-1zM184 56h1v1h-1zM184 57h1v1h-1zM184 58h1v1h-1zM184 59h1v1h-1zM184 60h1v1h-1zM184 108h1v1h-1zM185 54h1v1h-1zM185 56h1v1h-1zM185 57h1v1h-1zM185 58h1v1h-1zM185 59h1v1h-1zM185 60h1v1h-1zM185 61h1v1h-1zM185 62h1v1h-1zM186 55h1v1h-1zM186 56h1v1h-1zM186 57h1v1h-1zM186 58h1v1h-1zM186 60h1v1h-1zM186 61h1v1h-1zM187 54h1v1h-1zM187 57h1v1h-1zM187 60h1v1h-1zM188 53h1v1h-1zM188 54h1v1h-1zM188 55h1v1h-1zM188 59h1v1h-1zM188 60h1v1h-1zM188 351h1v1h-1zM189 55h1v1h-1zM189 57h1v1h-1zM189 58h1v1h-1zM189 59h1v1h-1zM189 352h1v1h-1zM189 353h1v1h-1zM190 49h1v1h-1zM190 50h1v1h-1zM190 53h1v1h-1zM190 54h1v1h-1zM190 57h1v1h-1zM190 353h1v1h-1zM190 354h1v1h-1zM190 355h1v1h-1zM191 49h1v1h-1zM191 50h1v1h-1zM191 54h1v1h-1zM191 55h1v1h-1zM191 56h1v1h-1zM191 57h1v1h-1zM192 50h1v1h-1zM192 54h1v1h-1zM192 55h1v1h-1zM192 58h1v1h-1zM193 51h1v1h-1zM193 53h1v1h-1zM193 54h1v1h-1zM193 55h1v1h-1zM194 51h1v1h-1zM194 52h1v1h-1zM194 53h1v1h-1zM194 54h1v1h-1zM194 55h1v1h-1zM194 56h1v1h-1zM194 58h1v1h-1zM194 60h1v1h-1zM194 351h1v1h-1zM195 50h1v1h-1zM195 55h1v1h-1zM195 58h1v1h-1zM195 60h1v1h-1zM195 67h1v1h-1zM196 46h1v1h-1zM196 47h1v1h-1zM196 48h1v1h-1zM196 56h1v1h-1zM196 58h1v1h-1zM196 351h1v1h-1zM197 47h1v1h-1zM197 48h1v1h-1zM197 49h1v1h-1zM197 59h1v1h-1zM197 350h1v1h-1zM198 48h1v1h-1zM198 49h1v1h-1zM198 50h1v1h-1zM198 59h1v1h-1zM198 106h1v1h-1zM198 349h1v1h-1zM199 33h1v1h-1zM199 47h1v1h-1zM199 48h1v1h-1zM200 34h1v1h-1zM200 350h1v1h-1zM200 351h1v1h-1zM201 37h1v1h-1zM201 38h1v1h-1zM201 39h1v1h-1zM201 40h1v1h-1zM201 107h1v1h-1zM201 352h1v1h-1zM202 38h1v1h-1zM203 31h1v1h-1zM203 36h1v1h-1zM203 38h1v1h-1zM203 39h1v1h-1zM204 32h1v1h-1zM204 34h1v1h-1zM204 37h1v1h-1zM204 38h1v1h-1zM204 41h1v1h-1zM204 106h1v1h-1zM204 107h1v1h-1zM204 108h1v1h-1zM205 32h1v1h-1zM205 33h1v1h-1zM205 35h1v1h-1zM205 36h1v1h-1zM205 37h1v1h-1zM205 38h1v1h-1zM205 39h1v1h-1zM205 40h1v1h-1zM206 32h1v1h-1zM206 36h1v1h-1zM206 38h1v1h-1zM206 39h1v1h-1zM206 111h1v1h-1zM206 112h1v1h-1zM207 36h1v1h-1zM207 112h1v1h-1zM208 34h1v1h-1zM208 36h1v1h-1zM208 37h1v1h-1zM208 113h1v1h-1zM210 36h1v1h-1zM212 29h1v1h-1zM213 29h1v1h-1zM213 72h1v1h-1zM213 73h1v1h-1zM214 71h1v1h-1zM214 74h1v1h-1zM215 75h1v1h-1zM216 76h1v1h-1zM217 75h1v1h-1zM218 67h1v1h-1zM218 74h1v1h-1zM223 178h1v1h-1zM223 179h1v1h-1zM224 180h1v1h-1zM232 34h1v1h-1zM232 41h1v1h-1zM233 42h1v1h-1zM234 35h1v1h-1zM235 35h1v1h-1zM235 60h1v1h-1zM236 34h1v1h-1zM236 58h1v1h-1zM236 60h1v1h-1zM237 58h1v1h-1zM239 34h1v1h-1zM240 34h1v1h-1zM240 80h1v1h-1zM241 35h1v1h-1zM243 79h1v1h-1zM244 79h1v1h-1zM245 78h1v1h-1zM245 79h1v1h-1zM246 79h1v1h-1zM260 117h1v1h-1zM261 117h1v1h-1zM261 118h1v1h-1zM262 118h1v1h-1zM263 117h1v1h-1zM265 116h1v1h-1zM266 116h1v1h-1zM267 115h1v1h-1zM267 117h1v1h-1zM267 118h1v1h-1zM269 117h1v1h-1zM270 116h1v1h-1zM271 87h1v1h-1zM272 89h1v1h-1zM272 90h1v1h-1zM273 89h1v1h-1zM273 90h1v1h-1zM274 91h1v1h-1zM274 92h1v1h-1zM274 195h1v1h-1zM275 195h1v1h-1zM276 194h1v1h-1zM276 195h1v1h-1zM277 195h1v1h-1zM280 248h1v1h-1zM282 247h1v1h-1zM282 248h1v1h-1zM282 249h1v1h-1zM284 248h1v1h-1zM284 249h1v1h-1zM286 248h1v1h-1zM287 248h1v1h-1zM287 253h1v1h-1zM287 254h1v1h-1zM295 285h1v1h-1zM295 286h1v1h-1zM295 287h1v1h-1zM296 285h1v1h-1zM296 286h1v1h-1zM296 287h1v1h-1zM296 288h1v1h-1zM297 287h1v1h-1zM297 288h1v1h-1zM298 285h1v1h-1zM298 287h1v1h-1zM298 288h1v1h-1zM298 289h1v1h-1zM299 285h1v1h-1zM300 288h1v1h-1zM311 101h1v1h-1zM312 101h1v1h-1zM312 102h1v1h-1zM313 100h1v1h-1zM315 93h1v1h-1zM315 95h1v1h-1zM315 96h1v1h-1zM315 97h1v1h-1zM316 94h1v1h-1zM316 109h1v1h-1zM316 110h1v1h-1zM317 99h1v1h-1zM317 101h1v1h-1zM317 103h1v1h-1zM317 108h1v1h-1zM318 90h1v1h-1zM318 93h1v1h-1zM318 95h1v1h-1zM318 99h1v1h-1zM318 100h1v1h-1zM318 102h1v1h-1zM318 104h1v1h-1zM319 90h1v1h-1zM319 91h1v1h-1zM319 95h1v1h-1zM319 99h1v1h-1zM319 101h1v1h-1zM319 103h1v1h-1zM319 116h1v1h-1zM320 89h1v1h-1zM320 97h1v1h-1zM320 102h1v1h-1zM320 116h1v1h-1zM320 117h1v1h-1zM321 90h1v1h-1zM321 96h1v1h-1zM321 97h1v1h-1zM321 98h1v1h-1zM321 114h1v1h-1zM321 116h1v1h-1zM321 117h1v1h-1zM321 118h1v1h-1zM322 91h1v1h-1zM322 97h1v1h-1zM322 99h1v1h-1zM322 101h1v1h-1zM322 113h1v1h-1zM322 114h1v1h-1zM322 115h1v1h-1zM323 101h1v1h-1zM323 104h1v1h-1zM323 106h1v1h-1zM323 113h1v1h-1zM323 114h1v1h-1zM323 115h1v1h-1zM324 7h1v1h-1zM324 11h1v1h-1zM324 101h1v1h-1zM324 105h1v1h-1zM325 7h1v1h-1zM325 12h1v1h-1zM325 13h1v1h-1zM325 98h1v1h-1zM325 113h1v1h-1zM325 115h1v1h-1zM325 119h1v1h-1zM325 120h1v1h-1zM326 4h1v1h-1zM326 5h1v1h-1zM326 99h1v1h-1zM326 102h1v1h-1zM326 113h1v1h-1zM326 114h1v1h-1zM326 118h1v1h-1zM326 120h1v1h-1zM327 4h1v1h-1zM327 6h1v1h-1zM327 9h1v1h-1zM327 11h1v1h-1zM327 94h1v1h-1zM327 101h1v1h-1zM327 103h1v1h-1zM327 112h1v1h-1zM327 117h1v1h-1zM327 120h1v1h-1zM328 4h1v1h-1zM328 5h1v1h-1zM328 8h1v1h-1zM328 93h1v1h-1zM328 98h1v1h-1zM328 100h1v1h-1zM328 101h1v1h-1zM328 104h1v1h-1zM328 117h1v1h-1zM328 122h1v1h-1zM329 4h1v1h-1zM329 6h1v1h-1zM329 7h1v1h-1zM329 8h1v1h-1zM329 9h1v1h-1zM329 92h1v1h-1zM329 98h1v1h-1zM329 100h1v1h-1zM329 101h1v1h-1zM329 105h1v1h-1zM329 118h1v1h-1zM329 120h1v1h-1zM329 123h1v1h-1zM330 5h1v1h-1zM330 6h1v1h-1zM330 7h1v1h-1zM330 15h1v1h-1zM330 16h1v1h-1zM330 96h1v1h-1zM330 101h1v1h-1zM330 104h1v1h-1zM330 119h1v1h-1zM331 7h1v1h-1zM331 11h1v1h-1zM331 13h1v1h-1zM331 16h1v1h-1zM331 18h1v1h-1zM331 21h1v1h-1zM331 95h1v1h-1zM331 96h1v1h-1zM331 97h1v1h-1zM331 99h1v1h-1zM331 100h1v1h-1zM331 101h1v1h-1zM331 102h1v1h-1zM331 105h1v1h-1zM331 118h1v1h-1zM331 119h1v1h-1zM332 7h1v1h-1zM332 10h1v1h-1zM332 11h1v1h-1zM332 12h1v1h-1zM332 13h1v1h-1zM332 15h1v1h-1zM332 16h1v1h-1zM332 17h1v1h-1zM332 22h1v1h-1zM332 99h1v1h-1zM333 6h1v1h-1zM333 7h1v1h-1zM333 9h1v1h-1zM333 10h1v1h-1zM333 12h1v1h-1zM333 13h1v1h-1zM333 14h1v1h-1zM333 16h1v1h-1zM333 17h1v1h-1zM333 18h1v1h-1zM333 23h1v1h-1zM334 10h1v1h-1zM334 13h1v1h-1zM334 14h1v1h-1zM335 8h1v1h-1zM335 11h1v1h-1zM335 13h1v1h-1zM335 14h1v1h-1zM335 15h1v1h-1zM336 9h1v1h-1zM336 11h1v1h-1zM336 13h1v1h-1zM336 18h1v1h-1zM337 12h1v1h-1zM338 11h1v1h-1zM338 13h1v1h-1zM338 14h1v1h-1zM338 15h1v1h-1zM339 15h1v1h-1zM339 16h1v1h-1zM339 17h1v1h-1zM357 418h1v1h-1zM357 424h1v1h-1zM358 419h1v1h-1zM358 421h1v1h-1zM358 425h1v1h-1zM359 420h1v1h-1zM359 426h1v1h-1zM360 414h1v1h-1zM360 415h1v1h-1zM360 416h1v1h-1zM360 421h1v1h-1zM360 425h1v1h-1zM360 426h1v1h-1zM361 420h1v1h-1zM361 425h1v1h-1zM362 419h1v1h-1zM362 420h1v1h-1zM362 423h1v1h-1zM362 424h1v1h-1zM362 425h1v1h-1zM363 422h1v1h-1zM363 424h1v1h-1zM363 425h1v1h-1zM364 423h1v1h-1zM364 428h1v1h-1zM365 413h1v1h-1zM365 423h1v1h-1zM365 424h1v1h-1zM365 427h1v1h-1zM365 429h1v1h-1zM366 425h1v1h-1zM367 376h1v1h-1zM367 386h1v1h-1zM367 427h1v1h-1zM368 374h1v1h-1zM368 427h1v1h-1zM368 429h1v1h-1zM369 426h1v1h-1zM369 427h1v1h-1zM369 428h1v1h-1zM372 6h1v1h-1zM373 3h1v1h-1zM373 5h1v1h-1zM374 4h1v1h-1zM374 6h1v1h-1zM374 409h1v1h-1zM374 417h1v1h-1zM375 5h1v1h-1zM375 406h1v1h-1zM375 421h1v1h-1zM376 406h1v1h-1zM376 420h1v1h-1zM378 6h1v1h-1zM379 6h1v1h-1zM379 375h1v1h-1zM379 387h1v1h-1zM380 388h1v1h-1zM380 410h1v1h-1zM381 391h1v1h-1zM381 415h1v1h-1zM382 414h1v1h-1zM382 416h1v1h-1zM383 399h1v1h-1zM386 89h1v1h-1zM386 92h1v1h-1zM387 90h1v1h-1zM387 91h1v1h-1zM387 92h1v1h-1zM387 378h1v1h-1zM388 91h1v1h-1zM388 96h1v1h-1zM388 101h1v1h-1zM388 377h1v1h-1zM389 85h1v1h-1zM389 90h1v1h-1zM389 91h1v1h-1zM389 93h1v1h-1zM389 94h1v1h-1zM389 95h1v1h-1zM389 97h1v1h-1zM389 98h1v1h-1zM389 99h1v1h-1zM389 100h1v1h-1zM389 420h1v1h-1zM390 84h1v1h-1zM390 86h1v1h-1zM390 91h1v1h-1zM390 92h1v1h-1zM390 395h1v1h-1zM391 80h1v1h-1zM391 81h1v1h-1zM391 90h1v1h-1zM391 91h1v1h-1zM391 94h1v1h-1zM391 411h1v1h-1zM391 418h1v1h-1zM392 84h1v1h-1zM392 86h1v1h-1zM392 89h1v1h-1zM392 92h1v1h-1zM392 94h1v1h-1zM392 95h1v1h-1zM392 97h1v1h-1zM392 402h1v1h-1zM392 419h1v1h-1zM393 81h1v1h-1zM393 85h1v1h-1zM393 87h1v1h-1zM393 89h1v1h-1zM393 94h1v1h-1zM393 392h1v1h-1zM393 399h1v1h-1zM393 413h1v1h-1zM394 81h1v1h-1zM394 86h1v1h-1zM394 88h1v1h-1zM394 89h1v1h-1zM394 90h1v1h-1zM394 91h1v1h-1zM394 389h1v1h-1zM395 81h1v1h-1zM395 82h1v1h-1zM395 92h1v1h-1zM395 405h1v1h-1zM396 83h1v1h-1zM396 88h1v1h-1zM397 82h1v1h-1zM397 84h1v1h-1zM397 89h1v1h-1zM397 93h1v1h-1zM397 94h1v1h-1zM398 81h1v1h-1zM398 82h1v1h-1zM398 84h1v1h-1zM398 85h1v1h-1zM398 88h1v1h-1zM398 89h1v1h-1zM398 90h1v1h-1zM398 97h1v1h-1zM398 406h1v1h-1zM399 77h1v1h-1zM399 80h1v1h-1zM399 83h1v1h-1zM399 84h1v1h-1zM399 88h1v1h-1zM399 89h1v1h-1zM399 93h1v1h-1zM399 95h1v1h-1zM399 98h1v1h-1zM400 78h1v1h-1zM400 79h1v1h-1zM400 82h1v1h-1zM400 89h1v1h-1zM400 90h1v1h-1zM400 93h1v1h-1zM400 95h1v1h-1zM400 96h1v1h-1zM400 99h1v1h-1zM400 101h1v1h-1zM400 409h1v1h-1zM401 81h1v1h-1zM401 90h1v1h-1zM401 91h1v1h-1zM401 92h1v1h-1zM401 93h1v1h-1zM401 94h1v1h-1zM401 96h1v1h-1zM402 75h1v1h-1zM402 86h1v1h-1zM402 90h1v1h-1zM402 91h1v1h-1zM402 95h1v1h-1zM402 393h1v1h-1zM403 79h1v1h-1zM403 92h1v1h-1zM403 97h1v1h-1zM404 76h1v1h-1zM404 78h1v1h-1zM404 80h1v1h-1zM404 88h1v1h-1zM404 92h1v1h-1zM404 93h1v1h-1zM404 95h1v1h-1zM404 96h1v1h-1zM404 426h1v1h-1zM405 77h1v1h-1zM405 79h1v1h-1zM405 81h1v1h-1zM405 82h1v1h-1zM405 83h1v1h-1zM405 89h1v1h-1zM405 91h1v1h-1zM405 94h1v1h-1zM405 95h1v1h-1zM405 96h1v1h-1zM405 373h1v1h-1zM406 70h1v1h-1zM406 75h1v1h-1zM406 78h1v1h-1zM406 80h1v1h-1zM406 81h1v1h-1zM406 93h1v1h-1zM406 97h1v1h-1zM406 373h1v1h-1zM406 383h1v1h-1zM407 44h1v1h-1zM407 45h1v1h-1zM407 46h1v1h-1zM407 70h1v1h-1zM407 76h1v1h-1zM407 77h1v1h-1zM407 85h1v1h-1zM407 86h1v1h-1zM407 92h1v1h-1zM407 95h1v1h-1zM407 96h1v1h-1zM407 98h1v1h-1zM407 99h1v1h-1zM407 100h1v1h-1zM407 102h1v1h-1zM407 382h1v1h-1zM407 392h1v1h-1zM407 416h1v1h-1zM408 47h1v1h-1zM408 71h1v1h-1zM408 76h1v1h-1zM408 85h1v1h-1zM408 86h1v1h-1zM408 87h1v1h-1zM408 94h1v1h-1zM408 95h1v1h-1zM408 99h1v1h-1zM408 100h1v1h-1zM408 382h1v1h-1zM408 386h1v1h-1zM408 416h1v1h-1zM409 45h1v1h-1zM409 46h1v1h-1zM409 47h1v1h-1zM409 49h1v1h-1zM409 79h1v1h-1zM409 90h1v1h-1zM409 91h1v1h-1zM409 94h1v1h-1zM409 95h1v1h-1zM409 96h1v1h-1zM409 99h1v1h-1zM409 371h1v1h-1zM409 381h1v1h-1zM409 386h1v1h-1zM409 395h1v1h-1zM409 411h1v1h-1zM410 46h1v1h-1zM410 48h1v1h-1zM410 90h1v1h-1zM410 92h1v1h-1zM410 93h1v1h-1zM410 94h1v1h-1zM410 97h1v1h-1zM410 98h1v1h-1zM410 99h1v1h-1zM410 105h1v1h-1zM410 381h1v1h-1zM410 382h1v1h-1zM410 384h1v1h-1zM410 422h1v1h-1zM410 426h1v1h-1zM411 90h1v1h-1zM411 93h1v1h-1zM411 98h1v1h-1zM411 99h1v1h-1zM411 104h1v1h-1zM411 381h1v1h-1zM411 382h1v1h-1zM411 383h1v1h-1zM412 89h1v1h-1zM412 97h1v1h-1zM412 103h1v1h-1zM412 381h1v1h-1zM412 410h1v1h-1zM413 84h1v1h-1zM413 88h1v1h-1zM413 90h1v1h-1zM413 96h1v1h-1zM413 98h1v1h-1zM413 379h1v1h-1zM413 381h1v1h-1zM413 385h1v1h-1zM413 387h1v1h-1zM414 85h1v1h-1zM414 93h1v1h-1zM414 96h1v1h-1zM414 378h1v1h-1zM414 386h1v1h-1zM415 80h1v1h-1zM415 81h1v1h-1zM415 82h1v1h-1zM415 86h1v1h-1zM415 88h1v1h-1zM415 91h1v1h-1zM415 92h1v1h-1zM415 94h1v1h-1zM415 377h1v1h-1zM415 382h1v1h-1zM415 385h1v1h-1zM415 413h1v1h-1zM416 87h1v1h-1zM416 89h1v1h-1zM416 91h1v1h-1zM416 413h1v1h-1zM417 90h1v1h-1zM418 373h1v1h-1zM418 382h1v1h-1zM419 408h1v1h-1zM420 412h1v1h-1zM477 63h1v1h-1zM478 63h1v1h-1zM478 64h1v1h-1zM478 65h1v1h-1zM480 65h1v1h-1zM480 66h1v1h-1zM483 69h1v1h-1zM483 70h1v1h-1zM484 70h1v1h-1zM484 101h1v1h-1zM484 102h1v1h-1zM485 71h1v1h-1zM485 101h1v1h-1zM486 101h1v1h-1zM487 101h1v1h-1zM489 99h1v1h-1zM504 78h1v1h-1zM504 81h1v1h-1zM504 83h1v1h-1zM505 81h1v1h-1zM505 82h1v1h-1zM508 78h1v1h-1zM508 79h1v1h-1zM508 82h1v1h-1zM510 80h1v1h-1zM510 82h1v1h-1zM511 81h1v1h-1zM511 83h1v1h-1zM512 84h1v1h-1zM513 9h1v1h-1zM513 86h1v1h-1zM514 9h1v1h-1zM514 85h1v1h-1zM515 4h1v1h-1zM516 1h1v1h-1zM516 2h1v1h-1zM516 3h1v1h-1zM516 5h1v1h-1zM516 8h1v1h-1zM517 2h1v1h-1zM517 6h1v1h-1zM517 7h1v1h-1zM517 8h1v1h-1zM517 10h1v1h-1zM517 313h1v1h-1zM518 7h1v1h-1zM518 8h1v1h-1zM518 11h1v1h-1zM518 13h1v1h-1zM519 14h1v1h-1zM520 252h1v1h-1zM521 7h1v1h-1zM521 9h1v1h-1zM521 12h1v1h-1zM521 14h1v1h-1zM521 156h1v1h-1zM521 251h1v1h-1zM521 252h1v1h-1zM522 6h1v1h-1zM522 9h1v1h-1zM522 10h1v1h-1zM522 17h1v1h-1zM522 156h1v1h-1zM522 252h1v1h-1zM522 253h1v1h-1zM522 396h1v1h-1zM523 5h1v1h-1zM523 9h1v1h-1zM523 11h1v1h-1zM523 15h1v1h-1zM523 16h1v1h-1zM524 8h1v1h-1zM524 10h1v1h-1zM524 11h1v1h-1zM524 12h1v1h-1zM524 13h1v1h-1zM524 15h1v1h-1zM525 14h1v1h-1zM525 15h1v1h-1zM525 17h1v1h-1zM526 9h1v1h-1zM526 10h1v1h-1zM526 11h1v1h-1zM526 14h1v1h-1zM526 16h1v1h-1zM526 157h1v1h-1zM527 11h1v1h-1zM527 17h1v1h-1zM527 155h1v1h-1zM527 157h1v1h-1zM527 369h1v1h-1zM528 13h1v1h-1zM528 17h1v1h-1zM528 71h1v1h-1zM528 370h1v1h-1zM529 12h1v1h-1zM529 14h1v1h-1zM529 18h1v1h-1zM529 19h1v1h-1zM529 72h1v1h-1zM529 156h1v1h-1zM530 14h1v1h-1zM530 15h1v1h-1zM530 17h1v1h-1zM530 19h1v1h-1zM530 71h1v1h-1zM530 155h1v1h-1zM530 156h1v1h-1zM531 13h1v1h-1zM531 15h1v1h-1zM531 16h1v1h-1zM531 18h1v1h-1zM531 155h1v1h-1zM532 15h1v1h-1zM532 17h1v1h-1zM532 154h1v1h-1zM532 230h1v1h-1zM534 233h1v1h-1zM535 232h1v1h-1zM536 230h1v1h-1zM537 230h1v1h-1zM538 229h1v1h-1zM541 228h1v1h-1zM542 227h1v1h-1zM543 226h1v1h-1zM545 416h1v1h-1zM546 25h1v1h-1zM549 23h1v1h-1zM549 25h1v1h-1zM549 26h1v1h-1zM549 143h1v1h-1zM550 24h1v1h-1zM550 25h1v1h-1zM550 143h1v1h-1zM550 144h1v1h-1zM551 25h1v1h-1zM551 142h1v1h-1zM552 24h1v1h-1zM552 142h1v1h-1zM552 143h1v1h-1zM553 25h1v1h-1zM553 26h1v1h-1zM553 141h1v1h-1zM554 24h1v1h-1zM554 26h1v1h-1zM555 23h1v1h-1zM577 329h1v1h-1zM582 346h1v1h-1zM588 391h1v1h-1zM598 47h1v1h-1zM598 48h1v1h-1zM598 49h1v1h-1zM598 54h1v1h-1zM599 51h1v1h-1zM599 54h1v1h-1zM599 55h1v1h-1zM601 55h1v1h-1zM601 56h1v1h-1zM602 46h1v1h-1zM602 47h1v1h-1zM602 57h1v1h-1zM603 46h1v1h-1zM603 50h1v1h-1zM603 51h1v1h-1zM603 52h1v1h-1zM603 54h1v1h-1zM603 58h1v1h-1zM604 47h1v1h-1zM604 55h1v1h-1zM604 56h1v1h-1zM604 59h1v1h-1zM605 51h1v1h-1zM605 53h1v1h-1zM605 54h1v1h-1zM605 55h1v1h-1zM605 56h1v1h-1zM606 48h1v1h-1zM606 51h1v1h-1zM606 54h1v1h-1zM606 55h1v1h-1zM606 57h1v1h-1zM607 51h1v1h-1zM607 54h1v1h-1zM608 43h1v1h-1zM608 46h1v1h-1zM608 52h1v1h-1zM608 53h1v1h-1zM608 55h1v1h-1zM608 56h1v1h-1zM609 44h1v1h-1zM609 46h1v1h-1zM610 44h1v1h-1zM610 45h1v1h-1zM610 46h1v1h-1zM610 47h1v1h-1zM610 48h1v1h-1zM611 44h1v1h-1zM611 46h1v1h-1zM611 47h1v1h-1zM611 54h1v1h-1zM611 59h1v1h-1zM612 54h1v1h-1zM613 47h1v1h-1zM613 52h1v1h-1zM613 53h1v1h-1zM613 54h1v1h-1zM614 54h1v1h-1zM614 327h1v1h-1zM614 328h1v1h-1zM615 337h1v1h-1zM615 338h1v1h-1zM615 410h1v1h-1zM616 49h1v1h-1zM617 43h1v1h-1zM617 48h1v1h-1zM620 406h1v1h-1zM621 407h1v1h-1zM628 402h1v1h-1zM632 35h1v1h-1zM633 34h1v1h-1zM634 33h1v1h-1zM634 35h1v1h-1zM634 37h1v1h-1zM635 35h1v1h-1zM635 36h1v1h-1zM637 34h1v1h-1zM638 35h1v1h-1zM638 39h1v1h-1zM638 40h1v1h-1zM640 37h1v1h-1zM640 38h1v1h-1zM640 403h1v1h-1zM640 404h1v1h-1zM641 39h1v1h-1zM642 40h1v1h-1zM647 374h1v1h-1zM649 321h1v1h-1zM656 328h1v1h-1zM666 398h1v1h-1zM667 399h1v1h-1zM688 349h1v1h-1zM712 16h1v1h-1zM714 318h1v1h-1zM715 316h1v1h-1zM716 316h1v1h-1zM716 317h1v1h-1zM716 318h1v1h-1zM717 17h1v1h-1zM717 315h1v1h-1zM717 317h1v1h-1zM718 315h1v1h-1zM718 316h1v1h-1zM719 316h1v1h-1zM719 353h1v1h-1zM719 428h1v1h-1zM719 432h1v1h-1zM720 315h1v1h-1zM720 427h1v1h-1zM720 428h1v1h-1zM720 431h1v1h-1zM720 432h1v1h-1zM721 313h1v1h-1zM721 314h1v1h-1zM721 315h1v1h-1zM721 316h1v1h-1zM721 432h1v1h-1zM722 428h1v1h-1zM723 8h1v1h-1zM728 385h1v1h-1zM729 325h1v1h-1zM734 20h1v1h-1zM735 19h1v1h-1zM740 16h1v1h-1zM742 390h1v1h-1zM745 371h1v1h-1zM746 366h1v1h-1zM746 369h1v1h-1zM746 370h1v1h-1zM747 367h1v1h-1zM747 368h1v1h-1zM747 369h1v1h-1zM747 371h1v1h-1zM748 8h1v1h-1zM748 369h1v1h-1zM748 371h1v1h-1zM749 8h1v1h-1zM749 9h1v1h-1zM749 369h1v1h-1zM750 8h1v1h-1zM750 368h1v1h-1zM750 369h1v1h-1zM751 369h1v1h-1zM752 8h1v1h-1zM753 7h1v1h-1z"/><path transform="scale(1.17)" fill="#d9668a" d="M57 250h1v1h-1zM58 249h1v1h-1zM58 262h1v1h-1zM58 263h1v1h-1zM58 264h1v1h-1zM59 248h1v1h-1zM59 249h1v1h-1zM61 249h1v1h-1zM68 242h1v1h-1zM69 242h1v1h-1zM81 374h1v1h-1zM81 375h1v1h-1zM81 376h1v1h-1zM122 354h1v1h-1zM122 355h1v1h-1zM123 353h1v1h-1zM141 355h1v1h-1zM142 355h1v1h-1zM154 244h1v1h-1zM154 245h1v1h-1zM155 248h1v1h-1zM156 245h1v1h-1zM156 247h1v1h-1zM156 248h1v1h-1zM159 291h1v1h-1zM160 290h1v1h-1zM160 292h1v1h-1zM174 402h1v1h-1zM175 402h1v1h-1zM176 402h1v1h-1zM176 448h1v1h-1zM177 404h1v1h-1zM177 449h1v1h-1zM178 405h1v1h-1zM178 449h1v1h-1zM178 450h1v1h-1zM181 413h1v1h-1zM182 412h1v1h-1zM185 272h1v1h-1zM185 273h1v1h-1zM191 312h1v1h-1zM193 312h1v1h-1zM261 267h1v1h-1zM262 267h1v1h-1zM263 268h1v1h-1zM264 269h1v1h-1zM274 238h1v1h-1zM274 239h1v1h-1zM418 42h1v1h-1zM418 43h1v1h-1zM466 46h1v1h-1zM467 47h1v1h-1zM468 48h1v1h-1zM486 12h1v1h-1zM486 13h1v1h-1zM487 11h1v1h-1zM632 18h1v1h-1zM633 17h1v1h-1zM634 18h1v1h-1zM679 10h1v1h-1zM679 12h1v1h-1zM679 13h1v1h-1zM679 14h1v1h-1zM680 13h1v1h-1z"/></svg>
<div class="t" style="left:1349px;top:183px;height:22px;line-height:22px;">Layer Styling</div>
<svg class="i" style="left:1894px;top:188px" width="26" height="12" viewBox="0 0 26 12"><rect x="0.5" y="0.5" width="10.5" height="10.5" rx="2" fill="#f4f4f4" stroke="#555"/><rect x="4.6" y="2.6" width="4" height="4" rx="0.8" fill="none" stroke="#555" stroke-width="1.1"/><rect x="2.6" y="4.8" width="4" height="4" rx="0.8" fill="#f4f4f4" stroke="#555" stroke-width="1.1"/><rect x="14.5" y="0.5" width="10.5" height="10.5" rx="2" fill="#f4f4f4" stroke="#555"/><path d="M17 3L22.5 8.5M22.5 3L17 8.5" stroke="#444" stroke-width="1.9"/></svg>
<div class="btn" style="left:1348px;top:210px;width:570px;height:29px;"></div>
<svg class="i" style="left:1355.0px;top:217.0px;" width="14" height="14" viewBox="0 0 16 16"><rect x="1" y="1.500" width="13" height="13" fill="#c9d9ee"/><rect x="1" y="1.500" width="4.300" height="4.300" fill="#1f3352"/><rect x="9.700" y="1.500" width="4.300" height="4.300" fill="#1f3352"/><rect x="5.300" y="5.800" width="4.400" height="4.400" fill="#1f3352"/><rect x="1" y="10.200" width="4.300" height="4.300" fill="#1f3352"/><rect x="5.300" y="1.500" width="4.400" height="4.300" fill="#e8eef7"/><rect x="1" y="5.800" width="4.300" height="4.400" fill="#8fb0d8"/><rect x="9.700" y="5.800" width="4.300" height="4.400" fill="#8fb0d8"/><rect x="5.300" y="10.200" width="4.400" height="4.300" fill="#8fb0d8"/></svg>
<div class="t" style="left:1373px;top:211px;height:27px;line-height:27px;">Reclassified raster</div>
<svg class="i" style="left:1902px;top:221.5px" width="8" height="5" viewBox="0 0 8 5"><path d="M0 0H8L4 4.5Z" fill="#444"/></svg>
<div style="left:1348px;top:246px;width:38px;height:723px;background:#5e5e5e"></div>
<div style="left:1348px;top:246px;width:38px;height:31px;background:#efefef"></div>
<svg class="i" style="left:1355.0px;top:250.0px;" width="22" height="22" viewBox="0 0 16 16"><path d="M1 9L5 3.500L11 6L7.500 12.500Z" fill="#7fb0e0"/><path d="M5 3.500L9 1.500L13.500 4L11 6Z" fill="#f2d24a"/><path d="M1 9L7.500 12.500L6.500 14.500L1.500 11Z" fill="#e23b3b"/><path d="M6 7.500L10 5.500L12.500 10L8.500 13.500Z" fill="#e8c07a" stroke="#c49a4c" stroke-width=".6"/><path d="M11 7.500L15.500 1.500" stroke="#d9982c" stroke-width="1.800" stroke-linecap="round"/></svg>
<svg class="i" style="left:1352.0px;top:283.0px;" width="22" height="22" viewBox="0 0 24 24"><rect x="2" y="2" width="20" height="15" fill="#c8d8ea"/><path d="M3 15C7 6 13 4 21 3V16H3Z" fill="#7f9fc6" opacity=".75"/><path d="M2 2V20" stroke="#f4f4f4" stroke-width="1.500"/><path d="M2 19H22" stroke="#ddd" stroke-width="1.200"/><path d="M2 21.500H22" stroke="#f2f2f2" stroke-width="1.400"/></svg>
<svg class="i" style="left:1352.0px;top:313.0px;" width="22" height="22" viewBox="0 0 24 24"><path d="M2 4H4V19H22V22H2Z" fill="#d8d8d8"/><rect x="4.500" y="5.500" width="17" height="13" fill="#f0f0f0" stroke="#c4c4c4"/><path d="M5.500 15L9 9.500L13 13L16.500 10L21 15" fill="none" stroke="#444" stroke-width="1"/></svg>
<svg class="i" style="left:1351.5px;top:345.5px;" width="23" height="23" viewBox="0 0 24 24"><rect x="8" y="1" width="9" height="7" fill="#e8554e"/><rect x="1" y="15" width="9" height="7" fill="#f5d64a"/><rect x="14" y="15" width="9" height="7" fill="#8fbcf0"/><path d="M12.500 8V15M5.500 15V9.500H19.500V15" fill="none" stroke="#e9a23b" stroke-width="2.200"/></svg>
<svg class="i" style="left:1353.5px;top:379.0px;" width="20" height="20" viewBox="0 0 24 24"><path d="M3 9C3 4 8 3 11 5V2L16 7L11 12V9C8 8 6 10 7 13Z" fill="#5fb36a"/><path d="M21 15C21 11 16 10 13 12V9L8 14L13 19V16C16 15 18 17 17 20Z" fill="#f08a3c"/></svg>
<div style="left:1388px;top:246px;width:516px;height:674px;overflow:hidden">
<div class="btn" style="left:1px;top:5px;width:530px;height:30px;"></div>
<div class="t" style="left:26px;top:6px;height:28px;line-height:28px;">Paletted/Unique values</div>
<svg class="i" style="left:7.0px;top:12.0px;" width="16" height="16" viewBox="0 0 16 16"><rect x="1.500" y="1.500" width="4" height="4" fill="#2f8fd8" stroke="#1c5f96" stroke-width=".8"/><rect x="1.500" y="6.500" width="4" height="4" fill="#2fa05a" stroke="#1c6e3a" stroke-width=".8"/><rect x="1.500" y="11.500" width="4" height="4" fill="#a01515" stroke="#6e0c0c" stroke-width=".8"/><path d="M7.500 3.500H14M7.500 8.500H11.500M7.500 13.500H14" stroke="#999" stroke-width="1"/></svg>
<div class="t" style="left:2px;top:43px;height:26px;line-height:26px;">Band</div>
<div class="btn" style="left:109px;top:42px;width:430px;height:29px;"></div>
<div class="t" style="left:114px;top:43px;height:27px;line-height:27px;">Band 1 (Gray)</div>
<div class="t" style="left:2px;top:79px;height:26px;line-height:26px;">Color ramp</div>
<div class="btn" style="left:109px;top:77px;width:430px;height:30px;"></div>
<div class="t" style="left:109px;top:78px;height:28px;line-height:28px;width:430px;text-align:center;font-family:'Liberation Sans',sans-serif;font-size:14px;-webkit-text-stroke:0">Random colors</div>
<div style="left:1px;top:114px;width:530px;height:279px;border:1px solid #b9b9b9;background:#fff"></div>
<div style="left:2px;top:115px;width:530px;height:25px;background:linear-gradient(#fbfbfb,#ededed);border-bottom:1px solid #c4c4c4"></div>
<div style="left:101px;top:115px;width:1px;height:25px;background:#cfcfcf"></div>
<div style="left:160px;top:115px;width:1px;height:25px;background:#cfcfcf"></div>
<div class="t" style="left:4px;top:115px;height:25px;line-height:25px;">Value</div>
<div class="t" style="left:104px;top:115px;height:25px;line-height:25px;">Color</div>
<div class="t" style="left:164px;top:115px;height:25px;line-height:25px;">Label</div>
<div class="t" style="left:25px;top:148px;height:26px;line-height:26px;">1</div>
<div style="left:111px;top:141px;width:40px;height:40px;background:#e0658a;border-radius:5px"></div>
<div class="t" style="left:164px;top:148px;height:26px;line-height:26px;">1</div>
<div class="t" style="left:25px;top:190px;height:26px;line-height:26px;">2</div>
<div style="left:111px;top:183px;width:40px;height:40px;background:#57cd2c;border-radius:5px"></div>
<div class="t" style="left:164px;top:190px;height:26px;line-height:26px;">2</div>
<div class="t" style="left:25px;top:232px;height:26px;line-height:26px;">3</div>
<div style="left:111px;top:225px;width:40px;height:40px;background:#3661e6;border-radius:5px"></div>
<div class="t" style="left:164px;top:232px;height:26px;line-height:26px;">3</div>
<div class="btn" style="left:1px;top:399px;width:216px;height:30px;"></div>
<div class="t" style="left:1px;top:400px;height:28px;line-height:28px;width:216px;text-align:center">Classify</div>
<div class="btn" style="left:223px;top:399px;width:28px;height:30px;"></div>
<div class="btn" style="left:257px;top:399px;width:28px;height:30px;"></div>
<svg class="i" style="left:230.0px;top:407.0px;" width="14" height="14" viewBox="0 0 16 16"><path d="M6 2H10V6H14V10H10V14H6V10H2V6H6Z" fill="#d7ecd2" stroke="#4d9a42" stroke-width="1.200" stroke-linejoin="round"/></svg>
<svg class="i" style="left:264.0px;top:407.0px;" width="14" height="14" viewBox="0 0 16 16"><rect x="2" y="6" width="12" height="4" rx="1" fill="#f3c9c9" stroke="#d23a3a" stroke-width="1.200"/></svg>
<div class="btn" style="left:291px;top:399px;width:216px;height:30px;"></div>
<div class="t" style="left:291px;top:400px;height:28px;line-height:28px;width:216px;text-align:center">Delete All</div>
<div class="btn" style="left:513px;top:399px;width:40px;height:30px;"></div>
<div class="t" style="left:6px;top:436px;height:26px;line-height:26px;font-weight:bold">Layer Rendering</div>
<div style="left:2px;top:461px;width:560px;height:230px;border:1px solid #d4d4d4;background:#ebebeb;border-radius:3px"></div>
<div class="t" style="left:13px;top:474px;height:26px;line-height:26px;">Blending mode</div>
<div class="btn" style="left:152px;top:472px;width:400px;height:29px;"></div>
<div class="t" style="left:157px;top:474px;height:27px;line-height:27px;">Normal</div>
<div class="t" style="left:13px;top:510px;height:26px;line-height:26px;">Brightness</div>
<div style="left:153px;top:520px;width:266px;height:5px;border:1px solid #b5b5b5;border-radius:3px;background:#dcdcdc"></div>
<div style="left:153px;top:520px;width:133px;height:5px;border:1px solid #2a7ab8;border-radius:3px;background:#3e9ade"></div>
<div style="left:280px;top:516px;width:13px;height:13px;border:1px solid #a8a8a8;border-radius:3px;background:linear-gradient(#ffffff,#e8e8e8)"></div>
<div class="inp" style="left:426px;top:509px;width:120px;height:28px;"></div>
<div class="t" style="left:431px;top:510px;height:26px;line-height:26px;">0</div>
<div class="t" style="left:13px;top:546px;height:26px;line-height:26px;">Saturation</div>
<div style="left:153px;top:556px;width:266px;height:5px;border:1px solid #b5b5b5;border-radius:3px;background:#dcdcdc"></div>
<div style="left:153px;top:556px;width:133px;height:5px;border:1px solid #2a7ab8;border-radius:3px;background:#3e9ade"></div>
<div style="left:280px;top:552px;width:13px;height:13px;border:1px solid #a8a8a8;border-radius:3px;background:linear-gradient(#ffffff,#e8e8e8)"></div>
<div class="inp" style="left:426px;top:545px;width:120px;height:28px;"></div>
<div class="t" style="left:431px;top:546px;height:26px;line-height:26px;">0</div>
<div class="t" style="left:13px;top:582px;height:26px;line-height:26px;">Contrast</div>
<div style="left:153px;top:592px;width:266px;height:5px;border:1px solid #b5b5b5;border-radius:3px;background:#dcdcdc"></div>
<div style="left:153px;top:592px;width:133px;height:5px;border:1px solid #2a7ab8;border-radius:3px;background:#3e9ade"></div>
<div style="left:280px;top:588px;width:13px;height:13px;border:1px solid #a8a8a8;border-radius:3px;background:linear-gradient(#ffffff,#e8e8e8)"></div>
<div class="inp" style="left:426px;top:581px;width:120px;height:28px;"></div>
<div class="t" style="left:431px;top:582px;height:26px;line-height:26px;">0</div>
<div class="t" style="left:13px;top:618px;height:26px;line-height:26px;">Gamma</div>
<div style="left:153px;top:628px;width:266px;height:5px;border:1px solid #b5b5b5;border-radius:3px;background:#dcdcdc"></div>
<div style="left:153px;top:628px;width:29px;height:5px;border:1px solid #2a7ab8;border-radius:3px;background:#3e9ade"></div>
<div style="left:176px;top:624px;width:13px;height:13px;border:1px solid #a8a8a8;border-radius:3px;background:linear-gradient(#ffffff,#e8e8e8)"></div>
<div class="inp" style="left:426px;top:617px;width:120px;height:28px;"></div>
<div class="t" style="left:431px;top:618px;height:26px;line-height:26px;">1.00</div>
<div class="cb" style="left:152px;top:659px;width:14px;height:14px;"></div>
<div class="t" style="left:171px;top:653px;height:26px;line-height:26px;">Invert colors</div>
</div>
<div style="left:1904px;top:251px;width:14px;height:669px;background:#dbdbdb;border-left:1px solid #b9b9b9"></div>
<div style="left:1905px;top:251px;width:13px;height:13px;background:#efefef;border-bottom:1px solid #c4c4c4"></div>
<div style="left:1905px;top:906px;width:13px;height:14px;background:#efefef"></div>
<div style="left:1905px;top:264px;width:13px;height:421px;background:linear-gradient(90deg,#f7f7f7,#ededed);border:1px solid #cdcdcd;border-left:none;border-top:none"></div>
<svg class="i" style="left:1907px;top:254.5px" width="9" height="5" viewBox="0 0 9 5"><path d="M0 5H9L4.5 0Z" fill="#444"/></svg>
<svg class="i" style="left:1907px;top:910px" width="9" height="5" viewBox="0 0 9 5"><path d="M0 0H9L4.5 5Z" fill="#444"/></svg>
<div style="left:1389px;top:921px;width:515px;height:13px;background:#d9d9d9"></div>
<div style="left:1389px;top:921px;width:14px;height:13px;background:#efefef"></div>
<div style="left:1890px;top:921px;width:14px;height:13px;background:#efefef"></div>
<div style="left:1403px;top:921px;width:455px;height:13px;background:linear-gradient(#f6f6f6,#e9e9e9);border:1px solid #c4c4c4"></div>
<svg class="i" style="left:1393px;top:923px" width="5" height="9" viewBox="0 0 5 9"><path d="M5 0V9L0 4.5Z" fill="#444"/></svg>
<svg class="i" style="left:1894px;top:923px" width="5" height="9" viewBox="0 0 5 9"><path d="M0 0V9L5 4.5Z" fill="#444"/></svg>
<div class="btn" style="left:1389px;top:942px;width:24px;height:24px;"></div>
<div class="btn" style="left:1419px;top:942px;width:24px;height:24px;"></div>
<svg class="i" style="left:1393.0px;top:946.0px;" width="16" height="16" viewBox="0 0 16 16"><path d="M1.500 6L6.500 1.500V4.500C12 4.500 14 9 11.500 13.500H8C10.500 10.500 10 8 6.500 8V10.500Z" fill="#ee7f3a"/></svg>
<svg class="i" style="left:1423.0px;top:946.0px;" width="16" height="16" viewBox="0 0 16 16"><path d="M14.500 6L9.500 1.500V4.500C4 4.500 2 9 4.500 13.500H8C5.500 10.500 6 8 9.500 8V10.500Z" fill="#74b77c"/></svg>
<div style="left:1694px;top:947px;width:14px;height:14px;border:1px solid #b5b5b5;background:#fff;border-radius:2px"></div>
<svg class="i" style="left:1694px;top:947px" width="14" height="14" viewBox="0 0 14 14"><path d="M3.2 7.2L5.8 10.4L10.8 3.4" fill="none" stroke="#000" stroke-width="1.9" stroke-linecap="round" stroke-linejoin="round"/></svg>
<div class="t" style="left:1713px;top:942px;height:26px;line-height:26px;">Live update</div>
<div class="btn" style="left:1838px;top:940px;width:79px;height:29px;"></div>
<svg class="i" style="left:1842.0px;top:946.0px;" width="16" height="16" viewBox="0 0 16 16"><path d="M1.500 8.500L4 7.500L6.500 11C8.500 6.500 11 3 14.500 0.500L15.500 1.500C12 5 9.500 9.500 7.500 15H5.500C4.500 12.500 3 10.500 1.500 8.500Z" fill="#6a9f4c" stroke="#4a7a34" stroke-width=".5"/></svg>
<div class="t" style="left:1859px;top:942px;height:27px;line-height:27px;">Apply</div>
<div style="left:1345px;top:975px;width:209px;height:29px;border:1px solid #c6c6c6;border-top:none;border-radius:0 0 3px 3px;background:linear-gradient(#dddddd,#e6e6e6)"></div>
<div style="left:1553px;top:973px;width:156px;height:33px;border:1px solid #c0c0c0;border-top:none;border-radius:0 0 3px 3px;background:#f3f3f3"></div>
<div class="t" style="left:1357px;top:976px;height:26px;line-height:26px;">Processing Toolbox</div>
<div class="t" style="left:1565px;top:977px;height:26px;line-height:26px;">Layer Styling</div>
<div style="left:410px;top:588px;width:1px;height:18px;background-image:linear-gradient(#bdbdbd 1px,transparent 1px);background-size:1px 3px"></div>
<div style="left:1342px;top:588px;width:1px;height:18px;background-image:linear-gradient(#bdbdbd 1px,transparent 1px);background-size:1px 3px"></div>
<div style="left:1px;top:1007px;width:1920px;height:1px;background:#bdbdbd"></div>
<div style="left:1px;top:1008px;width:1920px;height:37px;background:linear-gradient(#f6f6f6,#f1f1f1)"></div>
<div class="hv" style="left:5.5px;top:1017.5px;height:18px"></div>
<div class="hv" style="left:54.5px;top:1017.5px;height:18px"></div>
<div class="hv" style="left:103.5px;top:1017.5px;height:18px"></div>
<svg class="i" style="left:18.0px;top:1014.0px;" width="24" height="24" viewBox="0 0 24 24"><ellipse cx="12" cy="11" rx="11.500" ry="10.500" fill="#b9cde6" stroke="#5d87ba" stroke-width="1"/><path d="M3 8L7 5L11 6L10 9L6 11L4 11ZM13 4L18 4.500L21 9L17 10L13 8ZM8 12L13 11L14 14L10 16ZM16 12L20 12L19 15L16 14Z" fill="#2d4b73"/><ellipse cx="12" cy="11" rx="5" ry="10.500" fill="none" stroke="#5d87ba" stroke-width=".7"/><path d="M0.500 11H23.500M2 6H22" stroke="#5d87ba" stroke-width=".7"/><path d="M8.500 15L6.500 19.500M17.500 15L19.500 19.500M10 15.500H16V19H10Z" stroke="#000" stroke-width="2.400" fill="#000"/><ellipse cx="8.500" cy="21" rx="4" ry="2.500" fill="#fff" stroke="#000" stroke-width="1.700"/><ellipse cx="17.500" cy="21" rx="4" ry="2.500" fill="#fff" stroke="#000" stroke-width="1.700"/></svg>
<svg class="i" style="left:67.0px;top:1014.0px;" width="24" height="24" viewBox="0 0 24 24"><path d="M1.500 5V19.500C1.500 23.500 22.500 23.500 22.500 19.500V5Z" fill="#5d87ba" stroke="#3f679b"/><path d="M1.500 10C1.500 13.500 22.500 13.500 22.500 10M1.500 15C1.500 18.500 22.500 18.500 22.500 15" fill="none" stroke="#3f679b" stroke-width="1"/><path d="M17 7V22" stroke="#86a9d3" stroke-width="4" opacity=".5"/><ellipse cx="12" cy="5" rx="10.500" ry="3.500" fill="#86a9d3" stroke="#3f679b"/></svg>
<svg class="i" style="left:116.0px;top:1014.0px;" width="24" height="24" viewBox="0 0 24 24"><path d="M11 2C7 2 7 4 7 5.500V8H12V9H4.500C2 9 1.500 11.500 1.500 13C1.500 15 2.500 17 4.500 17H7V14.500C7 12.500 8 11.500 10 11.500H14C16 11.500 16.500 10 16.500 9V5.500C16.500 3 14.500 2 11 2Z" fill="#3a7fb3"/><circle cx="9" cy="4.800" r="1" fill="#fff"/><path d="M12 22C16 22 16 20 16 18.500V16H11V15H18.500C21 15 21.500 12.500 21.500 11C21.500 9 20.500 7 18.500 7H16.500V9.500C16.500 11.500 15.500 12.500 13.500 12.500H9.500C7.500 12.500 7 14 7 15V18.500C7 21 9 22 12 22Z" fill="#fbd043"/><path d="M17 18L22.500 20.500L17 23" fill="none" stroke="#333" stroke-width="1.300"/></svg>
<svg class="i" style="left:149.0px;top:1014.0px;" width="24" height="24" viewBox="0 0 24 24"><circle cx="12" cy="12" r="11.500" fill="#1c1e5c"/><circle cx="12" cy="12" r="9.500" fill="#0a0a0a"/><path d="M3.500 10C6 6 12 6 16 10C19 14 18 19 14 21C8 22 3 17 3.500 10Z" fill="#2d7bd0"/><path d="M5 11C7 9 10 9.500 12 12C14 15 13 18 11 19.500C8 19.500 5 15 5 11Z" fill="#3f8f3a"/><circle cx="17" cy="7" r="1.300" fill="#f4f4f4"/></svg>
<div style="left:1px;top:1045px;width:1920px;height:1px;background:#b4b4b4"></div>
<div class="inp" style="left:5px;top:1049px;width:270px;height:30px;"></div>
<svg class="i" style="left:12.0px;top:1057.0px;" width="14" height="14" viewBox="0 0 16 16"><circle cx="6.500" cy="6.500" r="4.500" fill="none" stroke="#a8a8a8" stroke-width="1.500"/><path d="M10 10L14.500 14.500" stroke="#a8a8a8" stroke-width="1.800" stroke-linecap="round"/></svg>
<div class="t" style="left:35px;top:1052px;height:26px;line-height:26px;">Reclassify by Table</div>
<svg class="i" style="left:253.0px;top:1057.0px;" width="14" height="14" viewBox="0 0 16 16"><path d="M5 3H14.500Q15.500 3 15.500 4V12Q15.500 13 14.500 13H5L0.500 8Z" fill="#a9a9a9"/><path d="M7 5.500L12 10.500M12 5.500L7 10.500" stroke="#fff" stroke-width="1.500"/></svg>
<div class="t" style="left:284px;top:1052px;height:26px;line-height:26px;width:443px;overflow:hidden">Saved project to: /mnt/data/training/2023/QGIS</div>
<div class="t" style="left:735px;top:1052px;height:26px;line-height:26px;">Coordinate</div>
<div class="inp" style="left:841px;top:1049px;width:154px;height:30px;"></div>
<div class="t" style="left:847px;top:1052px;height:26px;line-height:26px;">359271,1857016</div>
<svg class="i" style="left:999.0px;top:1055.0px;" width="16" height="16" viewBox="0 0 16 16"><ellipse cx="7" cy="6" rx="3.500" ry="5" fill="#fff" stroke="#222" stroke-width="1.300" transform="rotate(-20 7 6)"/><path d="M7 2V6.500" stroke="#222" stroke-width="1.500"/><ellipse cx="9.500" cy="11.500" rx="4" ry="3" fill="#fff" stroke="#222" stroke-width="1.400" transform="rotate(-20 9.500 11.500)"/><circle cx="9.500" cy="11.500" r="1" fill="#222"/><path d="M1 10L4 8M12 3L14 1.500" stroke="#222" stroke-width=".8"/></svg>
<div class="t" style="left:1029px;top:1052px;height:26px;line-height:26px;">Scale</div>
<div class="inp" style="left:1083px;top:1049px;width:118px;height:30px;"></div>
<div class="t" style="left:1088px;top:1052px;height:26px;line-height:26px;">1:119776</div>
<div style="left:1180px;top:1050px;width:20px;height:28px;background:linear-gradient(#f8f8f8,#e6e6e6);border-left:1px solid #c8c8c8;border-radius:0 2px 2px 0"></div>
<svg class="i" style="left:1185.5px;top:1061.5px" width="8" height="5" viewBox="0 0 8 5"><path d="M0 0H8L4 4.5Z" fill="#444"/></svg>
<svg class="i" style="left:1211.0px;top:1057.0px;" width="14" height="14" viewBox="0 0 16 16"><path d="M4.500 7V5A3.500 3.500 0 0 1 11.500 5V7" fill="none" stroke="#666" stroke-width="1.700"/><rect x="2" y="7" width="12" height="8" rx="1" fill="#666"/></svg>
<div class="t" style="left:1234px;top:1052px;height:26px;line-height:26px;">Magnifier</div>
<div class="inp" style="left:1329px;top:1049px;width:93px;height:30px;"></div>
<div class="t" style="left:1334px;top:1052px;height:26px;line-height:26px;">100%</div>
<div style="left:1408px;top:1050px;width:13px;height:28px;background:linear-gradient(#f8f8f8,#e8e8e8);border-left:1px solid #cfcfcf;border-radius:0 2px 2px 0"></div>
<div class="t" style="left:1432px;top:1052px;height:26px;line-height:26px;">Rotation</div>
<div class="inp" style="left:1523px;top:1049px;width:116px;height:30px;"></div>
<div class="t" style="left:1528px;top:1052px;height:26px;line-height:26px;">0.0 °</div>
<div style="left:1624px;top:1050px;width:14px;height:28px;background:linear-gradient(#f8f8f8,#e8e8e8);border-left:1px solid #cfcfcf;border-radius:0 2px 2px 0"></div>
<svg class="i" style="left:1411.5px;top:1056px" width="7" height="16" viewBox="0 0 7 16"><path d="M0 5H7L3.5 1Z M0 11H7L3.5 15Z" fill="#444"/></svg>
<svg class="i" style="left:1628.0px;top:1056px" width="7" height="16" viewBox="0 0 7 16"><path d="M0 5H7L3.5 1Z M0 11H7L3.5 15Z" fill="#444"/></svg>
<div style="left:1645px;top:1057px;width:14px;height:14px;border:1px solid #b5b5b5;background:#fff;border-radius:2px"></div>
<svg class="i" style="left:1645px;top:1057px" width="14" height="14" viewBox="0 0 14 14"><path d="M3.2 7.2L5.8 10.4L10.8 3.4" fill="none" stroke="#000" stroke-width="1.9" stroke-linecap="round" stroke-linejoin="round"/></svg>
<div class="t" style="left:1663px;top:1052px;height:26px;line-height:26px;">Render</div>
<svg class="i" style="left:1740.0px;top:1056.0px;" width="16" height="16" viewBox="0 0 16 16"><circle cx="8" cy="8" r="7" fill="#e8e8e8" stroke="#777" stroke-width="1.100"/><ellipse cx="8" cy="8" rx="3" ry="7" fill="none" stroke="#777" stroke-width=".9"/><path d="M1 8H15M2 4.500H14M2 11.500H14M8 1V15" stroke="#777" stroke-width=".9"/></svg>
<div class="t" style="left:1758px;top:1052px;height:26px;line-height:26px;">EPSG:32651</div>
<svg class="i" style="left:1897.0px;top:1056.0px;" width="16" height="16" viewBox="0 0 16 16"><path d="M8 1C12.500 1 15.500 3.500 15.500 7C15.500 9 14.500 10.500 13 11.500L14.500 15L10 12.800C9.400 12.900 8.700 13 8 13C3.500 13 0.500 10.500 0.500 7C0.500 3.500 3.500 1 8 1Z" fill="#6e6e6e"/><circle cx="4.500" cy="7" r="1.100" fill="#fff"/><circle cx="8" cy="7" r="1.100" fill="#fff"/><circle cx="11.500" cy="7" r="1.100" fill="#fff"/></svg></body></html>
